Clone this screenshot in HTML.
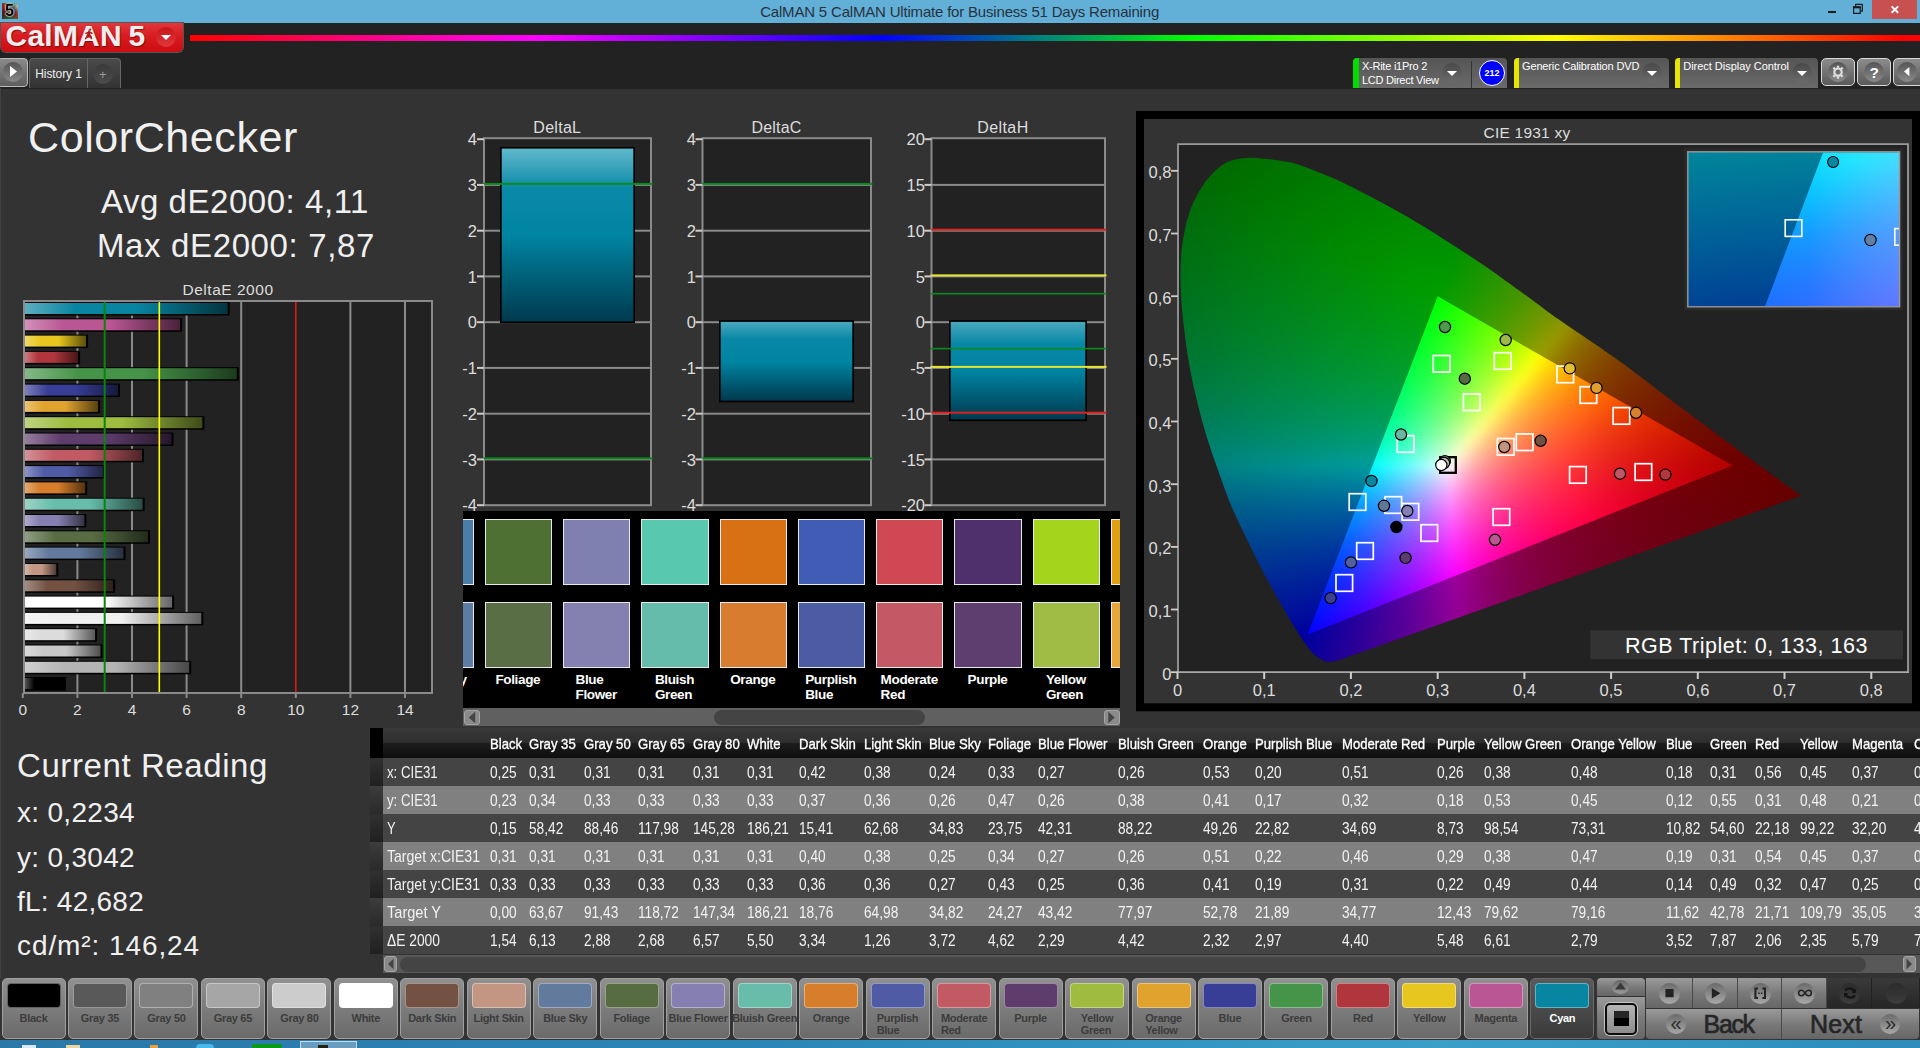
<!DOCTYPE html><html><head><meta charset="utf-8"><title>CalMAN 5</title><style>
html,body{margin:0;padding:0;background:#333;}
body{width:1920px;height:1048px;overflow:hidden;position:relative;font-family:"Liberation Sans",sans-serif;color:#e6e6e6;}
.a{position:absolute;}
.t{position:absolute;white-space:nowrap;line-height:1;}
svg{position:absolute;left:0;top:0;overflow:visible;}
svg text{font-family:"Liberation Sans",sans-serif;}
</style></head><body><div class="a" style="left:0;top:0;width:1920px;height:23px;background:#62afd8"></div><div class="a" style="left:2px;top:3px;width:16px;height:16px;background:radial-gradient(circle,rgba(10,10,10,.85) 25%,rgba(10,10,10,.2) 75%),conic-gradient(from -60deg,#c22,#2a4,#ddd,#c33,#293,#622,#c22);"></div><div class="t" style="left:5px;top:3px;font-size:16px;font-weight:bold;color:#000;text-shadow:0 0 2px #fff,0 0 2px #fff,0 0 1px #fff;">5</div><div class="t" style="left:760.2px;top:4.4px;font-size:15px;color:#28323c;letter-spacing:-0.19px;">CalMAN 5 CalMAN Ultimate for Business 51 Days Remaining</div><div class="a" style="left:1827.8px;top:10.8px;width:8.2px;height:2.3px;background:#1a1a1a"></div><svg width="1920" height="23"><path d="M1853.6 7.6h6.6v5.7h-6.6z" fill="none" stroke="#1a1a1a" stroke-width="1.2"/><path d="M1853 6.1h7.8v2h-7.8z" fill="#1a1a1a"/><path d="M1855.6 6v-1.600h6.700v6.700h-1.600" fill="none" stroke="#1a1a1a" stroke-width="1.2"/></svg><div class="a" style="left:1872px;top:0;width:45px;height:18.8px;background:#c75050"></div><svg width="1920" height="23"><path d="M1891.600 6.400l6.600 6.400M1898.200 6.400l-6.600 6.400" stroke="#fff" stroke-width="2"/></svg>
<div class="a" style="left:0;top:23px;width:1920px;height:65.8px;background:#222"></div><div class="a" style="left:1px;top:23px;width:182px;height:29px;border-radius:0 0 5px 5px;background:linear-gradient(#e0383c,#d81c20 45%,#cc0c10);box-shadow:0 0 0 1px #555;"></div><div class="t" style="left:5.6px;top:20.9px;font-size:30px;font-weight:bold;color:#eee;letter-spacing:0.2px;text-shadow:1px 1px 1px rgba(0,0,0,.4);">CalMAN</div><div class="t" style="left:128.5px;top:20.9px;font-size:30px;font-weight:bold;color:#eee;text-shadow:1px 1px 1px rgba(0,0,0,.4);">5</div><svg width="2" height="60"><g stroke="#b01818" stroke-width="1.5" fill="none" stroke-linecap="round"><circle cx="90.2" cy="29.6" r="1.1" fill="#b01818" stroke="none"/><path d="M89.500 31.4L88.200 35.2M86 33.4l3-1.400 3 1.2M88.200 35.2l-2.600 3.4M88.200 35.2l2.800 1.400.4 2"/></g></svg><div class="a" style="left:156px;top:27px;width:20px;height:20px;border-radius:50%;background:linear-gradient(#c8141c,#e0383c)"></div><svg width="200" height="60"><path d="M161 35h10l-5 5z" fill="#fff"/></svg><div class="a" style="left:190px;top:35px;width:1730px;height:5.5px;background:linear-gradient(90deg,#f00 0%,#f0f 20%,#00f 40%,#0f0 58%,#ff0 79%,#f00 99%)"></div>
<div class="a" style="left:-3px;top:58px;width:29px;height:27px;border-radius:4px;border:1px solid #bbb;background:linear-gradient(#8a8a8a,#5e5e5e)"></div><div class="a" style="left:3px;top:62px;width:20px;height:20px;border-radius:50%;background:linear-gradient(#555,#888)"></div><svg width="40" height="90"><path d="M10 66v11l7-5.5z" fill="#fff"/></svg><div class="a" style="left:29px;top:58px;width:92px;height:30px;border-radius:4px 4px 0 0;border:1px solid #666;border-bottom:none;background:linear-gradient(#4a4a4a,#333);box-sizing:border-box"></div><div class="a" style="left:87px;top:59px;width:1px;height:29px;background:#666"></div><div class="t" style="left:35.3px;top:67.8px;font-size:12px;color:#eee;letter-spacing:-0.1px">History 1</div><div class="a" style="left:93px;top:64px;width:20px;height:20px;border-radius:50%;background:linear-gradient(#3a3a3a,#4c4c4c)"></div><div class="t" style="left:99px;top:68px;font-size:13px;color:#999">+</div><div class="a" style="left:1353px;top:58px;width:154px;height:30px;border-radius:4px 4px 0 0;background:linear-gradient(#555,#6a6a6a);overflow:hidden"><div class="a" style="left:0;top:0;width:6px;height:30px;background:#0d0"></div></div><div class="t" style="left:1361.9px;top:61.0px;font-size:11px;color:#fff;letter-spacing:-0.23px;">X-Rite i1Pro 2</div><div class="t" style="left:1361.9px;top:75.3px;font-size:11px;color:#fff;letter-spacing:-0.24px;">LCD Direct View</div><div class="a" style="left:1442px;top:63px;width:20px;height:20px;border-radius:50%;background:linear-gradient(#484848,#6c6c6c)"></div><svg width="1920" height="90"><path d="M1447 71h10l-5 5z" fill="#fff"/></svg><div class="a" style="left:1471px;top:61px;width:1px;height:27px;background:#333"></div><div class="a" style="left:1479px;top:60px;width:24px;height:24px;border-radius:50%;background:#00f;border:1px solid #fff"></div><div class="t" style="left:1480px;width:24px;text-align:center;top:69px;font-size:9px;font-weight:bold;color:#fff">212</div><div class="a" style="left:1514px;top:58px;width:155px;height:30px;border-radius:4px 4px 0 0;background:linear-gradient(#555,#6a6a6a);overflow:hidden"><div class="a" style="left:0;top:0;width:5px;height:30px;background:#e6e600"></div></div><div class="t" style="left:1522.0px;top:61.0px;font-size:11px;color:#fff;letter-spacing:-0.14px;">Generic Calibration DVD</div><div class="a" style="left:1642px;top:63px;width:20px;height:20px;border-radius:50%;background:linear-gradient(#484848,#6c6c6c)"></div><svg width="1920" height="90"><path d="M1647 71h10l-5 5z" fill="#fff"/></svg><div class="a" style="left:1675px;top:58px;width:143px;height:30px;border-radius:4px 4px 0 0;background:linear-gradient(#555,#6a6a6a);overflow:hidden"><div class="a" style="left:0;top:0;width:5px;height:30px;background:#e6e600"></div></div><div class="t" style="left:1683.3px;top:61.0px;font-size:11px;color:#fff;letter-spacing:-0.03px;">Direct Display Control</div><div class="a" style="left:1792px;top:63px;width:20px;height:20px;border-radius:50%;background:linear-gradient(#484848,#6c6c6c)"></div><svg width="1920" height="90"><path d="M1797 71h10l-5 5z" fill="#fff"/></svg><div class="a" style="left:1821px;top:58px;width:34px;height:28px;border-radius:5px;border:1.3px solid #d8d8d8;box-sizing:border-box;background:linear-gradient(#8c8c8c,#5a5a5a)"></div><div class="a" style="left:1828.0px;top:62px;width:20px;height:20px;border-radius:50%;background:linear-gradient(#555,#8a8a8a)"></div><div class="a" style="left:1857px;top:58px;width:34px;height:28px;border-radius:5px;border:1.3px solid #d8d8d8;box-sizing:border-box;background:linear-gradient(#8c8c8c,#5a5a5a)"></div><div class="a" style="left:1864.2px;top:62px;width:20px;height:20px;border-radius:50%;background:linear-gradient(#555,#8a8a8a)"></div><div class="a" style="left:1893px;top:58px;width:34px;height:28px;border-radius:5px;border:1.3px solid #d8d8d8;box-sizing:border-box;background:linear-gradient(#8c8c8c,#5a5a5a)"></div><div class="a" style="left:1897.0px;top:62px;width:20px;height:20px;border-radius:50%;background:linear-gradient(#555,#8a8a8a)"></div><svg width="1920" height="90"><g transform="translate(1838,72.200)" fill="none" stroke="#e2e2e2"><circle r="3.7" stroke-width="2.1"/><path d="M4.50 0.00L6.50 0." stroke-width="2.3"/><path d="M3.18 3.18L4.60 4.60" stroke-width="2.3"/><path d="M0.00 4.50L0.00 6.50" stroke-width="2.3"/><path d="M-3.18 3.18L-4.60 4.60" stroke-width="2.3"/><path d="M-4.50 0.00L-6.50 0." stroke-width="2.3"/><path d="M-3.18 -3.18L-4.60 -4.60" stroke-width="2.3"/><path d="M-0.00 -4.50L-0.00 -6.50" stroke-width="2.3"/><path d="M3.18 -3.18L4.60 -4.60" stroke-width="2.3"/></g><path d="M1909.400 66.900v9.400l-5.400-4.700z" fill="#fff"/></svg><div class="t" style="left:1869.5px;top:64.6px;font-size:15.5px;color:#fff;font-weight:bold;">?</div>
<div class="a" style="left:0;top:88px;width:1px;height:890px;background:#404040"></div><div class="t" style="left:28.0px;top:116.1px;font-size:43px;color:#f0f0f0;letter-spacing:0.59px;">ColorChecker</div><div class="t" style="left:101.0px;top:184.9px;font-size:33px;color:#f0f0f0;letter-spacing:0.54px;">Avg dE2000: 4,11</div><div class="t" style="left:97.0px;top:229.4px;font-size:33px;color:#f0f0f0;letter-spacing:0.63px;">Max dE2000: 7,87</div><div class="t" style="left:182.5px;top:282.4px;font-size:15.5px;color:#ddd;letter-spacing:0.52px;">DeltaE 2000</div><svg width="1920" height="1048"><rect x="24" y="301" width="408" height="392" fill="#222"/><rect x="76.4" y="301" width="2" height="392" fill="#8a8a8a"/><rect x="131.0" y="301" width="2" height="392" fill="#8a8a8a"/><rect x="185.6" y="301" width="2" height="392" fill="#8a8a8a"/><rect x="240.2" y="301" width="2" height="392" fill="#8a8a8a"/><rect x="349.4" y="301" width="2" height="392" fill="#8a8a8a"/><rect x="404.0" y="301" width="2" height="392" fill="#8a8a8a"/><defs><linearGradient id="b0"><stop offset="0" stop-color="#5eafc1"/><stop offset=".25" stop-color="#0885a1"/><stop offset=".55" stop-color="#0885a1"/><stop offset="1" stop-color="#033540"/></linearGradient><linearGradient id="b1"><stop offset="0" stop-color="#d291ba"/><stop offset=".25" stop-color="#bb5695"/><stop offset=".55" stop-color="#bb5695"/><stop offset="1" stop-color="#4a223b"/></linearGradient><linearGradient id="b2"><stop offset="0" stop-color="#efda6d"/><stop offset=".25" stop-color="#e7c71f"/><stop offset=".55" stop-color="#e7c71f"/><stop offset="1" stop-color="#5c4f0c"/></linearGradient><linearGradient id="b3"><stop offset="0" stop-color="#cb7c80"/><stop offset=".25" stop-color="#af363c"/><stop offset=".55" stop-color="#af363c"/><stop offset="1" stop-color="#461518"/></linearGradient><linearGradient id="b4"><stop offset="0" stop-color="#86b988"/><stop offset=".25" stop-color="#469449"/><stop offset=".55" stop-color="#469449"/><stop offset="1" stop-color="#1c3b1d"/></linearGradient><linearGradient id="b5"><stop offset="0" stop-color="#7d80ba"/><stop offset=".25" stop-color="#383d96"/><stop offset=".55" stop-color="#383d96"/><stop offset="1" stop-color="#16183c"/></linearGradient><linearGradient id="b6"><stop offset="0" stop-color="#eac377"/><stop offset=".25" stop-color="#e0a32e"/><stop offset=".55" stop-color="#e0a32e"/><stop offset="1" stop-color="#594112"/></linearGradient><linearGradient id="b7"><stop offset="0" stop-color="#bfd382"/><stop offset=".25" stop-color="#9dbc40"/><stop offset=".55" stop-color="#9dbc40"/><stop offset="1" stop-color="#3e4b19"/></linearGradient><linearGradient id="b8"><stop offset="0" stop-color="#96809f"/><stop offset=".25" stop-color="#5e3c6c"/><stop offset=".55" stop-color="#5e3c6c"/><stop offset="1" stop-color="#25182b"/></linearGradient><linearGradient id="b9"><stop offset="0" stop-color="#d69399"/><stop offset=".25" stop-color="#c15a63"/><stop offset=".55" stop-color="#c15a63"/><stop offset="1" stop-color="#4d2427"/></linearGradient><linearGradient id="b10"><stop offset="0" stop-color="#8d94c5"/><stop offset=".25" stop-color="#505ba6"/><stop offset=".55" stop-color="#505ba6"/><stop offset="1" stop-color="#202442"/></linearGradient><linearGradient id="b11"><stop offset="0" stop-color="#e4ab75"/><stop offset=".25" stop-color="#d67e2c"/><stop offset=".55" stop-color="#d67e2c"/><stop offset="1" stop-color="#553211"/></linearGradient><linearGradient id="b12"><stop offset="0" stop-color="#9cd4c7"/><stop offset=".25" stop-color="#67bdaa"/><stop offset=".55" stop-color="#67bdaa"/><stop offset="1" stop-color="#294b44"/></linearGradient><linearGradient id="b13"><stop offset="0" stop-color="#afaccc"/><stop offset=".25" stop-color="#8580b1"/><stop offset=".55" stop-color="#8580b1"/><stop offset="1" stop-color="#353346"/></linearGradient><linearGradient id="b14"><stop offset="0" stop-color="#919f84"/><stop offset=".25" stop-color="#576c43"/><stop offset=".55" stop-color="#576c43"/><stop offset="1" stop-color="#222b1a"/></linearGradient><linearGradient id="b15"><stop offset="0" stop-color="#98a8bf"/><stop offset=".25" stop-color="#627a9d"/><stop offset=".55" stop-color="#627a9d"/><stop offset="1" stop-color="#27303e"/></linearGradient><linearGradient id="b16"><stop offset="0" stop-color="#d7baad"/><stop offset=".25" stop-color="#c29682"/><stop offset=".55" stop-color="#c29682"/><stop offset="1" stop-color="#4d3c34"/></linearGradient><linearGradient id="b17"><stop offset="0" stop-color="#a48e85"/><stop offset=".25" stop-color="#735244"/><stop offset=".55" stop-color="#735244"/><stop offset="1" stop-color="#2e201b"/></linearGradient><linearGradient id="b18"><stop offset="0" stop-color="#ffffff"/><stop offset=".25" stop-color="#ffffff"/><stop offset=".55" stop-color="#ffffff"/><stop offset="1" stop-color="#666666"/></linearGradient><linearGradient id="b19"><stop offset="0" stop-color="#f5f5f5"/><stop offset=".25" stop-color="#f0f0f0"/><stop offset=".55" stop-color="#f0f0f0"/><stop offset="1" stop-color="#606060"/></linearGradient><linearGradient id="b20"><stop offset="0" stop-color="#e8e8e8"/><stop offset=".25" stop-color="#dcdcdc"/><stop offset=".55" stop-color="#dcdcdc"/><stop offset="1" stop-color="#585858"/></linearGradient><linearGradient id="b21"><stop offset="0" stop-color="#dbdbdb"/><stop offset=".25" stop-color="#c8c8c8"/><stop offset=".55" stop-color="#c8c8c8"/><stop offset="1" stop-color="#505050"/></linearGradient><linearGradient id="b22"><stop offset="0" stop-color="#cecece"/><stop offset=".25" stop-color="#b4b4b4"/><stop offset=".55" stop-color="#b4b4b4"/><stop offset="1" stop-color="#484848"/></linearGradient><linearGradient id="b23"><stop offset="0" stop-color="#595959"/><stop offset=".25" stop-color="#000000"/><stop offset=".55" stop-color="#000000"/><stop offset="1" stop-color="#000000"/></linearGradient></defs><rect x="24" y="302.0" width="205.7" height="13.5" fill="#000"/><rect x="24.5" y="303.0" width="203.2" height="11" fill="url(#b0)"/><rect x="24" y="318.3" width="158.0" height="13.5" fill="#000"/><rect x="24.5" y="319.3" width="155.5" height="11" fill="url(#b1)"/><rect x="24" y="334.6" width="64.1" height="13.5" fill="#000"/><rect x="24.5" y="335.6" width="61.6" height="11" fill="url(#b2)"/><rect x="24" y="350.9" width="56.1" height="13.5" fill="#000"/><rect x="24.5" y="351.9" width="53.6" height="11" fill="url(#b3)"/><rect x="24" y="367.2" width="214.8" height="13.5" fill="#000"/><rect x="24.5" y="368.2" width="212.3" height="11" fill="url(#b4)"/><rect x="24" y="383.6" width="96.0" height="13.5" fill="#000"/><rect x="24.5" y="384.6" width="93.5" height="11" fill="url(#b5)"/><rect x="24" y="399.9" width="76.1" height="13.5" fill="#000"/><rect x="24.5" y="400.9" width="73.6" height="11" fill="url(#b6)"/><rect x="24" y="416.2" width="180.4" height="13.5" fill="#000"/><rect x="24.5" y="417.2" width="177.9" height="11" fill="url(#b7)"/><rect x="24" y="432.5" width="149.5" height="13.5" fill="#000"/><rect x="24.5" y="433.5" width="147.0" height="11" fill="url(#b8)"/><rect x="24" y="448.8" width="120.0" height="13.5" fill="#000"/><rect x="24.5" y="449.8" width="117.5" height="11" fill="url(#b9)"/><rect x="24" y="465.1" width="81.0" height="13.5" fill="#000"/><rect x="24.5" y="466.1" width="78.5" height="11" fill="url(#b10)"/><rect x="24" y="481.4" width="63.2" height="13.5" fill="#000"/><rect x="24.5" y="482.4" width="60.7" height="11" fill="url(#b11)"/><rect x="24" y="497.7" width="120.6" height="13.5" fill="#000"/><rect x="24.5" y="498.7" width="118.1" height="11" fill="url(#b12)"/><rect x="24" y="514.0" width="62.4" height="13.5" fill="#000"/><rect x="24.5" y="515.0" width="59.9" height="11" fill="url(#b13)"/><rect x="24" y="530.3" width="126.0" height="13.5" fill="#000"/><rect x="24.5" y="531.3" width="123.5" height="11" fill="url(#b14)"/><rect x="24" y="546.6" width="101.5" height="13.5" fill="#000"/><rect x="24.5" y="547.6" width="99.0" height="11" fill="url(#b15)"/><rect x="24" y="563.0" width="34.3" height="13.5" fill="#000"/><rect x="24.5" y="564.0" width="31.8" height="11" fill="url(#b16)"/><rect x="24" y="579.3" width="91.1" height="13.5" fill="#000"/><rect x="24.5" y="580.3" width="88.6" height="11" fill="url(#b17)"/><rect x="24" y="595.6" width="150.1" height="13.5" fill="#000"/><rect x="24.5" y="596.6" width="147.6" height="11" fill="url(#b18)"/><rect x="24" y="611.9" width="179.3" height="13.5" fill="#000"/><rect x="24.5" y="612.9" width="176.8" height="11" fill="url(#b19)"/><rect x="24" y="628.2" width="73.1" height="13.5" fill="#000"/><rect x="24.5" y="629.2" width="70.6" height="11" fill="url(#b20)"/><rect x="24" y="644.5" width="78.5" height="13.5" fill="#000"/><rect x="24.5" y="645.5" width="76.0" height="11" fill="url(#b21)"/><rect x="24" y="660.8" width="167.2" height="13.5" fill="#000"/><rect x="24.5" y="661.8" width="164.7" height="11" fill="url(#b22)"/><rect x="24" y="677.1" width="41.9" height="13.5" fill="#000"/><rect x="24.5" y="678.1" width="39.4" height="11" fill="url(#b23)"/><rect x="103.7" y="301" width="2" height="392" fill="#0a840a"/><rect x="158.5" y="301" width="1.6" height="392" fill="#ff0"/><rect x="295.0" y="301" width="1.6" height="392" fill="#e01818"/><path d="M24 693V301H432V693" fill="none" stroke="#8a8a8a" stroke-width="2"/><path d="M23 693H433" stroke="#8a8a8a" stroke-width="2"/><rect x="21.8" y="693" width="2" height="5" fill="#8a8a8a"/><rect x="76.4" y="693" width="2" height="5" fill="#8a8a8a"/><rect x="131.0" y="693" width="2" height="5" fill="#8a8a8a"/><rect x="185.6" y="693" width="2" height="5" fill="#8a8a8a"/><rect x="240.2" y="693" width="2" height="5" fill="#8a8a8a"/><rect x="294.8" y="693" width="2" height="5" fill="#8a8a8a"/><rect x="349.4" y="693" width="2" height="5" fill="#8a8a8a"/><rect x="404.0" y="693" width="2" height="5" fill="#8a8a8a"/></svg><div class="t" style="left:18.5px;top:702.2px;font-size:15.5px;color:#ddd;">0</div><div class="t" style="left:73.1px;top:702.2px;font-size:15.5px;color:#ddd;">2</div><div class="t" style="left:127.7px;top:702.2px;font-size:15.5px;color:#ddd;">4</div><div class="t" style="left:182.3px;top:702.2px;font-size:15.5px;color:#ddd;">6</div><div class="t" style="left:236.9px;top:702.2px;font-size:15.5px;color:#ddd;">8</div><div class="t" style="left:287.2px;top:702.2px;font-size:15.5px;color:#ddd;">10</div><div class="t" style="left:341.8px;top:702.2px;font-size:15.5px;color:#ddd;">12</div><div class="t" style="left:396.4px;top:702.2px;font-size:15.5px;color:#ddd;">14</div><div class="t" style="left:17.0px;top:748.6px;font-size:33px;color:#f0f0f0;letter-spacing:0.59px;">Current Reading</div><div class="t" style="left:17.0px;top:799.3px;font-size:28px;color:#f0f0f0;letter-spacing:0.31px;">x: 0,2234</div><div class="t" style="left:17.0px;top:843.6px;font-size:28px;color:#f0f0f0;letter-spacing:0.31px;">y: 0,3042</div><div class="t" style="left:17.0px;top:888.3px;font-size:28px;color:#f0f0f0;letter-spacing:0.24px;">fL: 42,682</div><div class="t" style="left:17.0px;top:932.3px;font-size:28px;color:#f0f0f0;letter-spacing:0.91px;">cd/m²: 146,24</div>
<svg width="1920" height="1048"><defs><linearGradient id="cy" x1="0" y1="0" x2="0" y2="1"><stop offset="0" stop-color="#5eb8cc"/><stop offset=".1" stop-color="#3ea4bc"/><stop offset=".23" stop-color="#0a89a7"/><stop offset=".5" stop-color="#0085a3"/><stop offset="1" stop-color="#003a4e"/></linearGradient><linearGradient id="cy2" x1="0" y1="0" x2="0" y2="1"><stop offset="0" stop-color="#4aa8be"/><stop offset=".22" stop-color="#0888a6"/><stop offset=".5" stop-color="#0085a3"/><stop offset="1" stop-color="#003a4e"/></linearGradient></defs><rect x="484.0" y="138.7" width="167.0" height="366" fill="#222"/><rect x="484.0" y="458.4" width="167.0" height="2" fill="#8a8a8a"/><rect x="484.0" y="412.7" width="167.0" height="2" fill="#8a8a8a"/><rect x="484.0" y="366.9" width="167.0" height="2" fill="#8a8a8a"/><rect x="484.0" y="321.2" width="167.0" height="2" fill="#8a8a8a"/><rect x="484.0" y="275.4" width="167.0" height="2" fill="#8a8a8a"/><rect x="484.0" y="229.7" width="167.0" height="2" fill="#8a8a8a"/><rect x="484.0" y="183.9" width="167.0" height="2" fill="#8a8a8a"/><rect x="500.0" y="146.9" width="135.0" height="176.3" fill="#000"/><rect x="501.7" y="148.6" width="131.6" height="172.9" fill="url(#cy)"/><rect x="484.0" y="138.2" width="167.0" height="367" fill="none" stroke="#8a8a8a" stroke-width="2"/><rect x="483.0" y="182.9" width="169.5" height="2.0" fill="#0a8a1a"/><rect x="483.0" y="457.4" width="169.5" height="2.0" fill="#0a8a1a"/><rect x="477.0" y="504.2" width="7" height="2" fill="#ccc"/><rect x="477.0" y="458.4" width="7" height="2" fill="#ccc"/><rect x="477.0" y="412.7" width="7" height="2" fill="#ccc"/><rect x="477.0" y="366.9" width="7" height="2" fill="#ccc"/><rect x="477.0" y="321.2" width="7" height="2" fill="#ccc"/><rect x="477.0" y="275.4" width="7" height="2" fill="#ccc"/><rect x="477.0" y="229.7" width="7" height="2" fill="#ccc"/><rect x="477.0" y="183.9" width="7" height="2" fill="#ccc"/><rect x="477.0" y="138.2" width="7" height="2" fill="#ccc"/><rect x="702.5" y="138.7" width="168.5" height="366" fill="#222"/><rect x="702.5" y="458.4" width="168.5" height="2" fill="#8a8a8a"/><rect x="702.5" y="412.7" width="168.5" height="2" fill="#8a8a8a"/><rect x="702.5" y="366.9" width="168.5" height="2" fill="#8a8a8a"/><rect x="702.5" y="321.2" width="168.5" height="2" fill="#8a8a8a"/><rect x="702.5" y="275.4" width="168.5" height="2" fill="#8a8a8a"/><rect x="702.5" y="229.7" width="168.5" height="2" fill="#8a8a8a"/><rect x="702.5" y="183.9" width="168.5" height="2" fill="#8a8a8a"/><rect x="719.0" y="320.2" width="135.0" height="82.1" fill="#000"/><rect x="720.7" y="321.9" width="131.6" height="78.7" fill="url(#cy2)"/><rect x="702.5" y="138.2" width="168.5" height="367" fill="none" stroke="#8a8a8a" stroke-width="2"/><rect x="701.5" y="182.9" width="171.0" height="2.0" fill="#0a8a1a"/><rect x="701.5" y="457.4" width="171.0" height="2.0" fill="#0a8a1a"/><rect x="695.5" y="504.2" width="7" height="2" fill="#ccc"/><rect x="695.5" y="458.4" width="7" height="2" fill="#ccc"/><rect x="695.5" y="412.7" width="7" height="2" fill="#ccc"/><rect x="695.5" y="366.9" width="7" height="2" fill="#ccc"/><rect x="695.5" y="321.2" width="7" height="2" fill="#ccc"/><rect x="695.5" y="275.4" width="7" height="2" fill="#ccc"/><rect x="695.5" y="229.7" width="7" height="2" fill="#ccc"/><rect x="695.5" y="183.9" width="7" height="2" fill="#ccc"/><rect x="695.5" y="138.2" width="7" height="2" fill="#ccc"/><rect x="931.5" y="138.7" width="173.5" height="366" fill="#222"/><rect x="931.5" y="458.4" width="173.5" height="2" fill="#8a8a8a"/><rect x="931.5" y="412.7" width="173.5" height="2" fill="#8a8a8a"/><rect x="931.5" y="366.9" width="173.5" height="2" fill="#8a8a8a"/><rect x="931.5" y="321.2" width="173.5" height="2" fill="#8a8a8a"/><rect x="931.5" y="275.4" width="173.5" height="2" fill="#8a8a8a"/><rect x="931.5" y="229.7" width="173.5" height="2" fill="#8a8a8a"/><rect x="931.5" y="183.9" width="173.5" height="2" fill="#8a8a8a"/><rect x="949.0" y="320.2" width="138.0" height="100.9" fill="#000"/><rect x="950.7" y="321.9" width="134.6" height="97.5" fill="url(#cy2)"/><rect x="931.5" y="138.2" width="173.5" height="367" fill="none" stroke="#8a8a8a" stroke-width="2"/><rect x="930.5" y="228.7" width="176.0" height="2.0" fill="#e02020"/><rect x="930.5" y="411.7" width="176.0" height="2.0" fill="#e02020"/><rect x="930.5" y="274.4" width="176.0" height="2.0" fill="#e6e632"/><rect x="930.5" y="365.9" width="176.0" height="2.0" fill="#e6e632"/><rect x="930.5" y="292.9" width="176.0" height="1.6" fill="#0a8a1a"/><rect x="930.5" y="347.8" width="176.0" height="1.6" fill="#0a8a1a"/><rect x="924.5" y="504.2" width="7" height="2" fill="#ccc"/><rect x="924.5" y="458.4" width="7" height="2" fill="#ccc"/><rect x="924.5" y="412.7" width="7" height="2" fill="#ccc"/><rect x="924.5" y="366.9" width="7" height="2" fill="#ccc"/><rect x="924.5" y="321.2" width="7" height="2" fill="#ccc"/><rect x="924.5" y="275.4" width="7" height="2" fill="#ccc"/><rect x="924.5" y="229.7" width="7" height="2" fill="#ccc"/><rect x="924.5" y="183.9" width="7" height="2" fill="#ccc"/><rect x="924.5" y="138.2" width="7" height="2" fill="#ccc"/></svg><div class="t" style="left:533.3px;top:119.5px;font-size:16px;color:#ddd;letter-spacing:0.29px;">DeltaL</div><div class="t" style="left:751.6px;top:119.5px;font-size:16px;color:#ddd;letter-spacing:0.15px;">DeltaC</div><div class="t" style="left:977.2px;top:119.5px;font-size:16px;color:#ddd;letter-spacing:0.43px;">DeltaH</div><div class="t" style="left:462.3px;top:497.4px;font-size:16.5px;color:#ddd;">-4</div><div class="t" style="left:462.3px;top:451.7px;font-size:16.5px;color:#ddd;">-3</div><div class="t" style="left:462.3px;top:405.9px;font-size:16.5px;color:#ddd;">-2</div><div class="t" style="left:462.3px;top:360.2px;font-size:16.5px;color:#ddd;">-1</div><div class="t" style="left:467.8px;top:314.4px;font-size:16.5px;color:#ddd;">0</div><div class="t" style="left:467.8px;top:268.7px;font-size:16.5px;color:#ddd;">1</div><div class="t" style="left:467.8px;top:222.9px;font-size:16.5px;color:#ddd;">2</div><div class="t" style="left:467.8px;top:177.2px;font-size:16.5px;color:#ddd;">3</div><div class="t" style="left:467.8px;top:131.4px;font-size:16.5px;color:#ddd;">4</div><div class="t" style="left:681.3px;top:497.4px;font-size:16.5px;color:#ddd;">-4</div><div class="t" style="left:681.3px;top:451.7px;font-size:16.5px;color:#ddd;">-3</div><div class="t" style="left:681.3px;top:405.9px;font-size:16.5px;color:#ddd;">-2</div><div class="t" style="left:681.3px;top:360.2px;font-size:16.5px;color:#ddd;">-1</div><div class="t" style="left:686.8px;top:314.4px;font-size:16.5px;color:#ddd;">0</div><div class="t" style="left:686.8px;top:268.7px;font-size:16.5px;color:#ddd;">1</div><div class="t" style="left:686.8px;top:222.9px;font-size:16.5px;color:#ddd;">2</div><div class="t" style="left:686.8px;top:177.2px;font-size:16.5px;color:#ddd;">3</div><div class="t" style="left:686.8px;top:131.4px;font-size:16.5px;color:#ddd;">4</div><div class="t" style="left:901.2px;top:497.4px;font-size:16.5px;color:#ddd;">-20</div><div class="t" style="left:901.2px;top:451.7px;font-size:16.5px;color:#ddd;">-15</div><div class="t" style="left:901.2px;top:405.9px;font-size:16.5px;color:#ddd;">-10</div><div class="t" style="left:910.3px;top:360.2px;font-size:16.5px;color:#ddd;">-5</div><div class="t" style="left:915.8px;top:314.4px;font-size:16.5px;color:#ddd;">0</div><div class="t" style="left:915.8px;top:268.7px;font-size:16.5px;color:#ddd;">5</div><div class="t" style="left:906.6px;top:222.9px;font-size:16.5px;color:#ddd;">10</div><div class="t" style="left:906.6px;top:177.2px;font-size:16.5px;color:#ddd;">15</div><div class="t" style="left:906.6px;top:131.4px;font-size:16.5px;color:#ddd;">20</div>
<div class="a" style="left:463px;top:511px;width:657px;height:198px;background:#000;overflow:hidden"><div class="a" style="left:-56.6px;top:8.0px;width:67.3px;height:65.5px;box-sizing:border-box;border:1px solid #e8e8e8;background:#4a7ea8"></div><div class="a" style="left:-56.6px;top:91.2px;width:67.3px;height:65.5px;box-sizing:border-box;border:1px solid #e8e8e8;background:#5c7ca4"></div><div class="t" style="left:-50.6px;top:161.6px;font-size:13.5px;font-weight:bold;color:#fff;letter-spacing:-0.35px">Blue Sky</div><div class="a" style="left:21.7px;top:8.0px;width:67.3px;height:65.5px;box-sizing:border-box;border:1px solid #e8e8e8;background:#4f7033"></div><div class="a" style="left:21.7px;top:91.2px;width:67.3px;height:65.5px;box-sizing:border-box;border:1px solid #e8e8e8;background:#5a6e46"></div><div class="t" style="left:32.4px;top:161.6px;font-size:13.5px;font-weight:bold;color:#fff;letter-spacing:-0.35px">Foliage</div><div class="a" style="left:100.0px;top:8.0px;width:67.3px;height:65.5px;box-sizing:border-box;border:1px solid #e8e8e8;background:#8080b0"></div><div class="a" style="left:100.0px;top:91.2px;width:67.3px;height:65.5px;box-sizing:border-box;border:1px solid #e8e8e8;background:#8480b0"></div><div class="t" style="left:112.5px;top:161.6px;font-size:13.5px;font-weight:bold;color:#fff;letter-spacing:-0.35px">Blue</div><div class="t" style="left:112.5px;top:176.6px;font-size:13.5px;font-weight:bold;color:#fff;letter-spacing:-0.35px">Flower</div><div class="a" style="left:178.3px;top:8.0px;width:67.3px;height:65.5px;box-sizing:border-box;border:1px solid #e8e8e8;background:#58c8ae"></div><div class="a" style="left:178.3px;top:91.2px;width:67.3px;height:65.5px;box-sizing:border-box;border:1px solid #e8e8e8;background:#66bcaa"></div><div class="t" style="left:191.9px;top:161.6px;font-size:13.5px;font-weight:bold;color:#fff;letter-spacing:-0.35px">Bluish</div><div class="t" style="left:191.9px;top:176.6px;font-size:13.5px;font-weight:bold;color:#fff;letter-spacing:-0.35px">Green</div><div class="a" style="left:256.5px;top:8.0px;width:67.3px;height:65.5px;box-sizing:border-box;border:1px solid #e8e8e8;background:#d87014"></div><div class="a" style="left:256.5px;top:91.2px;width:67.3px;height:65.5px;box-sizing:border-box;border:1px solid #e8e8e8;background:#d87c30"></div><div class="t" style="left:267.2px;top:161.6px;font-size:13.5px;font-weight:bold;color:#fff;letter-spacing:-0.35px">Orange</div><div class="a" style="left:334.8px;top:8.0px;width:67.3px;height:65.5px;box-sizing:border-box;border:1px solid #e8e8e8;background:#405cb4"></div><div class="a" style="left:334.8px;top:91.2px;width:67.3px;height:65.5px;box-sizing:border-box;border:1px solid #e8e8e8;background:#4c5ca4"></div><div class="t" style="left:342.2px;top:161.6px;font-size:13.5px;font-weight:bold;color:#fff;letter-spacing:-0.35px">Purplish</div><div class="t" style="left:342.2px;top:176.6px;font-size:13.5px;font-weight:bold;color:#fff;letter-spacing:-0.35px">Blue</div><div class="a" style="left:413.1px;top:8.0px;width:67.3px;height:65.5px;box-sizing:border-box;border:1px solid #e8e8e8;background:#d04854"></div><div class="a" style="left:413.1px;top:91.2px;width:67.3px;height:65.5px;box-sizing:border-box;border:1px solid #e8e8e8;background:#c45864"></div><div class="t" style="left:417.6px;top:161.6px;font-size:13.5px;font-weight:bold;color:#fff;letter-spacing:-0.35px">Moderate</div><div class="t" style="left:417.6px;top:176.6px;font-size:13.5px;font-weight:bold;color:#fff;letter-spacing:-0.35px">Red</div><div class="a" style="left:491.4px;top:8.0px;width:67.3px;height:65.5px;box-sizing:border-box;border:1px solid #e8e8e8;background:#50306c"></div><div class="a" style="left:491.4px;top:91.2px;width:67.3px;height:65.5px;box-sizing:border-box;border:1px solid #e8e8e8;background:#5e3e6e"></div><div class="t" style="left:504.6px;top:161.6px;font-size:13.5px;font-weight:bold;color:#fff;letter-spacing:-0.35px">Purple</div><div class="a" style="left:569.7px;top:8.0px;width:67.3px;height:65.5px;box-sizing:border-box;border:1px solid #e8e8e8;background:#a4d41c"></div><div class="a" style="left:569.7px;top:91.2px;width:67.3px;height:65.5px;box-sizing:border-box;border:1px solid #e8e8e8;background:#a0bc44"></div><div class="t" style="left:582.9px;top:161.6px;font-size:13.5px;font-weight:bold;color:#fff;letter-spacing:-0.35px">Yellow</div><div class="t" style="left:582.9px;top:176.6px;font-size:13.5px;font-weight:bold;color:#fff;letter-spacing:-0.35px">Green</div><div class="a" style="left:647.9px;top:8.0px;width:67.3px;height:65.5px;box-sizing:border-box;border:1px solid #e8e8e8;background:#e0a010"></div><div class="a" style="left:647.9px;top:91.2px;width:67.3px;height:65.5px;box-sizing:border-box;border:1px solid #e8e8e8;background:#e8a838"></div><div class="t" style="left:658.6px;top:161.6px;font-size:13.5px;font-weight:bold;color:#fff;letter-spacing:-0.35px">Orange</div><div class="t" style="left:658.6px;top:176.6px;font-size:13.5px;font-weight:bold;color:#fff;letter-spacing:-0.35px">Yellow</div></div><div class="a" style="left:463px;top:708.2px;width:657px;height:17.8px;background:#606060"></div><div class="a" style="left:714px;top:710px;width:211px;height:15px;border-radius:7.5px;background:#444"></div><div class="a" style="left:464.0px;top:709.7px;width:16px;height:15.6px;background:#8a8a8a;border:1px solid #a4a4a4;box-sizing:border-box;border-radius:3px"></div><div class="a" style="left:1103.5px;top:709.7px;width:16px;height:15.6px;background:#8a8a8a;border:1px solid #a4a4a4;box-sizing:border-box;border-radius:3px"></div><svg width="1920" height="1048"><path d="M475.2 711.8v11.4l-6.400-5.7z" fill="#444"/><path d="M1108.3 711.8v11.4l6.400-5.7z" fill="#444"/></svg>
<svg width="1920" height="1048"><rect x="1140" y="115" width="776" height="592.3" fill="none" stroke="#000" stroke-width="8"/><rect x="1178" y="144" width="730" height="528" fill="#222"/><defs><clipPath id="hs"><path d="M1801.0 495.8C1790.4 488.1 1759.3 465.6 1737.5 449.5C1715.7 433.4 1689.6 414.0 1670.0 399.3C1650.4 384.6 1638.3 374.7 1620.0 361.5C1601.7 348.3 1574.6 330.6 1560.0 320.3C1545.4 310.1 1545.5 309.6 1532.2 300.0C1518.9 290.4 1498.7 275.3 1480.0 262.7C1461.3 250.1 1434.7 233.4 1420.0 224.3C1405.3 215.2 1401.6 213.5 1391.6 208.0C1381.6 202.5 1370.2 196.3 1360.0 191.2C1349.8 186.0 1340.5 181.4 1330.5 177.1C1320.5 172.8 1307.3 167.8 1300.0 165.2C1292.7 162.6 1291.6 162.8 1286.9 161.8C1282.2 160.9 1276.7 160.1 1271.6 159.5C1266.5 158.9 1260.6 158.3 1256.3 158.0C1252.0 157.7 1249.1 157.7 1245.6 157.9C1242.0 158.2 1238.5 158.5 1235.0 159.5C1231.5 160.5 1227.7 161.7 1224.3 163.7C1220.9 165.7 1217.6 168.3 1214.4 171.4C1211.2 174.5 1208.1 178.0 1205.2 182.1C1202.3 186.2 1199.3 191.0 1196.8 195.8C1194.2 200.6 1191.9 205.4 1189.9 211.1C1187.9 216.8 1186.2 223.5 1184.8 230.0C1183.4 236.5 1182.3 243.3 1181.6 250.0C1180.9 256.7 1180.6 263.3 1180.5 270.0C1180.4 276.7 1180.5 283.3 1180.8 290.0C1181.1 296.7 1181.4 302.2 1182.1 310.0C1182.8 317.8 1183.8 326.8 1185.1 336.8C1186.4 346.8 1188.1 358.9 1190.2 370.0C1192.3 381.1 1194.8 392.3 1197.6 403.4C1200.3 414.5 1203.3 425.7 1206.7 436.8C1210.1 447.9 1214.1 459.1 1218.0 470.1C1221.9 481.1 1225.6 492.3 1230.0 503.0C1234.4 513.7 1239.2 523.3 1244.4 534.3C1249.7 545.2 1255.5 557.2 1261.5 568.7C1267.5 580.2 1274.7 593.0 1280.4 603.0C1286.1 613.0 1291.1 621.6 1295.5 628.8C1299.9 636.0 1303.5 641.4 1307.0 646.0C1310.5 650.6 1313.1 653.7 1316.5 656.3C1319.9 658.9 1323.5 661.1 1327.2 661.7C1331.0 662.3 1334.4 661.2 1339.0 660.0C1343.6 658.8 1352.0 655.5 1354.6 654.6Z"/></clipPath>
<clipPath id="tri"><polygon points="1732.5,465.4 1437.7,296.2 1307.6,634.6"/></clipPath>
<filter id="bl" color-interpolation-filters="sRGB" x="-5%" y="-5%" width="110%" height="110%"><feGaussianBlur stdDeviation="3.024"/><feGaussianBlur stdDeviation="3.024"/></filter></defs>
<g clip-path="url(#hs)"><g filter="url(#bl)"><path d="M1225 138h9v9h-9z" fill="#006800"/><path d="M1233 138h9v9h-9z" fill="#006900"/><path d="M1241 138h9v9h-9z" fill="#006a00"/><path d="M1249 138h9v9h-9z" fill="#006b00"/><path d="M1257 138h9v9h-9z" fill="#006c00"/><path d="M1265 138h9v9h-9z" fill="#006d00"/><path d="M1273 138h9v9h-9z" fill="#006d00"/><path d="M1209 146h9v9h-9z" fill="#006700"/><path d="M1217 146h9v9h-9z" fill="#006800"/><path d="M1225 146h9v9h-9z" fill="#006900"/><path d="M1233 146h9v9h-9z" fill="#006a00"/><path d="M1241 146h9v9h-9z" fill="#006b00"/><path d="M1249 146h9v9h-9z" fill="#006c00"/><path d="M1257 146h9v9h-9z" fill="#006d00"/><path d="M1265 146h9v9h-9z" fill="#006e00"/><path d="M1273 146h9v9h-9z" fill="#006f00"/><path d="M1281 146h9v9h-9z" fill="#007000"/><path d="M1289 146h9v9h-9z" fill="#007100"/><path d="M1297 146h9v9h-9z" fill="#007200"/><path d="M1305 146h9v9h-9z" fill="#007200"/><path d="M1201 154h9v9h-9z" fill="#006700"/><path d="M1209 154h9v9h-9z" fill="#006800"/><path d="M1217 154h9v9h-9z" fill="#006900"/><path d="M1225 154h9v9h-9z" fill="#006b00"/><path d="M1233 154h9v9h-9z" fill="#006c00"/><path d="M1241 154h9v9h-9z" fill="#006d00"/><path d="M1249 154h9v9h-9z" fill="#006e00"/><path d="M1257 154h9v9h-9z" fill="#006f00"/><path d="M1265 154h9v9h-9z" fill="#007000"/><path d="M1273 154h9v9h-9z" fill="#007100"/><path d="M1281 154h9v9h-9z" fill="#007200"/><path d="M1289 154h9v9h-9z" fill="#007200"/><path d="M1297 154h9v9h-9z" fill="#007300"/><path d="M1305 154h9v9h-9z" fill="#007400"/><path d="M1313 154h9v9h-9z" fill="#007500"/><path d="M1321 154h9v9h-9z" fill="#007600"/><path d="M1329 154h9v9h-9z" fill="#007600"/><path d="M1193 162h9v9h-9z" fill="#006701"/><path d="M1201 162h9v9h-9z" fill="#006800"/><path d="M1209 162h9v9h-9z" fill="#006a00"/><path d="M1217 162h9v9h-9z" fill="#006b00"/><path d="M1225 162h9v9h-9z" fill="#006c00"/><path d="M1233 162h9v9h-9z" fill="#006d00"/><path d="M1241 162h9v9h-9z" fill="#006e00"/><path d="M1249 162h9v9h-9z" fill="#006f00"/><path d="M1257 162h9v9h-9z" fill="#007000"/><path d="M1265 162h9v9h-9z" fill="#007100"/><path d="M1273 162h9v9h-9z" fill="#007200"/><path d="M1281 162h9v9h-9z" fill="#007300"/><path d="M1289 162h9v9h-9z" fill="#007400"/><path d="M1297 162h9v9h-9z" fill="#007500"/><path d="M1305 162h9v9h-9z" fill="#007600"/><path d="M1313 162h9v9h-9z" fill="#070"/><path d="M1321 162h9v9h-9z" fill="#070"/><path d="M1329 162h9v9h-9z" fill="#007800"/><path d="M1337 162h9v9h-9z" fill="#007900"/><path d="M1345 162h9v9h-9z" fill="#007a00"/><path d="M1185 170h9v9h-9z" fill="#006703"/><path d="M1193 170h9v9h-9z" fill="#006802"/><path d="M1201 170h9v9h-9z" fill="#006a02"/><path d="M1209 170h9v9h-9z" fill="#006b01"/><path d="M1217 170h9v9h-9z" fill="#006c00"/><path d="M1225 170h9v9h-9z" fill="#006d00"/><path d="M1233 170h9v9h-9z" fill="#006e00"/><path d="M1241 170h9v9h-9z" fill="#006f00"/><path d="M1249 170h9v9h-9z" fill="#007000"/><path d="M1257 170h9v9h-9z" fill="#007200"/><path d="M1265 170h9v9h-9z" fill="#007300"/><path d="M1273 170h9v9h-9z" fill="#007400"/><path d="M1281 170h9v9h-9z" fill="#007500"/><path d="M1289 170h9v9h-9z" fill="#007600"/><path d="M1297 170h9v9h-9z" fill="#007600"/><path d="M1305 170h9v9h-9z" fill="#070"/><path d="M1313 170h9v9h-9z" fill="#007800"/><path d="M1321 170h9v9h-9z" fill="#007900"/><path d="M1329 170h9v9h-9z" fill="#007a00"/><path d="M1337 170h9v9h-9z" fill="#007b00"/><path d="M1345 170h9v9h-9z" fill="#007b00"/><path d="M1353 170h9v9h-9z" fill="#007c00"/><path d="M1361 170h9v9h-9z" fill="#007d00"/><path d="M1185 178h9v9h-9z" fill="#006804"/><path d="M1193 178h9v9h-9z" fill="#006a04"/><path d="M1201 178h9v9h-9z" fill="#006b03"/><path d="M1209 178h9v9h-9z" fill="#006c02"/><path d="M1217 178h9v9h-9z" fill="#006d02"/><path d="M1225 178h9v9h-9z" fill="#006e01"/><path d="M1233 178h9v9h-9z" fill="#007000"/><path d="M1241 178h9v9h-9z" fill="#007100"/><path d="M1249 178h9v9h-9z" fill="#007200"/><path d="M1257 178h9v9h-9z" fill="#007300"/><path d="M1265 178h9v9h-9z" fill="#007400"/><path d="M1273 178h9v9h-9z" fill="#007500"/><path d="M1281 178h9v9h-9z" fill="#007600"/><path d="M1289 178h9v9h-9z" fill="#070"/><path d="M1297 178h9v9h-9z" fill="#007800"/><path d="M1305 178h9v9h-9z" fill="#007900"/><path d="M1313 178h9v9h-9z" fill="#007a00"/><path d="M1321 178h9v9h-9z" fill="#007b00"/><path d="M1329 178h9v9h-9z" fill="#007c00"/><path d="M1337 178h9v9h-9z" fill="#007c00"/><path d="M1345 178h9v9h-9z" fill="#007d00"/><path d="M1353 178h9v9h-9z" fill="#007e00"/><path d="M1361 178h9v9h-9z" fill="#007e00"/><path d="M1369 178h9v9h-9z" fill="#007f00"/><path d="M1377 178h9v9h-9z" fill="#008000"/><path d="M1177 186h9v9h-9z" fill="#006806"/><path d="M1185 186h9v9h-9z" fill="#006905"/><path d="M1193 186h9v9h-9z" fill="#006b05"/><path d="M1201 186h9v9h-9z" fill="#006c04"/><path d="M1209 186h9v9h-9z" fill="#006d04"/><path d="M1217 186h9v9h-9z" fill="#006e03"/><path d="M1225 186h9v9h-9z" fill="#007002"/><path d="M1233 186h9v9h-9z" fill="#007101"/><path d="M1241 186h9v9h-9z" fill="#007201"/><path d="M1249 186h9v9h-9z" fill="#007300"/><path d="M1257 186h9v9h-9z" fill="#007400"/><path d="M1265 186h9v9h-9z" fill="#007500"/><path d="M1273 186h9v9h-9z" fill="#007600"/><path d="M1281 186h9v9h-9z" fill="#070"/><path d="M1289 186h9v9h-9z" fill="#007900"/><path d="M1297 186h9v9h-9z" fill="#007a00"/><path d="M1305 186h9v9h-9z" fill="#007b00"/><path d="M1313 186h9v9h-9z" fill="#007b00"/><path d="M1321 186h9v9h-9z" fill="#007c00"/><path d="M1329 186h9v9h-9z" fill="#007d00"/><path d="M1337 186h9v9h-9z" fill="#007e00"/><path d="M1345 186h9v9h-9z" fill="#007f00"/><path d="M1353 186h9v9h-9z" fill="#008000"/><path d="M1361 186h9v9h-9z" fill="#008000"/><path d="M1369 186h9v9h-9z" fill="#008100"/><path d="M1377 186h9v9h-9z" fill="#008100"/><path d="M1385 186h9v9h-9z" fill="#008200"/><path d="M1393 186h9v9h-9z" fill="#008200"/><path d="M1177 194h9v9h-9z" fill="#006907"/><path d="M1185 194h9v9h-9z" fill="#006a07"/><path d="M1193 194h9v9h-9z" fill="#006c06"/><path d="M1201 194h9v9h-9z" fill="#006d06"/><path d="M1209 194h9v9h-9z" fill="#006e05"/><path d="M1217 194h9v9h-9z" fill="#006f04"/><path d="M1225 194h9v9h-9z" fill="#007104"/><path d="M1233 194h9v9h-9z" fill="#007203"/><path d="M1241 194h9v9h-9z" fill="#007302"/><path d="M1249 194h9v9h-9z" fill="#007401"/><path d="M1257 194h9v9h-9z" fill="#007501"/><path d="M1265 194h9v9h-9z" fill="#070"/><path d="M1273 194h9v9h-9z" fill="#007800"/><path d="M1281 194h9v9h-9z" fill="#007900"/><path d="M1289 194h9v9h-9z" fill="#007a00"/><path d="M1297 194h9v9h-9z" fill="#007b00"/><path d="M1305 194h9v9h-9z" fill="#007c00"/><path d="M1313 194h9v9h-9z" fill="#007d00"/><path d="M1321 194h9v9h-9z" fill="#007e00"/><path d="M1329 194h9v9h-9z" fill="#007f00"/><path d="M1337 194h9v9h-9z" fill="#008000"/><path d="M1345 194h9v9h-9z" fill="#008100"/><path d="M1353 194h9v9h-9z" fill="#008100"/><path d="M1361 194h9v9h-9z" fill="#008200"/><path d="M1369 194h9v9h-9z" fill="#008300"/><path d="M1377 194h9v9h-9z" fill="#008300"/><path d="M1385 194h9v9h-9z" fill="#008400"/><path d="M1393 194h9v9h-9z" fill="#008400"/><path d="M1401 194h9v9h-9z" fill="#008500"/><path d="M1169 202h9v9h-9z" fill="#006909"/><path d="M1177 202h9v9h-9z" fill="#006a09"/><path d="M1185 202h9v9h-9z" fill="#006b08"/><path d="M1193 202h9v9h-9z" fill="#006d08"/><path d="M1201 202h9v9h-9z" fill="#006e07"/><path d="M1209 202h9v9h-9z" fill="#006f06"/><path d="M1217 202h9v9h-9z" fill="#007106"/><path d="M1225 202h9v9h-9z" fill="#007205"/><path d="M1233 202h9v9h-9z" fill="#007304"/><path d="M1241 202h9v9h-9z" fill="#007404"/><path d="M1249 202h9v9h-9z" fill="#007503"/><path d="M1257 202h9v9h-9z" fill="#007702"/><path d="M1265 202h9v9h-9z" fill="#007801"/><path d="M1273 202h9v9h-9z" fill="#007900"/><path d="M1281 202h9v9h-9z" fill="#007a00"/><path d="M1289 202h9v9h-9z" fill="#007b00"/><path d="M1297 202h9v9h-9z" fill="#007c00"/><path d="M1305 202h9v9h-9z" fill="#007d00"/><path d="M1313 202h9v9h-9z" fill="#007e00"/><path d="M1321 202h9v9h-9z" fill="#007f00"/><path d="M1329 202h9v9h-9z" fill="#008000"/><path d="M1337 202h9v9h-9z" fill="#008100"/><path d="M1345 202h9v9h-9z" fill="#008200"/><path d="M1353 202h9v9h-9z" fill="#008300"/><path d="M1361 202h9v9h-9z" fill="#008400"/><path d="M1369 202h9v9h-9z" fill="#008400"/><path d="M1377 202h9v9h-9z" fill="#008500"/><path d="M1385 202h9v9h-9z" fill="#008600"/><path d="M1393 202h9v9h-9z" fill="#008600"/><path d="M1401 202h9v9h-9z" fill="#008700"/><path d="M1409 202h9v9h-9z" fill="#008700"/><path d="M1417 202h9v9h-9z" fill="#008700"/><path d="M1169 210h9v9h-9z" fill="#006a0b"/><path d="M1177 210h9v9h-9z" fill="#006b0a"/><path d="M1185 210h9v9h-9z" fill="#006c0a"/><path d="M1193 210h9v9h-9z" fill="#006e09"/><path d="M1201 210h9v9h-9z" fill="#006f08"/><path d="M1209 210h9v9h-9z" fill="#007008"/><path d="M1217 210h9v9h-9z" fill="#007107"/><path d="M1225 210h9v9h-9z" fill="#007307"/><path d="M1233 210h9v9h-9z" fill="#007406"/><path d="M1241 210h9v9h-9z" fill="#007505"/><path d="M1249 210h9v9h-9z" fill="#007704"/><path d="M1257 210h9v9h-9z" fill="#007804"/><path d="M1265 210h9v9h-9z" fill="#007903"/><path d="M1273 210h9v9h-9z" fill="#007a02"/><path d="M1281 210h9v9h-9z" fill="#007b01"/><path d="M1289 210h9v9h-9z" fill="#007d00"/><path d="M1297 210h9v9h-9z" fill="#007e00"/><path d="M1305 210h9v9h-9z" fill="#007f00"/><path d="M1313 210h9v9h-9z" fill="#008000"/><path d="M1321 210h9v9h-9z" fill="#008100"/><path d="M1329 210h9v9h-9z" fill="#008200"/><path d="M1337 210h9v9h-9z" fill="#008300"/><path d="M1345 210h9v9h-9z" fill="#008400"/><path d="M1353 210h9v9h-9z" fill="#008500"/><path d="M1361 210h9v9h-9z" fill="#008600"/><path d="M1369 210h9v9h-9z" fill="#008600"/><path d="M1377 210h9v9h-9z" fill="#008700"/><path d="M1385 210h9v9h-9z" fill="#080"/><path d="M1393 210h9v9h-9z" fill="#080"/><path d="M1401 210h9v9h-9z" fill="#008900"/><path d="M1409 210h9v9h-9z" fill="#008900"/><path d="M1417 210h9v9h-9z" fill="#008900"/><path d="M1425 210h9v9h-9z" fill="#008900"/><path d="M1433 210h9v9h-9z" fill="#008900"/><path d="M1169 218h9v9h-9z" fill="#006a0c"/><path d="M1177 218h9v9h-9z" fill="#006c0c"/><path d="M1185 218h9v9h-9z" fill="#006d0b"/><path d="M1193 218h9v9h-9z" fill="#006e0b"/><path d="M1201 218h9v9h-9z" fill="#00700a"/><path d="M1209 218h9v9h-9z" fill="#007109"/><path d="M1217 218h9v9h-9z" fill="#007209"/><path d="M1225 218h9v9h-9z" fill="#007408"/><path d="M1233 218h9v9h-9z" fill="#007507"/><path d="M1241 218h9v9h-9z" fill="#007607"/><path d="M1249 218h9v9h-9z" fill="#007806"/><path d="M1257 218h9v9h-9z" fill="#007905"/><path d="M1265 218h9v9h-9z" fill="#007a04"/><path d="M1273 218h9v9h-9z" fill="#007b04"/><path d="M1281 218h9v9h-9z" fill="#007d03"/><path d="M1289 218h9v9h-9z" fill="#007e02"/><path d="M1297 218h9v9h-9z" fill="#007f01"/><path d="M1305 218h9v9h-9z" fill="#008000"/><path d="M1313 218h9v9h-9z" fill="#008100"/><path d="M1321 218h9v9h-9z" fill="#008200"/><path d="M1329 218h9v9h-9z" fill="#008300"/><path d="M1337 218h9v9h-9z" fill="#008400"/><path d="M1345 218h9v9h-9z" fill="#008500"/><path d="M1353 218h9v9h-9z" fill="#008600"/><path d="M1361 218h9v9h-9z" fill="#008700"/><path d="M1369 218h9v9h-9z" fill="#080"/><path d="M1377 218h9v9h-9z" fill="#008900"/><path d="M1385 218h9v9h-9z" fill="#008900"/><path d="M1393 218h9v9h-9z" fill="#008a00"/><path d="M1401 218h9v9h-9z" fill="#008a00"/><path d="M1409 218h9v9h-9z" fill="#008b00"/><path d="M1417 218h9v9h-9z" fill="#008b00"/><path d="M1425 218h9v9h-9z" fill="#008b00"/><path d="M1433 218h9v9h-9z" fill="#008b00"/><path d="M1441 218h9v9h-9z" fill="#008b00"/><path d="M1169 226h9v9h-9z" fill="#006b0e"/><path d="M1177 226h9v9h-9z" fill="#006c0d"/><path d="M1185 226h9v9h-9z" fill="#006e0d"/><path d="M1193 226h9v9h-9z" fill="#006f0c"/><path d="M1201 226h9v9h-9z" fill="#00710c"/><path d="M1209 226h9v9h-9z" fill="#00720b"/><path d="M1217 226h9v9h-9z" fill="#00730b"/><path d="M1225 226h9v9h-9z" fill="#00750a"/><path d="M1233 226h9v9h-9z" fill="#007609"/><path d="M1241 226h9v9h-9z" fill="#007708"/><path d="M1249 226h9v9h-9z" fill="#007908"/><path d="M1257 226h9v9h-9z" fill="#007a07"/><path d="M1265 226h9v9h-9z" fill="#007b06"/><path d="M1273 226h9v9h-9z" fill="#007c05"/><path d="M1281 226h9v9h-9z" fill="#007e04"/><path d="M1289 226h9v9h-9z" fill="#007f04"/><path d="M1297 226h9v9h-9z" fill="#008003"/><path d="M1305 226h9v9h-9z" fill="#008102"/><path d="M1313 226h9v9h-9z" fill="#008201"/><path d="M1321 226h9v9h-9z" fill="#008400"/><path d="M1329 226h9v9h-9z" fill="#008500"/><path d="M1337 226h9v9h-9z" fill="#008600"/><path d="M1345 226h9v9h-9z" fill="#008700"/><path d="M1353 226h9v9h-9z" fill="#080"/><path d="M1361 226h9v9h-9z" fill="#008900"/><path d="M1369 226h9v9h-9z" fill="#008a00"/><path d="M1377 226h9v9h-9z" fill="#008a00"/><path d="M1385 226h9v9h-9z" fill="#008b00"/><path d="M1393 226h9v9h-9z" fill="#008c00"/><path d="M1401 226h9v9h-9z" fill="#008c00"/><path d="M1409 226h9v9h-9z" fill="#008d00"/><path d="M1417 226h9v9h-9z" fill="#008d00"/><path d="M1425 226h9v9h-9z" fill="#008d00"/><path d="M1433 226h9v9h-9z" fill="#008d00"/><path d="M1441 226h9v9h-9z" fill="#008d00"/><path d="M1449 226h9v9h-9z" fill="#008d00"/><path d="M1457 226h9v9h-9z" fill="#008d00"/><path d="M1161 234h9v9h-9z" fill="#006a10"/><path d="M1169 234h9v9h-9z" fill="#006c0f"/><path d="M1177 234h9v9h-9z" fill="#006d0f"/><path d="M1185 234h9v9h-9z" fill="#006e0e"/><path d="M1193 234h9v9h-9z" fill="#00700e"/><path d="M1201 234h9v9h-9z" fill="#00710d"/><path d="M1209 234h9v9h-9z" fill="#00730d"/><path d="M1217 234h9v9h-9z" fill="#00740c"/><path d="M1225 234h9v9h-9z" fill="#00750c"/><path d="M1233 234h9v9h-9z" fill="#00770b"/><path d="M1241 234h9v9h-9z" fill="#00780a"/><path d="M1249 234h9v9h-9z" fill="#00790a"/><path d="M1257 234h9v9h-9z" fill="#007b09"/><path d="M1265 234h9v9h-9z" fill="#007c08"/><path d="M1273 234h9v9h-9z" fill="#007d07"/><path d="M1281 234h9v9h-9z" fill="#007f06"/><path d="M1289 234h9v9h-9z" fill="#008005"/><path d="M1297 234h9v9h-9z" fill="#008105"/><path d="M1305 234h9v9h-9z" fill="#008204"/><path d="M1313 234h9v9h-9z" fill="#008403"/><path d="M1321 234h9v9h-9z" fill="#008502"/><path d="M1329 234h9v9h-9z" fill="#008600"/><path d="M1337 234h9v9h-9z" fill="#008700"/><path d="M1345 234h9v9h-9z" fill="#080"/><path d="M1353 234h9v9h-9z" fill="#008900"/><path d="M1361 234h9v9h-9z" fill="#008a00"/><path d="M1369 234h9v9h-9z" fill="#008b00"/><path d="M1377 234h9v9h-9z" fill="#008c00"/><path d="M1385 234h9v9h-9z" fill="#008d00"/><path d="M1393 234h9v9h-9z" fill="#008e00"/><path d="M1401 234h9v9h-9z" fill="#008e00"/><path d="M1409 234h9v9h-9z" fill="#008f00"/><path d="M1417 234h9v9h-9z" fill="#008f00"/><path d="M1425 234h9v9h-9z" fill="#008f00"/><path d="M1433 234h9v9h-9z" fill="#008f00"/><path d="M1441 234h9v9h-9z" fill="#008f00"/><path d="M1449 234h9v9h-9z" fill="#008f00"/><path d="M1457 234h9v9h-9z" fill="#018f00"/><path d="M1465 234h9v9h-9z" fill="#068e00"/><path d="M1161 242h9v9h-9z" fill="#006b12"/><path d="M1169 242h9v9h-9z" fill="#006c11"/><path d="M1177 242h9v9h-9z" fill="#006e11"/><path d="M1185 242h9v9h-9z" fill="#006f10"/><path d="M1193 242h9v9h-9z" fill="#007010"/><path d="M1201 242h9v9h-9z" fill="#00720f"/><path d="M1209 242h9v9h-9z" fill="#00730f"/><path d="M1217 242h9v9h-9z" fill="#00750e"/><path d="M1225 242h9v9h-9z" fill="#00760d"/><path d="M1233 242h9v9h-9z" fill="#00770d"/><path d="M1241 242h9v9h-9z" fill="#00790c"/><path d="M1249 242h9v9h-9z" fill="#007a0b"/><path d="M1257 242h9v9h-9z" fill="#007b0b"/><path d="M1265 242h9v9h-9z" fill="#007d0a"/><path d="M1273 242h9v9h-9z" fill="#007e09"/><path d="M1281 242h9v9h-9z" fill="#008008"/><path d="M1289 242h9v9h-9z" fill="#008107"/><path d="M1297 242h9v9h-9z" fill="#008206"/><path d="M1305 242h9v9h-9z" fill="#008306"/><path d="M1313 242h9v9h-9z" fill="#008505"/><path d="M1321 242h9v9h-9z" fill="#008604"/><path d="M1329 242h9v9h-9z" fill="#008702"/><path d="M1337 242h9v9h-9z" fill="#008801"/><path d="M1345 242h9v9h-9z" fill="#008a00"/><path d="M1353 242h9v9h-9z" fill="#008b00"/><path d="M1361 242h9v9h-9z" fill="#008c00"/><path d="M1369 242h9v9h-9z" fill="#008d00"/><path d="M1377 242h9v9h-9z" fill="#008e00"/><path d="M1385 242h9v9h-9z" fill="#008f00"/><path d="M1393 242h9v9h-9z" fill="#008f00"/><path d="M1401 242h9v9h-9z" fill="#009000"/><path d="M1409 242h9v9h-9z" fill="#009100"/><path d="M1417 242h9v9h-9z" fill="#009100"/><path d="M1425 242h9v9h-9z" fill="#009100"/><path d="M1433 242h9v9h-9z" fill="#009100"/><path d="M1441 242h9v9h-9z" fill="#009100"/><path d="M1449 242h9v9h-9z" fill="#009100"/><path d="M1457 242h9v9h-9z" fill="#039100"/><path d="M1465 242h9v9h-9z" fill="#089000"/><path d="M1473 242h9v9h-9z" fill="#0d9000"/><path d="M1481 242h9v9h-9z" fill="#138f00"/><path d="M1161 250h9v9h-9z" fill="#006b13"/><path d="M1169 250h9v9h-9z" fill="#006d13"/><path d="M1177 250h9v9h-9z" fill="#006e12"/><path d="M1185 250h9v9h-9z" fill="#007012"/><path d="M1193 250h9v9h-9z" fill="#007112"/><path d="M1201 250h9v9h-9z" fill="#007211"/><path d="M1209 250h9v9h-9z" fill="#007411"/><path d="M1217 250h9v9h-9z" fill="#007510"/><path d="M1225 250h9v9h-9z" fill="#00770f"/><path d="M1233 250h9v9h-9z" fill="#00780f"/><path d="M1241 250h9v9h-9z" fill="#00790e"/><path d="M1249 250h9v9h-9z" fill="#007b0d"/><path d="M1257 250h9v9h-9z" fill="#007c0d"/><path d="M1265 250h9v9h-9z" fill="#007e0c"/><path d="M1273 250h9v9h-9z" fill="#007f0b"/><path d="M1281 250h9v9h-9z" fill="#00800a"/><path d="M1289 250h9v9h-9z" fill="#008209"/><path d="M1297 250h9v9h-9z" fill="#008309"/><path d="M1305 250h9v9h-9z" fill="#008408"/><path d="M1313 250h9v9h-9z" fill="#008607"/><path d="M1321 250h9v9h-9z" fill="#008706"/><path d="M1329 250h9v9h-9z" fill="#008805"/><path d="M1337 250h9v9h-9z" fill="#008a03"/><path d="M1345 250h9v9h-9z" fill="#008b02"/><path d="M1353 250h9v9h-9z" fill="#008c01"/><path d="M1361 250h9v9h-9z" fill="#008d00"/><path d="M1369 250h9v9h-9z" fill="#008e00"/><path d="M1377 250h9v9h-9z" fill="#008f00"/><path d="M1385 250h9v9h-9z" fill="#009000"/><path d="M1393 250h9v9h-9z" fill="#009100"/><path d="M1401 250h9v9h-9z" fill="#009200"/><path d="M1409 250h9v9h-9z" fill="#009300"/><path d="M1417 250h9v9h-9z" fill="#009300"/><path d="M1425 250h9v9h-9z" fill="#009300"/><path d="M1433 250h9v9h-9z" fill="#009300"/><path d="M1441 250h9v9h-9z" fill="#009300"/><path d="M1449 250h9v9h-9z" fill="#009300"/><path d="M1457 250h9v9h-9z" fill="#059300"/><path d="M1465 250h9v9h-9z" fill="#0a9200"/><path d="M1473 250h9v9h-9z" fill="#109100"/><path d="M1481 250h9v9h-9z" fill="#159000"/><path d="M1489 250h9v9h-9z" fill="#1b8f00"/><path d="M1161 258h9v9h-9z" fill="#006c15"/><path d="M1169 258h9v9h-9z" fill="#006d15"/><path d="M1177 258h9v9h-9z" fill="#006f14"/><path d="M1185 258h9v9h-9z" fill="#007014"/><path d="M1193 258h9v9h-9z" fill="#007213"/><path d="M1201 258h9v9h-9z" fill="#007313"/><path d="M1209 258h9v9h-9z" fill="#007412"/><path d="M1217 258h9v9h-9z" fill="#007612"/><path d="M1225 258h9v9h-9z" fill="#071"/><path d="M1233 258h9v9h-9z" fill="#007911"/><path d="M1241 258h9v9h-9z" fill="#007a10"/><path d="M1249 258h9v9h-9z" fill="#007b0f"/><path d="M1257 258h9v9h-9z" fill="#007d0f"/><path d="M1265 258h9v9h-9z" fill="#007e0e"/><path d="M1273 258h9v9h-9z" fill="#00800d"/><path d="M1281 258h9v9h-9z" fill="#00810c"/><path d="M1289 258h9v9h-9z" fill="#00820c"/><path d="M1297 258h9v9h-9z" fill="#00840b"/><path d="M1305 258h9v9h-9z" fill="#00850a"/><path d="M1313 258h9v9h-9z" fill="#008609"/><path d="M1321 258h9v9h-9z" fill="#008808"/><path d="M1329 258h9v9h-9z" fill="#008907"/><path d="M1337 258h9v9h-9z" fill="#008a06"/><path d="M1345 258h9v9h-9z" fill="#008c05"/><path d="M1353 258h9v9h-9z" fill="#008d03"/><path d="M1361 258h9v9h-9z" fill="#008e02"/><path d="M1369 258h9v9h-9z" fill="#008f01"/><path d="M1377 258h9v9h-9z" fill="#009100"/><path d="M1385 258h9v9h-9z" fill="#009200"/><path d="M1393 258h9v9h-9z" fill="#009300"/><path d="M1401 258h9v9h-9z" fill="#009400"/><path d="M1409 258h9v9h-9z" fill="#009400"/><path d="M1417 258h9v9h-9z" fill="#009500"/><path d="M1425 258h9v9h-9z" fill="#009500"/><path d="M1433 258h9v9h-9z" fill="#009500"/><path d="M1441 258h9v9h-9z" fill="#009500"/><path d="M1449 258h9v9h-9z" fill="#029500"/><path d="M1457 258h9v9h-9z" fill="#079400"/><path d="M1465 258h9v9h-9z" fill="#0d9400"/><path d="M1473 258h9v9h-9z" fill="#139300"/><path d="M1481 258h9v9h-9z" fill="#189200"/><path d="M1489 258h9v9h-9z" fill="#1e9100"/><path d="M1497 258h9v9h-9z" fill="#249000"/><path d="M1505 258h9v9h-9z" fill="#2a8f00"/><path d="M1161 266h9v9h-9z" fill="#006c17"/><path d="M1169 266h9v9h-9z" fill="#006e17"/><path d="M1177 266h9v9h-9z" fill="#006f16"/><path d="M1185 266h9v9h-9z" fill="#007116"/><path d="M1193 266h9v9h-9z" fill="#007215"/><path d="M1201 266h9v9h-9z" fill="#007315"/><path d="M1209 266h9v9h-9z" fill="#007515"/><path d="M1217 266h9v9h-9z" fill="#007614"/><path d="M1225 266h9v9h-9z" fill="#007813"/><path d="M1233 266h9v9h-9z" fill="#007913"/><path d="M1241 266h9v9h-9z" fill="#007a12"/><path d="M1249 266h9v9h-9z" fill="#007c12"/><path d="M1257 266h9v9h-9z" fill="#007d11"/><path d="M1265 266h9v9h-9z" fill="#007f10"/><path d="M1273 266h9v9h-9z" fill="#00800f"/><path d="M1281 266h9v9h-9z" fill="#00820f"/><path d="M1289 266h9v9h-9z" fill="#00830e"/><path d="M1297 266h9v9h-9z" fill="#00840d"/><path d="M1305 266h9v9h-9z" fill="#00860c"/><path d="M1313 266h9v9h-9z" fill="#00870b"/><path d="M1321 266h9v9h-9z" fill="#00890a"/><path d="M1329 266h9v9h-9z" fill="#008a09"/><path d="M1337 266h9v9h-9z" fill="#008b08"/><path d="M1345 266h9v9h-9z" fill="#008d07"/><path d="M1353 266h9v9h-9z" fill="#008e06"/><path d="M1361 266h9v9h-9z" fill="#008f04"/><path d="M1369 266h9v9h-9z" fill="#009103"/><path d="M1377 266h9v9h-9z" fill="#009202"/><path d="M1385 266h9v9h-9z" fill="#009301"/><path d="M1393 266h9v9h-9z" fill="#009400"/><path d="M1401 266h9v9h-9z" fill="#009500"/><path d="M1409 266h9v9h-9z" fill="#009600"/><path d="M1417 266h9v9h-9z" fill="#009700"/><path d="M1425 266h9v9h-9z" fill="#009700"/><path d="M1433 266h9v9h-9z" fill="#009800"/><path d="M1441 266h9v9h-9z" fill="#009700"/><path d="M1449 266h9v9h-9z" fill="#049700"/><path d="M1457 266h9v9h-9z" fill="#0a9600"/><path d="M1465 266h9v9h-9z" fill="#109500"/><path d="M1473 266h9v9h-9z" fill="#169400"/><path d="M1481 266h9v9h-9z" fill="#1c9400"/><path d="M1489 266h9v9h-9z" fill="#229300"/><path d="M1497 266h9v9h-9z" fill="#289200"/><path d="M1505 266h9v9h-9z" fill="#2e9100"/><path d="M1513 266h9v9h-9z" fill="#349000"/><path d="M1161 274h9v9h-9z" fill="#006d19"/><path d="M1169 274h9v9h-9z" fill="#006e19"/><path d="M1177 274h9v9h-9z" fill="#007018"/><path d="M1185 274h9v9h-9z" fill="#007118"/><path d="M1193 274h9v9h-9z" fill="#007318"/><path d="M1201 274h9v9h-9z" fill="#007417"/><path d="M1209 274h9v9h-9z" fill="#007517"/><path d="M1217 274h9v9h-9z" fill="#007716"/><path d="M1225 274h9v9h-9z" fill="#007816"/><path d="M1233 274h9v9h-9z" fill="#007a15"/><path d="M1241 274h9v9h-9z" fill="#007b14"/><path d="M1249 274h9v9h-9z" fill="#007c14"/><path d="M1257 274h9v9h-9z" fill="#007e13"/><path d="M1265 274h9v9h-9z" fill="#007f12"/><path d="M1273 274h9v9h-9z" fill="#008112"/><path d="M1281 274h9v9h-9z" fill="#008211"/><path d="M1289 274h9v9h-9z" fill="#008310"/><path d="M1297 274h9v9h-9z" fill="#00850f"/><path d="M1305 274h9v9h-9z" fill="#00860e"/><path d="M1313 274h9v9h-9z" fill="#00880e"/><path d="M1321 274h9v9h-9z" fill="#00890d"/><path d="M1329 274h9v9h-9z" fill="#008a0c"/><path d="M1337 274h9v9h-9z" fill="#008c0a"/><path d="M1345 274h9v9h-9z" fill="#008d09"/><path d="M1353 274h9v9h-9z" fill="#008f08"/><path d="M1361 274h9v9h-9z" fill="#009007"/><path d="M1369 274h9v9h-9z" fill="#009106"/><path d="M1377 274h9v9h-9z" fill="#009304"/><path d="M1385 274h9v9h-9z" fill="#009403"/><path d="M1393 274h9v9h-9z" fill="#009502"/><path d="M1401 274h9v9h-9z" fill="#009700"/><path d="M1409 274h9v9h-9z" fill="#009800"/><path d="M1417 274h9v9h-9z" fill="#090"/><path d="M1425 274h9v9h-9z" fill="#090"/><path d="M1433 274h9v9h-9z" fill="#009a00"/><path d="M1441 274h9v9h-9z" fill="#090"/><path d="M1449 274h9v9h-9z" fill="#069900"/><path d="M1457 274h9v9h-9z" fill="#0c9800"/><path d="M1465 274h9v9h-9z" fill="#139700"/><path d="M1473 274h9v9h-9z" fill="#199600"/><path d="M1481 274h9v9h-9z" fill="#1f9500"/><path d="M1489 274h9v9h-9z" fill="#259400"/><path d="M1497 274h9v9h-9z" fill="#2c9300"/><path d="M1505 274h9v9h-9z" fill="#329200"/><path d="M1513 274h9v9h-9z" fill="#399200"/><path d="M1521 274h9v9h-9z" fill="#3f9100"/><path d="M1529 274h9v9h-9z" fill="#469000"/><path d="M1161 282h9v9h-9z" fill="#006e1b"/><path d="M1169 282h9v9h-9z" fill="#006f1b"/><path d="M1177 282h9v9h-9z" fill="#00701b"/><path d="M1185 282h9v9h-9z" fill="#00721a"/><path d="M1193 282h9v9h-9z" fill="#00731a"/><path d="M1201 282h9v9h-9z" fill="#007519"/><path d="M1209 282h9v9h-9z" fill="#007619"/><path d="M1217 282h9v9h-9z" fill="#007718"/><path d="M1225 282h9v9h-9z" fill="#007918"/><path d="M1233 282h9v9h-9z" fill="#007a17"/><path d="M1241 282h9v9h-9z" fill="#007c17"/><path d="M1249 282h9v9h-9z" fill="#007d16"/><path d="M1257 282h9v9h-9z" fill="#007e16"/><path d="M1265 282h9v9h-9z" fill="#008015"/><path d="M1273 282h9v9h-9z" fill="#008114"/><path d="M1281 282h9v9h-9z" fill="#008313"/><path d="M1289 282h9v9h-9z" fill="#008413"/><path d="M1297 282h9v9h-9z" fill="#008512"/><path d="M1305 282h9v9h-9z" fill="#008711"/><path d="M1313 282h9v9h-9z" fill="#008810"/><path d="M1321 282h9v9h-9z" fill="#008a0f"/><path d="M1329 282h9v9h-9z" fill="#008b0e"/><path d="M1337 282h9v9h-9z" fill="#008c0d"/><path d="M1345 282h9v9h-9z" fill="#008e0c"/><path d="M1353 282h9v9h-9z" fill="#008f0b"/><path d="M1361 282h9v9h-9z" fill="#00910a"/><path d="M1369 282h9v9h-9z" fill="#009208"/><path d="M1377 282h9v9h-9z" fill="#009307"/><path d="M1385 282h9v9h-9z" fill="#009506"/><path d="M1393 282h9v9h-9z" fill="#009604"/><path d="M1401 282h9v9h-9z" fill="#009803"/><path d="M1409 282h9v9h-9z" fill="#009901"/><path d="M1417 282h9v9h-9z" fill="#009a00"/><path d="M1425 282h9v9h-9z" fill="#009b00"/><path d="M1433 282h9v9h-9z" fill="#009c00"/><path d="M1441 282h9v9h-9z" fill="#039b00"/><path d="M1449 282h9v9h-9z" fill="#099a00"/><path d="M1457 282h9v9h-9z" fill="#0f9900"/><path d="M1465 282h9v9h-9z" fill="#169900"/><path d="M1473 282h9v9h-9z" fill="#1c9800"/><path d="M1481 282h9v9h-9z" fill="#239700"/><path d="M1489 282h9v9h-9z" fill="#299600"/><path d="M1497 282h9v9h-9z" fill="#309500"/><path d="M1505 282h9v9h-9z" fill="#379400"/><path d="M1513 282h9v9h-9z" fill="#3e9300"/><path d="M1521 282h9v9h-9z" fill="#459200"/><path d="M1529 282h9v9h-9z" fill="#4c9100"/><path d="M1537 282h9v9h-9z" fill="#539000"/><path d="M1161 290h9v9h-9z" fill="#006e1d"/><path d="M1169 290h9v9h-9z" fill="#006f1d"/><path d="M1177 290h9v9h-9z" fill="#00711d"/><path d="M1185 290h9v9h-9z" fill="#00721c"/><path d="M1193 290h9v9h-9z" fill="#00741c"/><path d="M1201 290h9v9h-9z" fill="#00751c"/><path d="M1209 290h9v9h-9z" fill="#00761b"/><path d="M1217 290h9v9h-9z" fill="#00781b"/><path d="M1225 290h9v9h-9z" fill="#00791a"/><path d="M1233 290h9v9h-9z" fill="#007b1a"/><path d="M1241 290h9v9h-9z" fill="#007c19"/><path d="M1249 290h9v9h-9z" fill="#007e19"/><path d="M1257 290h9v9h-9z" fill="#007f18"/><path d="M1265 290h9v9h-9z" fill="#008017"/><path d="M1273 290h9v9h-9z" fill="#008217"/><path d="M1281 290h9v9h-9z" fill="#008316"/><path d="M1289 290h9v9h-9z" fill="#008515"/><path d="M1297 290h9v9h-9z" fill="#008614"/><path d="M1305 290h9v9h-9z" fill="#008714"/><path d="M1313 290h9v9h-9z" fill="#008913"/><path d="M1321 290h9v9h-9z" fill="#008a12"/><path d="M1329 290h9v9h-9z" fill="#008c11"/><path d="M1337 290h9v9h-9z" fill="#008d10"/><path d="M1345 290h9v9h-9z" fill="#008e0f"/><path d="M1353 290h9v9h-9z" fill="#00900e"/><path d="M1361 290h9v9h-9z" fill="#00910c"/><path d="M1369 290h9v9h-9z" fill="#00930b"/><path d="M1377 290h9v9h-9z" fill="#00940a"/><path d="M1385 290h9v9h-9z" fill="#009509"/><path d="M1393 290h9v9h-9z" fill="#009707"/><path d="M1401 290h9v9h-9z" fill="#009806"/><path d="M1409 290h9v9h-9z" fill="#009a04"/><path d="M1417 290h9v9h-9z" fill="#009b03"/><path d="M1425 290h9v9h-9z" fill="#009c01"/><path d="M1433 290h9v9h-9z" fill="#009e00"/><path d="M1441 290h9v9h-9z" fill="#059d00"/><path d="M1449 290h9v9h-9z" fill="#0c9c00"/><path d="M1457 290h9v9h-9z" fill="#129b00"/><path d="M1465 290h9v9h-9z" fill="#199a00"/><path d="M1473 290h9v9h-9z" fill="#209900"/><path d="M1481 290h9v9h-9z" fill="#279800"/><path d="M1489 290h9v9h-9z" fill="#2e9700"/><path d="M1497 290h9v9h-9z" fill="#359600"/><path d="M1505 290h9v9h-9z" fill="#3c9600"/><path d="M1513 290h9v9h-9z" fill="#439500"/><path d="M1521 290h9v9h-9z" fill="#4a9400"/><path d="M1529 290h9v9h-9z" fill="#529300"/><path d="M1537 290h9v9h-9z" fill="#599200"/><path d="M1545 290h9v9h-9z" fill="#619100"/><path d="M1161 298h9v9h-9z" fill="#006f20"/><path d="M1169 298h9v9h-9z" fill="#00701f"/><path d="M1177 298h9v9h-9z" fill="#00711f"/><path d="M1185 298h9v9h-9z" fill="#00731f"/><path d="M1193 298h9v9h-9z" fill="#00741f"/><path d="M1201 298h9v9h-9z" fill="#00761e"/><path d="M1209 298h9v9h-9z" fill="#00771e"/><path d="M1217 298h9v9h-9z" fill="#00781d"/><path d="M1225 298h9v9h-9z" fill="#007a1d"/><path d="M1233 298h9v9h-9z" fill="#007b1c"/><path d="M1241 298h9v9h-9z" fill="#007d1c"/><path d="M1249 298h9v9h-9z" fill="#007e1b"/><path d="M1257 298h9v9h-9z" fill="#007f1b"/><path d="M1265 298h9v9h-9z" fill="#00811a"/><path d="M1273 298h9v9h-9z" fill="#008219"/><path d="M1281 298h9v9h-9z" fill="#008419"/><path d="M1289 298h9v9h-9z" fill="#008518"/><path d="M1297 298h9v9h-9z" fill="#008617"/><path d="M1305 298h9v9h-9z" fill="#008816"/><path d="M1313 298h9v9h-9z" fill="#008916"/><path d="M1321 298h9v9h-9z" fill="#008b15"/><path d="M1329 298h9v9h-9z" fill="#008c14"/><path d="M1337 298h9v9h-9z" fill="#008e13"/><path d="M1345 298h9v9h-9z" fill="#008f12"/><path d="M1353 298h9v9h-9z" fill="#009011"/><path d="M1361 298h9v9h-9z" fill="#00920f"/><path d="M1369 298h9v9h-9z" fill="#00930e"/><path d="M1377 298h9v9h-9z" fill="#00950d"/><path d="M1385 298h9v9h-9z" fill="#00960c"/><path d="M1393 298h9v9h-9z" fill="#00970a"/><path d="M1401 298h9v9h-9z" fill="#009909"/><path d="M1409 298h9v9h-9z" fill="#009a07"/><path d="M1417 298h9v9h-9z" fill="#009c06"/><path d="M1425 298h9v9h-9z" fill="#009d04"/><path d="M1433 298h9v9h-9z" fill="#019e02"/><path d="M1441 298h9v9h-9z" fill="#089e01"/><path d="M1449 298h9v9h-9z" fill="#0f9e00"/><path d="M1457 298h9v9h-9z" fill="#169d00"/><path d="M1465 298h9v9h-9z" fill="#1d9c00"/><path d="M1473 298h9v9h-9z" fill="#249b00"/><path d="M1481 298h9v9h-9z" fill="#2b9a00"/><path d="M1489 298h9v9h-9z" fill="#329900"/><path d="M1497 298h9v9h-9z" fill="#399800"/><path d="M1505 298h9v9h-9z" fill="#419700"/><path d="M1513 298h9v9h-9z" fill="#489600"/><path d="M1521 298h9v9h-9z" fill="#509500"/><path d="M1529 298h9v9h-9z" fill="#589400"/><path d="M1537 298h9v9h-9z" fill="#609400"/><path d="M1545 298h9v9h-9z" fill="#689300"/><path d="M1553 298h9v9h-9z" fill="#709200"/><path d="M1561 298h9v9h-9z" fill="#789100"/><path d="M1161 306h9v9h-9z" fill="#006f22"/><path d="M1169 306h9v9h-9z" fill="#007122"/><path d="M1177 306h9v9h-9z" fill="#007222"/><path d="M1185 306h9v9h-9z" fill="#007321"/><path d="M1193 306h9v9h-9z" fill="#007521"/><path d="M1201 306h9v9h-9z" fill="#007621"/><path d="M1209 306h9v9h-9z" fill="#007820"/><path d="M1217 306h9v9h-9z" fill="#007920"/><path d="M1225 306h9v9h-9z" fill="#007a20"/><path d="M1233 306h9v9h-9z" fill="#007c1f"/><path d="M1241 306h9v9h-9z" fill="#007d1f"/><path d="M1249 306h9v9h-9z" fill="#007f1e"/><path d="M1257 306h9v9h-9z" fill="#00801e"/><path d="M1265 306h9v9h-9z" fill="#00811d"/><path d="M1273 306h9v9h-9z" fill="#00831c"/><path d="M1281 306h9v9h-9z" fill="#00841c"/><path d="M1289 306h9v9h-9z" fill="#00861b"/><path d="M1297 306h9v9h-9z" fill="#00871a"/><path d="M1305 306h9v9h-9z" fill="#008819"/><path d="M1313 306h9v9h-9z" fill="#008a19"/><path d="M1321 306h9v9h-9z" fill="#008b18"/><path d="M1329 306h9v9h-9z" fill="#008d17"/><path d="M1337 306h9v9h-9z" fill="#008e16"/><path d="M1345 306h9v9h-9z" fill="#008f15"/><path d="M1353 306h9v9h-9z" fill="#009114"/><path d="M1361 306h9v9h-9z" fill="#009213"/><path d="M1369 306h9v9h-9z" fill="#009411"/><path d="M1377 306h9v9h-9z" fill="#009510"/><path d="M1385 306h9v9h-9z" fill="#00960f"/><path d="M1393 306h9v9h-9z" fill="#00980d"/><path d="M1401 306h9v9h-9z" fill="#00990c"/><path d="M1409 306h9v9h-9z" fill="#009b0b"/><path d="M1417 306h9v9h-9z" fill="#009c09"/><path d="M1425 306h9v9h-9z" fill="#009e07"/><path d="M1433 306h9v9h-9z" fill="#049d06"/><path d="M1441 306h9v9h-9z" fill="#0b9c04"/><path d="M1449 306h9v9h-9z" fill="#129d02"/><path d="M1457 306h9v9h-9z" fill="#199e00"/><path d="M1465 306h9v9h-9z" fill="#219d00"/><path d="M1473 306h9v9h-9z" fill="#289c00"/><path d="M1481 306h9v9h-9z" fill="#2f9b00"/><path d="M1489 306h9v9h-9z" fill="#379b00"/><path d="M1497 306h9v9h-9z" fill="#3f9a00"/><path d="M1505 306h9v9h-9z" fill="#479900"/><path d="M1513 306h9v9h-9z" fill="#4f9800"/><path d="M1521 306h9v9h-9z" fill="#579700"/><path d="M1529 306h9v9h-9z" fill="#5f9600"/><path d="M1537 306h9v9h-9z" fill="#679500"/><path d="M1545 306h9v9h-9z" fill="#6f9400"/><path d="M1553 306h9v9h-9z" fill="#789300"/><path d="M1561 306h9v9h-9z" fill="#819200"/><path d="M1569 306h9v9h-9z" fill="#8a9100"/><path d="M1161 314h9v9h-9z" fill="#007025"/><path d="M1169 314h9v9h-9z" fill="#007124"/><path d="M1177 314h9v9h-9z" fill="#007224"/><path d="M1185 314h9v9h-9z" fill="#007424"/><path d="M1193 314h9v9h-9z" fill="#007524"/><path d="M1201 314h9v9h-9z" fill="#007723"/><path d="M1209 314h9v9h-9z" fill="#007823"/><path d="M1217 314h9v9h-9z" fill="#007a23"/><path d="M1225 314h9v9h-9z" fill="#007b22"/><path d="M1233 314h9v9h-9z" fill="#007c22"/><path d="M1241 314h9v9h-9z" fill="#007e22"/><path d="M1249 314h9v9h-9z" fill="#007f21"/><path d="M1257 314h9v9h-9z" fill="#008120"/><path d="M1265 314h9v9h-9z" fill="#008220"/><path d="M1273 314h9v9h-9z" fill="#00831f"/><path d="M1281 314h9v9h-9z" fill="#00851f"/><path d="M1289 314h9v9h-9z" fill="#00861e"/><path d="M1297 314h9v9h-9z" fill="#00881d"/><path d="M1305 314h9v9h-9z" fill="#00891d"/><path d="M1313 314h9v9h-9z" fill="#008a1c"/><path d="M1321 314h9v9h-9z" fill="#008c1b"/><path d="M1329 314h9v9h-9z" fill="#008d1a"/><path d="M1337 314h9v9h-9z" fill="#008f19"/><path d="M1345 314h9v9h-9z" fill="#009018"/><path d="M1353 314h9v9h-9z" fill="#009117"/><path d="M1361 314h9v9h-9z" fill="#009316"/><path d="M1369 314h9v9h-9z" fill="#009415"/><path d="M1377 314h9v9h-9z" fill="#009613"/><path d="M1385 314h9v9h-9z" fill="#009712"/><path d="M1393 314h9v9h-9z" fill="#009811"/><path d="M1401 314h9v9h-9z" fill="#009a0f"/><path d="M1409 314h9v9h-9z" fill="#009b0e"/><path d="M1417 314h9v9h-9z" fill="#009d0c"/><path d="M1425 314h9v9h-9z" fill="#009e0b"/><path d="M1433 314h9v9h-9z" fill="#079d09"/><path d="M1441 314h9v9h-9z" fill="#0e9b07"/><path d="M1449 314h9v9h-9z" fill="#159c05"/><path d="M1457 314h9v9h-9z" fill="#1d9c04"/><path d="M1465 314h9v9h-9z" fill="#259d02"/><path d="M1473 314h9v9h-9z" fill="#2d9e00"/><path d="M1481 314h9v9h-9z" fill="#349d00"/><path d="M1489 314h9v9h-9z" fill="#3c9c00"/><path d="M1497 314h9v9h-9z" fill="#449b00"/><path d="M1505 314h9v9h-9z" fill="#4d9a00"/><path d="M1513 314h9v9h-9z" fill="#590"/><path d="M1521 314h9v9h-9z" fill="#5e9900"/><path d="M1529 314h9v9h-9z" fill="#669800"/><path d="M1537 314h9v9h-9z" fill="#6f9700"/><path d="M1545 314h9v9h-9z" fill="#789600"/><path d="M1553 314h9v9h-9z" fill="#819500"/><path d="M1561 314h9v9h-9z" fill="#8a9400"/><path d="M1569 314h9v9h-9z" fill="#939200"/><path d="M1577 314h9v9h-9z" fill="#8f8500"/><path d="M1585 314h9v9h-9z" fill="#8c7900"/><path d="M1161 322h9v9h-9z" fill="#007027"/><path d="M1169 322h9v9h-9z" fill="#007227"/><path d="M1177 322h9v9h-9z" fill="#007327"/><path d="M1185 322h9v9h-9z" fill="#007427"/><path d="M1193 322h9v9h-9z" fill="#007627"/><path d="M1201 322h9v9h-9z" fill="#007726"/><path d="M1209 322h9v9h-9z" fill="#007926"/><path d="M1217 322h9v9h-9z" fill="#007a26"/><path d="M1225 322h9v9h-9z" fill="#007b25"/><path d="M1233 322h9v9h-9z" fill="#007d25"/><path d="M1241 322h9v9h-9z" fill="#007e25"/><path d="M1249 322h9v9h-9z" fill="#008024"/><path d="M1257 322h9v9h-9z" fill="#008124"/><path d="M1265 322h9v9h-9z" fill="#008223"/><path d="M1273 322h9v9h-9z" fill="#008423"/><path d="M1281 322h9v9h-9z" fill="#008522"/><path d="M1289 322h9v9h-9z" fill="#008721"/><path d="M1297 322h9v9h-9z" fill="#008821"/><path d="M1305 322h9v9h-9z" fill="#008a20"/><path d="M1313 322h9v9h-9z" fill="#008b1f"/><path d="M1321 322h9v9h-9z" fill="#008c1e"/><path d="M1329 322h9v9h-9z" fill="#008e1d"/><path d="M1337 322h9v9h-9z" fill="#008f1c"/><path d="M1345 322h9v9h-9z" fill="#00911b"/><path d="M1353 322h9v9h-9z" fill="#00921a"/><path d="M1361 322h9v9h-9z" fill="#009319"/><path d="M1369 322h9v9h-9z" fill="#009518"/><path d="M1377 322h9v9h-9z" fill="#009617"/><path d="M1385 322h9v9h-9z" fill="#009816"/><path d="M1393 322h9v9h-9z" fill="#009914"/><path d="M1401 322h9v9h-9z" fill="#009a13"/><path d="M1409 322h9v9h-9z" fill="#009c12"/><path d="M1417 322h9v9h-9z" fill="#009d10"/><path d="M1425 322h9v9h-9z" fill="#039e0e"/><path d="M1433 322h9v9h-9z" fill="#0a9c0d"/><path d="M1441 322h9v9h-9z" fill="#119b0b"/><path d="M1449 322h9v9h-9z" fill="#189a09"/><path d="M1457 322h9v9h-9z" fill="#209b07"/><path d="M1465 322h9v9h-9z" fill="#289c05"/><path d="M1473 322h9v9h-9z" fill="#319d03"/><path d="M1481 322h9v9h-9z" fill="#399e01"/><path d="M1489 322h9v9h-9z" fill="#429e00"/><path d="M1497 322h9v9h-9z" fill="#4b9d00"/><path d="M1505 322h9v9h-9z" fill="#539c00"/><path d="M1513 322h9v9h-9z" fill="#5c9b00"/><path d="M1521 322h9v9h-9z" fill="#659a00"/><path d="M1529 322h9v9h-9z" fill="#6e9900"/><path d="M1537 322h9v9h-9z" fill="#779800"/><path d="M1545 322h9v9h-9z" fill="#819700"/><path d="M1553 322h9v9h-9z" fill="#8b9600"/><path d="M1561 322h9v9h-9z" fill="#949600"/><path d="M1569 322h9v9h-9z" fill="#928900"/><path d="M1577 322h9v9h-9z" fill="#8e7d00"/><path d="M1585 322h9v9h-9z" fill="#8b7200"/><path d="M1593 322h9v9h-9z" fill="#886800"/><path d="M1169 330h9v9h-9z" fill="#00722a"/><path d="M1177 330h9v9h-9z" fill="#00742a"/><path d="M1185 330h9v9h-9z" fill="#00752a"/><path d="M1193 330h9v9h-9z" fill="#00762a"/><path d="M1201 330h9v9h-9z" fill="#007829"/><path d="M1209 330h9v9h-9z" fill="#007929"/><path d="M1217 330h9v9h-9z" fill="#007b29"/><path d="M1225 330h9v9h-9z" fill="#007c28"/><path d="M1233 330h9v9h-9z" fill="#007d28"/><path d="M1241 330h9v9h-9z" fill="#007f28"/><path d="M1249 330h9v9h-9z" fill="#008027"/><path d="M1257 330h9v9h-9z" fill="#008227"/><path d="M1265 330h9v9h-9z" fill="#008326"/><path d="M1273 330h9v9h-9z" fill="#008426"/><path d="M1281 330h9v9h-9z" fill="#008625"/><path d="M1289 330h9v9h-9z" fill="#008725"/><path d="M1297 330h9v9h-9z" fill="#008924"/><path d="M1305 330h9v9h-9z" fill="#008a23"/><path d="M1313 330h9v9h-9z" fill="#008b23"/><path d="M1321 330h9v9h-9z" fill="#008d22"/><path d="M1329 330h9v9h-9z" fill="#008e21"/><path d="M1337 330h9v9h-9z" fill="#009020"/><path d="M1345 330h9v9h-9z" fill="#00911f"/><path d="M1353 330h9v9h-9z" fill="#00921e"/><path d="M1361 330h9v9h-9z" fill="#00941d"/><path d="M1369 330h9v9h-9z" fill="#00951c"/><path d="M1377 330h9v9h-9z" fill="#00971b"/><path d="M1385 330h9v9h-9z" fill="#00981a"/><path d="M1393 330h9v9h-9z" fill="#009a18"/><path d="M1401 330h9v9h-9z" fill="#009b17"/><path d="M1409 330h9v9h-9z" fill="#009c16"/><path d="M1417 330h9v9h-9z" fill="#009e14"/><path d="M1425 330h9v9h-9z" fill="#059d12"/><path d="M1433 330h9v9h-9z" fill="#0d9c10"/><path d="M1441 330h9v9h-9z" fill="#149a0f"/><path d="M1449 330h9v9h-9z" fill="#1c990d"/><path d="M1457 330h9v9h-9z" fill="#24990b"/><path d="M1465 330h9v9h-9z" fill="#2c9a09"/><path d="M1473 330h9v9h-9z" fill="#359b07"/><path d="M1481 330h9v9h-9z" fill="#3e9c05"/><path d="M1489 330h9v9h-9z" fill="#479d03"/><path d="M1497 330h9v9h-9z" fill="#519e01"/><path d="M1505 330h9v9h-9z" fill="#5a9d00"/><path d="M1513 330h9v9h-9z" fill="#649d00"/><path d="M1521 330h9v9h-9z" fill="#6d9c00"/><path d="M1529 330h9v9h-9z" fill="#779b00"/><path d="M1537 330h9v9h-9z" fill="#819a00"/><path d="M1545 330h9v9h-9z" fill="#8b9900"/><path d="M1553 330h9v9h-9z" fill="#959800"/><path d="M1561 330h9v9h-9z" fill="#958d00"/><path d="M1569 330h9v9h-9z" fill="#918000"/><path d="M1577 330h9v9h-9z" fill="#8d7500"/><path d="M1585 330h9v9h-9z" fill="#8a6b00"/><path d="M1593 330h9v9h-9z" fill="#876200"/><path d="M1601 330h9v9h-9z" fill="#855a00"/><path d="M1609 330h9v9h-9z" fill="#825300"/><path d="M1169 338h9v9h-9z" fill="#00732d"/><path d="M1177 338h9v9h-9z" fill="#00742d"/><path d="M1185 338h9v9h-9z" fill="#00762d"/><path d="M1193 338h9v9h-9z" fill="#00772d"/><path d="M1201 338h9v9h-9z" fill="#00782d"/><path d="M1209 338h9v9h-9z" fill="#007a2c"/><path d="M1217 338h9v9h-9z" fill="#007b2c"/><path d="M1225 338h9v9h-9z" fill="#007d2c"/><path d="M1233 338h9v9h-9z" fill="#007e2b"/><path d="M1241 338h9v9h-9z" fill="#007f2b"/><path d="M1249 338h9v9h-9z" fill="#00812b"/><path d="M1257 338h9v9h-9z" fill="#00822a"/><path d="M1265 338h9v9h-9z" fill="#00842a"/><path d="M1273 338h9v9h-9z" fill="#008529"/><path d="M1281 338h9v9h-9z" fill="#008629"/><path d="M1289 338h9v9h-9z" fill="#008828"/><path d="M1297 338h9v9h-9z" fill="#008928"/><path d="M1305 338h9v9h-9z" fill="#008b27"/><path d="M1313 338h9v9h-9z" fill="#008c26"/><path d="M1321 338h9v9h-9z" fill="#008d26"/><path d="M1329 338h9v9h-9z" fill="#008f25"/><path d="M1337 338h9v9h-9z" fill="#009024"/><path d="M1345 338h9v9h-9z" fill="#009223"/><path d="M1353 338h9v9h-9z" fill="#009322"/><path d="M1361 338h9v9h-9z" fill="#009421"/><path d="M1369 338h9v9h-9z" fill="#009620"/><path d="M1377 338h9v9h-9z" fill="#00971f"/><path d="M1385 338h9v9h-9z" fill="#00991e"/><path d="M1393 338h9v9h-9z" fill="#009a1d"/><path d="M1401 338h9v9h-9z" fill="#009b1b"/><path d="M1409 338h9v9h-9z" fill="#009d1a"/><path d="M1417 338h9v9h-9z" fill="#019e18"/><path d="M1425 338h9v9h-9z" fill="#089d16"/><path d="M1433 338h9v9h-9z" fill="#109b14"/><path d="M1441 338h9v9h-9z" fill="#189a12"/><path d="M1449 338h9v9h-9z" fill="#209811"/><path d="M1457 338h9v9h-9z" fill="#28980f"/><path d="M1465 338h9v9h-9z" fill="#30990d"/><path d="M1473 338h9v9h-9z" fill="#399a0b"/><path d="M1481 338h9v9h-9z" fill="#439a09"/><path d="M1489 338h9v9h-9z" fill="#4c9b07"/><path d="M1497 338h9v9h-9z" fill="#569c05"/><path d="M1505 338h9v9h-9z" fill="#619d02"/><path d="M1513 338h9v9h-9z" fill="#6c9e00"/><path d="M1521 338h9v9h-9z" fill="#769d00"/><path d="M1529 338h9v9h-9z" fill="#809c00"/><path d="M1537 338h9v9h-9z" fill="#8b9b00"/><path d="M1545 338h9v9h-9z" fill="#959b00"/><path d="M1553 338h9v9h-9z" fill="#989100"/><path d="M1561 338h9v9h-9z" fill="#948300"/><path d="M1569 338h9v9h-9z" fill="#907700"/><path d="M1577 338h9v9h-9z" fill="#8d6d00"/><path d="M1585 338h9v9h-9z" fill="#8a6400"/><path d="M1593 338h9v9h-9z" fill="#875c00"/><path d="M1601 338h9v9h-9z" fill="#845400"/><path d="M1609 338h9v9h-9z" fill="#824e00"/><path d="M1617 338h9v9h-9z" fill="#7f4800"/><path d="M1169 346h9v9h-9z" fill="#007330"/><path d="M1177 346h9v9h-9z" fill="#007530"/><path d="M1185 346h9v9h-9z" fill="#007630"/><path d="M1193 346h9v9h-9z" fill="#007730"/><path d="M1201 346h9v9h-9z" fill="#007930"/><path d="M1209 346h9v9h-9z" fill="#007a30"/><path d="M1217 346h9v9h-9z" fill="#007c2f"/><path d="M1225 346h9v9h-9z" fill="#007d2f"/><path d="M1233 346h9v9h-9z" fill="#007e2f"/><path d="M1241 346h9v9h-9z" fill="#00802f"/><path d="M1249 346h9v9h-9z" fill="#00812e"/><path d="M1257 346h9v9h-9z" fill="#00832e"/><path d="M1265 346h9v9h-9z" fill="#00842e"/><path d="M1273 346h9v9h-9z" fill="#00862d"/><path d="M1281 346h9v9h-9z" fill="#00872d"/><path d="M1289 346h9v9h-9z" fill="#00882c"/><path d="M1297 346h9v9h-9z" fill="#008a2c"/><path d="M1305 346h9v9h-9z" fill="#008b2b"/><path d="M1313 346h9v9h-9z" fill="#008d2a"/><path d="M1321 346h9v9h-9z" fill="#008e2a"/><path d="M1329 346h9v9h-9z" fill="#008f29"/><path d="M1337 346h9v9h-9z" fill="#009128"/><path d="M1345 346h9v9h-9z" fill="#009227"/><path d="M1353 346h9v9h-9z" fill="#009426"/><path d="M1361 346h9v9h-9z" fill="#009525"/><path d="M1369 346h9v9h-9z" fill="#009624"/><path d="M1377 346h9v9h-9z" fill="#009823"/><path d="M1385 346h9v9h-9z" fill="#092"/><path d="M1393 346h9v9h-9z" fill="#009b21"/><path d="M1401 346h9v9h-9z" fill="#009c20"/><path d="M1409 346h9v9h-9z" fill="#009d1e"/><path d="M1417 346h9v9h-9z" fill="#049d1d"/><path d="M1425 346h9v9h-9z" fill="#0c9c1b"/><path d="M1433 346h9v9h-9z" fill="#149b19"/><path d="M1441 346h9v9h-9z" fill="#1c9917"/><path d="M1449 346h9v9h-9z" fill="#249815"/><path d="M1457 346h9v9h-9z" fill="#2c9613"/><path d="M1465 346h9v9h-9z" fill="#359711"/><path d="M1473 346h9v9h-9z" fill="#3e980f"/><path d="M1481 346h9v9h-9z" fill="#48990d"/><path d="M1489 346h9v9h-9z" fill="#529a0b"/><path d="M1497 346h9v9h-9z" fill="#5c9b09"/><path d="M1505 346h9v9h-9z" fill="#679c07"/><path d="M1513 346h9v9h-9z" fill="#739c04"/><path d="M1521 346h9v9h-9z" fill="#7e9d02"/><path d="M1529 346h9v9h-9z" fill="#8b9e00"/><path d="M1537 346h9v9h-9z" fill="#969d00"/><path d="M1545 346h9v9h-9z" fill="#9b9600"/><path d="M1553 346h9v9h-9z" fill="#968700"/><path d="M1561 346h9v9h-9z" fill="#937a00"/><path d="M1569 346h9v9h-9z" fill="#8f6f00"/><path d="M1577 346h9v9h-9z" fill="#8c6600"/><path d="M1585 346h9v9h-9z" fill="#895d00"/><path d="M1593 346h9v9h-9z" fill="#865600"/><path d="M1601 346h9v9h-9z" fill="#844f00"/><path d="M1609 346h9v9h-9z" fill="#814900"/><path d="M1617 346h9v9h-9z" fill="#7f4400"/><path d="M1625 346h9v9h-9z" fill="#7d3f00"/><path d="M1169 354h9v9h-9z" fill="#007434"/><path d="M1177 354h9v9h-9z" fill="#007534"/><path d="M1185 354h9v9h-9z" fill="#007734"/><path d="M1193 354h9v9h-9z" fill="#007833"/><path d="M1201 354h9v9h-9z" fill="#007933"/><path d="M1209 354h9v9h-9z" fill="#007b33"/><path d="M1217 354h9v9h-9z" fill="#007c33"/><path d="M1225 354h9v9h-9z" fill="#007e33"/><path d="M1233 354h9v9h-9z" fill="#007f33"/><path d="M1241 354h9v9h-9z" fill="#008032"/><path d="M1249 354h9v9h-9z" fill="#008232"/><path d="M1257 354h9v9h-9z" fill="#008332"/><path d="M1265 354h9v9h-9z" fill="#008532"/><path d="M1273 354h9v9h-9z" fill="#008631"/><path d="M1281 354h9v9h-9z" fill="#008731"/><path d="M1289 354h9v9h-9z" fill="#008930"/><path d="M1297 354h9v9h-9z" fill="#008a30"/><path d="M1305 354h9v9h-9z" fill="#008c2f"/><path d="M1313 354h9v9h-9z" fill="#008d2f"/><path d="M1321 354h9v9h-9z" fill="#008e2e"/><path d="M1329 354h9v9h-9z" fill="#00902d"/><path d="M1337 354h9v9h-9z" fill="#00912d"/><path d="M1345 354h9v9h-9z" fill="#00932c"/><path d="M1353 354h9v9h-9z" fill="#00942b"/><path d="M1361 354h9v9h-9z" fill="#00962a"/><path d="M1369 354h9v9h-9z" fill="#009729"/><path d="M1377 354h9v9h-9z" fill="#009828"/><path d="M1385 354h9v9h-9z" fill="#009a27"/><path d="M1393 354h9v9h-9z" fill="#009b26"/><path d="M1401 354h9v9h-9z" fill="#009d24"/><path d="M1409 354h9v9h-9z" fill="#009e23"/><path d="M1417 354h9v9h-9z" fill="#079d21"/><path d="M1425 354h9v9h-9z" fill="#0f9b1f"/><path d="M1433 354h9v9h-9z" fill="#179a1d"/><path d="M1441 354h9v9h-9z" fill="#20991b"/><path d="M1449 354h9v9h-9z" fill="#289719"/><path d="M1457 354h9v9h-9z" fill="#309617"/><path d="M1465 354h9v9h-9z" fill="#399515"/><path d="M1473 354h9v9h-9z" fill="#439613"/><path d="M1481 354h9v9h-9z" fill="#4d9712"/><path d="M1489 354h9v9h-9z" fill="#579810"/><path d="M1497 354h9v9h-9z" fill="#62990d"/><path d="M1505 354h9v9h-9z" fill="#6e9a0b"/><path d="M1513 354h9v9h-9z" fill="#7a9b09"/><path d="M1521 354h9v9h-9z" fill="#869c07"/><path d="M1529 354h9v9h-9z" fill="#939d04"/><path d="M1537 354h9v9h-9z" fill="#9d9a01"/><path d="M1545 354h9v9h-9z" fill="#998b00"/><path d="M1553 354h9v9h-9z" fill="#957e00"/><path d="M1561 354h9v9h-9z" fill="#927200"/><path d="M1569 354h9v9h-9z" fill="#8e6800"/><path d="M1577 354h9v9h-9z" fill="#8b5f00"/><path d="M1585 354h9v9h-9z" fill="#895700"/><path d="M1593 354h9v9h-9z" fill="#865000"/><path d="M1601 354h9v9h-9z" fill="#834a00"/><path d="M1609 354h9v9h-9z" fill="#814400"/><path d="M1617 354h9v9h-9z" fill="#7f3f00"/><path d="M1625 354h9v9h-9z" fill="#7d3b00"/><path d="M1633 354h9v9h-9z" fill="#7b3600"/><path d="M1641 354h9v9h-9z" fill="#793300"/><path d="M1169 362h9v9h-9z" fill="#007437"/><path d="M1177 362h9v9h-9z" fill="#007637"/><path d="M1185 362h9v9h-9z" fill="#007737"/><path d="M1193 362h9v9h-9z" fill="#007937"/><path d="M1201 362h9v9h-9z" fill="#007a37"/><path d="M1209 362h9v9h-9z" fill="#007b37"/><path d="M1217 362h9v9h-9z" fill="#007d37"/><path d="M1225 362h9v9h-9z" fill="#007e37"/><path d="M1233 362h9v9h-9z" fill="#008037"/><path d="M1241 362h9v9h-9z" fill="#008137"/><path d="M1249 362h9v9h-9z" fill="#008236"/><path d="M1257 362h9v9h-9z" fill="#008436"/><path d="M1265 362h9v9h-9z" fill="#008536"/><path d="M1273 362h9v9h-9z" fill="#008735"/><path d="M1281 362h9v9h-9z" fill="#008835"/><path d="M1289 362h9v9h-9z" fill="#008935"/><path d="M1297 362h9v9h-9z" fill="#008b34"/><path d="M1305 362h9v9h-9z" fill="#008c34"/><path d="M1313 362h9v9h-9z" fill="#008e33"/><path d="M1321 362h9v9h-9z" fill="#008f33"/><path d="M1329 362h9v9h-9z" fill="#009032"/><path d="M1337 362h9v9h-9z" fill="#009231"/><path d="M1345 362h9v9h-9z" fill="#009330"/><path d="M1353 362h9v9h-9z" fill="#009530"/><path d="M1361 362h9v9h-9z" fill="#00962f"/><path d="M1369 362h9v9h-9z" fill="#00972e"/><path d="M1377 362h9v9h-9z" fill="#00992d"/><path d="M1385 362h9v9h-9z" fill="#009a2c"/><path d="M1393 362h9v9h-9z" fill="#009c2b"/><path d="M1401 362h9v9h-9z" fill="#009d2a"/><path d="M1409 362h9v9h-9z" fill="#029e28"/><path d="M1417 362h9v9h-9z" fill="#0a9c26"/><path d="M1425 362h9v9h-9z" fill="#139b24"/><path d="M1433 362h9v9h-9z" fill="#1b9a22"/><path d="M1441 362h9v9h-9z" fill="#249820"/><path d="M1449 362h9v9h-9z" fill="#2c971e"/><path d="M1457 362h9v9h-9z" fill="#35951c"/><path d="M1465 362h9v9h-9z" fill="#3e941a"/><path d="M1473 362h9v9h-9z" fill="#489518"/><path d="M1481 362h9v9h-9z" fill="#539616"/><path d="M1489 362h9v9h-9z" fill="#5e9714"/><path d="M1497 362h9v9h-9z" fill="#699712"/><path d="M1505 362h9v9h-9z" fill="#759810"/><path d="M1513 362h9v9h-9z" fill="#81990e"/><path d="M1521 362h9v9h-9z" fill="#8f9a0b"/><path d="M1529 362h9v9h-9z" fill="#9b9a09"/><path d="M1537 362h9v9h-9z" fill="#988b06"/><path d="M1545 362h9v9h-9z" fill="#967f03"/><path d="M1553 362h9v9h-9z" fill="#947401"/><path d="M1561 362h9v9h-9z" fill="#916a00"/><path d="M1569 362h9v9h-9z" fill="#8e6100"/><path d="M1577 362h9v9h-9z" fill="#8b5800"/><path d="M1585 362h9v9h-9z" fill="#885100"/><path d="M1593 362h9v9h-9z" fill="#854b00"/><path d="M1601 362h9v9h-9z" fill="#834500"/><path d="M1609 362h9v9h-9z" fill="#814000"/><path d="M1617 362h9v9h-9z" fill="#7f3b00"/><path d="M1625 362h9v9h-9z" fill="#7d3700"/><path d="M1633 362h9v9h-9z" fill="#7b3300"/><path d="M1641 362h9v9h-9z" fill="#792f00"/><path d="M1649 362h9v9h-9z" fill="#772c00"/><path d="M1169 370h9v9h-9z" fill="#00753b"/><path d="M1177 370h9v9h-9z" fill="#00763b"/><path d="M1185 370h9v9h-9z" fill="#00783b"/><path d="M1193 370h9v9h-9z" fill="#00793b"/><path d="M1201 370h9v9h-9z" fill="#007a3b"/><path d="M1209 370h9v9h-9z" fill="#007c3b"/><path d="M1217 370h9v9h-9z" fill="#007d3b"/><path d="M1225 370h9v9h-9z" fill="#007f3b"/><path d="M1233 370h9v9h-9z" fill="#00803b"/><path d="M1241 370h9v9h-9z" fill="#00823b"/><path d="M1249 370h9v9h-9z" fill="#00833b"/><path d="M1257 370h9v9h-9z" fill="#00843a"/><path d="M1265 370h9v9h-9z" fill="#00863a"/><path d="M1273 370h9v9h-9z" fill="#00873a"/><path d="M1281 370h9v9h-9z" fill="#00893a"/><path d="M1289 370h9v9h-9z" fill="#008a39"/><path d="M1297 370h9v9h-9z" fill="#008b39"/><path d="M1305 370h9v9h-9z" fill="#008d38"/><path d="M1313 370h9v9h-9z" fill="#008e38"/><path d="M1321 370h9v9h-9z" fill="#009037"/><path d="M1329 370h9v9h-9z" fill="#009137"/><path d="M1337 370h9v9h-9z" fill="#009236"/><path d="M1345 370h9v9h-9z" fill="#009436"/><path d="M1353 370h9v9h-9z" fill="#009535"/><path d="M1361 370h9v9h-9z" fill="#009734"/><path d="M1369 370h9v9h-9z" fill="#009833"/><path d="M1377 370h9v9h-9z" fill="#009932"/><path d="M1385 370h9v9h-9z" fill="#009b31"/><path d="M1393 370h9v9h-9z" fill="#009c30"/><path d="M1401 370h9v9h-9z" fill="#009e2f"/><path d="M1409 370h9v9h-9z" fill="#069d2d"/><path d="M1417 370h9v9h-9z" fill="#0e9c2b"/><path d="M1425 370h9v9h-9z" fill="#179a29"/><path d="M1433 370h9v9h-9z" fill="#209927"/><path d="M1441 370h9v9h-9z" fill="#289825"/><path d="M1449 370h9v9h-9z" fill="#319623"/><path d="M1457 370h9v9h-9z" fill="#3a9521"/><path d="M1465 370h9v9h-9z" fill="#44931f"/><path d="M1473 370h9v9h-9z" fill="#4e931d"/><path d="M1481 370h9v9h-9z" fill="#59941b"/><path d="M1489 370h9v9h-9z" fill="#649519"/><path d="M1497 370h9v9h-9z" fill="#709617"/><path d="M1505 370h9v9h-9z" fill="#7d9715"/><path d="M1513 370h9v9h-9z" fill="#8a9813"/><path d="M1521 370h9v9h-9z" fill="#989911"/><path d="M1529 370h9v9h-9z" fill="#968b0d"/><path d="M1537 370h9v9h-9z" fill="#947e0a"/><path d="M1545 370h9v9h-9z" fill="#927307"/><path d="M1553 370h9v9h-9z" fill="#906904"/><path d="M1561 370h9v9h-9z" fill="#8e6102"/><path d="M1569 370h9v9h-9z" fill="#8d5a00"/><path d="M1577 370h9v9h-9z" fill="#8a5200"/><path d="M1585 370h9v9h-9z" fill="#884b00"/><path d="M1593 370h9v9h-9z" fill="#854500"/><path d="M1601 370h9v9h-9z" fill="#834000"/><path d="M1609 370h9v9h-9z" fill="#813b00"/><path d="M1617 370h9v9h-9z" fill="#7f3700"/><path d="M1625 370h9v9h-9z" fill="#7d3300"/><path d="M1633 370h9v9h-9z" fill="#7b2f00"/><path d="M1641 370h9v9h-9z" fill="#792c00"/><path d="M1649 370h9v9h-9z" fill="#782900"/><path d="M1657 370h9v9h-9z" fill="#762600"/><path d="M1177 378h9v9h-9z" fill="#00773f"/><path d="M1185 378h9v9h-9z" fill="#00783f"/><path d="M1193 378h9v9h-9z" fill="#007a3f"/><path d="M1201 378h9v9h-9z" fill="#007b3f"/><path d="M1209 378h9v9h-9z" fill="#007c3f"/><path d="M1217 378h9v9h-9z" fill="#007e3f"/><path d="M1225 378h9v9h-9z" fill="#007f3f"/><path d="M1233 378h9v9h-9z" fill="#00813f"/><path d="M1241 378h9v9h-9z" fill="#00823f"/><path d="M1249 378h9v9h-9z" fill="#00833f"/><path d="M1257 378h9v9h-9z" fill="#00853f"/><path d="M1265 378h9v9h-9z" fill="#00863f"/><path d="M1273 378h9v9h-9z" fill="#00883f"/><path d="M1281 378h9v9h-9z" fill="#00893e"/><path d="M1289 378h9v9h-9z" fill="#008a3e"/><path d="M1297 378h9v9h-9z" fill="#008c3e"/><path d="M1305 378h9v9h-9z" fill="#008d3e"/><path d="M1313 378h9v9h-9z" fill="#008f3d"/><path d="M1321 378h9v9h-9z" fill="#00903d"/><path d="M1329 378h9v9h-9z" fill="#00923c"/><path d="M1337 378h9v9h-9z" fill="#00933c"/><path d="M1345 378h9v9h-9z" fill="#00943b"/><path d="M1353 378h9v9h-9z" fill="#00963a"/><path d="M1361 378h9v9h-9z" fill="#00973a"/><path d="M1369 378h9v9h-9z" fill="#009939"/><path d="M1377 378h9v9h-9z" fill="#009a38"/><path d="M1385 378h9v9h-9z" fill="#009b37"/><path d="M1393 378h9v9h-9z" fill="#009d36"/><path d="M1401 378h9v9h-9z" fill="#009e35"/><path d="M1409 378h9v9h-9z" fill="#099d33"/><path d="M1417 378h9v9h-9z" fill="#129b31"/><path d="M1425 378h9v9h-9z" fill="#1b9a2f"/><path d="M1433 378h9v9h-9z" fill="#24982d"/><path d="M1441 378h9v9h-9z" fill="#2d972b"/><path d="M1449 378h9v9h-9z" fill="#379629"/><path d="M1457 378h9v9h-9z" fill="#409427"/><path d="M1465 378h9v9h-9z" fill="#4a9324"/><path d="M1473 378h9v9h-9z" fill="#549222"/><path d="M1481 378h9v9h-9z" fill="#5f9320"/><path d="M1489 378h9v9h-9z" fill="#6b931f"/><path d="M1497 378h9v9h-9z" fill="#78941d"/><path d="M1505 378h9v9h-9z" fill="#85951b"/><path d="M1513 378h9v9h-9z" fill="#939619"/><path d="M1521 378h9v9h-9z" fill="#948b15"/><path d="M1529 378h9v9h-9z" fill="#927d10"/><path d="M1537 378h9v9h-9z" fill="#8f720d"/><path d="M1545 378h9v9h-9z" fill="#8e680a"/><path d="M1553 378h9v9h-9z" fill="#8c6007"/><path d="M1561 378h9v9h-9z" fill="#8b5805"/><path d="M1569 378h9v9h-9z" fill="#895103"/><path d="M1577 378h9v9h-9z" fill="#884b01"/><path d="M1585 378h9v9h-9z" fill="#874600"/><path d="M1593 378h9v9h-9z" fill="#854000"/><path d="M1601 378h9v9h-9z" fill="#833b00"/><path d="M1609 378h9v9h-9z" fill="#803700"/><path d="M1617 378h9v9h-9z" fill="#7f3300"/><path d="M1625 378h9v9h-9z" fill="#7d2f00"/><path d="M1633 378h9v9h-9z" fill="#7b2c00"/><path d="M1641 378h9v9h-9z" fill="#792800"/><path d="M1649 378h9v9h-9z" fill="#782600"/><path d="M1657 378h9v9h-9z" fill="#762300"/><path d="M1665 378h9v9h-9z" fill="#752100"/><path d="M1673 378h9v9h-9z" fill="#731e00"/><path d="M1177 386h9v9h-9z" fill="#007743"/><path d="M1185 386h9v9h-9z" fill="#007943"/><path d="M1193 386h9v9h-9z" fill="#007a44"/><path d="M1201 386h9v9h-9z" fill="#007c44"/><path d="M1209 386h9v9h-9z" fill="#007d44"/><path d="M1217 386h9v9h-9z" fill="#007e44"/><path d="M1225 386h9v9h-9z" fill="#008044"/><path d="M1233 386h9v9h-9z" fill="#008144"/><path d="M1241 386h9v9h-9z" fill="#008344"/><path d="M1249 386h9v9h-9z" fill="#008444"/><path d="M1257 386h9v9h-9z" fill="#008544"/><path d="M1265 386h9v9h-9z" fill="#008744"/><path d="M1273 386h9v9h-9z" fill="#084"/><path d="M1281 386h9v9h-9z" fill="#008a44"/><path d="M1289 386h9v9h-9z" fill="#008b44"/><path d="M1297 386h9v9h-9z" fill="#008c43"/><path d="M1305 386h9v9h-9z" fill="#008e43"/><path d="M1313 386h9v9h-9z" fill="#008f43"/><path d="M1321 386h9v9h-9z" fill="#009142"/><path d="M1329 386h9v9h-9z" fill="#009242"/><path d="M1337 386h9v9h-9z" fill="#009341"/><path d="M1345 386h9v9h-9z" fill="#009541"/><path d="M1353 386h9v9h-9z" fill="#009640"/><path d="M1361 386h9v9h-9z" fill="#009840"/><path d="M1369 386h9v9h-9z" fill="#00993f"/><path d="M1377 386h9v9h-9z" fill="#009a3e"/><path d="M1385 386h9v9h-9z" fill="#009c3e"/><path d="M1393 386h9v9h-9z" fill="#009d3d"/><path d="M1401 386h9v9h-9z" fill="#049e3b"/><path d="M1409 386h9v9h-9z" fill="#0d9c39"/><path d="M1417 386h9v9h-9z" fill="#169b37"/><path d="M1425 386h9v9h-9z" fill="#209935"/><path d="M1433 386h9v9h-9z" fill="#299833"/><path d="M1441 386h9v9h-9z" fill="#339631"/><path d="M1449 386h9v9h-9z" fill="#3c952f"/><path d="M1457 386h9v9h-9z" fill="#46942d"/><path d="M1465 386h9v9h-9z" fill="#51922a"/><path d="M1473 386h9v9h-9z" fill="#5b9128"/><path d="M1481 386h9v9h-9z" fill="#669126"/><path d="M1489 386h9v9h-9z" fill="#739224"/><path d="M1497 386h9v9h-9z" fill="#809323"/><path d="M1505 386h9v9h-9z" fill="#8e9421"/><path d="M1513 386h9v9h-9z" fill="#928b1d"/><path d="M1521 386h9v9h-9z" fill="#907d18"/><path d="M1529 386h9v9h-9z" fill="#8d7114"/><path d="M1537 386h9v9h-9z" fill="#8b6710"/><path d="M1545 386h9v9h-9z" fill="#8a5e0d"/><path d="M1553 386h9v9h-9z" fill="#88560a"/><path d="M1561 386h9v9h-9z" fill="#875008"/><path d="M1569 386h9v9h-9z" fill="#864a06"/><path d="M1577 386h9v9h-9z" fill="#854404"/><path d="M1585 386h9v9h-9z" fill="#843f02"/><path d="M1593 386h9v9h-9z" fill="#843b01"/><path d="M1601 386h9v9h-9z" fill="#823700"/><path d="M1609 386h9v9h-9z" fill="#803300"/><path d="M1617 386h9v9h-9z" fill="#7e2f00"/><path d="M1625 386h9v9h-9z" fill="#7d2b00"/><path d="M1633 386h9v9h-9z" fill="#7b2800"/><path d="M1641 386h9v9h-9z" fill="#792500"/><path d="M1649 386h9v9h-9z" fill="#782300"/><path d="M1657 386h9v9h-9z" fill="#762000"/><path d="M1665 386h9v9h-9z" fill="#751e00"/><path d="M1673 386h9v9h-9z" fill="#731c00"/><path d="M1681 386h9v9h-9z" fill="#721a00"/><path d="M1177 394h9v9h-9z" fill="#007848"/><path d="M1185 394h9v9h-9z" fill="#007948"/><path d="M1193 394h9v9h-9z" fill="#007b48"/><path d="M1201 394h9v9h-9z" fill="#007c48"/><path d="M1209 394h9v9h-9z" fill="#007e49"/><path d="M1217 394h9v9h-9z" fill="#007f49"/><path d="M1225 394h9v9h-9z" fill="#008049"/><path d="M1233 394h9v9h-9z" fill="#008249"/><path d="M1241 394h9v9h-9z" fill="#008349"/><path d="M1249 394h9v9h-9z" fill="#008549"/><path d="M1257 394h9v9h-9z" fill="#008649"/><path d="M1265 394h9v9h-9z" fill="#008749"/><path d="M1273 394h9v9h-9z" fill="#008949"/><path d="M1281 394h9v9h-9z" fill="#008a49"/><path d="M1289 394h9v9h-9z" fill="#008c49"/><path d="M1297 394h9v9h-9z" fill="#008d49"/><path d="M1305 394h9v9h-9z" fill="#008e49"/><path d="M1313 394h9v9h-9z" fill="#009049"/><path d="M1321 394h9v9h-9z" fill="#009148"/><path d="M1329 394h9v9h-9z" fill="#009348"/><path d="M1337 394h9v9h-9z" fill="#009448"/><path d="M1345 394h9v9h-9z" fill="#009547"/><path d="M1353 394h9v9h-9z" fill="#009747"/><path d="M1361 394h9v9h-9z" fill="#009846"/><path d="M1369 394h9v9h-9z" fill="#009a46"/><path d="M1377 394h9v9h-9z" fill="#009b45"/><path d="M1385 394h9v9h-9z" fill="#009c44"/><path d="M1393 394h9v9h-9z" fill="#009e44"/><path d="M1401 394h9v9h-9z" fill="#089d42"/><path d="M1409 394h9v9h-9z" fill="#119c40"/><path d="M1417 394h9v9h-9z" fill="#1b9a3e"/><path d="M1425 394h9v9h-9z" fill="#24993c"/><path d="M1433 394h9v9h-9z" fill="#2e9739"/><path d="M1441 394h9v9h-9z" fill="#389637"/><path d="M1449 394h9v9h-9z" fill="#439535"/><path d="M1457 394h9v9h-9z" fill="#4d9333"/><path d="M1465 394h9v9h-9z" fill="#589231"/><path d="M1473 394h9v9h-9z" fill="#63902f"/><path d="M1481 394h9v9h-9z" fill="#6e8f2c"/><path d="M1489 394h9v9h-9z" fill="#7b902b"/><path d="M1497 394h9v9h-9z" fill="#899129"/><path d="M1505 394h9v9h-9z" fill="#908b25"/><path d="M1513 394h9v9h-9z" fill="#8e7c1f"/><path d="M1521 394h9v9h-9z" fill="#8b701b"/><path d="M1529 394h9v9h-9z" fill="#896616"/><path d="M1537 394h9v9h-9z" fill="#885d13"/><path d="M1545 394h9v9h-9z" fill="#865510"/><path d="M1553 394h9v9h-9z" fill="#854e0d"/><path d="M1561 394h9v9h-9z" fill="#84480b"/><path d="M1569 394h9v9h-9z" fill="#834308"/><path d="M1577 394h9v9h-9z" fill="#823e07"/><path d="M1585 394h9v9h-9z" fill="#813905"/><path d="M1593 394h9v9h-9z" fill="#813503"/><path d="M1601 394h9v9h-9z" fill="#803202"/><path d="M1609 394h9v9h-9z" fill="#802e00"/><path d="M1617 394h9v9h-9z" fill="#7e2b00"/><path d="M1625 394h9v9h-9z" fill="#7d2800"/><path d="M1633 394h9v9h-9z" fill="#7b2500"/><path d="M1641 394h9v9h-9z" fill="#792200"/><path d="M1649 394h9v9h-9z" fill="#782000"/><path d="M1657 394h9v9h-9z" fill="#761d00"/><path d="M1665 394h9v9h-9z" fill="#751b00"/><path d="M1673 394h9v9h-9z" fill="#741900"/><path d="M1681 394h9v9h-9z" fill="#721700"/><path d="M1689 394h9v9h-9z" fill="#711600"/><path d="M1177 402h9v9h-9z" fill="#00784c"/><path d="M1185 402h9v9h-9z" fill="#007a4d"/><path d="M1193 402h9v9h-9z" fill="#007b4d"/><path d="M1201 402h9v9h-9z" fill="#007d4d"/><path d="M1209 402h9v9h-9z" fill="#007e4e"/><path d="M1217 402h9v9h-9z" fill="#007f4e"/><path d="M1225 402h9v9h-9z" fill="#00814e"/><path d="M1233 402h9v9h-9z" fill="#00824f"/><path d="M1241 402h9v9h-9z" fill="#00844f"/><path d="M1249 402h9v9h-9z" fill="#00854f"/><path d="M1257 402h9v9h-9z" fill="#00864f"/><path d="M1265 402h9v9h-9z" fill="#00884f"/><path d="M1273 402h9v9h-9z" fill="#00894f"/><path d="M1281 402h9v9h-9z" fill="#008b4f"/><path d="M1289 402h9v9h-9z" fill="#008c4f"/><path d="M1297 402h9v9h-9z" fill="#008e4f"/><path d="M1305 402h9v9h-9z" fill="#008f4f"/><path d="M1313 402h9v9h-9z" fill="#00904f"/><path d="M1321 402h9v9h-9z" fill="#00924f"/><path d="M1329 402h9v9h-9z" fill="#00934f"/><path d="M1337 402h9v9h-9z" fill="#00954e"/><path d="M1345 402h9v9h-9z" fill="#00964e"/><path d="M1353 402h9v9h-9z" fill="#00974e"/><path d="M1361 402h9v9h-9z" fill="#00994d"/><path d="M1369 402h9v9h-9z" fill="#009a4d"/><path d="M1377 402h9v9h-9z" fill="#009c4c"/><path d="M1385 402h9v9h-9z" fill="#009d4c"/><path d="M1393 402h9v9h-9z" fill="#029e4b"/><path d="M1401 402h9v9h-9z" fill="#0c9c49"/><path d="M1409 402h9v9h-9z" fill="#159b47"/><path d="M1417 402h9v9h-9z" fill="#209a45"/><path d="M1425 402h9v9h-9z" fill="#2a9843"/><path d="M1433 402h9v9h-9z" fill="#349741"/><path d="M1441 402h9v9h-9z" fill="#3f953e"/><path d="M1449 402h9v9h-9z" fill="#4a943c"/><path d="M1457 402h9v9h-9z" fill="#55933a"/><path d="M1465 402h9v9h-9z" fill="#609138"/><path d="M1473 402h9v9h-9z" fill="#6b9036"/><path d="M1481 402h9v9h-9z" fill="#778e33"/><path d="M1489 402h9v9h-9z" fill="#848f31"/><path d="M1497 402h9v9h-9z" fill="#8e8b2e"/><path d="M1505 402h9v9h-9z" fill="#8c7c28"/><path d="M1513 402h9v9h-9z" fill="#896f22"/><path d="M1521 402h9v9h-9z" fill="#87651d"/><path d="M1529 402h9v9h-9z" fill="#855b19"/><path d="M1537 402h9v9h-9z" fill="#845315"/><path d="M1545 402h9v9h-9z" fill="#824c12"/><path d="M1553 402h9v9h-9z" fill="#81460f"/><path d="M1561 402h9v9h-9z" fill="#80410d"/><path d="M1569 402h9v9h-9z" fill="#803c0b"/><path d="M1577 402h9v9h-9z" fill="#7f3809"/><path d="M1585 402h9v9h-9z" fill="#7e3407"/><path d="M1593 402h9v9h-9z" fill="#7e3005"/><path d="M1601 402h9v9h-9z" fill="#7d2d04"/><path d="M1609 402h9v9h-9z" fill="#7d2a02"/><path d="M1617 402h9v9h-9z" fill="#7d2701"/><path d="M1625 402h9v9h-9z" fill="#7d2400"/><path d="M1633 402h9v9h-9z" fill="#7b2200"/><path d="M1641 402h9v9h-9z" fill="#791f00"/><path d="M1649 402h9v9h-9z" fill="#781d00"/><path d="M1657 402h9v9h-9z" fill="#771b00"/><path d="M1665 402h9v9h-9z" fill="#751900"/><path d="M1673 402h9v9h-9z" fill="#741700"/><path d="M1681 402h9v9h-9z" fill="#731500"/><path d="M1689 402h9v9h-9z" fill="#711300"/><path d="M1697 402h9v9h-9z" fill="#701200"/><path d="M1705 402h9v9h-9z" fill="#6f1100"/><path d="M1177 410h9v9h-9z" fill="#007951"/><path d="M1185 410h9v9h-9z" fill="#007a52"/><path d="M1193 410h9v9h-9z" fill="#007c52"/><path d="M1201 410h9v9h-9z" fill="#007d53"/><path d="M1209 410h9v9h-9z" fill="#007f53"/><path d="M1217 410h9v9h-9z" fill="#008054"/><path d="M1225 410h9v9h-9z" fill="#008154"/><path d="M1233 410h9v9h-9z" fill="#008354"/><path d="M1241 410h9v9h-9z" fill="#008455"/><path d="M1249 410h9v9h-9z" fill="#008655"/><path d="M1257 410h9v9h-9z" fill="#008755"/><path d="M1265 410h9v9h-9z" fill="#085"/><path d="M1273 410h9v9h-9z" fill="#008a56"/><path d="M1281 410h9v9h-9z" fill="#008b56"/><path d="M1289 410h9v9h-9z" fill="#008d56"/><path d="M1297 410h9v9h-9z" fill="#008e56"/><path d="M1305 410h9v9h-9z" fill="#008f56"/><path d="M1313 410h9v9h-9z" fill="#009156"/><path d="M1321 410h9v9h-9z" fill="#009256"/><path d="M1329 410h9v9h-9z" fill="#009456"/><path d="M1337 410h9v9h-9z" fill="#009556"/><path d="M1345 410h9v9h-9z" fill="#009656"/><path d="M1353 410h9v9h-9z" fill="#009855"/><path d="M1361 410h9v9h-9z" fill="#095"/><path d="M1369 410h9v9h-9z" fill="#009b55"/><path d="M1377 410h9v9h-9z" fill="#009c54"/><path d="M1385 410h9v9h-9z" fill="#009e54"/><path d="M1393 410h9v9h-9z" fill="#069d53"/><path d="M1401 410h9v9h-9z" fill="#109c51"/><path d="M1409 410h9v9h-9z" fill="#1a9a4e"/><path d="M1417 410h9v9h-9z" fill="#25994c"/><path d="M1425 410h9v9h-9z" fill="#30984a"/><path d="M1433 410h9v9h-9z" fill="#3a9648"/><path d="M1441 410h9v9h-9z" fill="#469546"/><path d="M1449 410h9v9h-9z" fill="#519344"/><path d="M1457 410h9v9h-9z" fill="#5d9242"/><path d="M1465 410h9v9h-9z" fill="#689140"/><path d="M1473 410h9v9h-9z" fill="#758f3d"/><path d="M1481 410h9v9h-9z" fill="#818e3b"/><path d="M1489 410h9v9h-9z" fill="#8d8b38"/><path d="M1497 410h9v9h-9z" fill="#8a7b30"/><path d="M1505 410h9v9h-9z" fill="#876e2a"/><path d="M1513 410h9v9h-9z" fill="#856324"/><path d="M1521 410h9v9h-9z" fill="#835a1f"/><path d="M1529 410h9v9h-9z" fill="#82521b"/><path d="M1537 410h9v9h-9z" fill="#804b18"/><path d="M1545 410h9v9h-9z" fill="#7f4514"/><path d="M1553 410h9v9h-9z" fill="#7e3f12"/><path d="M1561 410h9v9h-9z" fill="#7d3a0f"/><path d="M1569 410h9v9h-9z" fill="#7d360d"/><path d="M1577 410h9v9h-9z" fill="#7c320b"/><path d="M1585 410h9v9h-9z" fill="#7b2e09"/><path d="M1593 410h9v9h-9z" fill="#7b2b07"/><path d="M1601 410h9v9h-9z" fill="#7b2806"/><path d="M1609 410h9v9h-9z" fill="#7a2504"/><path d="M1617 410h9v9h-9z" fill="#7a2303"/><path d="M1625 410h9v9h-9z" fill="#7a2002"/><path d="M1633 410h9v9h-9z" fill="#7a1e01"/><path d="M1641 410h9v9h-9z" fill="#791c00"/><path d="M1649 410h9v9h-9z" fill="#781a00"/><path d="M1657 410h9v9h-9z" fill="#771800"/><path d="M1665 410h9v9h-9z" fill="#751600"/><path d="M1673 410h9v9h-9z" fill="#741400"/><path d="M1681 410h9v9h-9z" fill="#731300"/><path d="M1689 410h9v9h-9z" fill="#721100"/><path d="M1697 410h9v9h-9z" fill="#701000"/><path d="M1705 410h9v9h-9z" fill="#6f0e00"/><path d="M1713 410h9v9h-9z" fill="#6e0d00"/><path d="M1185 418h9v9h-9z" fill="#007b57"/><path d="M1193 418h9v9h-9z" fill="#007c58"/><path d="M1201 418h9v9h-9z" fill="#007e58"/><path d="M1209 418h9v9h-9z" fill="#007f59"/><path d="M1217 418h9v9h-9z" fill="#008159"/><path d="M1225 418h9v9h-9z" fill="#00825a"/><path d="M1233 418h9v9h-9z" fill="#00835a"/><path d="M1241 418h9v9h-9z" fill="#00855b"/><path d="M1249 418h9v9h-9z" fill="#00865b"/><path d="M1257 418h9v9h-9z" fill="#00885c"/><path d="M1265 418h9v9h-9z" fill="#00895c"/><path d="M1273 418h9v9h-9z" fill="#008a5c"/><path d="M1281 418h9v9h-9z" fill="#008c5d"/><path d="M1289 418h9v9h-9z" fill="#008d5d"/><path d="M1297 418h9v9h-9z" fill="#008f5d"/><path d="M1305 418h9v9h-9z" fill="#00905d"/><path d="M1313 418h9v9h-9z" fill="#00915d"/><path d="M1321 418h9v9h-9z" fill="#00935d"/><path d="M1329 418h9v9h-9z" fill="#00945e"/><path d="M1337 418h9v9h-9z" fill="#00965e"/><path d="M1345 418h9v9h-9z" fill="#00975e"/><path d="M1353 418h9v9h-9z" fill="#00985e"/><path d="M1361 418h9v9h-9z" fill="#009a5d"/><path d="M1369 418h9v9h-9z" fill="#009b5d"/><path d="M1377 418h9v9h-9z" fill="#009d5d"/><path d="M1385 418h9v9h-9z" fill="#009e5d"/><path d="M1393 418h9v9h-9z" fill="#0a9d5b"/><path d="M1401 418h9v9h-9z" fill="#159b59"/><path d="M1409 418h9v9h-9z" fill="#209a57"/><path d="M1417 418h9v9h-9z" fill="#2b9955"/><path d="M1425 418h9v9h-9z" fill="#369753"/><path d="M1433 418h9v9h-9z" fill="#419651"/><path d="M1441 418h9v9h-9z" fill="#4d944f"/><path d="M1449 418h9v9h-9z" fill="#59934c"/><path d="M1457 418h9v9h-9z" fill="#65924a"/><path d="M1465 418h9v9h-9z" fill="#729048"/><path d="M1473 418h9v9h-9z" fill="#7f8f46"/><path d="M1481 418h9v9h-9z" fill="#8c8d44"/><path d="M1489 418h9v9h-9z" fill="#887c3a"/><path d="M1497 418h9v9h-9z" fill="#856e32"/><path d="M1505 418h9v9h-9z" fill="#83622b"/><path d="M1513 418h9v9h-9z" fill="#815926"/><path d="M1521 418h9v9h-9z" fill="#7f5021"/><path d="M1529 418h9v9h-9z" fill="#7e491d"/><path d="M1537 418h9v9h-9z" fill="#7d431a"/><path d="M1545 418h9v9h-9z" fill="#7c3d16"/><path d="M1553 418h9v9h-9z" fill="#7b3814"/><path d="M1561 418h9v9h-9z" fill="#7a3411"/><path d="M1569 418h9v9h-9z" fill="#7a300f"/><path d="M1577 418h9v9h-9z" fill="#792c0d"/><path d="M1585 418h9v9h-9z" fill="#79290b"/><path d="M1593 418h9v9h-9z" fill="#782609"/><path d="M1601 418h9v9h-9z" fill="#782408"/><path d="M1609 418h9v9h-9z" fill="#782106"/><path d="M1617 418h9v9h-9z" fill="#781f05"/><path d="M1625 418h9v9h-9z" fill="#781d04"/><path d="M1633 418h9v9h-9z" fill="#781b03"/><path d="M1641 418h9v9h-9z" fill="#771901"/><path d="M1649 418h9v9h-9z" fill="#771700"/><path d="M1657 418h9v9h-9z" fill="#771500"/><path d="M1665 418h9v9h-9z" fill="#761400"/><path d="M1673 418h9v9h-9z" fill="#741200"/><path d="M1681 418h9v9h-9z" fill="#731000"/><path d="M1689 418h9v9h-9z" fill="#720f00"/><path d="M1697 418h9v9h-9z" fill="#710e00"/><path d="M1705 418h9v9h-9z" fill="#700d00"/><path d="M1713 418h9v9h-9z" fill="#6f0b00"/><path d="M1721 418h9v9h-9z" fill="#6d0a00"/><path d="M1185 426h9v9h-9z" fill="#007b5d"/><path d="M1193 426h9v9h-9z" fill="#007d5e"/><path d="M1201 426h9v9h-9z" fill="#007e5f"/><path d="M1209 426h9v9h-9z" fill="#00805f"/><path d="M1217 426h9v9h-9z" fill="#008160"/><path d="M1225 426h9v9h-9z" fill="#008260"/><path d="M1233 426h9v9h-9z" fill="#008461"/><path d="M1241 426h9v9h-9z" fill="#008562"/><path d="M1249 426h9v9h-9z" fill="#008762"/><path d="M1257 426h9v9h-9z" fill="#008863"/><path d="M1265 426h9v9h-9z" fill="#008a63"/><path d="M1273 426h9v9h-9z" fill="#008b64"/><path d="M1281 426h9v9h-9z" fill="#008c64"/><path d="M1289 426h9v9h-9z" fill="#008e64"/><path d="M1297 426h9v9h-9z" fill="#008f65"/><path d="M1305 426h9v9h-9z" fill="#009165"/><path d="M1313 426h9v9h-9z" fill="#009265"/><path d="M1321 426h9v9h-9z" fill="#009366"/><path d="M1329 426h9v9h-9z" fill="#009566"/><path d="M1337 426h9v9h-9z" fill="#009666"/><path d="M1345 426h9v9h-9z" fill="#009866"/><path d="M1353 426h9v9h-9z" fill="#096"/><path d="M1361 426h9v9h-9z" fill="#009a67"/><path d="M1369 426h9v9h-9z" fill="#009c67"/><path d="M1377 426h9v9h-9z" fill="#009d67"/><path d="M1385 426h9v9h-9z" fill="#049e66"/><path d="M1393 426h9v9h-9z" fill="#0f9c64"/><path d="M1401 426h9v9h-9z" fill="#1a9b62"/><path d="M1409 426h9v9h-9z" fill="#259960"/><path d="M1417 426h9v9h-9z" fill="#31985e"/><path d="M1425 426h9v9h-9z" fill="#3d975c"/><path d="M1433 426h9v9h-9z" fill="#49955a"/><path d="M1441 426h9v9h-9z" fill="#559458"/><path d="M1449 426h9v9h-9z" fill="#629256"/><path d="M1457 426h9v9h-9z" fill="#6f9154"/><path d="M1465 426h9v9h-9z" fill="#7d9052"/><path d="M1473 426h9v9h-9z" fill="#8b8e4f"/><path d="M1481 426h9v9h-9z" fill="#897e45"/><path d="M1489 426h9v9h-9z" fill="#846e3b"/><path d="M1497 426h9v9h-9z" fill="#816133"/><path d="M1505 426h9v9h-9z" fill="#7f572d"/><path d="M1513 426h9v9h-9z" fill="#7d4f27"/><path d="M1521 426h9v9h-9z" fill="#7c4723"/><path d="M1529 426h9v9h-9z" fill="#7a411f"/><path d="M1537 426h9v9h-9z" fill="#793b1b"/><path d="M1545 426h9v9h-9z" fill="#793718"/><path d="M1553 426h9v9h-9z" fill="#783215"/><path d="M1561 426h9v9h-9z" fill="#772e13"/><path d="M1569 426h9v9h-9z" fill="#772b11"/><path d="M1577 426h9v9h-9z" fill="#76270f"/><path d="M1585 426h9v9h-9z" fill="#76250d"/><path d="M1593 426h9v9h-9z" fill="#76220b"/><path d="M1601 426h9v9h-9z" fill="#761f09"/><path d="M1609 426h9v9h-9z" fill="#751d08"/><path d="M1617 426h9v9h-9z" fill="#751b07"/><path d="M1625 426h9v9h-9z" fill="#751905"/><path d="M1633 426h9v9h-9z" fill="#751704"/><path d="M1641 426h9v9h-9z" fill="#751603"/><path d="M1649 426h9v9h-9z" fill="#751402"/><path d="M1657 426h9v9h-9z" fill="#751301"/><path d="M1665 426h9v9h-9z" fill="#751100"/><path d="M1673 426h9v9h-9z" fill="#751000"/><path d="M1681 426h9v9h-9z" fill="#730e00"/><path d="M1689 426h9v9h-9z" fill="#720d00"/><path d="M1697 426h9v9h-9z" fill="#710c00"/><path d="M1705 426h9v9h-9z" fill="#700b00"/><path d="M1713 426h9v9h-9z" fill="#6f0900"/><path d="M1721 426h9v9h-9z" fill="#6e0800"/><path d="M1729 426h9v9h-9z" fill="#6d0700"/><path d="M1737 426h9v9h-9z" fill="#6c0700"/><path d="M1185 434h9v9h-9z" fill="#007c63"/><path d="M1193 434h9v9h-9z" fill="#007d64"/><path d="M1201 434h9v9h-9z" fill="#007f65"/><path d="M1209 434h9v9h-9z" fill="#008066"/><path d="M1217 434h9v9h-9z" fill="#008267"/><path d="M1225 434h9v9h-9z" fill="#008367"/><path d="M1233 434h9v9h-9z" fill="#008468"/><path d="M1241 434h9v9h-9z" fill="#008669"/><path d="M1249 434h9v9h-9z" fill="#00876a"/><path d="M1257 434h9v9h-9z" fill="#00896a"/><path d="M1265 434h9v9h-9z" fill="#008a6b"/><path d="M1273 434h9v9h-9z" fill="#008b6b"/><path d="M1281 434h9v9h-9z" fill="#008d6c"/><path d="M1289 434h9v9h-9z" fill="#008e6d"/><path d="M1297 434h9v9h-9z" fill="#00906d"/><path d="M1305 434h9v9h-9z" fill="#00916e"/><path d="M1313 434h9v9h-9z" fill="#00926e"/><path d="M1321 434h9v9h-9z" fill="#00946f"/><path d="M1329 434h9v9h-9z" fill="#00956f"/><path d="M1337 434h9v9h-9z" fill="#009770"/><path d="M1345 434h9v9h-9z" fill="#009870"/><path d="M1353 434h9v9h-9z" fill="#009a70"/><path d="M1361 434h9v9h-9z" fill="#009b71"/><path d="M1369 434h9v9h-9z" fill="#009c71"/><path d="M1377 434h9v9h-9z" fill="#009e71"/><path d="M1385 434h9v9h-9z" fill="#089d70"/><path d="M1393 434h9v9h-9z" fill="#149c6e"/><path d="M1401 434h9v9h-9z" fill="#1f9a6c"/><path d="M1409 434h9v9h-9z" fill="#2b996a"/><path d="M1417 434h9v9h-9z" fill="#389768"/><path d="M1425 434h9v9h-9z" fill="#449666"/><path d="M1433 434h9v9h-9z" fill="#519564"/><path d="M1441 434h9v9h-9z" fill="#5f9362"/><path d="M1449 434h9v9h-9z" fill="#6c9260"/><path d="M1457 434h9v9h-9z" fill="#7a905e"/><path d="M1465 434h9v9h-9z" fill="#898f5c"/><path d="M1473 434h9v9h-9z" fill="#8b8252"/><path d="M1481 434h9v9h-9z" fill="#857046"/><path d="M1489 434h9v9h-9z" fill="#81623c"/><path d="M1497 434h9v9h-9z" fill="#7d5634"/><path d="M1505 434h9v9h-9z" fill="#7b4d2e"/><path d="M1513 434h9v9h-9z" fill="#794629"/><path d="M1521 434h9v9h-9z" fill="#783f24"/><path d="M1529 434h9v9h-9z" fill="#773a20"/><path d="M1537 434h9v9h-9z" fill="#76351d"/><path d="M1545 434h9v9h-9z" fill="#75301a"/><path d="M1553 434h9v9h-9z" fill="#752c17"/><path d="M1561 434h9v9h-9z" fill="#742915"/><path d="M1569 434h9v9h-9z" fill="#742612"/><path d="M1577 434h9v9h-9z" fill="#742310"/><path d="M1585 434h9v9h-9z" fill="#73200e"/><path d="M1593 434h9v9h-9z" fill="#731e0d"/><path d="M1601 434h9v9h-9z" fill="#731c0b"/><path d="M1609 434h9v9h-9z" fill="#73190a"/><path d="M1617 434h9v9h-9z" fill="#731808"/><path d="M1625 434h9v9h-9z" fill="#731607"/><path d="M1633 434h9v9h-9z" fill="#731406"/><path d="M1641 434h9v9h-9z" fill="#731305"/><path d="M1649 434h9v9h-9z" fill="#731104"/><path d="M1657 434h9v9h-9z" fill="#731003"/><path d="M1665 434h9v9h-9z" fill="#730e02"/><path d="M1673 434h9v9h-9z" fill="#730d01"/><path d="M1681 434h9v9h-9z" fill="#740c00"/><path d="M1689 434h9v9h-9z" fill="#720b00"/><path d="M1697 434h9v9h-9z" fill="#710a00"/><path d="M1705 434h9v9h-9z" fill="#700900"/><path d="M1713 434h9v9h-9z" fill="#6f0800"/><path d="M1721 434h9v9h-9z" fill="#6e0700"/><path d="M1729 434h9v9h-9z" fill="#6d0600"/><path d="M1737 434h9v9h-9z" fill="#6c0500"/><path d="M1745 434h9v9h-9z" fill="#6b0400"/><path d="M1193 442h9v9h-9z" fill="#007e6b"/><path d="M1201 442h9v9h-9z" fill="#007f6c"/><path d="M1209 442h9v9h-9z" fill="#00816d"/><path d="M1217 442h9v9h-9z" fill="#00826e"/><path d="M1225 442h9v9h-9z" fill="#00846f"/><path d="M1233 442h9v9h-9z" fill="#008570"/><path d="M1241 442h9v9h-9z" fill="#008671"/><path d="M1249 442h9v9h-9z" fill="#008872"/><path d="M1257 442h9v9h-9z" fill="#008972"/><path d="M1265 442h9v9h-9z" fill="#008b73"/><path d="M1273 442h9v9h-9z" fill="#008c74"/><path d="M1281 442h9v9h-9z" fill="#008d75"/><path d="M1289 442h9v9h-9z" fill="#008f76"/><path d="M1297 442h9v9h-9z" fill="#009076"/><path d="M1305 442h9v9h-9z" fill="#009277"/><path d="M1313 442h9v9h-9z" fill="#009378"/><path d="M1321 442h9v9h-9z" fill="#009479"/><path d="M1329 442h9v9h-9z" fill="#009679"/><path d="M1337 442h9v9h-9z" fill="#00977a"/><path d="M1345 442h9v9h-9z" fill="#00997a"/><path d="M1353 442h9v9h-9z" fill="#009a7b"/><path d="M1361 442h9v9h-9z" fill="#009b7c"/><path d="M1369 442h9v9h-9z" fill="#009d7c"/><path d="M1377 442h9v9h-9z" fill="#019e7c"/><path d="M1385 442h9v9h-9z" fill="#0d9d7b"/><path d="M1393 442h9v9h-9z" fill="#199b79"/><path d="M1401 442h9v9h-9z" fill="#269a77"/><path d="M1409 442h9v9h-9z" fill="#329875"/><path d="M1417 442h9v9h-9z" fill="#3f9773"/><path d="M1425 442h9v9h-9z" fill="#4d9671"/><path d="M1433 442h9v9h-9z" fill="#5b9470"/><path d="M1441 442h9v9h-9z" fill="#69936e"/><path d="M1449 442h9v9h-9z" fill="#77916c"/><path d="M1457 442h9v9h-9z" fill="#87906a"/><path d="M1465 442h9v9h-9z" fill="#8c8561"/><path d="M1473 442h9v9h-9z" fill="#877253"/><path d="M1481 442h9v9h-9z" fill="#826347"/><path d="M1489 442h9v9h-9z" fill="#7d563d"/><path d="M1497 442h9v9h-9z" fill="#7a4c35"/><path d="M1505 442h9v9h-9z" fill="#77442f"/><path d="M1513 442h9v9h-9z" fill="#763d2a"/><path d="M1521 442h9v9h-9z" fill="#753825"/><path d="M1529 442h9v9h-9z" fill="#743322"/><path d="M1537 442h9v9h-9z" fill="#732e1e"/><path d="M1545 442h9v9h-9z" fill="#732b1b"/><path d="M1553 442h9v9h-9z" fill="#722718"/><path d="M1561 442h9v9h-9z" fill="#722416"/><path d="M1569 442h9v9h-9z" fill="#712114"/><path d="M1577 442h9v9h-9z" fill="#711e12"/><path d="M1585 442h9v9h-9z" fill="#711c10"/><path d="M1593 442h9v9h-9z" fill="#711a0e"/><path d="M1601 442h9v9h-9z" fill="#71180d"/><path d="M1609 442h9v9h-9z" fill="#71160b"/><path d="M1617 442h9v9h-9z" fill="#71140a"/><path d="M1625 442h9v9h-9z" fill="#711308"/><path d="M1633 442h9v9h-9z" fill="#711107"/><path d="M1641 442h9v9h-9z" fill="#711006"/><path d="M1649 442h9v9h-9z" fill="#710e05"/><path d="M1657 442h9v9h-9z" fill="#710d04"/><path d="M1665 442h9v9h-9z" fill="#710c03"/><path d="M1673 442h9v9h-9z" fill="#710b02"/><path d="M1681 442h9v9h-9z" fill="#720a01"/><path d="M1689 442h9v9h-9z" fill="#720901"/><path d="M1697 442h9v9h-9z" fill="#720800"/><path d="M1705 442h9v9h-9z" fill="#710700"/><path d="M1713 442h9v9h-9z" fill="#700600"/><path d="M1721 442h9v9h-9z" fill="#6f0500"/><path d="M1729 442h9v9h-9z" fill="#6e0400"/><path d="M1737 442h9v9h-9z" fill="#6d0300"/><path d="M1745 442h9v9h-9z" fill="#6c0300"/><path d="M1753 442h9v9h-9z" fill="#6b0200"/><path d="M1761 442h9v9h-9z" fill="#6a0100"/><path d="M1193 450h9v9h-9z" fill="#007e73"/><path d="M1201 450h9v9h-9z" fill="#008074"/><path d="M1209 450h9v9h-9z" fill="#008175"/><path d="M1217 450h9v9h-9z" fill="#008376"/><path d="M1225 450h9v9h-9z" fill="#008477"/><path d="M1233 450h9v9h-9z" fill="#008678"/><path d="M1241 450h9v9h-9z" fill="#008779"/><path d="M1249 450h9v9h-9z" fill="#00887a"/><path d="M1257 450h9v9h-9z" fill="#008a7b"/><path d="M1265 450h9v9h-9z" fill="#008b7c"/><path d="M1273 450h9v9h-9z" fill="#008d7d"/><path d="M1281 450h9v9h-9z" fill="#008e7e"/><path d="M1289 450h9v9h-9z" fill="#008f7f"/><path d="M1297 450h9v9h-9z" fill="#009180"/><path d="M1305 450h9v9h-9z" fill="#009281"/><path d="M1313 450h9v9h-9z" fill="#009482"/><path d="M1321 450h9v9h-9z" fill="#009583"/><path d="M1329 450h9v9h-9z" fill="#009684"/><path d="M1337 450h9v9h-9z" fill="#009885"/><path d="M1345 450h9v9h-9z" fill="#009986"/><path d="M1353 450h9v9h-9z" fill="#009b87"/><path d="M1361 450h9v9h-9z" fill="#009c88"/><path d="M1369 450h9v9h-9z" fill="#009d89"/><path d="M1377 450h9v9h-9z" fill="#069d88"/><path d="M1385 450h9v9h-9z" fill="#139c86"/><path d="M1393 450h9v9h-9z" fill="#1f9b85"/><path d="M1401 450h9v9h-9z" fill="#2d9983"/><path d="M1409 450h9v9h-9z" fill="#3a9881"/><path d="M1417 450h9v9h-9z" fill="#489680"/><path d="M1425 450h9v9h-9z" fill="#56957e"/><path d="M1433 450h9v9h-9z" fill="#65947c"/><path d="M1441 450h9v9h-9z" fill="#74927b"/><path d="M1449 450h9v9h-9z" fill="#849179"/><path d="M1457 450h9v9h-9z" fill="#8e8972"/><path d="M1465 450h9v9h-9z" fill="#887560"/><path d="M1473 450h9v9h-9z" fill="#836453"/><path d="M1481 450h9v9h-9z" fill="#7e5747"/><path d="M1489 450h9v9h-9z" fill="#7a4c3e"/><path d="M1497 450h9v9h-9z" fill="#774336"/><path d="M1505 450h9v9h-9z" fill="#743c30"/><path d="M1513 450h9v9h-9z" fill="#73362b"/><path d="M1521 450h9v9h-9z" fill="#723127"/><path d="M1529 450h9v9h-9z" fill="#712d23"/><path d="M1537 450h9v9h-9z" fill="#70291f"/><path d="M1545 450h9v9h-9z" fill="#70251c"/><path d="M1553 450h9v9h-9z" fill="#6f221a"/><path d="M1561 450h9v9h-9z" fill="#6f1f17"/><path d="M1569 450h9v9h-9z" fill="#6f1d15"/><path d="M1577 450h9v9h-9z" fill="#6e1a13"/><path d="M1585 450h9v9h-9z" fill="#6e1811"/><path d="M1593 450h9v9h-9z" fill="#6e1610"/><path d="M1601 450h9v9h-9z" fill="#6e140e"/><path d="M1609 450h9v9h-9z" fill="#6e130c"/><path d="M1617 450h9v9h-9z" fill="#6e110b"/><path d="M1625 450h9v9h-9z" fill="#6e100a"/><path d="M1633 450h9v9h-9z" fill="#6e0e09"/><path d="M1641 450h9v9h-9z" fill="#6f0d07"/><path d="M1649 450h9v9h-9z" fill="#6f0c06"/><path d="M1657 450h9v9h-9z" fill="#6f0b05"/><path d="M1665 450h9v9h-9z" fill="#6f0904"/><path d="M1673 450h9v9h-9z" fill="#6f0804"/><path d="M1681 450h9v9h-9z" fill="#700703"/><path d="M1689 450h9v9h-9z" fill="#700702"/><path d="M1697 450h9v9h-9z" fill="#700601"/><path d="M1705 450h9v9h-9z" fill="#700500"/><path d="M1713 450h9v9h-9z" fill="#700400"/><path d="M1721 450h9v9h-9z" fill="#6f0300"/><path d="M1729 450h9v9h-9z" fill="#6e0200"/><path d="M1737 450h9v9h-9z" fill="#6d0200"/><path d="M1745 450h9v9h-9z" fill="#6c0100"/><path d="M1753 450h9v9h-9z" fill="#6b0000"/><path d="M1761 450h9v9h-9z" fill="#6a0000"/><path d="M1769 450h9v9h-9z" fill="#690000"/><path d="M1193 458h9v9h-9z" fill="#007f7b"/><path d="M1201 458h9v9h-9z" fill="#00807c"/><path d="M1209 458h9v9h-9z" fill="#00827d"/><path d="M1217 458h9v9h-9z" fill="#00837e"/><path d="M1225 458h9v9h-9z" fill="#008580"/><path d="M1233 458h9v9h-9z" fill="#008681"/><path d="M1241 458h9v9h-9z" fill="#008782"/><path d="M1249 458h9v9h-9z" fill="#008984"/><path d="M1257 458h9v9h-9z" fill="#008a85"/><path d="M1265 458h9v9h-9z" fill="#008c86"/><path d="M1273 458h9v9h-9z" fill="#008d87"/><path d="M1281 458h9v9h-9z" fill="#008e89"/><path d="M1289 458h9v9h-9z" fill="#00908a"/><path d="M1297 458h9v9h-9z" fill="#00918b"/><path d="M1305 458h9v9h-9z" fill="#00938d"/><path d="M1313 458h9v9h-9z" fill="#00948e"/><path d="M1321 458h9v9h-9z" fill="#00968f"/><path d="M1329 458h9v9h-9z" fill="#009790"/><path d="M1337 458h9v9h-9z" fill="#009892"/><path d="M1345 458h9v9h-9z" fill="#009a93"/><path d="M1353 458h9v9h-9z" fill="#009b94"/><path d="M1361 458h9v9h-9z" fill="#009d95"/><path d="M1369 458h9v9h-9z" fill="#009e96"/><path d="M1377 458h9v9h-9z" fill="#0b9d95"/><path d="M1385 458h9v9h-9z" fill="#199b94"/><path d="M1393 458h9v9h-9z" fill="#269a92"/><path d="M1401 458h9v9h-9z" fill="#349991"/><path d="M1409 458h9v9h-9z" fill="#43978f"/><path d="M1417 458h9v9h-9z" fill="#52968e"/><path d="M1425 458h9v9h-9z" fill="#61948c"/><path d="M1433 458h9v9h-9z" fill="#71938b"/><path d="M1441 458h9v9h-9z" fill="#819289"/><path d="M1449 458h9v9h-9z" fill="#908d85"/><path d="M1457 458h9v9h-9z" fill="#897770"/><path d="M1465 458h9v9h-9z" fill="#846660"/><path d="M1473 458h9v9h-9z" fill="#7f5852"/><path d="M1481 458h9v9h-9z" fill="#7b4d48"/><path d="M1489 458h9v9h-9z" fill="#77433f"/><path d="M1497 458h9v9h-9z" fill="#753c38"/><path d="M1505 458h9v9h-9z" fill="#743632"/><path d="M1513 458h9v9h-9z" fill="#72302d"/><path d="M1521 458h9v9h-9z" fill="#712c29"/><path d="M1529 458h9v9h-9z" fill="#712825"/><path d="M1537 458h9v9h-9z" fill="#702421"/><path d="M1545 458h9v9h-9z" fill="#6f211e"/><path d="M1553 458h9v9h-9z" fill="#6f1e1c"/><path d="M1561 458h9v9h-9z" fill="#6e1c19"/><path d="M1569 458h9v9h-9z" fill="#6e1917"/><path d="M1577 458h9v9h-9z" fill="#6e1715"/><path d="M1585 458h9v9h-9z" fill="#6e1513"/><path d="M1593 458h9v9h-9z" fill="#6d1311"/><path d="M1601 458h9v9h-9z" fill="#6d110f"/><path d="M1609 458h9v9h-9z" fill="#6d100e"/><path d="M1617 458h9v9h-9z" fill="#6d0e0c"/><path d="M1625 458h9v9h-9z" fill="#6d0d0b"/><path d="M1633 458h9v9h-9z" fill="#6d0c0a"/><path d="M1641 458h9v9h-9z" fill="#6d0a09"/><path d="M1649 458h9v9h-9z" fill="#6d0908"/><path d="M1657 458h9v9h-9z" fill="#6d0807"/><path d="M1665 458h9v9h-9z" fill="#6d0706"/><path d="M1673 458h9v9h-9z" fill="#6d0605"/><path d="M1681 458h9v9h-9z" fill="#6e0504"/><path d="M1689 458h9v9h-9z" fill="#6e0403"/><path d="M1697 458h9v9h-9z" fill="#6e0402"/><path d="M1705 458h9v9h-9z" fill="#6e0302"/><path d="M1713 458h9v9h-9z" fill="#6f0201"/><path d="M1721 458h9v9h-9z" fill="#6f0100"/><path d="M1729 458h9v9h-9z" fill="#6e0100"/><path d="M1737 458h9v9h-9z" fill="#6d0000"/><path d="M1745 458h9v9h-9z" fill="#6c0000"/><path d="M1753 458h9v9h-9z" fill="#6b0000"/><path d="M1761 458h9v9h-9z" fill="#6a0000"/><path d="M1769 458h9v9h-9z" fill="#690000"/><path d="M1777 458h9v9h-9z" fill="#680000"/><path d="M1201 466h9v9h-9z" fill="#007d81"/><path d="M1209 466h9v9h-9z" fill="#007f82"/><path d="M1217 466h9v9h-9z" fill="#008084"/><path d="M1225 466h9v9h-9z" fill="#008185"/><path d="M1233 466h9v9h-9z" fill="#008387"/><path d="M1241 466h9v9h-9z" fill="#008488"/><path d="M1249 466h9v9h-9z" fill="#008589"/><path d="M1257 466h9v9h-9z" fill="#00868b"/><path d="M1265 466h9v9h-9z" fill="#00888c"/><path d="M1273 466h9v9h-9z" fill="#00898e"/><path d="M1281 466h9v9h-9z" fill="#008a8f"/><path d="M1289 466h9v9h-9z" fill="#008b90"/><path d="M1297 466h9v9h-9z" fill="#008d92"/><path d="M1305 466h9v9h-9z" fill="#008e93"/><path d="M1313 466h9v9h-9z" fill="#008f95"/><path d="M1321 466h9v9h-9z" fill="#009096"/><path d="M1329 466h9v9h-9z" fill="#009197"/><path d="M1337 466h9v9h-9z" fill="#009399"/><path d="M1345 466h9v9h-9z" fill="#00949a"/><path d="M1353 466h9v9h-9z" fill="#00959c"/><path d="M1361 466h9v9h-9z" fill="#00969d"/><path d="M1369 466h9v9h-9z" fill="#03979e"/><path d="M1377 466h9v9h-9z" fill="#10959c"/><path d="M1385 466h9v9h-9z" fill="#1e949b"/><path d="M1393 466h9v9h-9z" fill="#2c929a"/><path d="M1401 466h9v9h-9z" fill="#3a9098"/><path d="M1409 466h9v9h-9z" fill="#488f97"/><path d="M1417 466h9v9h-9z" fill="#578d95"/><path d="M1425 466h9v9h-9z" fill="#678c94"/><path d="M1433 466h9v9h-9z" fill="#778a92"/><path d="M1441 466h9v9h-9z" fill="#888991"/><path d="M1449 466h9v9h-9z" fill="#8d7c84"/><path d="M1457 466h9v9h-9z" fill="#876970"/><path d="M1465 466h9v9h-9z" fill="#825a60"/><path d="M1473 466h9v9h-9z" fill="#7d4e53"/><path d="M1481 466h9v9h-9z" fill="#794449"/><path d="M1489 466h9v9h-9z" fill="#773c41"/><path d="M1497 466h9v9h-9z" fill="#76363a"/><path d="M1505 466h9v9h-9z" fill="#743034"/><path d="M1513 466h9v9h-9z" fill="#732b2f"/><path d="M1521 466h9v9h-9z" fill="#72272b"/><path d="M1529 466h9v9h-9z" fill="#722427"/><path d="M1537 466h9v9h-9z" fill="#712024"/><path d="M1545 466h9v9h-9z" fill="#701d20"/><path d="M1553 466h9v9h-9z" fill="#701b1e"/><path d="M1561 466h9v9h-9z" fill="#70181b"/><path d="M1569 466h9v9h-9z" fill="#6f1619"/><path d="M1577 466h9v9h-9z" fill="#6f1417"/><path d="M1585 466h9v9h-9z" fill="#6f1215"/><path d="M1593 466h9v9h-9z" fill="#6f1013"/><path d="M1601 466h9v9h-9z" fill="#6e0f11"/><path d="M1609 466h9v9h-9z" fill="#6e0d10"/><path d="M1617 466h9v9h-9z" fill="#6e0c0e"/><path d="M1625 466h9v9h-9z" fill="#6e0b0d"/><path d="M1633 466h9v9h-9z" fill="#6e090b"/><path d="M1641 466h9v9h-9z" fill="#6e080a"/><path d="M1649 466h9v9h-9z" fill="#6e0709"/><path d="M1657 466h9v9h-9z" fill="#6e0608"/><path d="M1665 466h9v9h-9z" fill="#6e0507"/><path d="M1673 466h9v9h-9z" fill="#6f0406"/><path d="M1681 466h9v9h-9z" fill="#6f0305"/><path d="M1689 466h9v9h-9z" fill="#6f0304"/><path d="M1697 466h9v9h-9z" fill="#6f0204"/><path d="M1705 466h9v9h-9z" fill="#6f0103"/><path d="M1713 466h9v9h-9z" fill="#6f0002"/><path d="M1721 466h9v9h-9z" fill="#6f0001"/><path d="M1729 466h9v9h-9z" fill="#6e0001"/><path d="M1737 466h9v9h-9z" fill="#6d0000"/><path d="M1745 466h9v9h-9z" fill="#6c0000"/><path d="M1753 466h9v9h-9z" fill="#6b0000"/><path d="M1761 466h9v9h-9z" fill="#6a0000"/><path d="M1769 466h9v9h-9z" fill="#690000"/><path d="M1777 466h9v9h-9z" fill="#680000"/><path d="M1785 466h9v9h-9z" fill="#670000"/><path d="M1793 466h9v9h-9z" fill="#600"/><path d="M1201 474h9v9h-9z" fill="#007682"/><path d="M1209 474h9v9h-9z" fill="#007783"/><path d="M1217 474h9v9h-9z" fill="#007884"/><path d="M1225 474h9v9h-9z" fill="#007986"/><path d="M1233 474h9v9h-9z" fill="#007a87"/><path d="M1241 474h9v9h-9z" fill="#007b89"/><path d="M1249 474h9v9h-9z" fill="#007c8a"/><path d="M1257 474h9v9h-9z" fill="#007d8b"/><path d="M1265 474h9v9h-9z" fill="#007e8d"/><path d="M1273 474h9v9h-9z" fill="#007f8e"/><path d="M1281 474h9v9h-9z" fill="#008090"/><path d="M1289 474h9v9h-9z" fill="#008191"/><path d="M1297 474h9v9h-9z" fill="#008292"/><path d="M1305 474h9v9h-9z" fill="#008394"/><path d="M1313 474h9v9h-9z" fill="#008495"/><path d="M1321 474h9v9h-9z" fill="#008597"/><path d="M1329 474h9v9h-9z" fill="#008698"/><path d="M1337 474h9v9h-9z" fill="#008799"/><path d="M1345 474h9v9h-9z" fill="#00889b"/><path d="M1353 474h9v9h-9z" fill="#00889c"/><path d="M1361 474h9v9h-9z" fill="#00899e"/><path d="M1369 474h9v9h-9z" fill="#08889d"/><path d="M1377 474h9v9h-9z" fill="#15879c"/><path d="M1385 474h9v9h-9z" fill="#21859a"/><path d="M1393 474h9v9h-9z" fill="#2f8399"/><path d="M1401 474h9v9h-9z" fill="#3c8198"/><path d="M1409 474h9v9h-9z" fill="#4a8096"/><path d="M1417 474h9v9h-9z" fill="#597e95"/><path d="M1425 474h9v9h-9z" fill="#677c93"/><path d="M1433 474h9v9h-9z" fill="#777a92"/><path d="M1441 474h9v9h-9z" fill="#877991"/><path d="M1449 474h9v9h-9z" fill="#8d6f85"/><path d="M1457 474h9v9h-9z" fill="#875e72"/><path d="M1465 474h9v9h-9z" fill="#825062"/><path d="M1473 474h9v9h-9z" fill="#7e4655"/><path d="M1481 474h9v9h-9z" fill="#7b3d4c"/><path d="M1489 474h9v9h-9z" fill="#793644"/><path d="M1497 474h9v9h-9z" fill="#78313d"/><path d="M1505 474h9v9h-9z" fill="#772c37"/><path d="M1513 474h9v9h-9z" fill="#762732"/><path d="M1521 474h9v9h-9z" fill="#75232e"/><path d="M1529 474h9v9h-9z" fill="#74202a"/><path d="M1537 474h9v9h-9z" fill="#731d26"/><path d="M1545 474h9v9h-9z" fill="#731a23"/><path d="M1553 474h9v9h-9z" fill="#721720"/><path d="M1561 474h9v9h-9z" fill="#72151d"/><path d="M1569 474h9v9h-9z" fill="#71131b"/><path d="M1577 474h9v9h-9z" fill="#711119"/><path d="M1585 474h9v9h-9z" fill="#710f17"/><path d="M1593 474h9v9h-9z" fill="#710e15"/><path d="M1601 474h9v9h-9z" fill="#700c13"/><path d="M1609 474h9v9h-9z" fill="#700b11"/><path d="M1617 474h9v9h-9z" fill="#700a10"/><path d="M1625 474h9v9h-9z" fill="#70080e"/><path d="M1633 474h9v9h-9z" fill="#70070d"/><path d="M1641 474h9v9h-9z" fill="#70060c"/><path d="M1649 474h9v9h-9z" fill="#70050b"/><path d="M1657 474h9v9h-9z" fill="#70040a"/><path d="M1665 474h9v9h-9z" fill="#700309"/><path d="M1673 474h9v9h-9z" fill="#700208"/><path d="M1681 474h9v9h-9z" fill="#700207"/><path d="M1689 474h9v9h-9z" fill="#710106"/><path d="M1697 474h9v9h-9z" fill="#710005"/><path d="M1705 474h9v9h-9z" fill="#700004"/><path d="M1713 474h9v9h-9z" fill="#6f0003"/><path d="M1721 474h9v9h-9z" fill="#6e0002"/><path d="M1729 474h9v9h-9z" fill="#6d0002"/><path d="M1737 474h9v9h-9z" fill="#6d0001"/><path d="M1745 474h9v9h-9z" fill="#6c0000"/><path d="M1753 474h9v9h-9z" fill="#6b0000"/><path d="M1761 474h9v9h-9z" fill="#6a0000"/><path d="M1769 474h9v9h-9z" fill="#690000"/><path d="M1777 474h9v9h-9z" fill="#680000"/><path d="M1785 474h9v9h-9z" fill="#670000"/><path d="M1793 474h9v9h-9z" fill="#600"/><path d="M1801 474h9v9h-9z" fill="#650000"/><path d="M1201 482h9v9h-9z" fill="#006f82"/><path d="M1209 482h9v9h-9z" fill="#007083"/><path d="M1217 482h9v9h-9z" fill="#007185"/><path d="M1225 482h9v9h-9z" fill="#007186"/><path d="M1233 482h9v9h-9z" fill="#007288"/><path d="M1241 482h9v9h-9z" fill="#007389"/><path d="M1249 482h9v9h-9z" fill="#00748a"/><path d="M1257 482h9v9h-9z" fill="#00758c"/><path d="M1265 482h9v9h-9z" fill="#00768d"/><path d="M1273 482h9v9h-9z" fill="#00768f"/><path d="M1281 482h9v9h-9z" fill="#007790"/><path d="M1289 482h9v9h-9z" fill="#007892"/><path d="M1297 482h9v9h-9z" fill="#007893"/><path d="M1305 482h9v9h-9z" fill="#007994"/><path d="M1313 482h9v9h-9z" fill="#007a96"/><path d="M1321 482h9v9h-9z" fill="#007a97"/><path d="M1329 482h9v9h-9z" fill="#007b99"/><path d="M1337 482h9v9h-9z" fill="#007b9a"/><path d="M1345 482h9v9h-9z" fill="#007c9b"/><path d="M1353 482h9v9h-9z" fill="#007c9d"/><path d="M1361 482h9v9h-9z" fill="#007d9e"/><path d="M1369 482h9v9h-9z" fill="#0c7b9d"/><path d="M1377 482h9v9h-9z" fill="#18799b"/><path d="M1385 482h9v9h-9z" fill="#25779a"/><path d="M1393 482h9v9h-9z" fill="#317598"/><path d="M1401 482h9v9h-9z" fill="#3f7497"/><path d="M1409 482h9v9h-9z" fill="#4c7296"/><path d="M1417 482h9v9h-9z" fill="#5a7094"/><path d="M1425 482h9v9h-9z" fill="#686e93"/><path d="M1433 482h9v9h-9z" fill="#766c91"/><path d="M1441 482h9v9h-9z" fill="#856a90"/><path d="M1449 482h9v9h-9z" fill="#8d6287"/><path d="M1457 482h9v9h-9z" fill="#875373"/><path d="M1465 482h9v9h-9z" fill="#824764"/><path d="M1473 482h9v9h-9z" fill="#7f3e59"/><path d="M1481 482h9v9h-9z" fill="#7d374f"/><path d="M1489 482h9v9h-9z" fill="#7c3147"/><path d="M1497 482h9v9h-9z" fill="#7a2b40"/><path d="M1505 482h9v9h-9z" fill="#79273a"/><path d="M1513 482h9v9h-9z" fill="#782335"/><path d="M1521 482h9v9h-9z" fill="#771f30"/><path d="M1529 482h9v9h-9z" fill="#761c2c"/><path d="M1537 482h9v9h-9z" fill="#751928"/><path d="M1545 482h9v9h-9z" fill="#751725"/><path d="M1553 482h9v9h-9z" fill="#741422"/><path d="M1561 482h9v9h-9z" fill="#74121f"/><path d="M1569 482h9v9h-9z" fill="#73101d"/><path d="M1577 482h9v9h-9z" fill="#730e1b"/><path d="M1585 482h9v9h-9z" fill="#730d19"/><path d="M1593 482h9v9h-9z" fill="#720b17"/><path d="M1601 482h9v9h-9z" fill="#720a15"/><path d="M1609 482h9v9h-9z" fill="#720813"/><path d="M1617 482h9v9h-9z" fill="#720712"/><path d="M1625 482h9v9h-9z" fill="#720610"/><path d="M1633 482h9v9h-9z" fill="#72050f"/><path d="M1641 482h9v9h-9z" fill="#72040d"/><path d="M1649 482h9v9h-9z" fill="#72030c"/><path d="M1657 482h9v9h-9z" fill="#72020b"/><path d="M1665 482h9v9h-9z" fill="#72010a"/><path d="M1673 482h9v9h-9z" fill="#720009"/><path d="M1681 482h9v9h-9z" fill="#720008"/><path d="M1689 482h9v9h-9z" fill="#710007"/><path d="M1697 482h9v9h-9z" fill="#700006"/><path d="M1705 482h9v9h-9z" fill="#6f0005"/><path d="M1713 482h9v9h-9z" fill="#6e0004"/><path d="M1721 482h9v9h-9z" fill="#6d0004"/><path d="M1729 482h9v9h-9z" fill="#6d0003"/><path d="M1737 482h9v9h-9z" fill="#6c0002"/><path d="M1745 482h9v9h-9z" fill="#6b0001"/><path d="M1753 482h9v9h-9z" fill="#6a0001"/><path d="M1761 482h9v9h-9z" fill="#690000"/><path d="M1769 482h9v9h-9z" fill="#680000"/><path d="M1777 482h9v9h-9z" fill="#670000"/><path d="M1785 482h9v9h-9z" fill="#670000"/><path d="M1793 482h9v9h-9z" fill="#600"/><path d="M1801 482h9v9h-9z" fill="#650000"/><path d="M1809 482h9v9h-9z" fill="#640000"/><path d="M1209 490h9v9h-9z" fill="#006984"/><path d="M1217 490h9v9h-9z" fill="#006985"/><path d="M1225 490h9v9h-9z" fill="#006a87"/><path d="M1233 490h9v9h-9z" fill="#006b88"/><path d="M1241 490h9v9h-9z" fill="#006b8a"/><path d="M1249 490h9v9h-9z" fill="#006c8b"/><path d="M1257 490h9v9h-9z" fill="#006d8c"/><path d="M1265 490h9v9h-9z" fill="#006d8e"/><path d="M1273 490h9v9h-9z" fill="#006e8f"/><path d="M1281 490h9v9h-9z" fill="#006e91"/><path d="M1289 490h9v9h-9z" fill="#006f92"/><path d="M1297 490h9v9h-9z" fill="#006f93"/><path d="M1305 490h9v9h-9z" fill="#007095"/><path d="M1313 490h9v9h-9z" fill="#007096"/><path d="M1321 490h9v9h-9z" fill="#007098"/><path d="M1329 490h9v9h-9z" fill="#007199"/><path d="M1337 490h9v9h-9z" fill="#00719a"/><path d="M1345 490h9v9h-9z" fill="#00719c"/><path d="M1353 490h9v9h-9z" fill="#00719d"/><path d="M1361 490h9v9h-9z" fill="#05719e"/><path d="M1369 490h9v9h-9z" fill="#106f9c"/><path d="M1377 490h9v9h-9z" fill="#1c6d9b"/><path d="M1385 490h9v9h-9z" fill="#286b99"/><path d="M1393 490h9v9h-9z" fill="#346998"/><path d="M1401 490h9v9h-9z" fill="#416796"/><path d="M1409 490h9v9h-9z" fill="#4d6595"/><path d="M1417 490h9v9h-9z" fill="#5b6394"/><path d="M1425 490h9v9h-9z" fill="#686192"/><path d="M1433 490h9v9h-9z" fill="#765f91"/><path d="M1441 490h9v9h-9z" fill="#845d8f"/><path d="M1449 490h9v9h-9z" fill="#8d5688"/><path d="M1457 490h9v9h-9z" fill="#874975"/><path d="M1465 490h9v9h-9z" fill="#844067"/><path d="M1473 490h9v9h-9z" fill="#82385c"/><path d="M1481 490h9v9h-9z" fill="#7f3152"/><path d="M1489 490h9v9h-9z" fill="#7e2b4a"/><path d="M1497 490h9v9h-9z" fill="#7c2643"/><path d="M1505 490h9v9h-9z" fill="#7b223d"/><path d="M1513 490h9v9h-9z" fill="#7a1e38"/><path d="M1521 490h9v9h-9z" fill="#791b33"/><path d="M1529 490h9v9h-9z" fill="#78182f"/><path d="M1537 490h9v9h-9z" fill="#77162b"/><path d="M1545 490h9v9h-9z" fill="#771328"/><path d="M1553 490h9v9h-9z" fill="#761124"/><path d="M1561 490h9v9h-9z" fill="#760f22"/><path d="M1569 490h9v9h-9z" fill="#750d1f"/><path d="M1577 490h9v9h-9z" fill="#750b1d"/><path d="M1585 490h9v9h-9z" fill="#750a1b"/><path d="M1593 490h9v9h-9z" fill="#740919"/><path d="M1601 490h9v9h-9z" fill="#740717"/><path d="M1609 490h9v9h-9z" fill="#740615"/><path d="M1617 490h9v9h-9z" fill="#740513"/><path d="M1625 490h9v9h-9z" fill="#740412"/><path d="M1633 490h9v9h-9z" fill="#740310"/><path d="M1641 490h9v9h-9z" fill="#74020f"/><path d="M1649 490h9v9h-9z" fill="#74010e"/><path d="M1657 490h9v9h-9z" fill="#74000d"/><path d="M1665 490h9v9h-9z" fill="#73000b"/><path d="M1673 490h9v9h-9z" fill="#72000a"/><path d="M1681 490h9v9h-9z" fill="#710009"/><path d="M1689 490h9v9h-9z" fill="#700008"/><path d="M1697 490h9v9h-9z" fill="#6f0007"/><path d="M1705 490h9v9h-9z" fill="#6e0006"/><path d="M1713 490h9v9h-9z" fill="#6d0005"/><path d="M1721 490h9v9h-9z" fill="#6d0005"/><path d="M1729 490h9v9h-9z" fill="#6c0004"/><path d="M1737 490h9v9h-9z" fill="#6b0003"/><path d="M1745 490h9v9h-9z" fill="#6a0002"/><path d="M1753 490h9v9h-9z" fill="#690002"/><path d="M1761 490h9v9h-9z" fill="#690001"/><path d="M1769 490h9v9h-9z" fill="#680001"/><path d="M1777 490h9v9h-9z" fill="#670000"/><path d="M1785 490h9v9h-9z" fill="#600"/><path d="M1793 490h9v9h-9z" fill="#650000"/><path d="M1801 490h9v9h-9z" fill="#640000"/><path d="M1809 490h9v9h-9z" fill="#630000"/><path d="M1209 498h9v9h-9z" fill="#006285"/><path d="M1217 498h9v9h-9z" fill="#006386"/><path d="M1225 498h9v9h-9z" fill="#006387"/><path d="M1233 498h9v9h-9z" fill="#006489"/><path d="M1241 498h9v9h-9z" fill="#00648a"/><path d="M1249 498h9v9h-9z" fill="#00648c"/><path d="M1257 498h9v9h-9z" fill="#00658d"/><path d="M1265 498h9v9h-9z" fill="#00658e"/><path d="M1273 498h9v9h-9z" fill="#006690"/><path d="M1281 498h9v9h-9z" fill="#006691"/><path d="M1289 498h9v9h-9z" fill="#006693"/><path d="M1297 498h9v9h-9z" fill="#006694"/><path d="M1305 498h9v9h-9z" fill="#006795"/><path d="M1313 498h9v9h-9z" fill="#006797"/><path d="M1321 498h9v9h-9z" fill="#006798"/><path d="M1329 498h9v9h-9z" fill="#00679a"/><path d="M1337 498h9v9h-9z" fill="#00679b"/><path d="M1345 498h9v9h-9z" fill="#00679c"/><path d="M1353 498h9v9h-9z" fill="#00679e"/><path d="M1361 498h9v9h-9z" fill="#09659d"/><path d="M1369 498h9v9h-9z" fill="#14639c"/><path d="M1377 498h9v9h-9z" fill="#1f619a"/><path d="M1385 498h9v9h-9z" fill="#2b5f99"/><path d="M1393 498h9v9h-9z" fill="#365d97"/><path d="M1401 498h9v9h-9z" fill="#425b96"/><path d="M1409 498h9v9h-9z" fill="#4f5995"/><path d="M1417 498h9v9h-9z" fill="#5b5793"/><path d="M1425 498h9v9h-9z" fill="#685592"/><path d="M1433 498h9v9h-9z" fill="#765390"/><path d="M1441 498h9v9h-9z" fill="#83508f"/><path d="M1449 498h9v9h-9z" fill="#8c4b89"/><path d="M1457 498h9v9h-9z" fill="#894178"/><path d="M1465 498h9v9h-9z" fill="#86386a"/><path d="M1473 498h9v9h-9z" fill="#84315f"/><path d="M1481 498h9v9h-9z" fill="#822b56"/><path d="M1489 498h9v9h-9z" fill="#80264d"/><path d="M1497 498h9v9h-9z" fill="#7e2146"/><path d="M1505 498h9v9h-9z" fill="#7d1e40"/><path d="M1513 498h9v9h-9z" fill="#7c1a3b"/><path d="M1521 498h9v9h-9z" fill="#7b1736"/><path d="M1529 498h9v9h-9z" fill="#7a1431"/><path d="M1537 498h9v9h-9z" fill="#79122d"/><path d="M1545 498h9v9h-9z" fill="#79102a"/><path d="M1553 498h9v9h-9z" fill="#780e27"/><path d="M1561 498h9v9h-9z" fill="#780c24"/><path d="M1569 498h9v9h-9z" fill="#770a21"/><path d="M1577 498h9v9h-9z" fill="#77091f"/><path d="M1585 498h9v9h-9z" fill="#77071d"/><path d="M1593 498h9v9h-9z" fill="#76061b"/><path d="M1601 498h9v9h-9z" fill="#760519"/><path d="M1609 498h9v9h-9z" fill="#760317"/><path d="M1617 498h9v9h-9z" fill="#760215"/><path d="M1625 498h9v9h-9z" fill="#760114"/><path d="M1633 498h9v9h-9z" fill="#760012"/><path d="M1641 498h9v9h-9z" fill="#750011"/><path d="M1649 498h9v9h-9z" fill="#74000f"/><path d="M1657 498h9v9h-9z" fill="#73000e"/><path d="M1665 498h9v9h-9z" fill="#72000d"/><path d="M1673 498h9v9h-9z" fill="#71000b"/><path d="M1681 498h9v9h-9z" fill="#70000a"/><path d="M1689 498h9v9h-9z" fill="#6f0009"/><path d="M1697 498h9v9h-9z" fill="#6e0008"/><path d="M1705 498h9v9h-9z" fill="#6d0007"/><path d="M1713 498h9v9h-9z" fill="#6d0006"/><path d="M1721 498h9v9h-9z" fill="#6c0006"/><path d="M1729 498h9v9h-9z" fill="#6b0005"/><path d="M1737 498h9v9h-9z" fill="#6a0004"/><path d="M1745 498h9v9h-9z" fill="#690003"/><path d="M1753 498h9v9h-9z" fill="#690003"/><path d="M1761 498h9v9h-9z" fill="#680002"/><path d="M1769 498h9v9h-9z" fill="#670002"/><path d="M1777 498h9v9h-9z" fill="#660001"/><path d="M1785 498h9v9h-9z" fill="#650000"/><path d="M1793 498h9v9h-9z" fill="#640000"/><path d="M1801 498h9v9h-9z" fill="#630000"/><path d="M1809 498h9v9h-9z" fill="#630000"/><path d="M1209 506h9v9h-9z" fill="#005c85"/><path d="M1217 506h9v9h-9z" fill="#005c86"/><path d="M1225 506h9v9h-9z" fill="#005c88"/><path d="M1233 506h9v9h-9z" fill="#005d89"/><path d="M1241 506h9v9h-9z" fill="#005d8b"/><path d="M1249 506h9v9h-9z" fill="#005d8c"/><path d="M1257 506h9v9h-9z" fill="#005d8e"/><path d="M1265 506h9v9h-9z" fill="#005e8f"/><path d="M1273 506h9v9h-9z" fill="#005e90"/><path d="M1281 506h9v9h-9z" fill="#005e92"/><path d="M1289 506h9v9h-9z" fill="#005e93"/><path d="M1297 506h9v9h-9z" fill="#005e95"/><path d="M1305 506h9v9h-9z" fill="#005e96"/><path d="M1313 506h9v9h-9z" fill="#005e97"/><path d="M1321 506h9v9h-9z" fill="#005e99"/><path d="M1329 506h9v9h-9z" fill="#005e9a"/><path d="M1337 506h9v9h-9z" fill="#005d9c"/><path d="M1345 506h9v9h-9z" fill="#005d9d"/><path d="M1353 506h9v9h-9z" fill="#025d9e"/><path d="M1361 506h9v9h-9z" fill="#0d5b9c"/><path d="M1369 506h9v9h-9z" fill="#17599b"/><path d="M1377 506h9v9h-9z" fill="#22569a"/><path d="M1385 506h9v9h-9z" fill="#2d5498"/><path d="M1393 506h9v9h-9z" fill="#395297"/><path d="M1401 506h9v9h-9z" fill="#445095"/><path d="M1409 506h9v9h-9z" fill="#504e94"/><path d="M1417 506h9v9h-9z" fill="#5c4c93"/><path d="M1425 506h9v9h-9z" fill="#694a91"/><path d="M1433 506h9v9h-9z" fill="#754790"/><path d="M1441 506h9v9h-9z" fill="#83458f"/><path d="M1449 506h9v9h-9z" fill="#8f428c"/><path d="M1457 506h9v9h-9z" fill="#8b397b"/><path d="M1465 506h9v9h-9z" fill="#88316e"/><path d="M1473 506h9v9h-9z" fill="#862b62"/><path d="M1481 506h9v9h-9z" fill="#842559"/><path d="M1489 506h9v9h-9z" fill="#822150"/><path d="M1497 506h9v9h-9z" fill="#811d49"/><path d="M1505 506h9v9h-9z" fill="#7f1943"/><path d="M1513 506h9v9h-9z" fill="#7e163d"/><path d="M1521 506h9v9h-9z" fill="#7d1338"/><path d="M1529 506h9v9h-9z" fill="#7c1134"/><path d="M1537 506h9v9h-9z" fill="#7b0e30"/><path d="M1545 506h9v9h-9z" fill="#7b0c2c"/><path d="M1553 506h9v9h-9z" fill="#7a0a29"/><path d="M1561 506h9v9h-9z" fill="#7a0926"/><path d="M1569 506h9v9h-9z" fill="#790723"/><path d="M1577 506h9v9h-9z" fill="#790621"/><path d="M1585 506h9v9h-9z" fill="#79041f"/><path d="M1593 506h9v9h-9z" fill="#78031c"/><path d="M1601 506h9v9h-9z" fill="#78021a"/><path d="M1609 506h9v9h-9z" fill="#780119"/><path d="M1617 506h9v9h-9z" fill="#780017"/><path d="M1625 506h9v9h-9z" fill="#770015"/><path d="M1633 506h9v9h-9z" fill="#750013"/><path d="M1641 506h9v9h-9z" fill="#740012"/><path d="M1649 506h9v9h-9z" fill="#730010"/><path d="M1657 506h9v9h-9z" fill="#72000f"/><path d="M1665 506h9v9h-9z" fill="#71000e"/><path d="M1673 506h9v9h-9z" fill="#70000c"/><path d="M1681 506h9v9h-9z" fill="#6f000b"/><path d="M1689 506h9v9h-9z" fill="#6e000a"/><path d="M1697 506h9v9h-9z" fill="#6e0009"/><path d="M1705 506h9v9h-9z" fill="#6d0008"/><path d="M1713 506h9v9h-9z" fill="#6c0007"/><path d="M1721 506h9v9h-9z" fill="#6b0007"/><path d="M1729 506h9v9h-9z" fill="#6a0006"/><path d="M1737 506h9v9h-9z" fill="#690005"/><path d="M1745 506h9v9h-9z" fill="#690004"/><path d="M1753 506h9v9h-9z" fill="#680004"/><path d="M1761 506h9v9h-9z" fill="#670003"/><path d="M1769 506h9v9h-9z" fill="#660002"/><path d="M1777 506h9v9h-9z" fill="#650002"/><path d="M1785 506h9v9h-9z" fill="#650001"/><path d="M1793 506h9v9h-9z" fill="#640001"/><path d="M1801 506h9v9h-9z" fill="#630000"/><path d="M1809 506h9v9h-9z" fill="#620000"/><path d="M1217 514h9v9h-9z" fill="#005687"/><path d="M1225 514h9v9h-9z" fill="#005688"/><path d="M1233 514h9v9h-9z" fill="#00568a"/><path d="M1241 514h9v9h-9z" fill="#00568b"/><path d="M1249 514h9v9h-9z" fill="#00568d"/><path d="M1257 514h9v9h-9z" fill="#00568e"/><path d="M1265 514h9v9h-9z" fill="#00568f"/><path d="M1273 514h9v9h-9z" fill="#005691"/><path d="M1281 514h9v9h-9z" fill="#005692"/><path d="M1289 514h9v9h-9z" fill="#005694"/><path d="M1297 514h9v9h-9z" fill="#005695"/><path d="M1305 514h9v9h-9z" fill="#005696"/><path d="M1313 514h9v9h-9z" fill="#005698"/><path d="M1321 514h9v9h-9z" fill="#059"/><path d="M1329 514h9v9h-9z" fill="#00559b"/><path d="M1337 514h9v9h-9z" fill="#00559c"/><path d="M1345 514h9v9h-9z" fill="#00549e"/><path d="M1353 514h9v9h-9z" fill="#06539d"/><path d="M1361 514h9v9h-9z" fill="#10519c"/><path d="M1369 514h9v9h-9z" fill="#1a4f9a"/><path d="M1377 514h9v9h-9z" fill="#254c99"/><path d="M1385 514h9v9h-9z" fill="#304a98"/><path d="M1393 514h9v9h-9z" fill="#3b4896"/><path d="M1401 514h9v9h-9z" fill="#464695"/><path d="M1409 514h9v9h-9z" fill="#514493"/><path d="M1417 514h9v9h-9z" fill="#5d4292"/><path d="M1425 514h9v9h-9z" fill="#693f91"/><path d="M1433 514h9v9h-9z" fill="#753d90"/><path d="M1441 514h9v9h-9z" fill="#843c90"/><path d="M1449 514h9v9h-9z" fill="#91398f"/><path d="M1457 514h9v9h-9z" fill="#8d317f"/><path d="M1465 514h9v9h-9z" fill="#8a2a71"/><path d="M1473 514h9v9h-9z" fill="#882466"/><path d="M1481 514h9v9h-9z" fill="#86205c"/><path d="M1489 514h9v9h-9z" fill="#841b53"/><path d="M1497 514h9v9h-9z" fill="#83184c"/><path d="M1505 514h9v9h-9z" fill="#811446"/><path d="M1513 514h9v9h-9z" fill="#801240"/><path d="M1521 514h9v9h-9z" fill="#7f0f3b"/><path d="M1529 514h9v9h-9z" fill="#7e0d37"/><path d="M1537 514h9v9h-9z" fill="#7d0b32"/><path d="M1545 514h9v9h-9z" fill="#7d092f"/><path d="M1553 514h9v9h-9z" fill="#7c072b"/><path d="M1561 514h9v9h-9z" fill="#7c0628"/><path d="M1569 514h9v9h-9z" fill="#7b0426"/><path d="M1577 514h9v9h-9z" fill="#7b0323"/><path d="M1585 514h9v9h-9z" fill="#7b0221"/><path d="M1593 514h9v9h-9z" fill="#7a001e"/><path d="M1601 514h9v9h-9z" fill="#79001c"/><path d="M1609 514h9v9h-9z" fill="#78001a"/><path d="M1617 514h9v9h-9z" fill="#770018"/><path d="M1625 514h9v9h-9z" fill="#760016"/><path d="M1633 514h9v9h-9z" fill="#750015"/><path d="M1641 514h9v9h-9z" fill="#740013"/><path d="M1649 514h9v9h-9z" fill="#720011"/><path d="M1657 514h9v9h-9z" fill="#710010"/><path d="M1665 514h9v9h-9z" fill="#70000f"/><path d="M1673 514h9v9h-9z" fill="#6f000e"/><path d="M1681 514h9v9h-9z" fill="#6f000c"/><path d="M1689 514h9v9h-9z" fill="#6e000b"/><path d="M1697 514h9v9h-9z" fill="#6d000a"/><path d="M1705 514h9v9h-9z" fill="#6c0009"/><path d="M1713 514h9v9h-9z" fill="#6b0008"/><path d="M1721 514h9v9h-9z" fill="#6a0008"/><path d="M1729 514h9v9h-9z" fill="#690007"/><path d="M1737 514h9v9h-9z" fill="#690006"/><path d="M1745 514h9v9h-9z" fill="#680005"/><path d="M1753 514h9v9h-9z" fill="#670005"/><path d="M1761 514h9v9h-9z" fill="#660004"/><path d="M1769 514h9v9h-9z" fill="#650003"/><path d="M1777 514h9v9h-9z" fill="#650003"/><path d="M1785 514h9v9h-9z" fill="#640002"/><path d="M1217 522h9v9h-9z" fill="#005088"/><path d="M1225 522h9v9h-9z" fill="#005089"/><path d="M1233 522h9v9h-9z" fill="#00508a"/><path d="M1241 522h9v9h-9z" fill="#00508c"/><path d="M1249 522h9v9h-9z" fill="#00508d"/><path d="M1257 522h9v9h-9z" fill="#00508f"/><path d="M1265 522h9v9h-9z" fill="#004f90"/><path d="M1273 522h9v9h-9z" fill="#004f91"/><path d="M1281 522h9v9h-9z" fill="#004f93"/><path d="M1289 522h9v9h-9z" fill="#004f94"/><path d="M1297 522h9v9h-9z" fill="#004f96"/><path d="M1305 522h9v9h-9z" fill="#004e97"/><path d="M1313 522h9v9h-9z" fill="#004e98"/><path d="M1321 522h9v9h-9z" fill="#004d9a"/><path d="M1329 522h9v9h-9z" fill="#004d9b"/><path d="M1337 522h9v9h-9z" fill="#004c9d"/><path d="M1345 522h9v9h-9z" fill="#004b9e"/><path d="M1353 522h9v9h-9z" fill="#09499d"/><path d="M1361 522h9v9h-9z" fill="#13479b"/><path d="M1369 522h9v9h-9z" fill="#1d459a"/><path d="M1377 522h9v9h-9z" fill="#274399"/><path d="M1385 522h9v9h-9z" fill="#324197"/><path d="M1393 522h9v9h-9z" fill="#3c3f96"/><path d="M1401 522h9v9h-9z" fill="#473d94"/><path d="M1409 522h9v9h-9z" fill="#523a93"/><path d="M1417 522h9v9h-9z" fill="#5d3892"/><path d="M1425 522h9v9h-9z" fill="#693691"/><path d="M1433 522h9v9h-9z" fill="#773491"/><path d="M1441 522h9v9h-9z" fill="#853392"/><path d="M1449 522h9v9h-9z" fill="#933192"/><path d="M1457 522h9v9h-9z" fill="#8f2982"/><path d="M1465 522h9v9h-9z" fill="#8d2374"/><path d="M1473 522h9v9h-9z" fill="#8a1e69"/><path d="M1481 522h9v9h-9z" fill="#881a5f"/><path d="M1489 522h9v9h-9z" fill="#861656"/><path d="M1497 522h9v9h-9z" fill="#85134f"/><path d="M1505 522h9v9h-9z" fill="#831049"/><path d="M1513 522h9v9h-9z" fill="#820d43"/><path d="M1521 522h9v9h-9z" fill="#810b3e"/><path d="M1529 522h9v9h-9z" fill="#800939"/><path d="M1537 522h9v9h-9z" fill="#800735"/><path d="M1545 522h9v9h-9z" fill="#7f0531"/><path d="M1553 522h9v9h-9z" fill="#7e042e"/><path d="M1561 522h9v9h-9z" fill="#7e022b"/><path d="M1569 522h9v9h-9z" fill="#7d0128"/><path d="M1577 522h9v9h-9z" fill="#7d0025"/><path d="M1585 522h9v9h-9z" fill="#7b0022"/><path d="M1593 522h9v9h-9z" fill="#7a0020"/><path d="M1601 522h9v9h-9z" fill="#79001d"/><path d="M1609 522h9v9h-9z" fill="#77001b"/><path d="M1617 522h9v9h-9z" fill="#760019"/><path d="M1625 522h9v9h-9z" fill="#750017"/><path d="M1633 522h9v9h-9z" fill="#740016"/><path d="M1641 522h9v9h-9z" fill="#730014"/><path d="M1649 522h9v9h-9z" fill="#720013"/><path d="M1657 522h9v9h-9z" fill="#710011"/><path d="M1665 522h9v9h-9z" fill="#700010"/><path d="M1673 522h9v9h-9z" fill="#6f000f"/><path d="M1681 522h9v9h-9z" fill="#6e000d"/><path d="M1689 522h9v9h-9z" fill="#6d000c"/><path d="M1697 522h9v9h-9z" fill="#6c000b"/><path d="M1705 522h9v9h-9z" fill="#6b000a"/><path d="M1713 522h9v9h-9z" fill="#6a0009"/><path d="M1721 522h9v9h-9z" fill="#690008"/><path d="M1729 522h9v9h-9z" fill="#680008"/><path d="M1737 522h9v9h-9z" fill="#680007"/><path d="M1745 522h9v9h-9z" fill="#670006"/><path d="M1753 522h9v9h-9z" fill="#660005"/><path d="M1761 522h9v9h-9z" fill="#650005"/><path d="M1769 522h9v9h-9z" fill="#650004"/><path d="M1225 530h9v9h-9z" fill="#004a8a"/><path d="M1233 530h9v9h-9z" fill="#004a8b"/><path d="M1241 530h9v9h-9z" fill="#004a8c"/><path d="M1249 530h9v9h-9z" fill="#00498e"/><path d="M1257 530h9v9h-9z" fill="#00498f"/><path d="M1265 530h9v9h-9z" fill="#004991"/><path d="M1273 530h9v9h-9z" fill="#004992"/><path d="M1281 530h9v9h-9z" fill="#004893"/><path d="M1289 530h9v9h-9z" fill="#004895"/><path d="M1297 530h9v9h-9z" fill="#004796"/><path d="M1305 530h9v9h-9z" fill="#004798"/><path d="M1313 530h9v9h-9z" fill="#004699"/><path d="M1321 530h9v9h-9z" fill="#00469a"/><path d="M1329 530h9v9h-9z" fill="#00459c"/><path d="M1337 530h9v9h-9z" fill="#00449d"/><path d="M1345 530h9v9h-9z" fill="#03439e"/><path d="M1353 530h9v9h-9z" fill="#0d419c"/><path d="M1361 530h9v9h-9z" fill="#163f9b"/><path d="M1369 530h9v9h-9z" fill="#203c99"/><path d="M1377 530h9v9h-9z" fill="#2a3a98"/><path d="M1385 530h9v9h-9z" fill="#343897"/><path d="M1393 530h9v9h-9z" fill="#3e3695"/><path d="M1401 530h9v9h-9z" fill="#493494"/><path d="M1409 530h9v9h-9z" fill="#533292"/><path d="M1417 530h9v9h-9z" fill="#5e3092"/><path d="M1425 530h9v9h-9z" fill="#6b2e93"/><path d="M1433 530h9v9h-9z" fill="#782c93"/><path d="M1441 530h9v9h-9z" fill="#862a94"/><path d="M1449 530h9v9h-9z" fill="#942895"/><path d="M1457 530h9v9h-9z" fill="#912285"/><path d="M1465 530h9v9h-9z" fill="#8f1d77"/><path d="M1473 530h9v9h-9z" fill="#8c186c"/><path d="M1481 530h9v9h-9z" fill="#8a1462"/><path d="M1489 530h9v9h-9z" fill="#881159"/><path d="M1497 530h9v9h-9z" fill="#870e52"/><path d="M1505 530h9v9h-9z" fill="#860b4b"/><path d="M1513 530h9v9h-9z" fill="#840946"/><path d="M1521 530h9v9h-9z" fill="#830740"/><path d="M1529 530h9v9h-9z" fill="#82053c"/><path d="M1537 530h9v9h-9z" fill="#820337"/><path d="M1545 530h9v9h-9z" fill="#810234"/><path d="M1553 530h9v9h-9z" fill="#800130"/><path d="M1561 530h9v9h-9z" fill="#7f002d"/><path d="M1569 530h9v9h-9z" fill="#7d0029"/><path d="M1577 530h9v9h-9z" fill="#7c0026"/><path d="M1585 530h9v9h-9z" fill="#7a0024"/><path d="M1593 530h9v9h-9z" fill="#790021"/><path d="M1601 530h9v9h-9z" fill="#78001f"/><path d="M1609 530h9v9h-9z" fill="#76001c"/><path d="M1617 530h9v9h-9z" fill="#75001a"/><path d="M1625 530h9v9h-9z" fill="#740019"/><path d="M1633 530h9v9h-9z" fill="#730017"/><path d="M1641 530h9v9h-9z" fill="#720015"/><path d="M1649 530h9v9h-9z" fill="#710014"/><path d="M1657 530h9v9h-9z" fill="#700012"/><path d="M1665 530h9v9h-9z" fill="#6f0011"/><path d="M1673 530h9v9h-9z" fill="#6e0010"/><path d="M1681 530h9v9h-9z" fill="#6d000e"/><path d="M1689 530h9v9h-9z" fill="#6c000d"/><path d="M1697 530h9v9h-9z" fill="#6b000c"/><path d="M1705 530h9v9h-9z" fill="#6a000b"/><path d="M1713 530h9v9h-9z" fill="#69000a"/><path d="M1721 530h9v9h-9z" fill="#680009"/><path d="M1729 530h9v9h-9z" fill="#680009"/><path d="M1737 530h9v9h-9z" fill="#670008"/><path d="M1745 530h9v9h-9z" fill="#660007"/><path d="M1225 538h9v9h-9z" fill="#00448a"/><path d="M1233 538h9v9h-9z" fill="#00448b"/><path d="M1241 538h9v9h-9z" fill="#00448d"/><path d="M1249 538h9v9h-9z" fill="#00438e"/><path d="M1257 538h9v9h-9z" fill="#004390"/><path d="M1265 538h9v9h-9z" fill="#004291"/><path d="M1273 538h9v9h-9z" fill="#004292"/><path d="M1281 538h9v9h-9z" fill="#004294"/><path d="M1289 538h9v9h-9z" fill="#004195"/><path d="M1297 538h9v9h-9z" fill="#004097"/><path d="M1305 538h9v9h-9z" fill="#004098"/><path d="M1313 538h9v9h-9z" fill="#003f9a"/><path d="M1321 538h9v9h-9z" fill="#003e9b"/><path d="M1329 538h9v9h-9z" fill="#003d9c"/><path d="M1337 538h9v9h-9z" fill="#003c9e"/><path d="M1345 538h9v9h-9z" fill="#073b9d"/><path d="M1353 538h9v9h-9z" fill="#10399c"/><path d="M1361 538h9v9h-9z" fill="#19369a"/><path d="M1369 538h9v9h-9z" fill="#233499"/><path d="M1377 538h9v9h-9z" fill="#2c3297"/><path d="M1385 538h9v9h-9z" fill="#363096"/><path d="M1393 538h9v9h-9z" fill="#402e95"/><path d="M1401 538h9v9h-9z" fill="#4a2c93"/><path d="M1409 538h9v9h-9z" fill="#552a93"/><path d="M1417 538h9v9h-9z" fill="#602894"/><path d="M1425 538h9v9h-9z" fill="#6d2694"/><path d="M1433 538h9v9h-9z" fill="#7a2495"/><path d="M1441 538h9v9h-9z" fill="#872296"/><path d="M1449 538h9v9h-9z" fill="#952096"/><path d="M1457 538h9v9h-9z" fill="#941b88"/><path d="M1465 538h9v9h-9z" fill="#91167a"/><path d="M1473 538h9v9h-9z" fill="#8e126f"/><path d="M1481 538h9v9h-9z" fill="#8c0f65"/><path d="M1489 538h9v9h-9z" fill="#8b0c5c"/><path d="M1497 538h9v9h-9z" fill="#890955"/><path d="M1505 538h9v9h-9z" fill="#88074e"/><path d="M1513 538h9v9h-9z" fill="#860548"/><path d="M1521 538h9v9h-9z" fill="#850343"/><path d="M1529 538h9v9h-9z" fill="#84013e"/><path d="M1537 538h9v9h-9z" fill="#83003a"/><path d="M1545 538h9v9h-9z" fill="#820035"/><path d="M1553 538h9v9h-9z" fill="#800031"/><path d="M1561 538h9v9h-9z" fill="#7e002e"/><path d="M1569 538h9v9h-9z" fill="#7d002b"/><path d="M1577 538h9v9h-9z" fill="#7b0027"/><path d="M1585 538h9v9h-9z" fill="#7a0025"/><path d="M1593 538h9v9h-9z" fill="#780022"/><path d="M1601 538h9v9h-9z" fill="#770020"/><path d="M1609 538h9v9h-9z" fill="#76001e"/><path d="M1617 538h9v9h-9z" fill="#74001b"/><path d="M1625 538h9v9h-9z" fill="#73001a"/><path d="M1633 538h9v9h-9z" fill="#720018"/><path d="M1641 538h9v9h-9z" fill="#710016"/><path d="M1649 538h9v9h-9z" fill="#700015"/><path d="M1657 538h9v9h-9z" fill="#6f0013"/><path d="M1665 538h9v9h-9z" fill="#6e0012"/><path d="M1673 538h9v9h-9z" fill="#6d0011"/><path d="M1681 538h9v9h-9z" fill="#6c000f"/><path d="M1689 538h9v9h-9z" fill="#6b000e"/><path d="M1697 538h9v9h-9z" fill="#6a000d"/><path d="M1705 538h9v9h-9z" fill="#69000c"/><path d="M1713 538h9v9h-9z" fill="#68000b"/><path d="M1721 538h9v9h-9z" fill="#67000a"/><path d="M1233 546h9v9h-9z" fill="#003e8c"/><path d="M1241 546h9v9h-9z" fill="#003e8d"/><path d="M1249 546h9v9h-9z" fill="#003d8f"/><path d="M1257 546h9v9h-9z" fill="#003d90"/><path d="M1265 546h9v9h-9z" fill="#003c92"/><path d="M1273 546h9v9h-9z" fill="#003c93"/><path d="M1281 546h9v9h-9z" fill="#003b94"/><path d="M1289 546h9v9h-9z" fill="#003a96"/><path d="M1297 546h9v9h-9z" fill="#003a97"/><path d="M1305 546h9v9h-9z" fill="#003999"/><path d="M1313 546h9v9h-9z" fill="#00389a"/><path d="M1321 546h9v9h-9z" fill="#00379b"/><path d="M1329 546h9v9h-9z" fill="#00369d"/><path d="M1337 546h9v9h-9z" fill="#01359e"/><path d="M1345 546h9v9h-9z" fill="#0a339d"/><path d="M1353 546h9v9h-9z" fill="#13319b"/><path d="M1361 546h9v9h-9z" fill="#1c2f9a"/><path d="M1369 546h9v9h-9z" fill="#252d98"/><path d="M1377 546h9v9h-9z" fill="#2e2a97"/><path d="M1385 546h9v9h-9z" fill="#382896"/><path d="M1393 546h9v9h-9z" fill="#412694"/><path d="M1401 546h9v9h-9z" fill="#4b2494"/><path d="M1409 546h9v9h-9z" fill="#572295"/><path d="M1417 546h9v9h-9z" fill="#622195"/><path d="M1425 546h9v9h-9z" fill="#6e1f96"/><path d="M1433 546h9v9h-9z" fill="#7b1d97"/><path d="M1441 546h9v9h-9z" fill="#881a98"/><path d="M1449 546h9v9h-9z" fill="#961898"/><path d="M1457 546h9v9h-9z" fill="#96148b"/><path d="M1465 546h9v9h-9z" fill="#93107d"/><path d="M1473 546h9v9h-9z" fill="#910c72"/><path d="M1481 546h9v9h-9z" fill="#8e0968"/><path d="M1489 546h9v9h-9z" fill="#8d075f"/><path d="M1497 546h9v9h-9z" fill="#8b0458"/><path d="M1505 546h9v9h-9z" fill="#8a0251"/><path d="M1513 546h9v9h-9z" fill="#89014b"/><path d="M1521 546h9v9h-9z" fill="#870045"/><path d="M1529 546h9v9h-9z" fill="#850040"/><path d="M1537 546h9v9h-9z" fill="#83003b"/><path d="M1545 546h9v9h-9z" fill="#810037"/><path d="M1553 546h9v9h-9z" fill="#7f0033"/><path d="M1561 546h9v9h-9z" fill="#7d002f"/><path d="M1569 546h9v9h-9z" fill="#7c002c"/><path d="M1577 546h9v9h-9z" fill="#7a0029"/><path d="M1585 546h9v9h-9z" fill="#790026"/><path d="M1593 546h9v9h-9z" fill="#770023"/><path d="M1601 546h9v9h-9z" fill="#760021"/><path d="M1609 546h9v9h-9z" fill="#75001f"/><path d="M1617 546h9v9h-9z" fill="#74001d"/><path d="M1625 546h9v9h-9z" fill="#72001b"/><path d="M1633 546h9v9h-9z" fill="#710019"/><path d="M1641 546h9v9h-9z" fill="#700017"/><path d="M1649 546h9v9h-9z" fill="#6f0016"/><path d="M1657 546h9v9h-9z" fill="#6e0014"/><path d="M1665 546h9v9h-9z" fill="#6d0013"/><path d="M1673 546h9v9h-9z" fill="#6c0011"/><path d="M1681 546h9v9h-9z" fill="#6b0010"/><path d="M1689 546h9v9h-9z" fill="#6a000f"/><path d="M1697 546h9v9h-9z" fill="#69000e"/><path d="M1233 554h9v9h-9z" fill="#00398d"/><path d="M1241 554h9v9h-9z" fill="#00388e"/><path d="M1249 554h9v9h-9z" fill="#00388f"/><path d="M1257 554h9v9h-9z" fill="#003791"/><path d="M1265 554h9v9h-9z" fill="#003792"/><path d="M1273 554h9v9h-9z" fill="#003694"/><path d="M1281 554h9v9h-9z" fill="#003595"/><path d="M1289 554h9v9h-9z" fill="#003496"/><path d="M1297 554h9v9h-9z" fill="#003398"/><path d="M1305 554h9v9h-9z" fill="#003299"/><path d="M1313 554h9v9h-9z" fill="#00319b"/><path d="M1321 554h9v9h-9z" fill="#00309c"/><path d="M1329 554h9v9h-9z" fill="#002f9d"/><path d="M1337 554h9v9h-9z" fill="#042e9d"/><path d="M1345 554h9v9h-9z" fill="#0d2c9c"/><path d="M1353 554h9v9h-9z" fill="#152a9b"/><path d="M1361 554h9v9h-9z" fill="#1e2799"/><path d="M1369 554h9v9h-9z" fill="#272598"/><path d="M1377 554h9v9h-9z" fill="#302396"/><path d="M1385 554h9v9h-9z" fill="#392195"/><path d="M1393 554h9v9h-9z" fill="#431f95"/><path d="M1401 554h9v9h-9z" fill="#4e1d96"/><path d="M1409 554h9v9h-9z" fill="#591b96"/><path d="M1417 554h9v9h-9z" fill="#641997"/><path d="M1425 554h9v9h-9z" fill="#701798"/><path d="M1433 554h9v9h-9z" fill="#7d1599"/><path d="M1441 554h9v9h-9z" fill="#8a1399"/><path d="M1449 554h9v9h-9z" fill="#97119a"/><path d="M1457 554h9v9h-9z" fill="#980d8e"/><path d="M1465 554h9v9h-9z" fill="#950980"/><path d="M1473 554h9v9h-9z" fill="#930675"/><path d="M1481 554h9v9h-9z" fill="#91046b"/><path d="M1489 554h9v9h-9z" fill="#8f0262"/><path d="M1497 554h9v9h-9z" fill="#8d005b"/><path d="M1505 554h9v9h-9z" fill="#8a0053"/><path d="M1513 554h9v9h-9z" fill="#88004c"/><path d="M1521 554h9v9h-9z" fill="#860046"/><path d="M1529 554h9v9h-9z" fill="#840041"/><path d="M1537 554h9v9h-9z" fill="#82003c"/><path d="M1545 554h9v9h-9z" fill="#800038"/><path d="M1553 554h9v9h-9z" fill="#7e0034"/><path d="M1561 554h9v9h-9z" fill="#7c0030"/><path d="M1569 554h9v9h-9z" fill="#7b002d"/><path d="M1577 554h9v9h-9z" fill="#79002a"/><path d="M1585 554h9v9h-9z" fill="#780027"/><path d="M1593 554h9v9h-9z" fill="#760024"/><path d="M1601 554h9v9h-9z" fill="#750022"/><path d="M1609 554h9v9h-9z" fill="#740020"/><path d="M1617 554h9v9h-9z" fill="#73001e"/><path d="M1625 554h9v9h-9z" fill="#71001c"/><path d="M1633 554h9v9h-9z" fill="#70001a"/><path d="M1641 554h9v9h-9z" fill="#6f0018"/><path d="M1649 554h9v9h-9z" fill="#6e0016"/><path d="M1657 554h9v9h-9z" fill="#6d0015"/><path d="M1665 554h9v9h-9z" fill="#6c0014"/><path d="M1673 554h9v9h-9z" fill="#6b0012"/><path d="M1241 562h9v9h-9z" fill="#00338e"/><path d="M1249 562h9v9h-9z" fill="#003290"/><path d="M1257 562h9v9h-9z" fill="#003291"/><path d="M1265 562h9v9h-9z" fill="#003193"/><path d="M1273 562h9v9h-9z" fill="#003094"/><path d="M1281 562h9v9h-9z" fill="#002f96"/><path d="M1289 562h9v9h-9z" fill="#002e97"/><path d="M1297 562h9v9h-9z" fill="#002d98"/><path d="M1305 562h9v9h-9z" fill="#002c9a"/><path d="M1313 562h9v9h-9z" fill="#002b9b"/><path d="M1321 562h9v9h-9z" fill="#002a9d"/><path d="M1329 562h9v9h-9z" fill="#00299e"/><path d="M1337 562h9v9h-9z" fill="#07279d"/><path d="M1345 562h9v9h-9z" fill="#10259b"/><path d="M1353 562h9v9h-9z" fill="#18239a"/><path d="M1361 562h9v9h-9z" fill="#212199"/><path d="M1369 562h9v9h-9z" fill="#291e97"/><path d="M1377 562h9v9h-9z" fill="#321c96"/><path d="M1385 562h9v9h-9z" fill="#3b1b96"/><path d="M1393 562h9v9h-9z" fill="#451997"/><path d="M1401 562h9v9h-9z" fill="#501798"/><path d="M1409 562h9v9h-9z" fill="#5b1598"/><path d="M1417 562h9v9h-9z" fill="#661399"/><path d="M1425 562h9v9h-9z" fill="#72109a"/><path d="M1433 562h9v9h-9z" fill="#7e0e9a"/><path d="M1441 562h9v9h-9z" fill="#8b0c9b"/><path d="M1449 562h9v9h-9z" fill="#98099c"/><path d="M1457 562h9v9h-9z" fill="#9a0691"/><path d="M1465 562h9v9h-9z" fill="#970383"/><path d="M1473 562h9v9h-9z" fill="#950178"/><path d="M1481 562h9v9h-9z" fill="#92006d"/><path d="M1489 562h9v9h-9z" fill="#8f0064"/><path d="M1497 562h9v9h-9z" fill="#8c005b"/><path d="M1505 562h9v9h-9z" fill="#890054"/><path d="M1513 562h9v9h-9z" fill="#87004d"/><path d="M1521 562h9v9h-9z" fill="#850047"/><path d="M1529 562h9v9h-9z" fill="#830042"/><path d="M1537 562h9v9h-9z" fill="#81003d"/><path d="M1545 562h9v9h-9z" fill="#7f0039"/><path d="M1553 562h9v9h-9z" fill="#7d0035"/><path d="M1561 562h9v9h-9z" fill="#7b0031"/><path d="M1569 562h9v9h-9z" fill="#7a002e"/><path d="M1577 562h9v9h-9z" fill="#78002b"/><path d="M1585 562h9v9h-9z" fill="#770028"/><path d="M1593 562h9v9h-9z" fill="#750025"/><path d="M1601 562h9v9h-9z" fill="#740023"/><path d="M1609 562h9v9h-9z" fill="#730021"/><path d="M1617 562h9v9h-9z" fill="#72001e"/><path d="M1625 562h9v9h-9z" fill="#70001c"/><path d="M1633 562h9v9h-9z" fill="#6f001b"/><path d="M1641 562h9v9h-9z" fill="#6e0019"/><path d="M1649 562h9v9h-9z" fill="#6d0017"/><path d="M1241 570h9v9h-9z" fill="#002e8f"/><path d="M1249 570h9v9h-9z" fill="#002d90"/><path d="M1257 570h9v9h-9z" fill="#002c92"/><path d="M1265 570h9v9h-9z" fill="#002b93"/><path d="M1273 570h9v9h-9z" fill="#002b95"/><path d="M1281 570h9v9h-9z" fill="#002a96"/><path d="M1289 570h9v9h-9z" fill="#002997"/><path d="M1297 570h9v9h-9z" fill="#002799"/><path d="M1305 570h9v9h-9z" fill="#00269a"/><path d="M1313 570h9v9h-9z" fill="#00259c"/><path d="M1321 570h9v9h-9z" fill="#00249d"/><path d="M1329 570h9v9h-9z" fill="#02229e"/><path d="M1337 570h9v9h-9z" fill="#0a209c"/><path d="M1345 570h9v9h-9z" fill="#121e9b"/><path d="M1353 570h9v9h-9z" fill="#1b1c9a"/><path d="M1361 570h9v9h-9z" fill="#231a98"/><path d="M1369 570h9v9h-9z" fill="#2b1897"/><path d="M1377 570h9v9h-9z" fill="#341697"/><path d="M1385 570h9v9h-9z" fill="#3e1498"/><path d="M1393 570h9v9h-9z" fill="#481299"/><path d="M1401 570h9v9h-9z" fill="#521099"/><path d="M1409 570h9v9h-9z" fill="#5d0e9a"/><path d="M1417 570h9v9h-9z" fill="#680c9b"/><path d="M1425 570h9v9h-9z" fill="#740a9b"/><path d="M1433 570h9v9h-9z" fill="#80079c"/><path d="M1441 570h9v9h-9z" fill="#8c059d"/><path d="M1449 570h9v9h-9z" fill="#99029e"/><path d="M1457 570h9v9h-9z" fill="#9c0094"/><path d="M1465 570h9v9h-9z" fill="#980085"/><path d="M1473 570h9v9h-9z" fill="#940079"/><path d="M1481 570h9v9h-9z" fill="#91006e"/><path d="M1489 570h9v9h-9z" fill="#8e0064"/><path d="M1497 570h9v9h-9z" fill="#8b005c"/><path d="M1505 570h9v9h-9z" fill="#805"/><path d="M1513 570h9v9h-9z" fill="#86004e"/><path d="M1521 570h9v9h-9z" fill="#840048"/><path d="M1529 570h9v9h-9z" fill="#820043"/><path d="M1537 570h9v9h-9z" fill="#80003e"/><path d="M1545 570h9v9h-9z" fill="#7e003a"/><path d="M1553 570h9v9h-9z" fill="#7c0036"/><path d="M1561 570h9v9h-9z" fill="#7a0032"/><path d="M1569 570h9v9h-9z" fill="#79002f"/><path d="M1577 570h9v9h-9z" fill="#77002c"/><path d="M1585 570h9v9h-9z" fill="#760029"/><path d="M1593 570h9v9h-9z" fill="#750026"/><path d="M1601 570h9v9h-9z" fill="#730024"/><path d="M1609 570h9v9h-9z" fill="#720021"/><path d="M1617 570h9v9h-9z" fill="#71001f"/><path d="M1625 570h9v9h-9z" fill="#70001d"/><path d="M1633 570h9v9h-9z" fill="#6e001c"/><path d="M1249 578h9v9h-9z" fill="#002891"/><path d="M1257 578h9v9h-9z" fill="#002792"/><path d="M1265 578h9v9h-9z" fill="#002694"/><path d="M1273 578h9v9h-9z" fill="#002595"/><path d="M1281 578h9v9h-9z" fill="#002497"/><path d="M1289 578h9v9h-9z" fill="#002398"/><path d="M1297 578h9v9h-9z" fill="#029"/><path d="M1305 578h9v9h-9z" fill="#00219b"/><path d="M1313 578h9v9h-9z" fill="#001f9c"/><path d="M1321 578h9v9h-9z" fill="#001e9e"/><path d="M1329 578h9v9h-9z" fill="#051c9d"/><path d="M1337 578h9v9h-9z" fill="#0d1a9c"/><path d="M1345 578h9v9h-9z" fill="#15189a"/><path d="M1353 578h9v9h-9z" fill="#1d1699"/><path d="M1361 578h9v9h-9z" fill="#251498"/><path d="M1369 578h9v9h-9z" fill="#2e1298"/><path d="M1377 578h9v9h-9z" fill="#371099"/><path d="M1385 578h9v9h-9z" fill="#400e9a"/><path d="M1393 578h9v9h-9z" fill="#4a0c9a"/><path d="M1401 578h9v9h-9z" fill="#540a9b"/><path d="M1409 578h9v9h-9z" fill="#5f089c"/><path d="M1417 578h9v9h-9z" fill="#6a069c"/><path d="M1425 578h9v9h-9z" fill="#75039d"/><path d="M1433 578h9v9h-9z" fill="#81019e"/><path d="M1441 578h9v9h-9z" fill="#8d009e"/><path d="M1449 578h9v9h-9z" fill="#98009d"/><path d="M1457 578h9v9h-9z" fill="#9a0093"/><path d="M1465 578h9v9h-9z" fill="#960085"/><path d="M1473 578h9v9h-9z" fill="#930079"/><path d="M1481 578h9v9h-9z" fill="#8f006e"/><path d="M1489 578h9v9h-9z" fill="#8c0065"/><path d="M1497 578h9v9h-9z" fill="#8a005d"/><path d="M1505 578h9v9h-9z" fill="#870055"/><path d="M1513 578h9v9h-9z" fill="#85004f"/><path d="M1521 578h9v9h-9z" fill="#830049"/><path d="M1529 578h9v9h-9z" fill="#810044"/><path d="M1537 578h9v9h-9z" fill="#7f003f"/><path d="M1545 578h9v9h-9z" fill="#7d003a"/><path d="M1553 578h9v9h-9z" fill="#7b0036"/><path d="M1561 578h9v9h-9z" fill="#790033"/><path d="M1569 578h9v9h-9z" fill="#78002f"/><path d="M1577 578h9v9h-9z" fill="#76002c"/><path d="M1585 578h9v9h-9z" fill="#75002a"/><path d="M1593 578h9v9h-9z" fill="#740027"/><path d="M1601 578h9v9h-9z" fill="#720025"/><path d="M1609 578h9v9h-9z" fill="#710022"/><path d="M1249 586h9v9h-9z" fill="#002392"/><path d="M1257 586h9v9h-9z" fill="#002293"/><path d="M1265 586h9v9h-9z" fill="#002194"/><path d="M1273 586h9v9h-9z" fill="#002096"/><path d="M1281 586h9v9h-9z" fill="#001f97"/><path d="M1289 586h9v9h-9z" fill="#001e99"/><path d="M1297 586h9v9h-9z" fill="#001c9a"/><path d="M1305 586h9v9h-9z" fill="#001b9b"/><path d="M1313 586h9v9h-9z" fill="#001a9d"/><path d="M1321 586h9v9h-9z" fill="#00189e"/><path d="M1329 586h9v9h-9z" fill="#08169d"/><path d="M1337 586h9v9h-9z" fill="#10149b"/><path d="M1345 586h9v9h-9z" fill="#17129a"/><path d="M1353 586h9v9h-9z" fill="#1f1099"/><path d="M1361 586h9v9h-9z" fill="#270e99"/><path d="M1369 586h9v9h-9z" fill="#300d9a"/><path d="M1377 586h9v9h-9z" fill="#390b9b"/><path d="M1385 586h9v9h-9z" fill="#43099b"/><path d="M1393 586h9v9h-9z" fill="#4c069c"/><path d="M1401 586h9v9h-9z" fill="#56049d"/><path d="M1409 586h9v9h-9z" fill="#61029e"/><path d="M1417 586h9v9h-9z" fill="#6b009e"/><path d="M1425 586h9v9h-9z" fill="#76009d"/><path d="M1433 586h9v9h-9z" fill="#80009d"/><path d="M1441 586h9v9h-9z" fill="#8b009c"/><path d="M1449 586h9v9h-9z" fill="#96009b"/><path d="M1457 586h9v9h-9z" fill="#990093"/><path d="M1465 586h9v9h-9z" fill="#950085"/><path d="M1473 586h9v9h-9z" fill="#910079"/><path d="M1481 586h9v9h-9z" fill="#8e006e"/><path d="M1489 586h9v9h-9z" fill="#8b0065"/><path d="M1497 586h9v9h-9z" fill="#89005d"/><path d="M1505 586h9v9h-9z" fill="#860056"/><path d="M1513 586h9v9h-9z" fill="#84004f"/><path d="M1521 586h9v9h-9z" fill="#82004a"/><path d="M1529 586h9v9h-9z" fill="#7f0044"/><path d="M1537 586h9v9h-9z" fill="#7e0040"/><path d="M1545 586h9v9h-9z" fill="#7c003b"/><path d="M1553 586h9v9h-9z" fill="#7a0037"/><path d="M1561 586h9v9h-9z" fill="#780034"/><path d="M1569 586h9v9h-9z" fill="#770030"/><path d="M1577 586h9v9h-9z" fill="#75002d"/><path d="M1585 586h9v9h-9z" fill="#74002a"/><path d="M1257 594h9v9h-9z" fill="#001d93"/><path d="M1265 594h9v9h-9z" fill="#001c95"/><path d="M1273 594h9v9h-9z" fill="#001b96"/><path d="M1281 594h9v9h-9z" fill="#001a98"/><path d="M1289 594h9v9h-9z" fill="#001999"/><path d="M1297 594h9v9h-9z" fill="#00179a"/><path d="M1305 594h9v9h-9z" fill="#00169c"/><path d="M1313 594h9v9h-9z" fill="#00149d"/><path d="M1321 594h9v9h-9z" fill="#03139e"/><path d="M1329 594h9v9h-9z" fill="#0a119c"/><path d="M1337 594h9v9h-9z" fill="#120f9b"/><path d="M1345 594h9v9h-9z" fill="#1a0d9a"/><path d="M1353 594h9v9h-9z" fill="#220b9a"/><path d="M1361 594h9v9h-9z" fill="#2a099b"/><path d="M1369 594h9v9h-9z" fill="#33079c"/><path d="M1377 594h9v9h-9z" fill="#3c059c"/><path d="M1385 594h9v9h-9z" fill="#45039d"/><path d="M1393 594h9v9h-9z" fill="#4e019e"/><path d="M1401 594h9v9h-9z" fill="#58009e"/><path d="M1409 594h9v9h-9z" fill="#61009d"/><path d="M1417 594h9v9h-9z" fill="#6b009c"/><path d="M1425 594h9v9h-9z" fill="#75009c"/><path d="M1433 594h9v9h-9z" fill="#7f009b"/><path d="M1441 594h9v9h-9z" fill="#89009a"/><path d="M1449 594h9v9h-9z" fill="#930099"/><path d="M1457 594h9v9h-9z" fill="#970092"/><path d="M1465 594h9v9h-9z" fill="#930085"/><path d="M1473 594h9v9h-9z" fill="#900079"/><path d="M1481 594h9v9h-9z" fill="#8d006f"/><path d="M1489 594h9v9h-9z" fill="#8a0066"/><path d="M1497 594h9v9h-9z" fill="#87005e"/><path d="M1505 594h9v9h-9z" fill="#850056"/><path d="M1513 594h9v9h-9z" fill="#830050"/><path d="M1521 594h9v9h-9z" fill="#80004a"/><path d="M1529 594h9v9h-9z" fill="#7e0045"/><path d="M1537 594h9v9h-9z" fill="#7d0040"/><path d="M1545 594h9v9h-9z" fill="#7b003c"/><path d="M1553 594h9v9h-9z" fill="#790038"/><path d="M1561 594h9v9h-9z" fill="#770034"/><path d="M1257 602h9v9h-9z" fill="#001994"/><path d="M1265 602h9v9h-9z" fill="#001795"/><path d="M1273 602h9v9h-9z" fill="#001697"/><path d="M1281 602h9v9h-9z" fill="#001598"/><path d="M1289 602h9v9h-9z" fill="#00149a"/><path d="M1297 602h9v9h-9z" fill="#00129b"/><path d="M1305 602h9v9h-9z" fill="#00119c"/><path d="M1313 602h9v9h-9z" fill="#000f9e"/><path d="M1321 602h9v9h-9z" fill="#060d9d"/><path d="M1329 602h9v9h-9z" fill="#0d0b9c"/><path d="M1337 602h9v9h-9z" fill="#14099b"/><path d="M1345 602h9v9h-9z" fill="#1c089b"/><path d="M1353 602h9v9h-9z" fill="#24069c"/><path d="M1361 602h9v9h-9z" fill="#2c049d"/><path d="M1369 602h9v9h-9z" fill="#35029e"/><path d="M1377 602h9v9h-9z" fill="#3e009e"/><path d="M1385 602h9v9h-9z" fill="#46009d"/><path d="M1393 602h9v9h-9z" fill="#4f009d"/><path d="M1401 602h9v9h-9z" fill="#58009c"/><path d="M1409 602h9v9h-9z" fill="#61009b"/><path d="M1417 602h9v9h-9z" fill="#6a009a"/><path d="M1425 602h9v9h-9z" fill="#74009a"/><path d="M1433 602h9v9h-9z" fill="#7d0099"/><path d="M1441 602h9v9h-9z" fill="#870098"/><path d="M1449 602h9v9h-9z" fill="#910098"/><path d="M1457 602h9v9h-9z" fill="#960091"/><path d="M1465 602h9v9h-9z" fill="#920084"/><path d="M1473 602h9v9h-9z" fill="#8f0079"/><path d="M1481 602h9v9h-9z" fill="#8c006f"/><path d="M1489 602h9v9h-9z" fill="#890066"/><path d="M1497 602h9v9h-9z" fill="#86005e"/><path d="M1505 602h9v9h-9z" fill="#840057"/><path d="M1513 602h9v9h-9z" fill="#810050"/><path d="M1521 602h9v9h-9z" fill="#7f004b"/><path d="M1529 602h9v9h-9z" fill="#7d0046"/><path d="M1537 602h9v9h-9z" fill="#7b0041"/><path d="M1265 610h9v9h-9z" fill="#001396"/><path d="M1273 610h9v9h-9z" fill="#001297"/><path d="M1281 610h9v9h-9z" fill="#001099"/><path d="M1289 610h9v9h-9z" fill="#000f9a"/><path d="M1297 610h9v9h-9z" fill="#000d9c"/><path d="M1305 610h9v9h-9z" fill="#000c9d"/><path d="M1313 610h9v9h-9z" fill="#010a9e"/><path d="M1321 610h9v9h-9z" fill="#08089c"/><path d="M1329 610h9v9h-9z" fill="#0f069c"/><path d="M1337 610h9v9h-9z" fill="#17049c"/><path d="M1345 610h9v9h-9z" fill="#1f039d"/><path d="M1353 610h9v9h-9z" fill="#27019e"/><path d="M1361 610h9v9h-9z" fill="#2e009e"/><path d="M1369 610h9v9h-9z" fill="#36009d"/><path d="M1377 610h9v9h-9z" fill="#3f009c"/><path d="M1385 610h9v9h-9z" fill="#47009b"/><path d="M1393 610h9v9h-9z" fill="#4f009b"/><path d="M1401 610h9v9h-9z" fill="#58009a"/><path d="M1409 610h9v9h-9z" fill="#610099"/><path d="M1417 610h9v9h-9z" fill="#690099"/><path d="M1425 610h9v9h-9z" fill="#720098"/><path d="M1433 610h9v9h-9z" fill="#7c0097"/><path d="M1441 610h9v9h-9z" fill="#850097"/><path d="M1449 610h9v9h-9z" fill="#8f0096"/><path d="M1457 610h9v9h-9z" fill="#940091"/><path d="M1465 610h9v9h-9z" fill="#910084"/><path d="M1473 610h9v9h-9z" fill="#8d0079"/><path d="M1481 610h9v9h-9z" fill="#8a006f"/><path d="M1489 610h9v9h-9z" fill="#870066"/><path d="M1497 610h9v9h-9z" fill="#85005e"/><path d="M1505 610h9v9h-9z" fill="#820057"/><path d="M1513 610h9v9h-9z" fill="#800051"/><path d="M1521 610h9v9h-9z" fill="#7e004b"/><path d="M1273 618h9v9h-9z" fill="#000d98"/><path d="M1281 618h9v9h-9z" fill="#000c99"/><path d="M1289 618h9v9h-9z" fill="#000a9b"/><path d="M1297 618h9v9h-9z" fill="#00099c"/><path d="M1305 618h9v9h-9z" fill="#00079d"/><path d="M1313 618h9v9h-9z" fill="#04059d"/><path d="M1321 618h9v9h-9z" fill="#0b039d"/><path d="M1329 618h9v9h-9z" fill="#12019e"/><path d="M1337 618h9v9h-9z" fill="#19009e"/><path d="M1345 618h9v9h-9z" fill="#21009d"/><path d="M1353 618h9v9h-9z" fill="#28009d"/><path d="M1361 618h9v9h-9z" fill="#30009c"/><path d="M1369 618h9v9h-9z" fill="#37009b"/><path d="M1377 618h9v9h-9z" fill="#3f009a"/><path d="M1385 618h9v9h-9z" fill="#47009a"/><path d="M1393 618h9v9h-9z" fill="#4f0099"/><path d="M1401 618h9v9h-9z" fill="#580098"/><path d="M1409 618h9v9h-9z" fill="#600098"/><path d="M1417 618h9v9h-9z" fill="#690097"/><path d="M1425 618h9v9h-9z" fill="#710096"/><path d="M1433 618h9v9h-9z" fill="#7a0095"/><path d="M1441 618h9v9h-9z" fill="#830095"/><path d="M1449 618h9v9h-9z" fill="#8d0094"/><path d="M1457 618h9v9h-9z" fill="#930090"/><path d="M1465 618h9v9h-9z" fill="#8f0083"/><path d="M1473 618h9v9h-9z" fill="#8c0078"/><path d="M1481 618h9v9h-9z" fill="#89006f"/><path d="M1489 618h9v9h-9z" fill="#860066"/><path d="M1497 618h9v9h-9z" fill="#84005e"/><path d="M1273 626h9v9h-9z" fill="#000998"/><path d="M1281 626h9v9h-9z" fill="#00079a"/><path d="M1289 626h9v9h-9z" fill="#00069b"/><path d="M1297 626h9v9h-9z" fill="#00049d"/><path d="M1305 626h9v9h-9z" fill="#00029e"/><path d="M1313 626h9v9h-9z" fill="#06009e"/><path d="M1321 626h9v9h-9z" fill="#0d009e"/><path d="M1329 626h9v9h-9z" fill="#14009d"/><path d="M1337 626h9v9h-9z" fill="#1b009c"/><path d="M1345 626h9v9h-9z" fill="#22009b"/><path d="M1353 626h9v9h-9z" fill="#2a009b"/><path d="M1361 626h9v9h-9z" fill="#31009a"/><path d="M1369 626h9v9h-9z" fill="#380099"/><path d="M1377 626h9v9h-9z" fill="#400099"/><path d="M1385 626h9v9h-9z" fill="#480098"/><path d="M1393 626h9v9h-9z" fill="#500097"/><path d="M1401 626h9v9h-9z" fill="#580097"/><path d="M1409 626h9v9h-9z" fill="#600096"/><path d="M1417 626h9v9h-9z" fill="#680095"/><path d="M1425 626h9v9h-9z" fill="#700094"/><path d="M1433 626h9v9h-9z" fill="#790094"/><path d="M1441 626h9v9h-9z" fill="#820093"/><path d="M1449 626h9v9h-9z" fill="#8b0092"/><path d="M1457 626h9v9h-9z" fill="#91008f"/><path d="M1465 626h9v9h-9z" fill="#8e0083"/><path d="M1473 626h9v9h-9z" fill="#8a0078"/><path d="M1281 634h9v9h-9z" fill="#00039a"/><path d="M1289 634h9v9h-9z" fill="#00019b"/><path d="M1297 634h9v9h-9z" fill="#00009d"/><path d="M1305 634h9v9h-9z" fill="#02009d"/><path d="M1313 634h9v9h-9z" fill="#09009d"/><path d="M1321 634h9v9h-9z" fill="#0f009c"/><path d="M1329 634h9v9h-9z" fill="#16009b"/><path d="M1337 634h9v9h-9z" fill="#1d009a"/><path d="M1345 634h9v9h-9z" fill="#24009a"/><path d="M1353 634h9v9h-9z" fill="#2b0099"/><path d="M1361 634h9v9h-9z" fill="#320098"/><path d="M1369 634h9v9h-9z" fill="#390098"/><path d="M1377 634h9v9h-9z" fill="#410097"/><path d="M1385 634h9v9h-9z" fill="#480096"/><path d="M1393 634h9v9h-9z" fill="#500095"/><path d="M1401 634h9v9h-9z" fill="#570095"/><path d="M1409 634h9v9h-9z" fill="#5f0094"/><path d="M1417 634h9v9h-9z" fill="#670093"/><path d="M1425 634h9v9h-9z" fill="#6f0093"/><path d="M1433 634h9v9h-9z" fill="#770092"/><path d="M1441 634h9v9h-9z" fill="#800091"/><path d="M1449 634h9v9h-9z" fill="#880091"/><path d="M1281 642h9v9h-9z" fill="#009"/><path d="M1289 642h9v9h-9z" fill="#00009a"/><path d="M1297 642h9v9h-9z" fill="#00009b"/><path d="M1305 642h9v9h-9z" fill="#05009b"/><path d="M1313 642h9v9h-9z" fill="#0b009b"/><path d="M1321 642h9v9h-9z" fill="#11009a"/><path d="M1329 642h9v9h-9z" fill="#180099"/><path d="M1337 642h9v9h-9z" fill="#1f0099"/><path d="M1345 642h9v9h-9z" fill="#250098"/><path d="M1353 642h9v9h-9z" fill="#2c0097"/><path d="M1361 642h9v9h-9z" fill="#330097"/><path d="M1369 642h9v9h-9z" fill="#3a0096"/><path d="M1377 642h9v9h-9z" fill="#410095"/><path d="M1385 642h9v9h-9z" fill="#480094"/><path d="M1393 642h9v9h-9z" fill="#500094"/><path d="M1401 642h9v9h-9z" fill="#570093"/><path d="M1409 642h9v9h-9z" fill="#5f0092"/><path d="M1417 642h9v9h-9z" fill="#660092"/><path d="M1425 642h9v9h-9z" fill="#6e0091"/><path d="M1289 650h9v9h-9z" fill="#009"/><path d="M1297 650h9v9h-9z" fill="#010099"/><path d="M1305 650h9v9h-9z" fill="#070099"/><path d="M1313 650h9v9h-9z" fill="#0d0099"/><path d="M1321 650h9v9h-9z" fill="#130098"/><path d="M1329 650h9v9h-9z" fill="#1a0098"/><path d="M1337 650h9v9h-9z" fill="#200097"/><path d="M1345 650h9v9h-9z" fill="#260096"/><path d="M1353 650h9v9h-9z" fill="#2d0095"/><path d="M1361 650h9v9h-9z" fill="#340095"/><path d="M1369 650h9v9h-9z" fill="#3b0094"/><path d="M1377 650h9v9h-9z" fill="#410093"/><path d="M1385 650h9v9h-9z" fill="#480093"/><path d="M1393 650h9v9h-9z" fill="#4f0092"/><path d="M1401 650h9v9h-9z" fill="#570091"/><path d="M1409 650h9v9h-9z" fill="#5e0091"/><path d="M1297 658h9v9h-9z" fill="#030097"/><path d="M1305 658h9v9h-9z" fill="#090097"/><path d="M1313 658h9v9h-9z" fill="#0f0097"/><path d="M1321 658h9v9h-9z" fill="#150096"/><path d="M1329 658h9v9h-9z" fill="#1b0096"/><path d="M1337 658h9v9h-9z" fill="#210095"/><path d="M1345 658h9v9h-9z" fill="#280094"/><path d="M1353 658h9v9h-9z" fill="#2e0094"/><path d="M1361 658h9v9h-9z" fill="#350093"/><path d="M1369 658h9v9h-9z" fill="#3b0092"/><path d="M1377 658h9v9h-9z" fill="#420092"/><path d="M1385 658h9v9h-9z" fill="#480091"/><path d="M1305 666h9v9h-9z" fill="#0b0095"/><path d="M1313 666h9v9h-9z" fill="#110095"/><path d="M1321 666h9v9h-9z" fill="#170095"/><path d="M1329 666h9v9h-9z" fill="#1d0094"/><path d="M1337 666h9v9h-9z" fill="#230093"/><path d="M1345 666h9v9h-9z" fill="#290093"/><path d="M1353 666h9v9h-9z" fill="#2f0092"/><path d="M1361 666h9v9h-9z" fill="#350091"/><path d="M1321 674h9v9h-9z" fill="#170093"/><path d="M1329 674h9v9h-9z" fill="#1d0092"/><path d="M1337 674h9v9h-9z" fill="#230092"/></g></g>
<g clip-path="url(#tri)"><g filter="url(#bl)"><path d="M1424 277h9v9h-9z" fill="#0f0"/><path d="M1432 277h9v9h-9z" fill="#0f0"/><path d="M1440 277h9v9h-9z" fill="#01ff00"/><path d="M1416 285h9v9h-9z" fill="#00ff02"/><path d="M1424 285h9v9h-9z" fill="#0f0"/><path d="M1432 285h9v9h-9z" fill="#0f0"/><path d="M1440 285h9v9h-9z" fill="#05ff00"/><path d="M1448 285h9v9h-9z" fill="#0fff00"/><path d="M1456 285h9v9h-9z" fill="#1aff00"/><path d="M1416 293h9v9h-9z" fill="#00ff07"/><path d="M1424 293h9v9h-9z" fill="#00ff04"/><path d="M1432 293h9v9h-9z" fill="#00ff01"/><path d="M1440 293h9v9h-9z" fill="#09ff00"/><path d="M1448 293h9v9h-9z" fill="#14ff00"/><path d="M1456 293h9v9h-9z" fill="#1fff00"/><path d="M1464 293h9v9h-9z" fill="#2aff00"/><path d="M1472 293h9v9h-9z" fill="#36ff00"/><path d="M1416 301h9v9h-9z" fill="#00ff0c"/><path d="M1424 301h9v9h-9z" fill="#00ff09"/><path d="M1432 301h9v9h-9z" fill="#02ff06"/><path d="M1440 301h9v9h-9z" fill="#0dff03"/><path d="M1448 301h9v9h-9z" fill="#18ff00"/><path d="M1456 301h9v9h-9z" fill="#24ff00"/><path d="M1464 301h9v9h-9z" fill="#30ff00"/><path d="M1472 301h9v9h-9z" fill="#3cff00"/><path d="M1480 301h9v9h-9z" fill="#48ff00"/><path d="M1408 309h9v9h-9z" fill="#00ff14"/><path d="M1416 309h9v9h-9z" fill="#0f1"/><path d="M1424 309h9v9h-9z" fill="#00ff0e"/><path d="M1432 309h9v9h-9z" fill="#07ff0c"/><path d="M1440 309h9v9h-9z" fill="#12ff09"/><path d="M1448 309h9v9h-9z" fill="#1eff06"/><path d="M1456 309h9v9h-9z" fill="#29ff03"/><path d="M1464 309h9v9h-9z" fill="#36ff00"/><path d="M1472 309h9v9h-9z" fill="#42ff00"/><path d="M1480 309h9v9h-9z" fill="#4fff00"/><path d="M1488 309h9v9h-9z" fill="#5cff00"/><path d="M1496 309h9v9h-9z" fill="#6aff00"/><path d="M1408 317h9v9h-9z" fill="#00ff1a"/><path d="M1416 317h9v9h-9z" fill="#00ff17"/><path d="M1424 317h9v9h-9z" fill="#00ff14"/><path d="M1432 317h9v9h-9z" fill="#0bff11"/><path d="M1440 317h9v9h-9z" fill="#17ff0e"/><path d="M1448 317h9v9h-9z" fill="#23ff0b"/><path d="M1456 317h9v9h-9z" fill="#2fff08"/><path d="M1464 317h9v9h-9z" fill="#3cff05"/><path d="M1472 317h9v9h-9z" fill="#49ff02"/><path d="M1480 317h9v9h-9z" fill="#56ff00"/><path d="M1488 317h9v9h-9z" fill="#64ff00"/><path d="M1496 317h9v9h-9z" fill="#72ff00"/><path d="M1504 317h9v9h-9z" fill="#80ff00"/><path d="M1512 317h9v9h-9z" fill="#8fff00"/><path d="M1408 325h9v9h-9z" fill="#00ff20"/><path d="M1416 325h9v9h-9z" fill="#00ff1d"/><path d="M1424 325h9v9h-9z" fill="#04ff1a"/><path d="M1432 325h9v9h-9z" fill="#10ff17"/><path d="M1440 325h9v9h-9z" fill="#1cff14"/><path d="M1448 325h9v9h-9z" fill="#29ff11"/><path d="M1456 325h9v9h-9z" fill="#36ff0e"/><path d="M1464 325h9v9h-9z" fill="#43ff0b"/><path d="M1472 325h9v9h-9z" fill="#50ff08"/><path d="M1480 325h9v9h-9z" fill="#5eff05"/><path d="M1488 325h9v9h-9z" fill="#6cff01"/><path d="M1496 325h9v9h-9z" fill="#7bff00"/><path d="M1504 325h9v9h-9z" fill="#8aff00"/><path d="M1512 325h9v9h-9z" fill="#9aff00"/><path d="M1520 325h9v9h-9z" fill="#a9ff00"/><path d="M1528 325h9v9h-9z" fill="#baff00"/><path d="M1400 333h9v9h-9z" fill="#00ff29"/><path d="M1408 333h9v9h-9z" fill="#00ff26"/><path d="M1416 333h9v9h-9z" fill="#00ff23"/><path d="M1424 333h9v9h-9z" fill="#09ff21"/><path d="M1432 333h9v9h-9z" fill="#15ff1e"/><path d="M1440 333h9v9h-9z" fill="#22ff1b"/><path d="M1448 333h9v9h-9z" fill="#2fff18"/><path d="M1456 333h9v9h-9z" fill="#3cff15"/><path d="M1464 333h9v9h-9z" fill="#4aff12"/><path d="M1472 333h9v9h-9z" fill="#58ff0e"/><path d="M1480 333h9v9h-9z" fill="#67ff0b"/><path d="M1488 333h9v9h-9z" fill="#75ff08"/><path d="M1496 333h9v9h-9z" fill="#85ff04"/><path d="M1504 333h9v9h-9z" fill="#94ff00"/><path d="M1512 333h9v9h-9z" fill="#a5ff00"/><path d="M1520 333h9v9h-9z" fill="#b5ff00"/><path d="M1528 333h9v9h-9z" fill="#c7ff00"/><path d="M1536 333h9v9h-9z" fill="#d8ff00"/><path d="M1400 341h9v9h-9z" fill="#00ff30"/><path d="M1408 341h9v9h-9z" fill="#00ff2d"/><path d="M1416 341h9v9h-9z" fill="#02ff2a"/><path d="M1424 341h9v9h-9z" fill="#0eff27"/><path d="M1432 341h9v9h-9z" fill="#1bff25"/><path d="M1440 341h9v9h-9z" fill="#28ff22"/><path d="M1448 341h9v9h-9z" fill="#36ff1f"/><path d="M1456 341h9v9h-9z" fill="#43ff1c"/><path d="M1464 341h9v9h-9z" fill="#52ff18"/><path d="M1472 341h9v9h-9z" fill="#60ff15"/><path d="M1480 341h9v9h-9z" fill="#70ff12"/><path d="M1488 341h9v9h-9z" fill="#7fff0e"/><path d="M1496 341h9v9h-9z" fill="#8fff0b"/><path d="M1504 341h9v9h-9z" fill="#a0ff07"/><path d="M1512 341h9v9h-9z" fill="#b1ff03"/><path d="M1520 341h9v9h-9z" fill="#c2ff00"/><path d="M1528 341h9v9h-9z" fill="#d4ff00"/><path d="M1536 341h9v9h-9z" fill="#e7ff00"/><path d="M1544 341h9v9h-9z" fill="#faff00"/><path d="M1552 341h9v9h-9z" fill="#fff100"/><path d="M1392 349h9v9h-9z" fill="#00ff39"/><path d="M1400 349h9v9h-9z" fill="#00ff37"/><path d="M1408 349h9v9h-9z" fill="#00ff34"/><path d="M1416 349h9v9h-9z" fill="#07ff32"/><path d="M1424 349h9v9h-9z" fill="#14ff2f"/><path d="M1432 349h9v9h-9z" fill="#21ff2c"/><path d="M1440 349h9v9h-9z" fill="#2fff29"/><path d="M1448 349h9v9h-9z" fill="#3dff26"/><path d="M1456 349h9v9h-9z" fill="#4bff23"/><path d="M1464 349h9v9h-9z" fill="#5aff20"/><path d="M1472 349h9v9h-9z" fill="#69ff1c"/><path d="M1480 349h9v9h-9z" fill="#79ff19"/><path d="M1488 349h9v9h-9z" fill="#89ff16"/><path d="M1496 349h9v9h-9z" fill="#9aff12"/><path d="M1504 349h9v9h-9z" fill="#acff0e"/><path d="M1512 349h9v9h-9z" fill="#beff0a"/><path d="M1520 349h9v9h-9z" fill="#d0ff07"/><path d="M1528 349h9v9h-9z" fill="#e3ff02"/><path d="M1536 349h9v9h-9z" fill="#f7ff00"/><path d="M1544 349h9v9h-9z" fill="#fff300"/><path d="M1552 349h9v9h-9z" fill="#ffe200"/><path d="M1560 349h9v9h-9z" fill="#ffd200"/><path d="M1568 349h9v9h-9z" fill="#ffc300"/><path d="M1392 357h9v9h-9z" fill="#00ff41"/><path d="M1400 357h9v9h-9z" fill="#00ff3f"/><path d="M1408 357h9v9h-9z" fill="#00ff3c"/><path d="M1416 357h9v9h-9z" fill="#0cff39"/><path d="M1424 357h9v9h-9z" fill="#19ff37"/><path d="M1432 357h9v9h-9z" fill="#27ff34"/><path d="M1440 357h9v9h-9z" fill="#36ff31"/><path d="M1448 357h9v9h-9z" fill="#44ff2e"/><path d="M1456 357h9v9h-9z" fill="#53ff2b"/><path d="M1464 357h9v9h-9z" fill="#63ff28"/><path d="M1472 357h9v9h-9z" fill="#73ff24"/><path d="M1480 357h9v9h-9z" fill="#84ff21"/><path d="M1488 357h9v9h-9z" fill="#95ff1d"/><path d="M1496 357h9v9h-9z" fill="#a6ff1a"/><path d="M1504 357h9v9h-9z" fill="#b9ff16"/><path d="M1512 357h9v9h-9z" fill="#ccff12"/><path d="M1520 357h9v9h-9z" fill="#dfff0e"/><path d="M1528 357h9v9h-9z" fill="#f3ff0a"/><path d="M1536 357h9v9h-9z" fill="#fff606"/><path d="M1544 357h9v9h-9z" fill="#ffe401"/><path d="M1552 357h9v9h-9z" fill="#ffd300"/><path d="M1560 357h9v9h-9z" fill="#ffc400"/><path d="M1568 357h9v9h-9z" fill="#ffb700"/><path d="M1576 357h9v9h-9z" fill="#ffab00"/><path d="M1584 357h9v9h-9z" fill="#ffa000"/><path d="M1392 365h9v9h-9z" fill="#00ff4a"/><path d="M1400 365h9v9h-9z" fill="#00ff47"/><path d="M1408 365h9v9h-9z" fill="#04ff45"/><path d="M1416 365h9v9h-9z" fill="#12ff42"/><path d="M1424 365h9v9h-9z" fill="#20ff3f"/><path d="M1432 365h9v9h-9z" fill="#2eff3c"/><path d="M1440 365h9v9h-9z" fill="#3dff39"/><path d="M1448 365h9v9h-9z" fill="#4cff36"/><path d="M1456 365h9v9h-9z" fill="#5cff33"/><path d="M1464 365h9v9h-9z" fill="#6dff30"/><path d="M1472 365h9v9h-9z" fill="#7eff2d"/><path d="M1480 365h9v9h-9z" fill="#8fff2a"/><path d="M1488 365h9v9h-9z" fill="#a1ff26"/><path d="M1496 365h9v9h-9z" fill="#b4ff22"/><path d="M1504 365h9v9h-9z" fill="#c7ff1f"/><path d="M1512 365h9v9h-9z" fill="#dbff1b"/><path d="M1520 365h9v9h-9z" fill="#efff17"/><path d="M1528 365h9v9h-9z" fill="#fff912"/><path d="M1536 365h9v9h-9z" fill="#ffe60d"/><path d="M1544 365h9v9h-9z" fill="#ffd508"/><path d="M1552 365h9v9h-9z" fill="#ffc504"/><path d="M1560 365h9v9h-9z" fill="#ffb700"/><path d="M1568 365h9v9h-9z" fill="#ffab00"/><path d="M1576 365h9v9h-9z" fill="#ffa000"/><path d="M1584 365h9v9h-9z" fill="#ff9500"/><path d="M1592 365h9v9h-9z" fill="#ff8c00"/><path d="M1384 373h9v9h-9z" fill="#0f5"/><path d="M1392 373h9v9h-9z" fill="#00ff53"/><path d="M1400 373h9v9h-9z" fill="#00ff50"/><path d="M1408 373h9v9h-9z" fill="#09ff4e"/><path d="M1416 373h9v9h-9z" fill="#18ff4b"/><path d="M1424 373h9v9h-9z" fill="#26ff48"/><path d="M1432 373h9v9h-9z" fill="#36ff45"/><path d="M1440 373h9v9h-9z" fill="#45ff43"/><path d="M1448 373h9v9h-9z" fill="#55ff40"/><path d="M1456 373h9v9h-9z" fill="#66ff3d"/><path d="M1464 373h9v9h-9z" fill="#77ff39"/><path d="M1472 373h9v9h-9z" fill="#89ff36"/><path d="M1480 373h9v9h-9z" fill="#9bff33"/><path d="M1488 373h9v9h-9z" fill="#aeff2f"/><path d="M1496 373h9v9h-9z" fill="#c2ff2c"/><path d="M1504 373h9v9h-9z" fill="#d6ff28"/><path d="M1512 373h9v9h-9z" fill="#ebff24"/><path d="M1520 373h9v9h-9z" fill="#fffd20"/><path d="M1528 373h9v9h-9z" fill="#ffe819"/><path d="M1536 373h9v9h-9z" fill="#ffd614"/><path d="M1544 373h9v9h-9z" fill="#ffc60f"/><path d="M1552 373h9v9h-9z" fill="#ffb80a"/><path d="M1560 373h9v9h-9z" fill="#ffab06"/><path d="M1568 373h9v9h-9z" fill="#ff9f03"/><path d="M1576 373h9v9h-9z" fill="#ff9500"/><path d="M1584 373h9v9h-9z" fill="#ff8b00"/><path d="M1592 373h9v9h-9z" fill="#ff8200"/><path d="M1600 373h9v9h-9z" fill="#ff7a00"/><path d="M1608 373h9v9h-9z" fill="#ff7300"/><path d="M1384 381h9v9h-9z" fill="#00ff5f"/><path d="M1392 381h9v9h-9z" fill="#00ff5c"/><path d="M1400 381h9v9h-9z" fill="#01ff5a"/><path d="M1408 381h9v9h-9z" fill="#0fff57"/><path d="M1416 381h9v9h-9z" fill="#1eff55"/><path d="M1424 381h9v9h-9z" fill="#2eff52"/><path d="M1432 381h9v9h-9z" fill="#3dff4f"/><path d="M1440 381h9v9h-9z" fill="#4eff4d"/><path d="M1448 381h9v9h-9z" fill="#5fff4a"/><path d="M1456 381h9v9h-9z" fill="#70ff47"/><path d="M1464 381h9v9h-9z" fill="#82ff43"/><path d="M1472 381h9v9h-9z" fill="#95ff40"/><path d="M1480 381h9v9h-9z" fill="#a9ff3d"/><path d="M1488 381h9v9h-9z" fill="#bdff39"/><path d="M1496 381h9v9h-9z" fill="#d2ff36"/><path d="M1504 381h9v9h-9z" fill="#e7ff32"/><path d="M1512 381h9v9h-9z" fill="#feff2e"/><path d="M1520 381h9v9h-9z" fill="#ffeb27"/><path d="M1528 381h9v9h-9z" fill="#ffd820"/><path d="M1536 381h9v9h-9z" fill="#ffc71a"/><path d="M1544 381h9v9h-9z" fill="#ffb815"/><path d="M1552 381h9v9h-9z" fill="#ffab10"/><path d="M1560 381h9v9h-9z" fill="#ff9f0c"/><path d="M1568 381h9v9h-9z" fill="#ff9408"/><path d="M1576 381h9v9h-9z" fill="#ff8a05"/><path d="M1584 381h9v9h-9z" fill="#ff8102"/><path d="M1592 381h9v9h-9z" fill="#ff7900"/><path d="M1600 381h9v9h-9z" fill="#ff7200"/><path d="M1608 381h9v9h-9z" fill="#ff6a00"/><path d="M1616 381h9v9h-9z" fill="#fc6300"/><path d="M1624 381h9v9h-9z" fill="#f95c00"/><path d="M1376 389h9v9h-9z" fill="#00ff6b"/><path d="M1384 389h9v9h-9z" fill="#00ff69"/><path d="M1392 389h9v9h-9z" fill="#00ff67"/><path d="M1400 389h9v9h-9z" fill="#07ff64"/><path d="M1408 389h9v9h-9z" fill="#16ff62"/><path d="M1416 389h9v9h-9z" fill="#25ff5f"/><path d="M1424 389h9v9h-9z" fill="#35ff5d"/><path d="M1432 389h9v9h-9z" fill="#46ff5a"/><path d="M1440 389h9v9h-9z" fill="#57ff57"/><path d="M1448 389h9v9h-9z" fill="#69ff54"/><path d="M1456 389h9v9h-9z" fill="#7cff51"/><path d="M1464 389h9v9h-9z" fill="#8fff4e"/><path d="M1472 389h9v9h-9z" fill="#a3ff4b"/><path d="M1480 389h9v9h-9z" fill="#b7ff48"/><path d="M1488 389h9v9h-9z" fill="#cdff44"/><path d="M1496 389h9v9h-9z" fill="#e3ff41"/><path d="M1504 389h9v9h-9z" fill="#faff3d"/><path d="M1512 389h9v9h-9z" fill="#ffee35"/><path d="M1520 389h9v9h-9z" fill="#ffda2e"/><path d="M1528 389h9v9h-9z" fill="#ffc827"/><path d="M1536 389h9v9h-9z" fill="#ffb921"/><path d="M1544 389h9v9h-9z" fill="#ffab1b"/><path d="M1552 389h9v9h-9z" fill="#ff9f16"/><path d="M1560 389h9v9h-9z" fill="#ff9412"/><path d="M1568 389h9v9h-9z" fill="#ff8a0e"/><path d="M1576 389h9v9h-9z" fill="#ff800a"/><path d="M1584 389h9v9h-9z" fill="#ff7807"/><path d="M1592 389h9v9h-9z" fill="#ff7004"/><path d="M1600 389h9v9h-9z" fill="#fe6901"/><path d="M1608 389h9v9h-9z" fill="#fb6100"/><path d="M1616 389h9v9h-9z" fill="#f85a00"/><path d="M1624 389h9v9h-9z" fill="#f55300"/><path d="M1632 389h9v9h-9z" fill="#f34d00"/><path d="M1640 389h9v9h-9z" fill="#f04800"/><path d="M1376 397h9v9h-9z" fill="#00ff76"/><path d="M1384 397h9v9h-9z" fill="#00ff74"/><path d="M1392 397h9v9h-9z" fill="#00ff72"/><path d="M1400 397h9v9h-9z" fill="#0dff70"/><path d="M1408 397h9v9h-9z" fill="#1dff6d"/><path d="M1416 397h9v9h-9z" fill="#2dff6b"/><path d="M1424 397h9v9h-9z" fill="#3eff68"/><path d="M1432 397h9v9h-9z" fill="#50ff66"/><path d="M1440 397h9v9h-9z" fill="#62ff63"/><path d="M1448 397h9v9h-9z" fill="#75ff60"/><path d="M1456 397h9v9h-9z" fill="#88ff5d"/><path d="M1464 397h9v9h-9z" fill="#9cff5a"/><path d="M1472 397h9v9h-9z" fill="#b1ff57"/><path d="M1480 397h9v9h-9z" fill="#c7ff54"/><path d="M1488 397h9v9h-9z" fill="#deff51"/><path d="M1496 397h9v9h-9z" fill="#f6ff4d"/><path d="M1504 397h9v9h-9z" fill="#fff145"/><path d="M1512 397h9v9h-9z" fill="#ffdc3c"/><path d="M1520 397h9v9h-9z" fill="#ffc934"/><path d="M1528 397h9v9h-9z" fill="#ffb92d"/><path d="M1536 397h9v9h-9z" fill="#ffab26"/><path d="M1544 397h9v9h-9z" fill="#ff9e21"/><path d="M1552 397h9v9h-9z" fill="#ff931c"/><path d="M1560 397h9v9h-9z" fill="#ff8917"/><path d="M1568 397h9v9h-9z" fill="#ff7f13"/><path d="M1576 397h9v9h-9z" fill="#ff770f"/><path d="M1584 397h9v9h-9z" fill="#ff6f0c"/><path d="M1592 397h9v9h-9z" fill="#fe6708"/><path d="M1600 397h9v9h-9z" fill="#fb5f05"/><path d="M1608 397h9v9h-9z" fill="#f85803"/><path d="M1616 397h9v9h-9z" fill="#f55100"/><path d="M1624 397h9v9h-9z" fill="#f24b00"/><path d="M1632 397h9v9h-9z" fill="#ef4600"/><path d="M1640 397h9v9h-9z" fill="#ec4100"/><path d="M1648 397h9v9h-9z" fill="#ea3c00"/><path d="M1376 405h9v9h-9z" fill="#00ff82"/><path d="M1384 405h9v9h-9z" fill="#00ff80"/><path d="M1392 405h9v9h-9z" fill="#03ff7e"/><path d="M1400 405h9v9h-9z" fill="#13ff7c"/><path d="M1408 405h9v9h-9z" fill="#24ff7a"/><path d="M1416 405h9v9h-9z" fill="#35ff77"/><path d="M1424 405h9v9h-9z" fill="#47ff75"/><path d="M1432 405h9v9h-9z" fill="#5aff72"/><path d="M1440 405h9v9h-9z" fill="#6dff70"/><path d="M1448 405h9v9h-9z" fill="#81ff6d"/><path d="M1456 405h9v9h-9z" fill="#96ff6a"/><path d="M1464 405h9v9h-9z" fill="#abff67"/><path d="M1472 405h9v9h-9z" fill="#c2ff64"/><path d="M1480 405h9v9h-9z" fill="#d9ff61"/><path d="M1488 405h9v9h-9z" fill="#f1ff5e"/><path d="M1496 405h9v9h-9z" fill="#fff457"/><path d="M1504 405h9v9h-9z" fill="#ffde4c"/><path d="M1512 405h9v9h-9z" fill="#ffcb42"/><path d="M1520 405h9v9h-9z" fill="#ffba3a"/><path d="M1528 405h9v9h-9z" fill="#ffab33"/><path d="M1536 405h9v9h-9z" fill="#ff9e2c"/><path d="M1544 405h9v9h-9z" fill="#ff9226"/><path d="M1552 405h9v9h-9z" fill="#ff8821"/><path d="M1560 405h9v9h-9z" fill="#ff7e1c"/><path d="M1568 405h9v9h-9z" fill="#ff7518"/><path d="M1576 405h9v9h-9z" fill="#ff6d14"/><path d="M1584 405h9v9h-9z" fill="#ff6610"/><path d="M1592 405h9v9h-9z" fill="#fb5e0d"/><path d="M1600 405h9v9h-9z" fill="#f8560a"/><path d="M1608 405h9v9h-9z" fill="#f55007"/><path d="M1616 405h9v9h-9z" fill="#f24a04"/><path d="M1624 405h9v9h-9z" fill="#ef4402"/><path d="M1632 405h9v9h-9z" fill="#eb3f00"/><path d="M1640 405h9v9h-9z" fill="#e93a00"/><path d="M1648 405h9v9h-9z" fill="#e63600"/><path d="M1656 405h9v9h-9z" fill="#e33100"/><path d="M1664 405h9v9h-9z" fill="#e12e00"/><path d="M1368 413h9v9h-9z" fill="#00ff91"/><path d="M1376 413h9v9h-9z" fill="#00ff8f"/><path d="M1384 413h9v9h-9z" fill="#00ff8d"/><path d="M1392 413h9v9h-9z" fill="#0aff8b"/><path d="M1400 413h9v9h-9z" fill="#1bff89"/><path d="M1408 413h9v9h-9z" fill="#2cff87"/><path d="M1416 413h9v9h-9z" fill="#3fff85"/><path d="M1424 413h9v9h-9z" fill="#51ff83"/><path d="M1432 413h9v9h-9z" fill="#65ff80"/><path d="M1440 413h9v9h-9z" fill="#79ff7e"/><path d="M1448 413h9v9h-9z" fill="#8fff7b"/><path d="M1456 413h9v9h-9z" fill="#a5ff79"/><path d="M1464 413h9v9h-9z" fill="#bcff76"/><path d="M1472 413h9v9h-9z" fill="#d4ff73"/><path d="M1480 413h9v9h-9z" fill="#edff70"/><path d="M1488 413h9v9h-9z" fill="#fff86a"/><path d="M1496 413h9v9h-9z" fill="#ffe05d"/><path d="M1504 413h9v9h-9z" fill="#ffcc52"/><path d="M1512 413h9v9h-9z" fill="#ffbb48"/><path d="M1520 413h9v9h-9z" fill="#ffab40"/><path d="M1528 413h9v9h-9z" fill="#ff9e38"/><path d="M1536 413h9v9h-9z" fill="#ff9132"/><path d="M1544 413h9v9h-9z" fill="#ff872c"/><path d="M1552 413h9v9h-9z" fill="#ff7d26"/><path d="M1560 413h9v9h-9z" fill="#ff7421"/><path d="M1568 413h9v9h-9z" fill="#ff6c1d"/><path d="M1576 413h9v9h-9z" fill="#ff6419"/><path d="M1584 413h9v9h-9z" fill="#fc5c15"/><path d="M1592 413h9v9h-9z" fill="#f95511"/><path d="M1600 413h9v9h-9z" fill="#f54e0e"/><path d="M1608 413h9v9h-9z" fill="#f2480b"/><path d="M1616 413h9v9h-9z" fill="#ef4208"/><path d="M1624 413h9v9h-9z" fill="#eb3d05"/><path d="M1632 413h9v9h-9z" fill="#e83803"/><path d="M1640 413h9v9h-9z" fill="#e53301"/><path d="M1648 413h9v9h-9z" fill="#e22f00"/><path d="M1656 413h9v9h-9z" fill="#df2c00"/><path d="M1664 413h9v9h-9z" fill="#dd2800"/><path d="M1672 413h9v9h-9z" fill="#da2500"/><path d="M1680 413h9v9h-9z" fill="#d82200"/><path d="M1368 421h9v9h-9z" fill="#00ff9f"/><path d="M1376 421h9v9h-9z" fill="#00ff9d"/><path d="M1384 421h9v9h-9z" fill="#00ff9b"/><path d="M1392 421h9v9h-9z" fill="#11ff9a"/><path d="M1400 421h9v9h-9z" fill="#23ff98"/><path d="M1408 421h9v9h-9z" fill="#35ff96"/><path d="M1416 421h9v9h-9z" fill="#49ff94"/><path d="M1424 421h9v9h-9z" fill="#5dff92"/><path d="M1432 421h9v9h-9z" fill="#71ff90"/><path d="M1440 421h9v9h-9z" fill="#87ff8d"/><path d="M1448 421h9v9h-9z" fill="#9eff8b"/><path d="M1456 421h9v9h-9z" fill="#b5ff89"/><path d="M1464 421h9v9h-9z" fill="#ceff86"/><path d="M1472 421h9v9h-9z" fill="#e8ff83"/><path d="M1480 421h9v9h-9z" fill="#fffc7f"/><path d="M1488 421h9v9h-9z" fill="#ffe370"/><path d="M1496 421h9v9h-9z" fill="#ffce63"/><path d="M1504 421h9v9h-9z" fill="#ffbb58"/><path d="M1512 421h9v9h-9z" fill="#ffab4e"/><path d="M1520 421h9v9h-9z" fill="#ff9d45"/><path d="M1528 421h9v9h-9z" fill="#ff913e"/><path d="M1536 421h9v9h-9z" fill="#ff8537"/><path d="M1544 421h9v9h-9z" fill="#ff7b31"/><path d="M1552 421h9v9h-9z" fill="#ff722b"/><path d="M1560 421h9v9h-9z" fill="#ff6a26"/><path d="M1568 421h9v9h-9z" fill="#ff6221"/><path d="M1576 421h9v9h-9z" fill="#fe5b1d"/><path d="M1584 421h9v9h-9z" fill="#fa5319"/><path d="M1592 421h9v9h-9z" fill="#f74c15"/><path d="M1600 421h9v9h-9z" fill="#f34612"/><path d="M1608 421h9v9h-9z" fill="#f0400e"/><path d="M1616 421h9v9h-9z" fill="#ec3b0c"/><path d="M1624 421h9v9h-9z" fill="#e93609"/><path d="M1632 421h9v9h-9z" fill="#e53206"/><path d="M1640 421h9v9h-9z" fill="#e22d04"/><path d="M1648 421h9v9h-9z" fill="#df2a02"/><path d="M1656 421h9v9h-9z" fill="#dc2600"/><path d="M1664 421h9v9h-9z" fill="#d92300"/><path d="M1672 421h9v9h-9z" fill="#d62000"/><path d="M1680 421h9v9h-9z" fill="#d31d00"/><path d="M1688 421h9v9h-9z" fill="#d11a00"/><path d="M1696 421h9v9h-9z" fill="#cf1800"/><path d="M1368 429h9v9h-9z" fill="#00ffae"/><path d="M1376 429h9v9h-9z" fill="#00ffac"/><path d="M1384 429h9v9h-9z" fill="#07ffab"/><path d="M1392 429h9v9h-9z" fill="#19ffa9"/><path d="M1400 429h9v9h-9z" fill="#2cffa8"/><path d="M1408 429h9v9h-9z" fill="#3fffa6"/><path d="M1416 429h9v9h-9z" fill="#54ffa4"/><path d="M1424 429h9v9h-9z" fill="#69ffa2"/><path d="M1432 429h9v9h-9z" fill="#7fffa1"/><path d="M1440 429h9v9h-9z" fill="#96ff9f"/><path d="M1448 429h9v9h-9z" fill="#afff9d"/><path d="M1456 429h9v9h-9z" fill="#c8ff9a"/><path d="M1464 429h9v9h-9z" fill="#e2ff98"/><path d="M1472 429h9v9h-9z" fill="#feff96"/><path d="M1480 429h9v9h-9z" fill="#ffe685"/><path d="M1488 429h9v9h-9z" fill="#ffcf76"/><path d="M1496 429h9v9h-9z" fill="#ffbc69"/><path d="M1504 429h9v9h-9z" fill="#ffab5d"/><path d="M1512 429h9v9h-9z" fill="#ff9d54"/><path d="M1520 429h9v9h-9z" fill="#ff904b"/><path d="M1528 429h9v9h-9z" fill="#ff8443"/><path d="M1536 429h9v9h-9z" fill="#ff7a3c"/><path d="M1544 429h9v9h-9z" fill="#ff7036"/><path d="M1552 429h9v9h-9z" fill="#ff6830"/><path d="M1560 429h9v9h-9z" fill="#ff602b"/><path d="M1568 429h9v9h-9z" fill="#ff5926"/><path d="M1576 429h9v9h-9z" fill="#fc5221"/><path d="M1584 429h9v9h-9z" fill="#f94b1d"/><path d="M1592 429h9v9h-9z" fill="#f54419"/><path d="M1600 429h9v9h-9z" fill="#f13e15"/><path d="M1608 429h9v9h-9z" fill="#ee3912"/><path d="M1616 429h9v9h-9z" fill="#ea340f"/><path d="M1624 429h9v9h-9z" fill="#e7300c"/><path d="M1632 429h9v9h-9z" fill="#e32b0a"/><path d="M1640 429h9v9h-9z" fill="#e02807"/><path d="M1648 429h9v9h-9z" fill="#dc2405"/><path d="M1656 429h9v9h-9z" fill="#d92103"/><path d="M1664 429h9v9h-9z" fill="#d61e02"/><path d="M1672 429h9v9h-9z" fill="#d31b00"/><path d="M1680 429h9v9h-9z" fill="#d01800"/><path d="M1688 429h9v9h-9z" fill="#cd1600"/><path d="M1696 429h9v9h-9z" fill="#cb1400"/><path d="M1704 429h9v9h-9z" fill="#c81200"/><path d="M1360 437h9v9h-9z" fill="#00ffc0"/><path d="M1368 437h9v9h-9z" fill="#00ffbf"/><path d="M1376 437h9v9h-9z" fill="#00ffbd"/><path d="M1384 437h9v9h-9z" fill="#0effbc"/><path d="M1392 437h9v9h-9z" fill="#21ffbb"/><path d="M1400 437h9v9h-9z" fill="#35ffb9"/><path d="M1408 437h9v9h-9z" fill="#4affb8"/><path d="M1416 437h9v9h-9z" fill="#60ffb7"/><path d="M1424 437h9v9h-9z" fill="#77ffb5"/><path d="M1432 437h9v9h-9z" fill="#8effb3"/><path d="M1440 437h9v9h-9z" fill="#a7ffb2"/><path d="M1448 437h9v9h-9z" fill="#c1ffb0"/><path d="M1456 437h9v9h-9z" fill="#ddffae"/><path d="M1464 437h9v9h-9z" fill="#f9ffac"/><path d="M1472 437h9v9h-9z" fill="#ffe99c"/><path d="M1480 437h9v9h-9z" fill="#ffd18a"/><path d="M1488 437h9v9h-9z" fill="#ffbd7b"/><path d="M1496 437h9v9h-9z" fill="#ffac6e"/><path d="M1504 437h9v9h-9z" fill="#ff9c63"/><path d="M1512 437h9v9h-9z" fill="#ff8f59"/><path d="M1520 437h9v9h-9z" fill="#ff8350"/><path d="M1528 437h9v9h-9z" fill="#ff7848"/><path d="M1536 437h9v9h-9z" fill="#ff6f41"/><path d="M1544 437h9v9h-9z" fill="#ff663a"/><path d="M1552 437h9v9h-9z" fill="#ff5e35"/><path d="M1560 437h9v9h-9z" fill="#ff572f"/><path d="M1568 437h9v9h-9z" fill="#ff502a"/><path d="M1576 437h9v9h-9z" fill="#fb4925"/><path d="M1584 437h9v9h-9z" fill="#f74321"/><path d="M1592 437h9v9h-9z" fill="#f33d1d"/><path d="M1600 437h9v9h-9z" fill="#f03719"/><path d="M1608 437h9v9h-9z" fill="#ec3215"/><path d="M1616 437h9v9h-9z" fill="#e82e12"/><path d="M1624 437h9v9h-9z" fill="#e52a0f"/><path d="M1632 437h9v9h-9z" fill="#e1260d"/><path d="M1640 437h9v9h-9z" fill="#dd220a"/><path d="M1648 437h9v9h-9z" fill="#da1f08"/><path d="M1656 437h9v9h-9z" fill="#d61c06"/><path d="M1664 437h9v9h-9z" fill="#d31904"/><path d="M1672 437h9v9h-9z" fill="#d01603"/><path d="M1680 437h9v9h-9z" fill="#cc1401"/><path d="M1688 437h9v9h-9z" fill="#c91200"/><path d="M1696 437h9v9h-9z" fill="#c61000"/><path d="M1704 437h9v9h-9z" fill="#c40e00"/><path d="M1712 437h9v9h-9z" fill="#c20c00"/><path d="M1720 437h9v9h-9z" fill="#c10b00"/><path d="M1360 445h9v9h-9z" fill="#00ffd2"/><path d="M1368 445h9v9h-9z" fill="#00ffd1"/><path d="M1376 445h9v9h-9z" fill="#03ffd0"/><path d="M1384 445h9v9h-9z" fill="#16ffcf"/><path d="M1392 445h9v9h-9z" fill="#2bffce"/><path d="M1400 445h9v9h-9z" fill="#40ffcd"/><path d="M1408 445h9v9h-9z" fill="#56ffcc"/><path d="M1416 445h9v9h-9z" fill="#6effcb"/><path d="M1424 445h9v9h-9z" fill="#86ffca"/><path d="M1432 445h9v9h-9z" fill="#9fffc9"/><path d="M1440 445h9v9h-9z" fill="#baffc7"/><path d="M1448 445h9v9h-9z" fill="#d6ffc6"/><path d="M1456 445h9v9h-9z" fill="#f4ffc5"/><path d="M1464 445h9v9h-9z" fill="#ffecb5"/><path d="M1472 445h9v9h-9z" fill="#ffd3a0"/><path d="M1480 445h9v9h-9z" fill="#ffbe8f"/><path d="M1488 445h9v9h-9z" fill="#ffac80"/><path d="M1496 445h9v9h-9z" fill="#ff9c73"/><path d="M1504 445h9v9h-9z" fill="#ff8e68"/><path d="M1512 445h9v9h-9z" fill="#ff825e"/><path d="M1520 445h9v9h-9z" fill="#f75"/><path d="M1528 445h9v9h-9z" fill="#ff6d4d"/><path d="M1536 445h9v9h-9z" fill="#ff6446"/><path d="M1544 445h9v9h-9z" fill="#ff5c3f"/><path d="M1552 445h9v9h-9z" fill="#ff5539"/><path d="M1560 445h9v9h-9z" fill="#ff4e34"/><path d="M1568 445h9v9h-9z" fill="#fe482e"/><path d="M1576 445h9v9h-9z" fill="#fa4129"/><path d="M1584 445h9v9h-9z" fill="#f63b25"/><path d="M1592 445h9v9h-9z" fill="#f23620"/><path d="M1600 445h9v9h-9z" fill="#ef311c"/><path d="M1608 445h9v9h-9z" fill="#eb2c19"/><path d="M1616 445h9v9h-9z" fill="#e72816"/><path d="M1624 445h9v9h-9z" fill="#e32413"/><path d="M1632 445h9v9h-9z" fill="#e02010"/><path d="M1640 445h9v9h-9z" fill="#dc1d0d"/><path d="M1648 445h9v9h-9z" fill="#d81a0b"/><path d="M1656 445h9v9h-9z" fill="#d41709"/><path d="M1664 445h9v9h-9z" fill="#d11507"/><path d="M1672 445h9v9h-9z" fill="#cd1205"/><path d="M1680 445h9v9h-9z" fill="#ca1004"/><path d="M1688 445h9v9h-9z" fill="#c60e02"/><path d="M1696 445h9v9h-9z" fill="#c30c01"/><path d="M1704 445h9v9h-9z" fill="#c00a00"/><path d="M1712 445h9v9h-9z" fill="#bd0900"/><path d="M1720 445h9v9h-9z" fill="#bc0700"/><path d="M1728 445h9v9h-9z" fill="#bb0600"/><path d="M1736 445h9v9h-9z" fill="#bb0500"/><path d="M1352 453h9v9h-9z" fill="#00ffe6"/><path d="M1360 453h9v9h-9z" fill="#00ffe6"/><path d="M1368 453h9v9h-9z" fill="#00ffe5"/><path d="M1376 453h9v9h-9z" fill="#0bffe5"/><path d="M1384 453h9v9h-9z" fill="#1fffe4"/><path d="M1392 453h9v9h-9z" fill="#35ffe4"/><path d="M1400 453h9v9h-9z" fill="#4cffe3"/><path d="M1408 453h9v9h-9z" fill="#64ffe2"/><path d="M1416 453h9v9h-9z" fill="#7dffe2"/><path d="M1424 453h9v9h-9z" fill="#97ffe1"/><path d="M1432 453h9v9h-9z" fill="#b3ffe0"/><path d="M1440 453h9v9h-9z" fill="#d0ffe0"/><path d="M1448 453h9v9h-9z" fill="#eeffdf"/><path d="M1456 453h9v9h-9z" fill="#fff0d1"/><path d="M1464 453h9v9h-9z" fill="#ffd6b9"/><path d="M1472 453h9v9h-9z" fill="#ffbfa5"/><path d="M1480 453h9v9h-9z" fill="#ffac94"/><path d="M1488 453h9v9h-9z" fill="#ff9b85"/><path d="M1496 453h9v9h-9z" fill="#ff8d78"/><path d="M1504 453h9v9h-9z" fill="#ff806c"/><path d="M1512 453h9v9h-9z" fill="#ff7562"/><path d="M1520 453h9v9h-9z" fill="#ff6b59"/><path d="M1528 453h9v9h-9z" fill="#ff6251"/><path d="M1536 453h9v9h-9z" fill="#ff5a4a"/><path d="M1544 453h9v9h-9z" fill="#ff5243"/><path d="M1552 453h9v9h-9z" fill="#ff4c3d"/><path d="M1560 453h9v9h-9z" fill="#ff4538"/><path d="M1568 453h9v9h-9z" fill="#fd3f32"/><path d="M1576 453h9v9h-9z" fill="#f9392d"/><path d="M1584 453h9v9h-9z" fill="#f63428"/><path d="M1592 453h9v9h-9z" fill="#f22f24"/><path d="M1600 453h9v9h-9z" fill="#ee2a20"/><path d="M1608 453h9v9h-9z" fill="#ea261c"/><path d="M1616 453h9v9h-9z" fill="#e62219"/><path d="M1624 453h9v9h-9z" fill="#e21e16"/><path d="M1632 453h9v9h-9z" fill="#df1b13"/><path d="M1640 453h9v9h-9z" fill="#db1810"/><path d="M1648 453h9v9h-9z" fill="#d7150e"/><path d="M1656 453h9v9h-9z" fill="#d3130c"/><path d="M1664 453h9v9h-9z" fill="#cf1009"/><path d="M1672 453h9v9h-9z" fill="#cc0e08"/><path d="M1680 453h9v9h-9z" fill="#c80c06"/><path d="M1688 453h9v9h-9z" fill="#c40a04"/><path d="M1696 453h9v9h-9z" fill="#c10903"/><path d="M1704 453h9v9h-9z" fill="#bd0702"/><path d="M1712 453h9v9h-9z" fill="#ba0600"/><path d="M1720 453h9v9h-9z" fill="#b70400"/><path d="M1728 453h9v9h-9z" fill="#b60300"/><path d="M1736 453h9v9h-9z" fill="#b70200"/><path d="M1744 453h9v9h-9z" fill="#b90100"/><path d="M1352 461h9v9h-9z" fill="#00fffc"/><path d="M1360 461h9v9h-9z" fill="#00fffc"/><path d="M1368 461h9v9h-9z" fill="#00fffc"/><path d="M1376 461h9v9h-9z" fill="#13fffc"/><path d="M1384 461h9v9h-9z" fill="#2afffc"/><path d="M1392 461h9v9h-9z" fill="#41fffb"/><path d="M1400 461h9v9h-9z" fill="#59fffb"/><path d="M1408 461h9v9h-9z" fill="#73fffb"/><path d="M1416 461h9v9h-9z" fill="#8efffb"/><path d="M1424 461h9v9h-9z" fill="#abfffb"/><path d="M1432 461h9v9h-9z" fill="#c9fffb"/><path d="M1440 461h9v9h-9z" fill="#e8fffb"/><path d="M1448 461h9v9h-9z" fill="#fff5f1"/><path d="M1456 461h9v9h-9z" fill="#ffd8d5"/><path d="M1464 461h9v9h-9z" fill="#ffc0bd"/><path d="M1472 461h9v9h-9z" fill="#ffaca9"/><path d="M1480 461h9v9h-9z" fill="#ff9b98"/><path d="M1488 461h9v9h-9z" fill="#ff8c89"/><path d="M1496 461h9v9h-9z" fill="#ff7e7c"/><path d="M1504 461h9v9h-9z" fill="#ff7371"/><path d="M1512 461h9v9h-9z" fill="#ff6967"/><path d="M1520 461h9v9h-9z" fill="#ff5f5e"/><path d="M1528 461h9v9h-9z" fill="#ff5756"/><path d="M1536 461h9v9h-9z" fill="#ff504e"/><path d="M1544 461h9v9h-9z" fill="#ff4948"/><path d="M1552 461h9v9h-9z" fill="#ff4342"/><path d="M1560 461h9v9h-9z" fill="#ff3d3c"/><path d="M1568 461h9v9h-9z" fill="#fd3736"/><path d="M1576 461h9v9h-9z" fill="#f93231"/><path d="M1584 461h9v9h-9z" fill="#f52d2c"/><path d="M1592 461h9v9h-9z" fill="#f12827"/><path d="M1600 461h9v9h-9z" fill="#ee2423"/><path d="M1608 461h9v9h-9z" fill="#ea201f"/><path d="M1616 461h9v9h-9z" fill="#e61d1c"/><path d="M1624 461h9v9h-9z" fill="#e21919"/><path d="M1632 461h9v9h-9z" fill="#de1616"/><path d="M1640 461h9v9h-9z" fill="#da1313"/><path d="M1648 461h9v9h-9z" fill="#d71110"/><path d="M1656 461h9v9h-9z" fill="#d30f0e"/><path d="M1664 461h9v9h-9z" fill="#cf0c0c"/><path d="M1672 461h9v9h-9z" fill="#cb0a0a"/><path d="M1680 461h9v9h-9z" fill="#c70908"/><path d="M1688 461h9v9h-9z" fill="#c30707"/><path d="M1696 461h9v9h-9z" fill="#c00505"/><path d="M1704 461h9v9h-9z" fill="#bc0404"/><path d="M1712 461h9v9h-9z" fill="#b80302"/><path d="M1720 461h9v9h-9z" fill="#b40101"/><path d="M1728 461h9v9h-9z" fill="#b00000"/><path d="M1736 461h9v9h-9z" fill="#b40000"/><path d="M1744 461h9v9h-9z" fill="#b70000"/><path d="M1352 469h9v9h-9z" fill="#00ecff"/><path d="M1360 469h9v9h-9z" fill="#00ebff"/><path d="M1368 469h9v9h-9z" fill="#06ebff"/><path d="M1376 469h9v9h-9z" fill="#1bebff"/><path d="M1384 469h9v9h-9z" fill="#31eaff"/><path d="M1392 469h9v9h-9z" fill="#48e9ff"/><path d="M1400 469h9v9h-9z" fill="#60e9ff"/><path d="M1408 469h9v9h-9z" fill="#79e8ff"/><path d="M1416 469h9v9h-9z" fill="#93e8ff"/><path d="M1424 469h9v9h-9z" fill="#afe7ff"/><path d="M1432 469h9v9h-9z" fill="#cce6ff"/><path d="M1440 469h9v9h-9z" fill="#eae6ff"/><path d="M1448 469h9v9h-9z" fill="#ffdbf4"/><path d="M1456 469h9v9h-9z" fill="#ffc1d8"/><path d="M1464 469h9v9h-9z" fill="#ffacc1"/><path d="M1472 469h9v9h-9z" fill="#ff9aad"/><path d="M1480 469h9v9h-9z" fill="#ff8a9c"/><path d="M1488 469h9v9h-9z" fill="#ff7d8e"/><path d="M1496 469h9v9h-9z" fill="#ff7181"/><path d="M1504 469h9v9h-9z" fill="#ff6675"/><path d="M1512 469h9v9h-9z" fill="#ff5d6b"/><path d="M1520 469h9v9h-9z" fill="#ff5562"/><path d="M1528 469h9v9h-9z" fill="#ff4d5a"/><path d="M1536 469h9v9h-9z" fill="#ff4653"/><path d="M1544 469h9v9h-9z" fill="#ff404c"/><path d="M1552 469h9v9h-9z" fill="#ff3a46"/><path d="M1560 469h9v9h-9z" fill="#ff3540"/><path d="M1568 469h9v9h-9z" fill="#fd303a"/><path d="M1576 469h9v9h-9z" fill="#f92b35"/><path d="M1584 469h9v9h-9z" fill="#f52630"/><path d="M1592 469h9v9h-9z" fill="#f2222b"/><path d="M1600 469h9v9h-9z" fill="#ee1e27"/><path d="M1608 469h9v9h-9z" fill="#ea1a23"/><path d="M1616 469h9v9h-9z" fill="#e6171f"/><path d="M1624 469h9v9h-9z" fill="#e2141c"/><path d="M1632 469h9v9h-9z" fill="#df1119"/><path d="M1640 469h9v9h-9z" fill="#db0f16"/><path d="M1648 469h9v9h-9z" fill="#d70d13"/><path d="M1656 469h9v9h-9z" fill="#d30a11"/><path d="M1664 469h9v9h-9z" fill="#cf090e"/><path d="M1672 469h9v9h-9z" fill="#cc070c"/><path d="M1680 469h9v9h-9z" fill="#c8050b"/><path d="M1688 469h9v9h-9z" fill="#c40409"/><path d="M1696 469h9v9h-9z" fill="#c00207"/><path d="M1704 469h9v9h-9z" fill="#bd0106"/><path d="M1712 469h9v9h-9z" fill="#b90004"/><path d="M1720 469h9v9h-9z" fill="#b60003"/><path d="M1728 469h9v9h-9z" fill="#b50002"/><path d="M1736 469h9v9h-9z" fill="#b60001"/><path d="M1744 469h9v9h-9z" fill="#b90000"/><path d="M1344 477h9v9h-9z" fill="#00d8ff"/><path d="M1352 477h9v9h-9z" fill="#00d7ff"/><path d="M1360 477h9v9h-9z" fill="#00d6ff"/><path d="M1368 477h9v9h-9z" fill="#0dd5ff"/><path d="M1376 477h9v9h-9z" fill="#22d4ff"/><path d="M1384 477h9v9h-9z" fill="#37d3ff"/><path d="M1392 477h9v9h-9z" fill="#4dd2ff"/><path d="M1400 477h9v9h-9z" fill="#64d1ff"/><path d="M1408 477h9v9h-9z" fill="#7cd0ff"/><path d="M1416 477h9v9h-9z" fill="#96cfff"/><path d="M1424 477h9v9h-9z" fill="#b0ceff"/><path d="M1432 477h9v9h-9z" fill="#cccdff"/><path d="M1440 477h9v9h-9z" fill="#e9cbff"/><path d="M1448 477h9v9h-9z" fill="#ffc3f6"/><path d="M1456 477h9v9h-9z" fill="#ffacdb"/><path d="M1464 477h9v9h-9z" fill="#ff99c5"/><path d="M1472 477h9v9h-9z" fill="#ff89b1"/><path d="M1480 477h9v9h-9z" fill="#ff7ba0"/><path d="M1488 477h9v9h-9z" fill="#ff6f92"/><path d="M1496 477h9v9h-9z" fill="#ff6485"/><path d="M1504 477h9v9h-9z" fill="#ff5a7a"/><path d="M1512 477h9v9h-9z" fill="#ff526f"/><path d="M1520 477h9v9h-9z" fill="#ff4a66"/><path d="M1528 477h9v9h-9z" fill="#ff435e"/><path d="M1536 477h9v9h-9z" fill="#ff3d57"/><path d="M1544 477h9v9h-9z" fill="#ff3750"/><path d="M1552 477h9v9h-9z" fill="#ff3249"/><path d="M1560 477h9v9h-9z" fill="#ff2d44"/><path d="M1568 477h9v9h-9z" fill="#fe283e"/><path d="M1576 477h9v9h-9z" fill="#fa2438"/><path d="M1584 477h9v9h-9z" fill="#f62033"/><path d="M1592 477h9v9h-9z" fill="#f21c2e"/><path d="M1600 477h9v9h-9z" fill="#ee182a"/><path d="M1608 477h9v9h-9z" fill="#eb1526"/><path d="M1616 477h9v9h-9z" fill="#e71222"/><path d="M1624 477h9v9h-9z" fill="#e30f1f"/><path d="M1632 477h9v9h-9z" fill="#df0d1b"/><path d="M1640 477h9v9h-9z" fill="#dc0b19"/><path d="M1648 477h9v9h-9z" fill="#d80816"/><path d="M1656 477h9v9h-9z" fill="#d40713"/><path d="M1664 477h9v9h-9z" fill="#d10511"/><path d="M1672 477h9v9h-9z" fill="#cd030f"/><path d="M1680 477h9v9h-9z" fill="#c9020d"/><path d="M1688 477h9v9h-9z" fill="#c6000b"/><path d="M1696 477h9v9h-9z" fill="#c30009"/><path d="M1704 477h9v9h-9z" fill="#c00008"/><path d="M1712 477h9v9h-9z" fill="#bd0006"/><path d="M1720 477h9v9h-9z" fill="#bb0005"/><path d="M1728 477h9v9h-9z" fill="#ba0004"/><path d="M1736 477h9v9h-9z" fill="#bb0003"/><path d="M1344 485h9v9h-9z" fill="#00c5ff"/><path d="M1352 485h9v9h-9z" fill="#00c3ff"/><path d="M1360 485h9v9h-9z" fill="#01c2ff"/><path d="M1368 485h9v9h-9z" fill="#14c1ff"/><path d="M1376 485h9v9h-9z" fill="#28c0ff"/><path d="M1384 485h9v9h-9z" fill="#3cbeff"/><path d="M1392 485h9v9h-9z" fill="#52bdff"/><path d="M1400 485h9v9h-9z" fill="#68bbff"/><path d="M1408 485h9v9h-9z" fill="#80baff"/><path d="M1416 485h9v9h-9z" fill="#98b8ff"/><path d="M1424 485h9v9h-9z" fill="#b2b7ff"/><path d="M1432 485h9v9h-9z" fill="#ccb5ff"/><path d="M1440 485h9v9h-9z" fill="#e8b3ff"/><path d="M1448 485h9v9h-9z" fill="#ffacf8"/><path d="M1456 485h9v9h-9z" fill="#ff98de"/><path d="M1464 485h9v9h-9z" fill="#ff87c8"/><path d="M1472 485h9v9h-9z" fill="#ff79b5"/><path d="M1480 485h9v9h-9z" fill="#ff6ca4"/><path d="M1488 485h9v9h-9z" fill="#ff6196"/><path d="M1496 485h9v9h-9z" fill="#ff5789"/><path d="M1504 485h9v9h-9z" fill="#ff4f7e"/><path d="M1512 485h9v9h-9z" fill="#ff4773"/><path d="M1520 485h9v9h-9z" fill="#ff406a"/><path d="M1528 485h9v9h-9z" fill="#ff3a62"/><path d="M1536 485h9v9h-9z" fill="#ff345a"/><path d="M1544 485h9v9h-9z" fill="#ff2f54"/><path d="M1552 485h9v9h-9z" fill="#ff2a4d"/><path d="M1560 485h9v9h-9z" fill="#ff2647"/><path d="M1568 485h9v9h-9z" fill="#ff2142"/><path d="M1576 485h9v9h-9z" fill="#fb1d3c"/><path d="M1584 485h9v9h-9z" fill="#f71937"/><path d="M1592 485h9v9h-9z" fill="#f31632"/><path d="M1600 485h9v9h-9z" fill="#f0132d"/><path d="M1608 485h9v9h-9z" fill="#ec1029"/><path d="M1616 485h9v9h-9z" fill="#e80d25"/><path d="M1624 485h9v9h-9z" fill="#e40b22"/><path d="M1632 485h9v9h-9z" fill="#e1081e"/><path d="M1640 485h9v9h-9z" fill="#dd061b"/><path d="M1648 485h9v9h-9z" fill="#da0419"/><path d="M1656 485h9v9h-9z" fill="#d60316"/><path d="M1664 485h9v9h-9z" fill="#d30114"/><path d="M1672 485h9v9h-9z" fill="#cf0011"/><path d="M1680 485h9v9h-9z" fill="#cc000f"/><path d="M1688 485h9v9h-9z" fill="#c9000d"/><path d="M1696 485h9v9h-9z" fill="#c6000c"/><path d="M1704 485h9v9h-9z" fill="#c4000a"/><path d="M1712 485h9v9h-9z" fill="#c20008"/><path d="M1720 485h9v9h-9z" fill="#c00007"/><path d="M1344 493h9v9h-9z" fill="#00b3ff"/><path d="M1352 493h9v9h-9z" fill="#00b1ff"/><path d="M1360 493h9v9h-9z" fill="#08b0ff"/><path d="M1368 493h9v9h-9z" fill="#1aaeff"/><path d="M1376 493h9v9h-9z" fill="#2eacff"/><path d="M1384 493h9v9h-9z" fill="#42abff"/><path d="M1392 493h9v9h-9z" fill="#56a9ff"/><path d="M1400 493h9v9h-9z" fill="#6ca7ff"/><path d="M1408 493h9v9h-9z" fill="#83a5ff"/><path d="M1416 493h9v9h-9z" fill="#9aa3ff"/><path d="M1424 493h9v9h-9z" fill="#b3a1ff"/><path d="M1432 493h9v9h-9z" fill="#cd9fff"/><path d="M1440 493h9v9h-9z" fill="#e79dff"/><path d="M1448 493h9v9h-9z" fill="#ff97fa"/><path d="M1456 493h9v9h-9z" fill="#ff86e1"/><path d="M1464 493h9v9h-9z" fill="#ff77cb"/><path d="M1472 493h9v9h-9z" fill="#ff6ab8"/><path d="M1480 493h9v9h-9z" fill="#ff5ea8"/><path d="M1488 493h9v9h-9z" fill="#ff549a"/><path d="M1496 493h9v9h-9z" fill="#ff4c8d"/><path d="M1504 493h9v9h-9z" fill="#ff4481"/><path d="M1512 493h9v9h-9z" fill="#ff3d77"/><path d="M1520 493h9v9h-9z" fill="#ff366e"/><path d="M1528 493h9v9h-9z" fill="#ff3166"/><path d="M1536 493h9v9h-9z" fill="#ff2b5e"/><path d="M1544 493h9v9h-9z" fill="#ff2757"/><path d="M1552 493h9v9h-9z" fill="#ff2251"/><path d="M1560 493h9v9h-9z" fill="#ff1e4b"/><path d="M1568 493h9v9h-9z" fill="#ff1a46"/><path d="M1576 493h9v9h-9z" fill="#fc1740"/><path d="M1584 493h9v9h-9z" fill="#f8133a"/><path d="M1592 493h9v9h-9z" fill="#f51035"/><path d="M1600 493h9v9h-9z" fill="#f10d31"/><path d="M1608 493h9v9h-9z" fill="#ed0a2c"/><path d="M1616 493h9v9h-9z" fill="#ea0828"/><path d="M1624 493h9v9h-9z" fill="#e60625"/><path d="M1632 493h9v9h-9z" fill="#e30421"/><path d="M1640 493h9v9h-9z" fill="#df021e"/><path d="M1648 493h9v9h-9z" fill="#dc001b"/><path d="M1656 493h9v9h-9z" fill="#d90019"/><path d="M1664 493h9v9h-9z" fill="#d50016"/><path d="M1672 493h9v9h-9z" fill="#d20014"/><path d="M1680 493h9v9h-9z" fill="#cf0012"/><path d="M1688 493h9v9h-9z" fill="#cd0010"/><path d="M1696 493h9v9h-9z" fill="#ca000e"/><path d="M1336 501h9v9h-9z" fill="#00a3ff"/><path d="M1344 501h9v9h-9z" fill="#00a2ff"/><path d="M1352 501h9v9h-9z" fill="#00a0ff"/><path d="M1360 501h9v9h-9z" fill="#0e9eff"/><path d="M1368 501h9v9h-9z" fill="#209cff"/><path d="M1376 501h9v9h-9z" fill="#339aff"/><path d="M1384 501h9v9h-9z" fill="#4698ff"/><path d="M1392 501h9v9h-9z" fill="#5b96ff"/><path d="M1400 501h9v9h-9z" fill="#7094ff"/><path d="M1408 501h9v9h-9z" fill="#8592ff"/><path d="M1416 501h9v9h-9z" fill="#9c90ff"/><path d="M1424 501h9v9h-9z" fill="#b48dff"/><path d="M1432 501h9v9h-9z" fill="#cd8bff"/><path d="M1440 501h9v9h-9z" fill="#e788ff"/><path d="M1448 501h9v9h-9z" fill="#ff84fc"/><path d="M1456 501h9v9h-9z" fill="#ff74e3"/><path d="M1464 501h9v9h-9z" fill="#ff67ce"/><path d="M1472 501h9v9h-9z" fill="#ff5bbb"/><path d="M1480 501h9v9h-9z" fill="#ff51ab"/><path d="M1488 501h9v9h-9z" fill="#ff489d"/><path d="M1496 501h9v9h-9z" fill="#ff4090"/><path d="M1504 501h9v9h-9z" fill="#ff3985"/><path d="M1512 501h9v9h-9z" fill="#ff337b"/><path d="M1520 501h9v9h-9z" fill="#ff2d72"/><path d="M1528 501h9v9h-9z" fill="#ff2869"/><path d="M1536 501h9v9h-9z" fill="#ff2362"/><path d="M1544 501h9v9h-9z" fill="#ff1f5b"/><path d="M1552 501h9v9h-9z" fill="#ff1b54"/><path d="M1560 501h9v9h-9z" fill="#ff174f"/><path d="M1568 501h9v9h-9z" fill="#ff1449"/><path d="M1576 501h9v9h-9z" fill="#fe1044"/><path d="M1584 501h9v9h-9z" fill="#fa0d3e"/><path d="M1592 501h9v9h-9z" fill="#f70a39"/><path d="M1600 501h9v9h-9z" fill="#f30834"/><path d="M1608 501h9v9h-9z" fill="#ef0530"/><path d="M1616 501h9v9h-9z" fill="#ec032c"/><path d="M1624 501h9v9h-9z" fill="#e90128"/><path d="M1632 501h9v9h-9z" fill="#e50024"/><path d="M1640 501h9v9h-9z" fill="#e20021"/><path d="M1648 501h9v9h-9z" fill="#df001e"/><path d="M1656 501h9v9h-9z" fill="#dc001c"/><path d="M1664 501h9v9h-9z" fill="#d90019"/><path d="M1672 501h9v9h-9z" fill="#d60017"/><path d="M1680 501h9v9h-9z" fill="#d30014"/><path d="M1336 509h9v9h-9z" fill="#0094ff"/><path d="M1344 509h9v9h-9z" fill="#0092ff"/><path d="M1352 509h9v9h-9z" fill="#0390ff"/><path d="M1360 509h9v9h-9z" fill="#148eff"/><path d="M1368 509h9v9h-9z" fill="#268cff"/><path d="M1376 509h9v9h-9z" fill="#388aff"/><path d="M1384 509h9v9h-9z" fill="#4b87ff"/><path d="M1392 509h9v9h-9z" fill="#5f85ff"/><path d="M1400 509h9v9h-9z" fill="#7383ff"/><path d="M1408 509h9v9h-9z" fill="#8880ff"/><path d="M1416 509h9v9h-9z" fill="#9e7eff"/><path d="M1424 509h9v9h-9z" fill="#b57bff"/><path d="M1432 509h9v9h-9z" fill="#cd78ff"/><path d="M1440 509h9v9h-9z" fill="#e675ff"/><path d="M1448 509h9v9h-9z" fill="#ff72fe"/><path d="M1456 509h9v9h-9z" fill="#ff64e6"/><path d="M1464 509h9v9h-9z" fill="#ff58d1"/><path d="M1472 509h9v9h-9z" fill="#ff4ebf"/><path d="M1480 509h9v9h-9z" fill="#ff45af"/><path d="M1488 509h9v9h-9z" fill="#ff3da0"/><path d="M1496 509h9v9h-9z" fill="#ff3594"/><path d="M1504 509h9v9h-9z" fill="#ff2f89"/><path d="M1512 509h9v9h-9z" fill="#ff297f"/><path d="M1520 509h9v9h-9z" fill="#ff2475"/><path d="M1528 509h9v9h-9z" fill="#ff1f6d"/><path d="M1536 509h9v9h-9z" fill="#ff1b65"/><path d="M1544 509h9v9h-9z" fill="#ff175e"/><path d="M1552 509h9v9h-9z" fill="#ff1358"/><path d="M1560 509h9v9h-9z" fill="#ff1052"/><path d="M1568 509h9v9h-9z" fill="#ff0d4c"/><path d="M1576 509h9v9h-9z" fill="#ff0a47"/><path d="M1584 509h9v9h-9z" fill="#fc0742"/><path d="M1592 509h9v9h-9z" fill="#f9053c"/><path d="M1600 509h9v9h-9z" fill="#f50238"/><path d="M1608 509h9v9h-9z" fill="#f20033"/><path d="M1616 509h9v9h-9z" fill="#ef002f"/><path d="M1624 509h9v9h-9z" fill="#eb002b"/><path d="M1632 509h9v9h-9z" fill="#e80028"/><path d="M1640 509h9v9h-9z" fill="#e50024"/><path d="M1648 509h9v9h-9z" fill="#e20021"/><path d="M1656 509h9v9h-9z" fill="#df001e"/><path d="M1328 517h9v9h-9z" fill="#0087ff"/><path d="M1336 517h9v9h-9z" fill="#0085ff"/><path d="M1344 517h9v9h-9z" fill="#0083ff"/><path d="M1352 517h9v9h-9z" fill="#0a81ff"/><path d="M1360 517h9v9h-9z" fill="#1a7fff"/><path d="M1368 517h9v9h-9z" fill="#2b7cff"/><path d="M1376 517h9v9h-9z" fill="#3d7aff"/><path d="M1384 517h9v9h-9z" fill="#4f77ff"/><path d="M1392 517h9v9h-9z" fill="#6275ff"/><path d="M1400 517h9v9h-9z" fill="#7672ff"/><path d="M1408 517h9v9h-9z" fill="#8b6fff"/><path d="M1416 517h9v9h-9z" fill="#a06dff"/><path d="M1424 517h9v9h-9z" fill="#b66aff"/><path d="M1432 517h9v9h-9z" fill="#cd67ff"/><path d="M1440 517h9v9h-9z" fill="#e563ff"/><path d="M1448 517h9v9h-9z" fill="#fe60ff"/><path d="M1456 517h9v9h-9z" fill="#ff54e8"/><path d="M1464 517h9v9h-9z" fill="#ff4ad3"/><path d="M1472 517h9v9h-9z" fill="#ff41c2"/><path d="M1480 517h9v9h-9z" fill="#ff39b2"/><path d="M1488 517h9v9h-9z" fill="#ff31a4"/><path d="M1496 517h9v9h-9z" fill="#ff2b97"/><path d="M1504 517h9v9h-9z" fill="#ff258c"/><path d="M1512 517h9v9h-9z" fill="#ff2082"/><path d="M1520 517h9v9h-9z" fill="#ff1b79"/><path d="M1528 517h9v9h-9z" fill="#ff1770"/><path d="M1536 517h9v9h-9z" fill="#ff1369"/><path d="M1544 517h9v9h-9z" fill="#ff1062"/><path d="M1552 517h9v9h-9z" fill="#ff0c5b"/><path d="M1560 517h9v9h-9z" fill="#ff0955"/><path d="M1568 517h9v9h-9z" fill="#ff0750"/><path d="M1576 517h9v9h-9z" fill="#ff044a"/><path d="M1584 517h9v9h-9z" fill="#ff0146"/><path d="M1592 517h9v9h-9z" fill="#fb0040"/><path d="M1600 517h9v9h-9z" fill="#f8003b"/><path d="M1608 517h9v9h-9z" fill="#f50037"/><path d="M1616 517h9v9h-9z" fill="#f10032"/><path d="M1624 517h9v9h-9z" fill="#ee002e"/><path d="M1632 517h9v9h-9z" fill="#eb002b"/><path d="M1640 517h9v9h-9z" fill="#e80027"/><path d="M1328 525h9v9h-9z" fill="#0079ff"/><path d="M1336 525h9v9h-9z" fill="#07f"/><path d="M1344 525h9v9h-9z" fill="#0075ff"/><path d="M1352 525h9v9h-9z" fill="#0f72ff"/><path d="M1360 525h9v9h-9z" fill="#1f70ff"/><path d="M1368 525h9v9h-9z" fill="#306eff"/><path d="M1376 525h9v9h-9z" fill="#416bff"/><path d="M1384 525h9v9h-9z" fill="#5368ff"/><path d="M1392 525h9v9h-9z" fill="#66f"/><path d="M1400 525h9v9h-9z" fill="#7963ff"/><path d="M1408 525h9v9h-9z" fill="#8d60ff"/><path d="M1416 525h9v9h-9z" fill="#a25dff"/><path d="M1424 525h9v9h-9z" fill="#b75aff"/><path d="M1432 525h9v9h-9z" fill="#cd56ff"/><path d="M1440 525h9v9h-9z" fill="#e453ff"/><path d="M1448 525h9v9h-9z" fill="#fd4fff"/><path d="M1456 525h9v9h-9z" fill="#ff45ea"/><path d="M1464 525h9v9h-9z" fill="#ff3cd6"/><path d="M1472 525h9v9h-9z" fill="#ff34c4"/><path d="M1480 525h9v9h-9z" fill="#ff2db5"/><path d="M1488 525h9v9h-9z" fill="#ff27a7"/><path d="M1496 525h9v9h-9z" fill="#ff219a"/><path d="M1504 525h9v9h-9z" fill="#ff1c8f"/><path d="M1512 525h9v9h-9z" fill="#ff1785"/><path d="M1520 525h9v9h-9z" fill="#ff137c"/><path d="M1528 525h9v9h-9z" fill="#ff0f74"/><path d="M1536 525h9v9h-9z" fill="#ff0c6c"/><path d="M1544 525h9v9h-9z" fill="#ff0965"/><path d="M1552 525h9v9h-9z" fill="#ff065e"/><path d="M1560 525h9v9h-9z" fill="#ff0358"/><path d="M1568 525h9v9h-9z" fill="#ff0053"/><path d="M1576 525h9v9h-9z" fill="#ff004e"/><path d="M1584 525h9v9h-9z" fill="#ff0049"/><path d="M1592 525h9v9h-9z" fill="#fe0044"/><path d="M1600 525h9v9h-9z" fill="#fb003f"/><path d="M1608 525h9v9h-9z" fill="#f8003a"/><path d="M1616 525h9v9h-9z" fill="#f40036"/><path d="M1328 533h9v9h-9z" fill="#006cff"/><path d="M1336 533h9v9h-9z" fill="#006aff"/><path d="M1344 533h9v9h-9z" fill="#0567ff"/><path d="M1352 533h9v9h-9z" fill="#1565ff"/><path d="M1360 533h9v9h-9z" fill="#2462ff"/><path d="M1368 533h9v9h-9z" fill="#3560ff"/><path d="M1376 533h9v9h-9z" fill="#465dff"/><path d="M1384 533h9v9h-9z" fill="#575aff"/><path d="M1392 533h9v9h-9z" fill="#6957ff"/><path d="M1400 533h9v9h-9z" fill="#7c54ff"/><path d="M1408 533h9v9h-9z" fill="#8f51ff"/><path d="M1416 533h9v9h-9z" fill="#a34eff"/><path d="M1424 533h9v9h-9z" fill="#b84bff"/><path d="M1432 533h9v9h-9z" fill="#cd47ff"/><path d="M1440 533h9v9h-9z" fill="#e444ff"/><path d="M1448 533h9v9h-9z" fill="#fb40ff"/><path d="M1456 533h9v9h-9z" fill="#ff38ec"/><path d="M1464 533h9v9h-9z" fill="#ff2fd8"/><path d="M1472 533h9v9h-9z" fill="#ff28c7"/><path d="M1480 533h9v9h-9z" fill="#ff22b8"/><path d="M1488 533h9v9h-9z" fill="#ff1caa"/><path d="M1496 533h9v9h-9z" fill="#ff179e"/><path d="M1504 533h9v9h-9z" fill="#ff1392"/><path d="M1512 533h9v9h-9z" fill="#ff0f88"/><path d="M1520 533h9v9h-9z" fill="#ff0b7f"/><path d="M1528 533h9v9h-9z" fill="#ff0877"/><path d="M1536 533h9v9h-9z" fill="#ff046f"/><path d="M1544 533h9v9h-9z" fill="#ff0268"/><path d="M1552 533h9v9h-9z" fill="#ff0062"/><path d="M1560 533h9v9h-9z" fill="#ff005c"/><path d="M1568 533h9v9h-9z" fill="#ff0056"/><path d="M1576 533h9v9h-9z" fill="#ff0051"/><path d="M1584 533h9v9h-9z" fill="#ff004c"/><path d="M1592 533h9v9h-9z" fill="#ff0047"/><path d="M1600 533h9v9h-9z" fill="#fe0043"/><path d="M1320 541h9v9h-9z" fill="#0062ff"/><path d="M1328 541h9v9h-9z" fill="#0060ff"/><path d="M1336 541h9v9h-9z" fill="#005dff"/><path d="M1344 541h9v9h-9z" fill="#0b5bff"/><path d="M1352 541h9v9h-9z" fill="#1a58ff"/><path d="M1360 541h9v9h-9z" fill="#2956ff"/><path d="M1368 541h9v9h-9z" fill="#3953ff"/><path d="M1376 541h9v9h-9z" fill="#4a50ff"/><path d="M1384 541h9v9h-9z" fill="#5b4dff"/><path d="M1392 541h9v9h-9z" fill="#6c4aff"/><path d="M1400 541h9v9h-9z" fill="#7e47ff"/><path d="M1408 541h9v9h-9z" fill="#9144ff"/><path d="M1416 541h9v9h-9z" fill="#a540ff"/><path d="M1424 541h9v9h-9z" fill="#b93dff"/><path d="M1432 541h9v9h-9z" fill="#ce39ff"/><path d="M1440 541h9v9h-9z" fill="#e335ff"/><path d="M1448 541h9v9h-9z" fill="#fa31ff"/><path d="M1456 541h9v9h-9z" fill="#ff2aee"/><path d="M1464 541h9v9h-9z" fill="#ff23db"/><path d="M1472 541h9v9h-9z" fill="#ff1dca"/><path d="M1480 541h9v9h-9z" fill="#ff18ba"/><path d="M1488 541h9v9h-9z" fill="#ff13ad"/><path d="M1496 541h9v9h-9z" fill="#ff0ea1"/><path d="M1504 541h9v9h-9z" fill="#ff0a95"/><path d="M1512 541h9v9h-9z" fill="#ff078b"/><path d="M1520 541h9v9h-9z" fill="#ff0382"/><path d="M1528 541h9v9h-9z" fill="#ff007a"/><path d="M1536 541h9v9h-9z" fill="#ff0072"/><path d="M1544 541h9v9h-9z" fill="#ff006b"/><path d="M1552 541h9v9h-9z" fill="#ff0065"/><path d="M1560 541h9v9h-9z" fill="#ff005f"/><path d="M1568 541h9v9h-9z" fill="#ff0059"/><path d="M1576 541h9v9h-9z" fill="#ff0054"/><path d="M1320 549h9v9h-9z" fill="#0056ff"/><path d="M1328 549h9v9h-9z" fill="#0054ff"/><path d="M1336 549h9v9h-9z" fill="#0251ff"/><path d="M1344 549h9v9h-9z" fill="#104fff"/><path d="M1352 549h9v9h-9z" fill="#1f4cff"/><path d="M1360 549h9v9h-9z" fill="#2e49ff"/><path d="M1368 549h9v9h-9z" fill="#3d46ff"/><path d="M1376 549h9v9h-9z" fill="#4d43ff"/><path d="M1384 549h9v9h-9z" fill="#5e40ff"/><path d="M1392 549h9v9h-9z" fill="#6f3dff"/><path d="M1400 549h9v9h-9z" fill="#813aff"/><path d="M1408 549h9v9h-9z" fill="#9337ff"/><path d="M1416 549h9v9h-9z" fill="#a633ff"/><path d="M1424 549h9v9h-9z" fill="#b930ff"/><path d="M1432 549h9v9h-9z" fill="#ce2cff"/><path d="M1440 549h9v9h-9z" fill="#e328ff"/><path d="M1448 549h9v9h-9z" fill="#f824ff"/><path d="M1456 549h9v9h-9z" fill="#ff1ef0"/><path d="M1464 549h9v9h-9z" fill="#ff18dd"/><path d="M1472 549h9v9h-9z" fill="#ff12cc"/><path d="M1480 549h9v9h-9z" fill="#ff0ebd"/><path d="M1488 549h9v9h-9z" fill="#ff09af"/><path d="M1496 549h9v9h-9z" fill="#ff05a3"/><path d="M1504 549h9v9h-9z" fill="#ff0298"/><path d="M1512 549h9v9h-9z" fill="#ff008e"/><path d="M1520 549h9v9h-9z" fill="#ff0085"/><path d="M1528 549h9v9h-9z" fill="#ff007d"/><path d="M1536 549h9v9h-9z" fill="#ff0075"/><path d="M1544 549h9v9h-9z" fill="#ff006e"/><path d="M1552 549h9v9h-9z" fill="#ff0068"/><path d="M1560 549h9v9h-9z" fill="#ff0061"/><path d="M1312 557h9v9h-9z" fill="#004eff"/><path d="M1320 557h9v9h-9z" fill="#004bff"/><path d="M1328 557h9v9h-9z" fill="#0049ff"/><path d="M1336 557h9v9h-9z" fill="#0746ff"/><path d="M1344 557h9v9h-9z" fill="#1543ff"/><path d="M1352 557h9v9h-9z" fill="#2341ff"/><path d="M1360 557h9v9h-9z" fill="#323eff"/><path d="M1368 557h9v9h-9z" fill="#413bff"/><path d="M1376 557h9v9h-9z" fill="#5138ff"/><path d="M1384 557h9v9h-9z" fill="#6135ff"/><path d="M1392 557h9v9h-9z" fill="#7231ff"/><path d="M1400 557h9v9h-9z" fill="#832eff"/><path d="M1408 557h9v9h-9z" fill="#952aff"/><path d="M1416 557h9v9h-9z" fill="#a727ff"/><path d="M1424 557h9v9h-9z" fill="#ba23ff"/><path d="M1432 557h9v9h-9z" fill="#ce1fff"/><path d="M1440 557h9v9h-9z" fill="#e21bff"/><path d="M1448 557h9v9h-9z" fill="#f717ff"/><path d="M1456 557h9v9h-9z" fill="#ff12f2"/><path d="M1464 557h9v9h-9z" fill="#ff0ddf"/><path d="M1472 557h9v9h-9z" fill="#ff08ce"/><path d="M1480 557h9v9h-9z" fill="#ff04bf"/><path d="M1488 557h9v9h-9z" fill="#ff00b2"/><path d="M1496 557h9v9h-9z" fill="#ff00a6"/><path d="M1504 557h9v9h-9z" fill="#ff009b"/><path d="M1512 557h9v9h-9z" fill="#ff0091"/><path d="M1520 557h9v9h-9z" fill="#f08"/><path d="M1528 557h9v9h-9z" fill="#ff0080"/><path d="M1536 557h9v9h-9z" fill="#ff0078"/><path d="M1312 565h9v9h-9z" fill="#0043ff"/><path d="M1320 565h9v9h-9z" fill="#0041ff"/><path d="M1328 565h9v9h-9z" fill="#003eff"/><path d="M1336 565h9v9h-9z" fill="#0c3bff"/><path d="M1344 565h9v9h-9z" fill="#1a39ff"/><path d="M1352 565h9v9h-9z" fill="#2836ff"/><path d="M1360 565h9v9h-9z" fill="#3633ff"/><path d="M1368 565h9v9h-9z" fill="#4530ff"/><path d="M1376 565h9v9h-9z" fill="#542dff"/><path d="M1384 565h9v9h-9z" fill="#6429ff"/><path d="M1392 565h9v9h-9z" fill="#7426ff"/><path d="M1400 565h9v9h-9z" fill="#8523ff"/><path d="M1408 565h9v9h-9z" fill="#961fff"/><path d="M1416 565h9v9h-9z" fill="#a81bff"/><path d="M1424 565h9v9h-9z" fill="#bb17ff"/><path d="M1432 565h9v9h-9z" fill="#ce14ff"/><path d="M1440 565h9v9h-9z" fill="#e210ff"/><path d="M1448 565h9v9h-9z" fill="#f60bff"/><path d="M1456 565h9v9h-9z" fill="#ff07f3"/><path d="M1464 565h9v9h-9z" fill="#ff02e1"/><path d="M1472 565h9v9h-9z" fill="#ff00d0"/><path d="M1480 565h9v9h-9z" fill="#ff00c2"/><path d="M1488 565h9v9h-9z" fill="#ff00b5"/><path d="M1496 565h9v9h-9z" fill="#ff00a9"/><path d="M1504 565h9v9h-9z" fill="#ff009e"/><path d="M1512 565h9v9h-9z" fill="#ff0094"/><path d="M1312 573h9v9h-9z" fill="#0039ff"/><path d="M1320 573h9v9h-9z" fill="#0037ff"/><path d="M1328 573h9v9h-9z" fill="#0434ff"/><path d="M1336 573h9v9h-9z" fill="#1131ff"/><path d="M1344 573h9v9h-9z" fill="#1e2eff"/><path d="M1352 573h9v9h-9z" fill="#2c2bff"/><path d="M1360 573h9v9h-9z" fill="#3a28ff"/><path d="M1368 573h9v9h-9z" fill="#4925ff"/><path d="M1376 573h9v9h-9z" fill="#5822ff"/><path d="M1384 573h9v9h-9z" fill="#671fff"/><path d="M1392 573h9v9h-9z" fill="#771bff"/><path d="M1400 573h9v9h-9z" fill="#8718ff"/><path d="M1408 573h9v9h-9z" fill="#9814ff"/><path d="M1416 573h9v9h-9z" fill="#aa10ff"/><path d="M1424 573h9v9h-9z" fill="#bb0cff"/><path d="M1432 573h9v9h-9z" fill="#ce08ff"/><path d="M1440 573h9v9h-9z" fill="#e104ff"/><path d="M1448 573h9v9h-9z" fill="#f500ff"/><path d="M1456 573h9v9h-9z" fill="#ff00f5"/><path d="M1464 573h9v9h-9z" fill="#ff00e3"/><path d="M1472 573h9v9h-9z" fill="#ff00d3"/><path d="M1480 573h9v9h-9z" fill="#ff00c4"/><path d="M1488 573h9v9h-9z" fill="#ff00b7"/><path d="M1496 573h9v9h-9z" fill="#ff00ab"/><path d="M1304 581h9v9h-9z" fill="#0032ff"/><path d="M1312 581h9v9h-9z" fill="#0030ff"/><path d="M1320 581h9v9h-9z" fill="#002dff"/><path d="M1328 581h9v9h-9z" fill="#082aff"/><path d="M1336 581h9v9h-9z" fill="#1527ff"/><path d="M1344 581h9v9h-9z" fill="#2225ff"/><path d="M1352 581h9v9h-9z" fill="#3021ff"/><path d="M1360 581h9v9h-9z" fill="#3e1eff"/><path d="M1368 581h9v9h-9z" fill="#4c1bff"/><path d="M1376 581h9v9h-9z" fill="#5b18ff"/><path d="M1384 581h9v9h-9z" fill="#6a15ff"/><path d="M1392 581h9v9h-9z" fill="#7911ff"/><path d="M1400 581h9v9h-9z" fill="#890dff"/><path d="M1408 581h9v9h-9z" fill="#9a0aff"/><path d="M1416 581h9v9h-9z" fill="#ab06ff"/><path d="M1424 581h9v9h-9z" fill="#bc02ff"/><path d="M1432 581h9v9h-9z" fill="#ce00ff"/><path d="M1440 581h9v9h-9z" fill="#e100ff"/><path d="M1448 581h9v9h-9z" fill="#f400ff"/><path d="M1456 581h9v9h-9z" fill="#ff00f6"/><path d="M1464 581h9v9h-9z" fill="#ff00e5"/><path d="M1472 581h9v9h-9z" fill="#ff00d5"/><path d="M1304 589h9v9h-9z" fill="#0029ff"/><path d="M1312 589h9v9h-9z" fill="#0027ff"/><path d="M1320 589h9v9h-9z" fill="#0124ff"/><path d="M1328 589h9v9h-9z" fill="#0d21ff"/><path d="M1336 589h9v9h-9z" fill="#191eff"/><path d="M1344 589h9v9h-9z" fill="#261bff"/><path d="M1352 589h9v9h-9z" fill="#3418ff"/><path d="M1360 589h9v9h-9z" fill="#4115ff"/><path d="M1368 589h9v9h-9z" fill="#4f12ff"/><path d="M1376 589h9v9h-9z" fill="#5d0eff"/><path d="M1384 589h9v9h-9z" fill="#6c0bff"/><path d="M1392 589h9v9h-9z" fill="#7b07ff"/><path d="M1400 589h9v9h-9z" fill="#8b04ff"/><path d="M1408 589h9v9h-9z" fill="#9b00ff"/><path d="M1416 589h9v9h-9z" fill="#ac00ff"/><path d="M1424 589h9v9h-9z" fill="#bd00ff"/><path d="M1432 589h9v9h-9z" fill="#ce00ff"/><path d="M1440 589h9v9h-9z" fill="#e000ff"/><path d="M1448 589h9v9h-9z" fill="#f300ff"/><path d="M1456 589h9v9h-9z" fill="#ff00f8"/><path d="M1304 597h9v9h-9z" fill="#0021ff"/><path d="M1312 597h9v9h-9z" fill="#001eff"/><path d="M1320 597h9v9h-9z" fill="#051bff"/><path d="M1328 597h9v9h-9z" fill="#1118ff"/><path d="M1336 597h9v9h-9z" fill="#1e15ff"/><path d="M1344 597h9v9h-9z" fill="#2a12ff"/><path d="M1352 597h9v9h-9z" fill="#370fff"/><path d="M1360 597h9v9h-9z" fill="#440cff"/><path d="M1368 597h9v9h-9z" fill="#5209ff"/><path d="M1376 597h9v9h-9z" fill="#6005ff"/><path d="M1384 597h9v9h-9z" fill="#6f02ff"/><path d="M1392 597h9v9h-9z" fill="#7d00ff"/><path d="M1400 597h9v9h-9z" fill="#8d00ff"/><path d="M1408 597h9v9h-9z" fill="#9c00ff"/><path d="M1416 597h9v9h-9z" fill="#ad00ff"/><path d="M1424 597h9v9h-9z" fill="#bd00ff"/><path d="M1432 597h9v9h-9z" fill="#ce00ff"/><path d="M1296 605h9v9h-9z" fill="#001bff"/><path d="M1304 605h9v9h-9z" fill="#0018ff"/><path d="M1312 605h9v9h-9z" fill="#0016ff"/><path d="M1320 605h9v9h-9z" fill="#0a13ff"/><path d="M1328 605h9v9h-9z" fill="#1510ff"/><path d="M1336 605h9v9h-9z" fill="#210dff"/><path d="M1344 605h9v9h-9z" fill="#2e0aff"/><path d="M1352 605h9v9h-9z" fill="#3b07ff"/><path d="M1360 605h9v9h-9z" fill="#4803ff"/><path d="M1368 605h9v9h-9z" fill="#50f"/><path d="M1376 605h9v9h-9z" fill="#6300ff"/><path d="M1384 605h9v9h-9z" fill="#7100ff"/><path d="M1392 605h9v9h-9z" fill="#7f00ff"/><path d="M1400 605h9v9h-9z" fill="#8e00ff"/><path d="M1408 605h9v9h-9z" fill="#9e00ff"/><path d="M1416 605h9v9h-9z" fill="#ae00ff"/><path d="M1296 613h9v9h-9z" fill="#0013ff"/><path d="M1304 613h9v9h-9z" fill="#0010ff"/><path d="M1312 613h9v9h-9z" fill="#020eff"/><path d="M1320 613h9v9h-9z" fill="#0e0bff"/><path d="M1328 613h9v9h-9z" fill="#1908ff"/><path d="M1336 613h9v9h-9z" fill="#2505ff"/><path d="M1344 613h9v9h-9z" fill="#3101ff"/><path d="M1352 613h9v9h-9z" fill="#3e00ff"/><path d="M1360 613h9v9h-9z" fill="#4b00ff"/><path d="M1368 613h9v9h-9z" fill="#5800ff"/><path d="M1376 613h9v9h-9z" fill="#6500ff"/><path d="M1384 613h9v9h-9z" fill="#7300ff"/><path d="M1392 613h9v9h-9z" fill="#8100ff"/><path d="M1288 621h9v9h-9z" fill="#000eff"/><path d="M1296 621h9v9h-9z" fill="#000bff"/><path d="M1304 621h9v9h-9z" fill="#0009ff"/><path d="M1312 621h9v9h-9z" fill="#0606ff"/><path d="M1320 621h9v9h-9z" fill="#1203ff"/><path d="M1328 621h9v9h-9z" fill="#1d00ff"/><path d="M1336 621h9v9h-9z" fill="#2900ff"/><path d="M1344 621h9v9h-9z" fill="#3500ff"/><path d="M1352 621h9v9h-9z" fill="#4100ff"/><path d="M1360 621h9v9h-9z" fill="#4e00ff"/><path d="M1368 621h9v9h-9z" fill="#5b00ff"/><path d="M1376 621h9v9h-9z" fill="#6800ff"/><path d="M1288 629h9v9h-9z" fill="#0007ff"/><path d="M1296 629h9v9h-9z" fill="#0004ff"/><path d="M1304 629h9v9h-9z" fill="#0001ff"/><path d="M1312 629h9v9h-9z" fill="#0a00ff"/><path d="M1320 629h9v9h-9z" fill="#1500ff"/><path d="M1328 629h9v9h-9z" fill="#2100ff"/><path d="M1336 629h9v9h-9z" fill="#2c00ff"/><path d="M1344 629h9v9h-9z" fill="#3800ff"/><path d="M1352 629h9v9h-9z" fill="#40f"/><path d="M1288 637h9v9h-9z" fill="#00f"/><path d="M1296 637h9v9h-9z" fill="#00f"/><path d="M1304 637h9v9h-9z" fill="#0400ff"/><path d="M1312 637h9v9h-9z" fill="#0e00ff"/><path d="M1320 637h9v9h-9z" fill="#1900ff"/><path d="M1328 637h9v9h-9z" fill="#2400ff"/><path d="M1336 637h9v9h-9z" fill="#3000ff"/><path d="M1296 645h9v9h-9z" fill="#00f"/><path d="M1304 645h9v9h-9z" fill="#0800ff"/><path d="M1312 645h9v9h-9z" fill="#1200ff"/></g></g><path d="M1178 673V144.2H1908V673" fill="none" stroke="#999" stroke-width="1.8"/><path d="M1177 672.2H1909" stroke="#aaa" stroke-width="1.8"/><rect x="1176.5" y="672" width="2" height="7" fill="#ccc"/><rect x="1171" y="671.3" width="7" height="1.8" fill="#ccc"/><rect x="1263.2" y="672" width="2" height="7" fill="#ccc"/><rect x="1171" y="608.6" width="7" height="1.8" fill="#ccc"/><rect x="1349.9" y="672" width="2" height="7" fill="#ccc"/><rect x="1171" y="546.0" width="7" height="1.8" fill="#ccc"/><rect x="1436.7" y="672" width="2" height="7" fill="#ccc"/><rect x="1171" y="483.3" width="7" height="1.8" fill="#ccc"/><rect x="1523.4" y="672" width="2" height="7" fill="#ccc"/><rect x="1171" y="420.6" width="7" height="1.8" fill="#ccc"/><rect x="1610.1" y="672" width="2" height="7" fill="#ccc"/><rect x="1171" y="357.9" width="7" height="1.8" fill="#ccc"/><rect x="1696.8" y="672" width="2" height="7" fill="#ccc"/><rect x="1171" y="295.3" width="7" height="1.8" fill="#ccc"/><rect x="1783.5" y="672" width="2" height="7" fill="#ccc"/><rect x="1171" y="232.6" width="7" height="1.8" fill="#ccc"/><rect x="1870.3" y="672" width="2" height="7" fill="#ccc"/><rect x="1171" y="169.9" width="7" height="1.8" fill="#ccc"/><rect x="1433.3" y="355.5" width="16.6" height="16.6" fill="none" stroke="#fff" stroke-width="1.7"/><rect x="1494.3" y="352.7" width="16.6" height="16.6" fill="none" stroke="#fff" stroke-width="1.7"/><rect x="1557.0" y="366.1" width="16.6" height="16.6" fill="none" stroke="#fff" stroke-width="1.7"/><rect x="1580.1" y="386.7" width="16.6" height="16.6" fill="none" stroke="#fff" stroke-width="1.7"/><rect x="1613.1" y="407.6" width="16.6" height="16.6" fill="none" stroke="#fff" stroke-width="1.7"/><rect x="1463.4" y="393.9" width="16.6" height="16.6" fill="none" stroke="#fff" stroke-width="1.7"/><rect x="1397.3" y="435.7" width="16.6" height="16.6" fill="none" stroke="#fff" stroke-width="1.7"/><rect x="1497.4" y="438.5" width="16.6" height="16.6" fill="none" stroke="#fff" stroke-width="1.7"/><rect x="1516.3" y="433.9" width="16.6" height="16.6" fill="none" stroke="#fff" stroke-width="1.7"/><rect x="1569.6" y="466.6" width="16.6" height="16.6" fill="none" stroke="#fff" stroke-width="1.7"/><rect x="1635.1" y="463.7" width="16.6" height="16.6" fill="none" stroke="#fff" stroke-width="1.7"/><rect x="1349.2" y="493.7" width="16.6" height="16.6" fill="none" stroke="#fff" stroke-width="1.7"/><rect x="1385.0" y="496.7" width="16.6" height="16.6" fill="none" stroke="#fff" stroke-width="1.7"/><rect x="1402.1" y="503.5" width="16.6" height="16.6" fill="none" stroke="#fff" stroke-width="1.7"/><rect x="1421.0" y="524.7" width="16.6" height="16.6" fill="none" stroke="#fff" stroke-width="1.7"/><rect x="1493.1" y="508.7" width="16.6" height="16.6" fill="none" stroke="#fff" stroke-width="1.7"/><rect x="1356.7" y="542.7" width="16.6" height="16.6" fill="none" stroke="#fff" stroke-width="1.7"/><rect x="1336.0" y="574.7" width="16.6" height="16.6" fill="none" stroke="#fff" stroke-width="1.7"/><rect x="1440.2" y="457.2" width="15.6" height="15.6" fill="none" stroke="#000" stroke-width="2.3"/><circle cx="1445.0" cy="327.0" r="5.6" fill="#4f9a4f" stroke="#000" stroke-width="1.2"/><circle cx="1505.7" cy="340.0" r="5.6" fill="#9cb848" stroke="#000" stroke-width="1.2"/><circle cx="1569.8" cy="368.4" r="5.6" fill="#e4c030" stroke="#000" stroke-width="1.2"/><circle cx="1596.5" cy="387.9" r="5.6" fill="#e0a030" stroke="#000" stroke-width="1.2"/><circle cx="1636.0" cy="412.8" r="5.6" fill="#d88030" stroke="#000" stroke-width="1.2"/><circle cx="1464.8" cy="378.7" r="5.6" fill="#566a44" stroke="#000" stroke-width="1.2"/><circle cx="1401.0" cy="434.5" r="5.6" fill="#66b8a4" stroke="#000" stroke-width="1.2"/><circle cx="1444.8" cy="461.2" r="5.6" fill="#8c8c8c" stroke="#000" stroke-width="1.2"/><circle cx="1444.0" cy="463.0" r="5.6" fill="#c4c4c4" stroke="#000" stroke-width="1.2"/><circle cx="1441.3" cy="465.0" r="5.6" fill="#fff" stroke="#000" stroke-width="1.2"/><circle cx="1504.3" cy="447.0" r="5.6" fill="#c09480" stroke="#000" stroke-width="1.2"/><circle cx="1540.6" cy="440.8" r="5.6" fill="#725040" stroke="#000" stroke-width="1.2"/><circle cx="1620.0" cy="473.7" r="5.6" fill="#c05864" stroke="#000" stroke-width="1.2"/><circle cx="1665.4" cy="474.6" r="5.6" fill="#b03840" stroke="#000" stroke-width="1.2"/><circle cx="1371.5" cy="480.9" r="5.6" fill="#0888a0" stroke="#000" stroke-width="1.2"/><circle cx="1384.0" cy="505.8" r="5.6" fill="#607898" stroke="#000" stroke-width="1.2"/><circle cx="1407.3" cy="511.0" r="5.6" fill="#8480b0" stroke="#000" stroke-width="1.2"/><circle cx="1396.4" cy="527.0" r="5.6" fill="#000" stroke="#000" stroke-width="1.2"/><circle cx="1495.0" cy="539.8" r="5.6" fill="#b85890" stroke="#000" stroke-width="1.2"/><circle cx="1405.6" cy="557.9" r="5.6" fill="#5c3c6c" stroke="#000" stroke-width="1.2"/><circle cx="1351.0" cy="562.4" r="5.6" fill="#5060a0" stroke="#000" stroke-width="1.2"/><circle cx="1330.6" cy="598.1" r="5.6" fill="#3c4090" stroke="#000" stroke-width="1.2"/><defs><linearGradient id="in1" x1="0" y1="0" x2=".12" y2="1"><stop offset="0" stop-color="#00869a"/><stop offset=".5" stop-color="#006498"/><stop offset="1" stop-color="#004294"/></linearGradient><linearGradient id="in2" x1=".1" y1="0" x2="0" y2="1"><stop offset="0" stop-color="#0ce0ff"/><stop offset=".5" stop-color="#0aa2ff"/><stop offset="1" stop-color="#0672ff"/></linearGradient><linearGradient id="in3" gradientUnits="userSpaceOnUse" x1="1810" y1="0" x2="1899" y2="0"><stop offset="0" stop-color="#fff" stop-opacity="0"/><stop offset="1" stop-color="#fff" stop-opacity=".2"/></linearGradient><linearGradient id="in4" gradientUnits="userSpaceOnUse" x1="1810" y1="200" x2="1899" y2="306"><stop offset="0" stop-color="#8060ff" stop-opacity="0"/><stop offset="1" stop-color="#8060ff" stop-opacity=".55"/></linearGradient><clipPath id="inc"><rect x="1688.5" y="152.4" width="210.5" height="153.8"/></clipPath></defs><rect x="1685.8" y="149.6" width="215.6" height="159.4" fill="none" stroke="#2b2b2b" stroke-width="2.6"/><rect x="1688" y="152" width="211.5" height="154.7" fill="url(#in1)"/><g clip-path="url(#inc)"><polygon points="1823.3,152 1900,152 1900,307 1764.8,307" fill="url(#in2)"/><polygon points="1823.3,152 1900,152 1900,307 1764.8,307" fill="url(#in3)"/><polygon points="1823.3,152 1900,152 1900,307 1764.8,307" fill="url(#in4)"/><rect x="1785.2" y="219.8" width="16.6" height="16.6" fill="none" stroke="#fff" stroke-width="1.6"/><rect x="1894.8" y="228.6" width="16.6" height="16.6" fill="none" stroke="#fff" stroke-width="1.6"/><circle cx="1833.1" cy="162" r="5.5" fill="#0888a0" stroke="#000" stroke-width="1.1"/><circle cx="1870.5" cy="240" r="5.7" fill="#6080a4" stroke="#000" stroke-width="1.1"/></g><rect x="1687.8" y="151.8" width="211.8" height="155" fill="none" stroke="#9a9a9a" stroke-width="1.4"/><rect x="1590.3" y="630.3" width="312.7" height="29" fill="#333"/></svg><div class="t" style="left:1483.5px;top:125.4px;font-size:15.5px;color:#ddd;letter-spacing:0.23px;">CIE 1931 xy</div><div class="t" style="left:1625.0px;top:635.8px;font-size:21.5px;color:#fff;letter-spacing:0.51px;">RGB Triplet: 0, 133, 163</div><div class="t" style="left:1172.9px;top:681.8px;font-size:16.5px;color:#ddd;">0</div><div class="t" style="left:1162.3px;top:665.6px;font-size:16.5px;color:#ddd;">0</div><div class="t" style="left:1252.8px;top:681.8px;font-size:16.5px;color:#ddd;">0,1</div><div class="t" style="left:1148.6px;top:603.0px;font-size:16.5px;color:#ddd;">0,1</div><div class="t" style="left:1339.5px;top:681.8px;font-size:16.5px;color:#ddd;">0,2</div><div class="t" style="left:1148.6px;top:540.3px;font-size:16.5px;color:#ddd;">0,2</div><div class="t" style="left:1426.2px;top:681.8px;font-size:16.5px;color:#ddd;">0,3</div><div class="t" style="left:1148.6px;top:477.6px;font-size:16.5px;color:#ddd;">0,3</div><div class="t" style="left:1512.9px;top:681.8px;font-size:16.5px;color:#ddd;">0,4</div><div class="t" style="left:1148.6px;top:414.9px;font-size:16.5px;color:#ddd;">0,4</div><div class="t" style="left:1599.6px;top:681.8px;font-size:16.5px;color:#ddd;">0,5</div><div class="t" style="left:1148.6px;top:352.3px;font-size:16.5px;color:#ddd;">0,5</div><div class="t" style="left:1686.4px;top:681.8px;font-size:16.5px;color:#ddd;">0,6</div><div class="t" style="left:1148.6px;top:289.6px;font-size:16.5px;color:#ddd;">0,6</div><div class="t" style="left:1773.1px;top:681.8px;font-size:16.5px;color:#ddd;">0,7</div><div class="t" style="left:1148.6px;top:226.9px;font-size:16.5px;color:#ddd;">0,7</div><div class="t" style="left:1859.8px;top:681.8px;font-size:16.5px;color:#ddd;">0,8</div><div class="t" style="left:1148.6px;top:164.2px;font-size:16.5px;color:#ddd;">0,8</div>
<div class="a" style="left:370px;top:728px;width:1550px;height:245px;overflow:hidden"><div class="a" style="left:0;top:0;width:1550px;height:30px;background:linear-gradient(#3a3a3a 0%,#2e2e2e 48%,#1c1c1c 52%,#0e0e0e 100%)"></div><div class="a" style="left:0;top:0;width:13px;height:30px;background:#000"></div><div class="t" style="left:120.0px;top:8.3px;font-size:15px;color:#fff;transform:scaleX(0.875);transform-origin:0 0;-webkit-text-stroke:0.35px #fff;">Black</div><div class="t" style="left:159.0px;top:8.3px;font-size:15px;color:#fff;transform:scaleX(0.875);transform-origin:0 0;-webkit-text-stroke:0.35px #fff;">Gray 35</div><div class="t" style="left:213.7px;top:8.3px;font-size:15px;color:#fff;transform:scaleX(0.875);transform-origin:0 0;-webkit-text-stroke:0.35px #fff;">Gray 50</div><div class="t" style="left:267.8px;top:8.3px;font-size:15px;color:#fff;transform:scaleX(0.875);transform-origin:0 0;-webkit-text-stroke:0.35px #fff;">Gray 65</div><div class="t" style="left:322.5px;top:8.3px;font-size:15px;color:#fff;transform:scaleX(0.875);transform-origin:0 0;-webkit-text-stroke:0.35px #fff;">Gray 80</div><div class="t" style="left:376.5px;top:8.3px;font-size:15px;color:#fff;transform:scaleX(0.875);transform-origin:0 0;-webkit-text-stroke:0.35px #fff;">White</div><div class="t" style="left:429.0px;top:8.3px;font-size:15px;color:#fff;transform:scaleX(0.875);transform-origin:0 0;-webkit-text-stroke:0.35px #fff;">Dark Skin</div><div class="t" style="left:493.5px;top:8.3px;font-size:15px;color:#fff;transform:scaleX(0.875);transform-origin:0 0;-webkit-text-stroke:0.35px #fff;">Light Skin</div><div class="t" style="left:559.0px;top:8.3px;font-size:15px;color:#fff;transform:scaleX(0.875);transform-origin:0 0;-webkit-text-stroke:0.35px #fff;">Blue Sky</div><div class="t" style="left:617.5px;top:8.3px;font-size:15px;color:#fff;transform:scaleX(0.875);transform-origin:0 0;-webkit-text-stroke:0.35px #fff;">Foliage</div><div class="t" style="left:668.0px;top:8.3px;font-size:15px;color:#fff;transform:scaleX(0.875);transform-origin:0 0;-webkit-text-stroke:0.35px #fff;">Blue Flower</div><div class="t" style="left:747.5px;top:8.3px;font-size:15px;color:#fff;transform:scaleX(0.875);transform-origin:0 0;-webkit-text-stroke:0.35px #fff;">Bluish Green</div><div class="t" style="left:832.5px;top:8.3px;font-size:15px;color:#fff;transform:scaleX(0.875);transform-origin:0 0;-webkit-text-stroke:0.35px #fff;">Orange</div><div class="t" style="left:884.5px;top:8.3px;font-size:15px;color:#fff;transform:scaleX(0.875);transform-origin:0 0;-webkit-text-stroke:0.35px #fff;">Purplish Blue</div><div class="t" style="left:972.0px;top:8.3px;font-size:15px;color:#fff;transform:scaleX(0.875);transform-origin:0 0;-webkit-text-stroke:0.35px #fff;">Moderate Red</div><div class="t" style="left:1066.5px;top:8.3px;font-size:15px;color:#fff;transform:scaleX(0.875);transform-origin:0 0;-webkit-text-stroke:0.35px #fff;">Purple</div><div class="t" style="left:1113.5px;top:8.3px;font-size:15px;color:#fff;transform:scaleX(0.875);transform-origin:0 0;-webkit-text-stroke:0.35px #fff;">Yellow Green</div><div class="t" style="left:1201.0px;top:8.3px;font-size:15px;color:#fff;transform:scaleX(0.875);transform-origin:0 0;-webkit-text-stroke:0.35px #fff;">Orange Yellow</div><div class="t" style="left:1296.0px;top:8.3px;font-size:15px;color:#fff;transform:scaleX(0.875);transform-origin:0 0;-webkit-text-stroke:0.35px #fff;">Blue</div><div class="t" style="left:1340.0px;top:8.3px;font-size:15px;color:#fff;transform:scaleX(0.875);transform-origin:0 0;-webkit-text-stroke:0.35px #fff;">Green</div><div class="t" style="left:1385.0px;top:8.3px;font-size:15px;color:#fff;transform:scaleX(0.875);transform-origin:0 0;-webkit-text-stroke:0.35px #fff;">Red</div><div class="t" style="left:1429.5px;top:8.3px;font-size:15px;color:#fff;transform:scaleX(0.875);transform-origin:0 0;-webkit-text-stroke:0.35px #fff;">Yellow</div><div class="t" style="left:1482.0px;top:8.3px;font-size:15px;color:#fff;transform:scaleX(0.875);transform-origin:0 0;-webkit-text-stroke:0.35px #fff;">Magenta</div><div class="t" style="left:1544.0px;top:8.3px;font-size:15px;color:#fff;transform:scaleX(0.875);transform-origin:0 0;-webkit-text-stroke:0.35px #fff;">Cyan</div><div class="a" style="left:0;top:30px;width:1550px;height:28px;background:#444"></div><div class="a" style="left:0;top:30px;width:13px;height:28px;background:linear-gradient(#303030,#202020)"></div><div class="t" style="left:16.5px;top:36.1px;font-size:17px;color:#f2f2f2;transform:scaleX(0.778);transform-origin:0 0;">x: CIE31</div><div class="t" style="left:120.0px;top:36.1px;font-size:17px;color:#f2f2f2;transform:scaleX(0.805);transform-origin:0 0;">0,25</div><div class="t" style="left:159.0px;top:36.1px;font-size:17px;color:#f2f2f2;transform:scaleX(0.805);transform-origin:0 0;">0,31</div><div class="t" style="left:213.7px;top:36.1px;font-size:17px;color:#f2f2f2;transform:scaleX(0.805);transform-origin:0 0;">0,31</div><div class="t" style="left:267.8px;top:36.1px;font-size:17px;color:#f2f2f2;transform:scaleX(0.805);transform-origin:0 0;">0,31</div><div class="t" style="left:322.5px;top:36.1px;font-size:17px;color:#f2f2f2;transform:scaleX(0.805);transform-origin:0 0;">0,31</div><div class="t" style="left:376.5px;top:36.1px;font-size:17px;color:#f2f2f2;transform:scaleX(0.805);transform-origin:0 0;">0,31</div><div class="t" style="left:429.0px;top:36.1px;font-size:17px;color:#f2f2f2;transform:scaleX(0.805);transform-origin:0 0;">0,42</div><div class="t" style="left:493.5px;top:36.1px;font-size:17px;color:#f2f2f2;transform:scaleX(0.805);transform-origin:0 0;">0,38</div><div class="t" style="left:559.0px;top:36.1px;font-size:17px;color:#f2f2f2;transform:scaleX(0.805);transform-origin:0 0;">0,24</div><div class="t" style="left:617.5px;top:36.1px;font-size:17px;color:#f2f2f2;transform:scaleX(0.805);transform-origin:0 0;">0,33</div><div class="t" style="left:668.0px;top:36.1px;font-size:17px;color:#f2f2f2;transform:scaleX(0.805);transform-origin:0 0;">0,27</div><div class="t" style="left:747.5px;top:36.1px;font-size:17px;color:#f2f2f2;transform:scaleX(0.805);transform-origin:0 0;">0,26</div><div class="t" style="left:832.5px;top:36.1px;font-size:17px;color:#f2f2f2;transform:scaleX(0.805);transform-origin:0 0;">0,53</div><div class="t" style="left:884.5px;top:36.1px;font-size:17px;color:#f2f2f2;transform:scaleX(0.805);transform-origin:0 0;">0,20</div><div class="t" style="left:972.0px;top:36.1px;font-size:17px;color:#f2f2f2;transform:scaleX(0.805);transform-origin:0 0;">0,51</div><div class="t" style="left:1066.5px;top:36.1px;font-size:17px;color:#f2f2f2;transform:scaleX(0.805);transform-origin:0 0;">0,26</div><div class="t" style="left:1113.5px;top:36.1px;font-size:17px;color:#f2f2f2;transform:scaleX(0.805);transform-origin:0 0;">0,38</div><div class="t" style="left:1201.0px;top:36.1px;font-size:17px;color:#f2f2f2;transform:scaleX(0.805);transform-origin:0 0;">0,48</div><div class="t" style="left:1296.0px;top:36.1px;font-size:17px;color:#f2f2f2;transform:scaleX(0.805);transform-origin:0 0;">0,18</div><div class="t" style="left:1340.0px;top:36.1px;font-size:17px;color:#f2f2f2;transform:scaleX(0.805);transform-origin:0 0;">0,31</div><div class="t" style="left:1385.0px;top:36.1px;font-size:17px;color:#f2f2f2;transform:scaleX(0.805);transform-origin:0 0;">0,56</div><div class="t" style="left:1429.5px;top:36.1px;font-size:17px;color:#f2f2f2;transform:scaleX(0.805);transform-origin:0 0;">0,45</div><div class="t" style="left:1482.0px;top:36.1px;font-size:17px;color:#f2f2f2;transform:scaleX(0.805);transform-origin:0 0;">0,37</div><div class="t" style="left:1544.0px;top:36.1px;font-size:17px;color:#f2f2f2;transform:scaleX(0.805);transform-origin:0 0;">0,22</div><div class="a" style="left:0;top:58px;width:1550px;height:28px;background:#808080"></div><div class="a" style="left:0;top:58px;width:13px;height:28px;background:linear-gradient(#3c3c3c,#2a2a2a)"></div><div class="t" style="left:16.5px;top:64.1px;font-size:17px;color:#f2f2f2;transform:scaleX(0.778);transform-origin:0 0;">y: CIE31</div><div class="t" style="left:120.0px;top:64.1px;font-size:17px;color:#f2f2f2;transform:scaleX(0.805);transform-origin:0 0;">0,23</div><div class="t" style="left:159.0px;top:64.1px;font-size:17px;color:#f2f2f2;transform:scaleX(0.805);transform-origin:0 0;">0,34</div><div class="t" style="left:213.7px;top:64.1px;font-size:17px;color:#f2f2f2;transform:scaleX(0.805);transform-origin:0 0;">0,33</div><div class="t" style="left:267.8px;top:64.1px;font-size:17px;color:#f2f2f2;transform:scaleX(0.805);transform-origin:0 0;">0,33</div><div class="t" style="left:322.5px;top:64.1px;font-size:17px;color:#f2f2f2;transform:scaleX(0.805);transform-origin:0 0;">0,33</div><div class="t" style="left:376.5px;top:64.1px;font-size:17px;color:#f2f2f2;transform:scaleX(0.805);transform-origin:0 0;">0,33</div><div class="t" style="left:429.0px;top:64.1px;font-size:17px;color:#f2f2f2;transform:scaleX(0.805);transform-origin:0 0;">0,37</div><div class="t" style="left:493.5px;top:64.1px;font-size:17px;color:#f2f2f2;transform:scaleX(0.805);transform-origin:0 0;">0,36</div><div class="t" style="left:559.0px;top:64.1px;font-size:17px;color:#f2f2f2;transform:scaleX(0.805);transform-origin:0 0;">0,26</div><div class="t" style="left:617.5px;top:64.1px;font-size:17px;color:#f2f2f2;transform:scaleX(0.805);transform-origin:0 0;">0,47</div><div class="t" style="left:668.0px;top:64.1px;font-size:17px;color:#f2f2f2;transform:scaleX(0.805);transform-origin:0 0;">0,26</div><div class="t" style="left:747.5px;top:64.1px;font-size:17px;color:#f2f2f2;transform:scaleX(0.805);transform-origin:0 0;">0,38</div><div class="t" style="left:832.5px;top:64.1px;font-size:17px;color:#f2f2f2;transform:scaleX(0.805);transform-origin:0 0;">0,41</div><div class="t" style="left:884.5px;top:64.1px;font-size:17px;color:#f2f2f2;transform:scaleX(0.805);transform-origin:0 0;">0,17</div><div class="t" style="left:972.0px;top:64.1px;font-size:17px;color:#f2f2f2;transform:scaleX(0.805);transform-origin:0 0;">0,32</div><div class="t" style="left:1066.5px;top:64.1px;font-size:17px;color:#f2f2f2;transform:scaleX(0.805);transform-origin:0 0;">0,18</div><div class="t" style="left:1113.5px;top:64.1px;font-size:17px;color:#f2f2f2;transform:scaleX(0.805);transform-origin:0 0;">0,53</div><div class="t" style="left:1201.0px;top:64.1px;font-size:17px;color:#f2f2f2;transform:scaleX(0.805);transform-origin:0 0;">0,45</div><div class="t" style="left:1296.0px;top:64.1px;font-size:17px;color:#f2f2f2;transform:scaleX(0.805);transform-origin:0 0;">0,12</div><div class="t" style="left:1340.0px;top:64.1px;font-size:17px;color:#f2f2f2;transform:scaleX(0.805);transform-origin:0 0;">0,55</div><div class="t" style="left:1385.0px;top:64.1px;font-size:17px;color:#f2f2f2;transform:scaleX(0.805);transform-origin:0 0;">0,31</div><div class="t" style="left:1429.5px;top:64.1px;font-size:17px;color:#f2f2f2;transform:scaleX(0.805);transform-origin:0 0;">0,48</div><div class="t" style="left:1482.0px;top:64.1px;font-size:17px;color:#f2f2f2;transform:scaleX(0.805);transform-origin:0 0;">0,21</div><div class="t" style="left:1544.0px;top:64.1px;font-size:17px;color:#f2f2f2;transform:scaleX(0.805);transform-origin:0 0;">0,30</div><div class="a" style="left:0;top:86px;width:1550px;height:28px;background:#444"></div><div class="a" style="left:0;top:86px;width:13px;height:28px;background:linear-gradient(#303030,#202020)"></div><div class="t" style="left:16.5px;top:92.1px;font-size:17px;color:#f2f2f2;transform:scaleX(0.758);transform-origin:0 0;">Y</div><div class="t" style="left:120.0px;top:92.1px;font-size:17px;color:#f2f2f2;transform:scaleX(0.805);transform-origin:0 0;">0,15</div><div class="t" style="left:159.0px;top:92.1px;font-size:17px;color:#f2f2f2;transform:scaleX(0.805);transform-origin:0 0;">58,42</div><div class="t" style="left:213.7px;top:92.1px;font-size:17px;color:#f2f2f2;transform:scaleX(0.805);transform-origin:0 0;">88,46</div><div class="t" style="left:267.8px;top:92.1px;font-size:17px;color:#f2f2f2;transform:scaleX(0.805);transform-origin:0 0;">117,98</div><div class="t" style="left:322.5px;top:92.1px;font-size:17px;color:#f2f2f2;transform:scaleX(0.805);transform-origin:0 0;">145,28</div><div class="t" style="left:376.5px;top:92.1px;font-size:17px;color:#f2f2f2;transform:scaleX(0.805);transform-origin:0 0;">186,21</div><div class="t" style="left:429.0px;top:92.1px;font-size:17px;color:#f2f2f2;transform:scaleX(0.805);transform-origin:0 0;">15,41</div><div class="t" style="left:493.5px;top:92.1px;font-size:17px;color:#f2f2f2;transform:scaleX(0.805);transform-origin:0 0;">62,68</div><div class="t" style="left:559.0px;top:92.1px;font-size:17px;color:#f2f2f2;transform:scaleX(0.805);transform-origin:0 0;">34,83</div><div class="t" style="left:617.5px;top:92.1px;font-size:17px;color:#f2f2f2;transform:scaleX(0.805);transform-origin:0 0;">23,75</div><div class="t" style="left:668.0px;top:92.1px;font-size:17px;color:#f2f2f2;transform:scaleX(0.805);transform-origin:0 0;">42,31</div><div class="t" style="left:747.5px;top:92.1px;font-size:17px;color:#f2f2f2;transform:scaleX(0.805);transform-origin:0 0;">88,22</div><div class="t" style="left:832.5px;top:92.1px;font-size:17px;color:#f2f2f2;transform:scaleX(0.805);transform-origin:0 0;">49,26</div><div class="t" style="left:884.5px;top:92.1px;font-size:17px;color:#f2f2f2;transform:scaleX(0.805);transform-origin:0 0;">22,82</div><div class="t" style="left:972.0px;top:92.1px;font-size:17px;color:#f2f2f2;transform:scaleX(0.805);transform-origin:0 0;">34,69</div><div class="t" style="left:1066.5px;top:92.1px;font-size:17px;color:#f2f2f2;transform:scaleX(0.805);transform-origin:0 0;">8,73</div><div class="t" style="left:1113.5px;top:92.1px;font-size:17px;color:#f2f2f2;transform:scaleX(0.805);transform-origin:0 0;">98,54</div><div class="t" style="left:1201.0px;top:92.1px;font-size:17px;color:#f2f2f2;transform:scaleX(0.805);transform-origin:0 0;">73,31</div><div class="t" style="left:1296.0px;top:92.1px;font-size:17px;color:#f2f2f2;transform:scaleX(0.805);transform-origin:0 0;">10,82</div><div class="t" style="left:1340.0px;top:92.1px;font-size:17px;color:#f2f2f2;transform:scaleX(0.805);transform-origin:0 0;">54,60</div><div class="t" style="left:1385.0px;top:92.1px;font-size:17px;color:#f2f2f2;transform:scaleX(0.805);transform-origin:0 0;">22,18</div><div class="t" style="left:1429.5px;top:92.1px;font-size:17px;color:#f2f2f2;transform:scaleX(0.805);transform-origin:0 0;">99,22</div><div class="t" style="left:1482.0px;top:92.1px;font-size:17px;color:#f2f2f2;transform:scaleX(0.805);transform-origin:0 0;">32,20</div><div class="t" style="left:1544.0px;top:92.1px;font-size:17px;color:#f2f2f2;transform:scaleX(0.805);transform-origin:0 0;">42,68</div><div class="a" style="left:0;top:114px;width:1550px;height:28px;background:#808080"></div><div class="a" style="left:0;top:114px;width:13px;height:28px;background:linear-gradient(#3c3c3c,#2a2a2a)"></div><div class="t" style="left:16.5px;top:120.1px;font-size:17px;color:#f2f2f2;transform:scaleX(0.827);transform-origin:0 0;">Target x:CIE31</div><div class="t" style="left:120.0px;top:120.1px;font-size:17px;color:#f2f2f2;transform:scaleX(0.805);transform-origin:0 0;">0,31</div><div class="t" style="left:159.0px;top:120.1px;font-size:17px;color:#f2f2f2;transform:scaleX(0.805);transform-origin:0 0;">0,31</div><div class="t" style="left:213.7px;top:120.1px;font-size:17px;color:#f2f2f2;transform:scaleX(0.805);transform-origin:0 0;">0,31</div><div class="t" style="left:267.8px;top:120.1px;font-size:17px;color:#f2f2f2;transform:scaleX(0.805);transform-origin:0 0;">0,31</div><div class="t" style="left:322.5px;top:120.1px;font-size:17px;color:#f2f2f2;transform:scaleX(0.805);transform-origin:0 0;">0,31</div><div class="t" style="left:376.5px;top:120.1px;font-size:17px;color:#f2f2f2;transform:scaleX(0.805);transform-origin:0 0;">0,31</div><div class="t" style="left:429.0px;top:120.1px;font-size:17px;color:#f2f2f2;transform:scaleX(0.805);transform-origin:0 0;">0,40</div><div class="t" style="left:493.5px;top:120.1px;font-size:17px;color:#f2f2f2;transform:scaleX(0.805);transform-origin:0 0;">0,38</div><div class="t" style="left:559.0px;top:120.1px;font-size:17px;color:#f2f2f2;transform:scaleX(0.805);transform-origin:0 0;">0,25</div><div class="t" style="left:617.5px;top:120.1px;font-size:17px;color:#f2f2f2;transform:scaleX(0.805);transform-origin:0 0;">0,34</div><div class="t" style="left:668.0px;top:120.1px;font-size:17px;color:#f2f2f2;transform:scaleX(0.805);transform-origin:0 0;">0,27</div><div class="t" style="left:747.5px;top:120.1px;font-size:17px;color:#f2f2f2;transform:scaleX(0.805);transform-origin:0 0;">0,26</div><div class="t" style="left:832.5px;top:120.1px;font-size:17px;color:#f2f2f2;transform:scaleX(0.805);transform-origin:0 0;">0,51</div><div class="t" style="left:884.5px;top:120.1px;font-size:17px;color:#f2f2f2;transform:scaleX(0.805);transform-origin:0 0;">0,22</div><div class="t" style="left:972.0px;top:120.1px;font-size:17px;color:#f2f2f2;transform:scaleX(0.805);transform-origin:0 0;">0,46</div><div class="t" style="left:1066.5px;top:120.1px;font-size:17px;color:#f2f2f2;transform:scaleX(0.805);transform-origin:0 0;">0,29</div><div class="t" style="left:1113.5px;top:120.1px;font-size:17px;color:#f2f2f2;transform:scaleX(0.805);transform-origin:0 0;">0,38</div><div class="t" style="left:1201.0px;top:120.1px;font-size:17px;color:#f2f2f2;transform:scaleX(0.805);transform-origin:0 0;">0,47</div><div class="t" style="left:1296.0px;top:120.1px;font-size:17px;color:#f2f2f2;transform:scaleX(0.805);transform-origin:0 0;">0,19</div><div class="t" style="left:1340.0px;top:120.1px;font-size:17px;color:#f2f2f2;transform:scaleX(0.805);transform-origin:0 0;">0,31</div><div class="t" style="left:1385.0px;top:120.1px;font-size:17px;color:#f2f2f2;transform:scaleX(0.805);transform-origin:0 0;">0,54</div><div class="t" style="left:1429.5px;top:120.1px;font-size:17px;color:#f2f2f2;transform:scaleX(0.805);transform-origin:0 0;">0,45</div><div class="t" style="left:1482.0px;top:120.1px;font-size:17px;color:#f2f2f2;transform:scaleX(0.805);transform-origin:0 0;">0,37</div><div class="t" style="left:1544.0px;top:120.1px;font-size:17px;color:#f2f2f2;transform:scaleX(0.805);transform-origin:0 0;">0,20</div><div class="a" style="left:0;top:142px;width:1550px;height:28px;background:#444"></div><div class="a" style="left:0;top:142px;width:13px;height:28px;background:linear-gradient(#303030,#202020)"></div><div class="t" style="left:16.5px;top:148.1px;font-size:17px;color:#f2f2f2;transform:scaleX(0.827);transform-origin:0 0;">Target y:CIE31</div><div class="t" style="left:120.0px;top:148.1px;font-size:17px;color:#f2f2f2;transform:scaleX(0.805);transform-origin:0 0;">0,33</div><div class="t" style="left:159.0px;top:148.1px;font-size:17px;color:#f2f2f2;transform:scaleX(0.805);transform-origin:0 0;">0,33</div><div class="t" style="left:213.7px;top:148.1px;font-size:17px;color:#f2f2f2;transform:scaleX(0.805);transform-origin:0 0;">0,33</div><div class="t" style="left:267.8px;top:148.1px;font-size:17px;color:#f2f2f2;transform:scaleX(0.805);transform-origin:0 0;">0,33</div><div class="t" style="left:322.5px;top:148.1px;font-size:17px;color:#f2f2f2;transform:scaleX(0.805);transform-origin:0 0;">0,33</div><div class="t" style="left:376.5px;top:148.1px;font-size:17px;color:#f2f2f2;transform:scaleX(0.805);transform-origin:0 0;">0,33</div><div class="t" style="left:429.0px;top:148.1px;font-size:17px;color:#f2f2f2;transform:scaleX(0.805);transform-origin:0 0;">0,36</div><div class="t" style="left:493.5px;top:148.1px;font-size:17px;color:#f2f2f2;transform:scaleX(0.805);transform-origin:0 0;">0,36</div><div class="t" style="left:559.0px;top:148.1px;font-size:17px;color:#f2f2f2;transform:scaleX(0.805);transform-origin:0 0;">0,27</div><div class="t" style="left:617.5px;top:148.1px;font-size:17px;color:#f2f2f2;transform:scaleX(0.805);transform-origin:0 0;">0,43</div><div class="t" style="left:668.0px;top:148.1px;font-size:17px;color:#f2f2f2;transform:scaleX(0.805);transform-origin:0 0;">0,25</div><div class="t" style="left:747.5px;top:148.1px;font-size:17px;color:#f2f2f2;transform:scaleX(0.805);transform-origin:0 0;">0,36</div><div class="t" style="left:832.5px;top:148.1px;font-size:17px;color:#f2f2f2;transform:scaleX(0.805);transform-origin:0 0;">0,41</div><div class="t" style="left:884.5px;top:148.1px;font-size:17px;color:#f2f2f2;transform:scaleX(0.805);transform-origin:0 0;">0,19</div><div class="t" style="left:972.0px;top:148.1px;font-size:17px;color:#f2f2f2;transform:scaleX(0.805);transform-origin:0 0;">0,31</div><div class="t" style="left:1066.5px;top:148.1px;font-size:17px;color:#f2f2f2;transform:scaleX(0.805);transform-origin:0 0;">0,22</div><div class="t" style="left:1113.5px;top:148.1px;font-size:17px;color:#f2f2f2;transform:scaleX(0.805);transform-origin:0 0;">0,49</div><div class="t" style="left:1201.0px;top:148.1px;font-size:17px;color:#f2f2f2;transform:scaleX(0.805);transform-origin:0 0;">0,44</div><div class="t" style="left:1296.0px;top:148.1px;font-size:17px;color:#f2f2f2;transform:scaleX(0.805);transform-origin:0 0;">0,14</div><div class="t" style="left:1340.0px;top:148.1px;font-size:17px;color:#f2f2f2;transform:scaleX(0.805);transform-origin:0 0;">0,49</div><div class="t" style="left:1385.0px;top:148.1px;font-size:17px;color:#f2f2f2;transform:scaleX(0.805);transform-origin:0 0;">0,32</div><div class="t" style="left:1429.5px;top:148.1px;font-size:17px;color:#f2f2f2;transform:scaleX(0.805);transform-origin:0 0;">0,47</div><div class="t" style="left:1482.0px;top:148.1px;font-size:17px;color:#f2f2f2;transform:scaleX(0.805);transform-origin:0 0;">0,25</div><div class="t" style="left:1544.0px;top:148.1px;font-size:17px;color:#f2f2f2;transform:scaleX(0.805);transform-origin:0 0;">0,27</div><div class="a" style="left:0;top:170px;width:1550px;height:28px;background:#808080"></div><div class="a" style="left:0;top:170px;width:13px;height:28px;background:linear-gradient(#3c3c3c,#2a2a2a)"></div><div class="t" style="left:16.5px;top:176.1px;font-size:17px;color:#f2f2f2;transform:scaleX(0.857);transform-origin:0 0;">Target Y</div><div class="t" style="left:120.0px;top:176.1px;font-size:17px;color:#f2f2f2;transform:scaleX(0.805);transform-origin:0 0;">0,00</div><div class="t" style="left:159.0px;top:176.1px;font-size:17px;color:#f2f2f2;transform:scaleX(0.805);transform-origin:0 0;">63,67</div><div class="t" style="left:213.7px;top:176.1px;font-size:17px;color:#f2f2f2;transform:scaleX(0.805);transform-origin:0 0;">91,43</div><div class="t" style="left:267.8px;top:176.1px;font-size:17px;color:#f2f2f2;transform:scaleX(0.805);transform-origin:0 0;">118,72</div><div class="t" style="left:322.5px;top:176.1px;font-size:17px;color:#f2f2f2;transform:scaleX(0.805);transform-origin:0 0;">147,34</div><div class="t" style="left:376.5px;top:176.1px;font-size:17px;color:#f2f2f2;transform:scaleX(0.805);transform-origin:0 0;">186,21</div><div class="t" style="left:429.0px;top:176.1px;font-size:17px;color:#f2f2f2;transform:scaleX(0.805);transform-origin:0 0;">18,76</div><div class="t" style="left:493.5px;top:176.1px;font-size:17px;color:#f2f2f2;transform:scaleX(0.805);transform-origin:0 0;">64,98</div><div class="t" style="left:559.0px;top:176.1px;font-size:17px;color:#f2f2f2;transform:scaleX(0.805);transform-origin:0 0;">34,82</div><div class="t" style="left:617.5px;top:176.1px;font-size:17px;color:#f2f2f2;transform:scaleX(0.805);transform-origin:0 0;">24,27</div><div class="t" style="left:668.0px;top:176.1px;font-size:17px;color:#f2f2f2;transform:scaleX(0.805);transform-origin:0 0;">43,42</div><div class="t" style="left:747.5px;top:176.1px;font-size:17px;color:#f2f2f2;transform:scaleX(0.805);transform-origin:0 0;">77,97</div><div class="t" style="left:832.5px;top:176.1px;font-size:17px;color:#f2f2f2;transform:scaleX(0.805);transform-origin:0 0;">52,78</div><div class="t" style="left:884.5px;top:176.1px;font-size:17px;color:#f2f2f2;transform:scaleX(0.805);transform-origin:0 0;">21,89</div><div class="t" style="left:972.0px;top:176.1px;font-size:17px;color:#f2f2f2;transform:scaleX(0.805);transform-origin:0 0;">34,77</div><div class="t" style="left:1066.5px;top:176.1px;font-size:17px;color:#f2f2f2;transform:scaleX(0.805);transform-origin:0 0;">12,43</div><div class="t" style="left:1113.5px;top:176.1px;font-size:17px;color:#f2f2f2;transform:scaleX(0.805);transform-origin:0 0;">79,62</div><div class="t" style="left:1201.0px;top:176.1px;font-size:17px;color:#f2f2f2;transform:scaleX(0.805);transform-origin:0 0;">79,16</div><div class="t" style="left:1296.0px;top:176.1px;font-size:17px;color:#f2f2f2;transform:scaleX(0.805);transform-origin:0 0;">11,62</div><div class="t" style="left:1340.0px;top:176.1px;font-size:17px;color:#f2f2f2;transform:scaleX(0.805);transform-origin:0 0;">42,78</div><div class="t" style="left:1385.0px;top:176.1px;font-size:17px;color:#f2f2f2;transform:scaleX(0.805);transform-origin:0 0;">21,71</div><div class="t" style="left:1429.5px;top:176.1px;font-size:17px;color:#f2f2f2;transform:scaleX(0.805);transform-origin:0 0;">109,79</div><div class="t" style="left:1482.0px;top:176.1px;font-size:17px;color:#f2f2f2;transform:scaleX(0.805);transform-origin:0 0;">35,05</div><div class="t" style="left:1544.0px;top:176.1px;font-size:17px;color:#f2f2f2;transform:scaleX(0.805);transform-origin:0 0;">35,88</div><div class="a" style="left:0;top:198px;width:1550px;height:28px;background:#444"></div><div class="a" style="left:0;top:198px;width:13px;height:28px;background:linear-gradient(#303030,#202020)"></div><div class="t" style="left:16.5px;top:204.1px;font-size:17px;color:#f2f2f2;transform:scaleX(0.812);transform-origin:0 0;">ΔE 2000</div><div class="t" style="left:120.0px;top:204.1px;font-size:17px;color:#f2f2f2;transform:scaleX(0.805);transform-origin:0 0;">1,54</div><div class="t" style="left:159.0px;top:204.1px;font-size:17px;color:#f2f2f2;transform:scaleX(0.805);transform-origin:0 0;">6,13</div><div class="t" style="left:213.7px;top:204.1px;font-size:17px;color:#f2f2f2;transform:scaleX(0.805);transform-origin:0 0;">2,88</div><div class="t" style="left:267.8px;top:204.1px;font-size:17px;color:#f2f2f2;transform:scaleX(0.805);transform-origin:0 0;">2,68</div><div class="t" style="left:322.5px;top:204.1px;font-size:17px;color:#f2f2f2;transform:scaleX(0.805);transform-origin:0 0;">6,57</div><div class="t" style="left:376.5px;top:204.1px;font-size:17px;color:#f2f2f2;transform:scaleX(0.805);transform-origin:0 0;">5,50</div><div class="t" style="left:429.0px;top:204.1px;font-size:17px;color:#f2f2f2;transform:scaleX(0.805);transform-origin:0 0;">3,34</div><div class="t" style="left:493.5px;top:204.1px;font-size:17px;color:#f2f2f2;transform:scaleX(0.805);transform-origin:0 0;">1,26</div><div class="t" style="left:559.0px;top:204.1px;font-size:17px;color:#f2f2f2;transform:scaleX(0.805);transform-origin:0 0;">3,72</div><div class="t" style="left:617.5px;top:204.1px;font-size:17px;color:#f2f2f2;transform:scaleX(0.805);transform-origin:0 0;">4,62</div><div class="t" style="left:668.0px;top:204.1px;font-size:17px;color:#f2f2f2;transform:scaleX(0.805);transform-origin:0 0;">2,29</div><div class="t" style="left:747.5px;top:204.1px;font-size:17px;color:#f2f2f2;transform:scaleX(0.805);transform-origin:0 0;">4,42</div><div class="t" style="left:832.5px;top:204.1px;font-size:17px;color:#f2f2f2;transform:scaleX(0.805);transform-origin:0 0;">2,32</div><div class="t" style="left:884.5px;top:204.1px;font-size:17px;color:#f2f2f2;transform:scaleX(0.805);transform-origin:0 0;">2,97</div><div class="t" style="left:972.0px;top:204.1px;font-size:17px;color:#f2f2f2;transform:scaleX(0.805);transform-origin:0 0;">4,40</div><div class="t" style="left:1066.5px;top:204.1px;font-size:17px;color:#f2f2f2;transform:scaleX(0.805);transform-origin:0 0;">5,48</div><div class="t" style="left:1113.5px;top:204.1px;font-size:17px;color:#f2f2f2;transform:scaleX(0.805);transform-origin:0 0;">6,61</div><div class="t" style="left:1201.0px;top:204.1px;font-size:17px;color:#f2f2f2;transform:scaleX(0.805);transform-origin:0 0;">2,79</div><div class="t" style="left:1296.0px;top:204.1px;font-size:17px;color:#f2f2f2;transform:scaleX(0.805);transform-origin:0 0;">3,52</div><div class="t" style="left:1340.0px;top:204.1px;font-size:17px;color:#f2f2f2;transform:scaleX(0.805);transform-origin:0 0;">7,87</div><div class="t" style="left:1385.0px;top:204.1px;font-size:17px;color:#f2f2f2;transform:scaleX(0.805);transform-origin:0 0;">2,06</div><div class="t" style="left:1429.5px;top:204.1px;font-size:17px;color:#f2f2f2;transform:scaleX(0.805);transform-origin:0 0;">2,35</div><div class="t" style="left:1482.0px;top:204.1px;font-size:17px;color:#f2f2f2;transform:scaleX(0.805);transform-origin:0 0;">5,79</div><div class="t" style="left:1544.0px;top:204.1px;font-size:17px;color:#f2f2f2;transform:scaleX(0.805);transform-origin:0 0;">7,54</div><div class="a" style="left:13px;top:227px;width:1537px;height:18px;background:#585858"></div><div class="a" style="left:30px;top:228.5px;width:1466px;height:15px;border-radius:7.5px;background:#444"></div><div class="a" style="left:14.0px;top:228px;width:12.5px;height:15.6px;background:#8a8a8a;border:1px solid #a4a4a4;box-sizing:border-box;border-radius:3px"></div><div class="a" style="left:1533.0px;top:228px;width:12.5px;height:15.6px;background:#8a8a8a;border:1px solid #a4a4a4;box-sizing:border-box;border-radius:3px"></div></div><svg width="1920" height="1048"><path d="M393.5 958.800v10.400l-5.5-5.200z" fill="#444"/><path d="M1906.5 958.800v10.400l5.5-5.200z" fill="#444"/></svg>
<div class="a" style="left:1.5px;top:978px;width:64px;height:61.3px;border-radius:5px;box-sizing:border-box;border:1px solid #a0a0a0;background:linear-gradient(#909090,#7c7c7c 50%,#6a6a6a)"></div><div class="a" style="left:6.5px;top:982.5px;width:54px;height:25px;border-radius:4px;box-sizing:border-box;border:1.5px solid rgba(255,255,255,.38);background:#000000"></div><div class="t" style="left:19.6px;top:1012.7px;font-size:11px;font-weight:bold;letter-spacing:-0.3px;color:#3c3c3c">Black</div><div class="a" style="left:68.0px;top:978px;width:64px;height:61.3px;border-radius:5px;box-sizing:border-box;border:1px solid #a0a0a0;background:linear-gradient(#909090,#7c7c7c 50%,#6a6a6a)"></div><div class="a" style="left:73.0px;top:982.5px;width:54px;height:25px;border-radius:4px;box-sizing:border-box;border:1.5px solid rgba(255,255,255,.38);background:#595959"></div><div class="t" style="left:80.8px;top:1012.7px;font-size:11px;font-weight:bold;letter-spacing:-0.3px;color:#3c3c3c">Gray 35</div><div class="a" style="left:134.4px;top:978px;width:64px;height:61.3px;border-radius:5px;box-sizing:border-box;border:1px solid #a0a0a0;background:linear-gradient(#909090,#7c7c7c 50%,#6a6a6a)"></div><div class="a" style="left:139.4px;top:982.5px;width:54px;height:25px;border-radius:4px;box-sizing:border-box;border:1.5px solid rgba(255,255,255,.38);background:#808080"></div><div class="t" style="left:147.3px;top:1012.7px;font-size:11px;font-weight:bold;letter-spacing:-0.3px;color:#3c3c3c">Gray 50</div><div class="a" style="left:200.9px;top:978px;width:64px;height:61.3px;border-radius:5px;box-sizing:border-box;border:1px solid #a0a0a0;background:linear-gradient(#909090,#7c7c7c 50%,#6a6a6a)"></div><div class="a" style="left:205.9px;top:982.5px;width:54px;height:25px;border-radius:4px;box-sizing:border-box;border:1.5px solid rgba(255,255,255,.38);background:#a6a6a6"></div><div class="t" style="left:213.7px;top:1012.7px;font-size:11px;font-weight:bold;letter-spacing:-0.3px;color:#3c3c3c">Gray 65</div><div class="a" style="left:267.4px;top:978px;width:64px;height:61.3px;border-radius:5px;box-sizing:border-box;border:1px solid #a0a0a0;background:linear-gradient(#909090,#7c7c7c 50%,#6a6a6a)"></div><div class="a" style="left:272.4px;top:982.5px;width:54px;height:25px;border-radius:4px;box-sizing:border-box;border:1.5px solid rgba(255,255,255,.38);background:#cccccc"></div><div class="t" style="left:280.2px;top:1012.7px;font-size:11px;font-weight:bold;letter-spacing:-0.3px;color:#3c3c3c">Gray 80</div><div class="a" style="left:333.9px;top:978px;width:64px;height:61.3px;border-radius:5px;box-sizing:border-box;border:1px solid #a0a0a0;background:linear-gradient(#909090,#7c7c7c 50%,#6a6a6a)"></div><div class="a" style="left:338.9px;top:982.5px;width:54px;height:25px;border-radius:4px;box-sizing:border-box;border:1.5px solid rgba(255,255,255,.38);background:#ffffff"></div><div class="t" style="left:351.6px;top:1012.7px;font-size:11px;font-weight:bold;letter-spacing:-0.3px;color:#3c3c3c">White</div><div class="a" style="left:400.3px;top:978px;width:64px;height:61.3px;border-radius:5px;box-sizing:border-box;border:1px solid #a0a0a0;background:linear-gradient(#909090,#7c7c7c 50%,#6a6a6a)"></div><div class="a" style="left:405.3px;top:982.5px;width:54px;height:25px;border-radius:4px;box-sizing:border-box;border:1.5px solid rgba(255,255,255,.38);background:#735244"></div><div class="t" style="left:408.2px;top:1012.7px;font-size:11px;font-weight:bold;letter-spacing:-0.3px;color:#3c3c3c">Dark Skin</div><div class="a" style="left:466.8px;top:978px;width:64px;height:61.3px;border-radius:5px;box-sizing:border-box;border:1px solid #a0a0a0;background:linear-gradient(#909090,#7c7c7c 50%,#6a6a6a)"></div><div class="a" style="left:471.8px;top:982.5px;width:54px;height:25px;border-radius:4px;box-sizing:border-box;border:1.5px solid rgba(255,255,255,.38);background:#c29682"></div><div class="t" style="left:473.5px;top:1012.7px;font-size:11px;font-weight:bold;letter-spacing:-0.3px;color:#3c3c3c">Light Skin</div><div class="a" style="left:533.3px;top:978px;width:64px;height:61.3px;border-radius:5px;box-sizing:border-box;border:1px solid #a0a0a0;background:linear-gradient(#909090,#7c7c7c 50%,#6a6a6a)"></div><div class="a" style="left:538.3px;top:982.5px;width:54px;height:25px;border-radius:4px;box-sizing:border-box;border:1.5px solid rgba(255,255,255,.38);background:#627a9d"></div><div class="t" style="left:543.2px;top:1012.7px;font-size:11px;font-weight:bold;letter-spacing:-0.3px;color:#3c3c3c">Blue Sky</div><div class="a" style="left:599.7px;top:978px;width:64px;height:61.3px;border-radius:5px;box-sizing:border-box;border:1px solid #a0a0a0;background:linear-gradient(#909090,#7c7c7c 50%,#6a6a6a)"></div><div class="a" style="left:604.7px;top:982.5px;width:54px;height:25px;border-radius:4px;box-sizing:border-box;border:1.5px solid rgba(255,255,255,.38);background:#576c43"></div><div class="t" style="left:613.4px;top:1012.7px;font-size:11px;font-weight:bold;letter-spacing:-0.3px;color:#3c3c3c">Foliage</div><div class="a" style="left:666.2px;top:978px;width:64px;height:61.3px;border-radius:5px;box-sizing:border-box;border:1px solid #a0a0a0;background:linear-gradient(#909090,#7c7c7c 50%,#6a6a6a)"></div><div class="a" style="left:671.2px;top:982.5px;width:54px;height:25px;border-radius:4px;box-sizing:border-box;border:1.5px solid rgba(255,255,255,.38);background:#8580b1"></div><div class="t" style="left:668.6px;top:1012.7px;font-size:11px;font-weight:bold;letter-spacing:-0.3px;color:#3c3c3c">Blue Flower</div><div class="a" style="left:732.7px;top:978px;width:64px;height:61.3px;border-radius:5px;box-sizing:border-box;border:1px solid #a0a0a0;background:linear-gradient(#909090,#7c7c7c 50%,#6a6a6a)"></div><div class="a" style="left:737.7px;top:982.5px;width:54px;height:25px;border-radius:4px;box-sizing:border-box;border:1.5px solid rgba(255,255,255,.38);background:#67bdaa"></div><div class="t" style="left:732.2px;top:1012.7px;font-size:11px;font-weight:bold;letter-spacing:-0.3px;color:#3c3c3c">Bluish Green</div><div class="a" style="left:799.1px;top:978px;width:64px;height:61.3px;border-radius:5px;box-sizing:border-box;border:1px solid #a0a0a0;background:linear-gradient(#909090,#7c7c7c 50%,#6a6a6a)"></div><div class="a" style="left:804.1px;top:982.5px;width:54px;height:25px;border-radius:4px;box-sizing:border-box;border:1.5px solid rgba(255,255,255,.38);background:#d67e2c"></div><div class="t" style="left:812.8px;top:1012.7px;font-size:11px;font-weight:bold;letter-spacing:-0.3px;color:#3c3c3c">Orange</div><div class="a" style="left:865.6px;top:978px;width:64px;height:61.3px;border-radius:5px;box-sizing:border-box;border:1px solid #a0a0a0;background:linear-gradient(#909090,#7c7c7c 50%,#6a6a6a)"></div><div class="a" style="left:870.6px;top:982.5px;width:54px;height:25px;border-radius:4px;box-sizing:border-box;border:1.5px solid rgba(255,255,255,.38);background:#505ba6"></div><div class="t" style="left:876.7px;top:1012.7px;font-size:11px;font-weight:bold;letter-spacing:-0.3px;color:#3c3c3c">Purplish</div><div class="t" style="left:876.7px;top:1024.7px;font-size:11px;font-weight:bold;letter-spacing:-0.3px;color:#3c3c3c">Blue</div><div class="a" style="left:932.1px;top:978px;width:64px;height:61.3px;border-radius:5px;box-sizing:border-box;border:1px solid #a0a0a0;background:linear-gradient(#909090,#7c7c7c 50%,#6a6a6a)"></div><div class="a" style="left:937.1px;top:982.5px;width:54px;height:25px;border-radius:4px;box-sizing:border-box;border:1.5px solid rgba(255,255,255,.38);background:#c15a63"></div><div class="t" style="left:940.9px;top:1012.7px;font-size:11px;font-weight:bold;letter-spacing:-0.3px;color:#3c3c3c">Moderate</div><div class="t" style="left:940.9px;top:1024.7px;font-size:11px;font-weight:bold;letter-spacing:-0.3px;color:#3c3c3c">Red</div><div class="a" style="left:998.5px;top:978px;width:64px;height:61.3px;border-radius:5px;box-sizing:border-box;border:1px solid #a0a0a0;background:linear-gradient(#909090,#7c7c7c 50%,#6a6a6a)"></div><div class="a" style="left:1003.5px;top:982.5px;width:54px;height:25px;border-radius:4px;box-sizing:border-box;border:1.5px solid rgba(255,255,255,.38);background:#5e3c6c"></div><div class="t" style="left:1014.3px;top:1012.7px;font-size:11px;font-weight:bold;letter-spacing:-0.3px;color:#3c3c3c">Purple</div><div class="a" style="left:1065.0px;top:978px;width:64px;height:61.3px;border-radius:5px;box-sizing:border-box;border:1px solid #a0a0a0;background:linear-gradient(#909090,#7c7c7c 50%,#6a6a6a)"></div><div class="a" style="left:1070.0px;top:982.5px;width:54px;height:25px;border-radius:4px;box-sizing:border-box;border:1.5px solid rgba(255,255,255,.38);background:#9dbc40"></div><div class="t" style="left:1080.8px;top:1012.7px;font-size:11px;font-weight:bold;letter-spacing:-0.3px;color:#3c3c3c">Yellow</div><div class="t" style="left:1080.8px;top:1024.7px;font-size:11px;font-weight:bold;letter-spacing:-0.3px;color:#3c3c3c">Green</div><div class="a" style="left:1131.5px;top:978px;width:64px;height:61.3px;border-radius:5px;box-sizing:border-box;border:1px solid #a0a0a0;background:linear-gradient(#909090,#7c7c7c 50%,#6a6a6a)"></div><div class="a" style="left:1136.5px;top:982.5px;width:54px;height:25px;border-radius:4px;box-sizing:border-box;border:1.5px solid rgba(255,255,255,.38);background:#e0a32e"></div><div class="t" style="left:1145.2px;top:1012.7px;font-size:11px;font-weight:bold;letter-spacing:-0.3px;color:#3c3c3c">Orange</div><div class="t" style="left:1145.2px;top:1024.7px;font-size:11px;font-weight:bold;letter-spacing:-0.3px;color:#3c3c3c">Yellow</div><div class="a" style="left:1198.0px;top:978px;width:64px;height:61.3px;border-radius:5px;box-sizing:border-box;border:1px solid #a0a0a0;background:linear-gradient(#909090,#7c7c7c 50%,#6a6a6a)"></div><div class="a" style="left:1203.0px;top:982.5px;width:54px;height:25px;border-radius:4px;box-sizing:border-box;border:1.5px solid rgba(255,255,255,.38);background:#383d96"></div><div class="t" style="left:1218.6px;top:1012.7px;font-size:11px;font-weight:bold;letter-spacing:-0.3px;color:#3c3c3c">Blue</div><div class="a" style="left:1264.4px;top:978px;width:64px;height:61.3px;border-radius:5px;box-sizing:border-box;border:1px solid #a0a0a0;background:linear-gradient(#909090,#7c7c7c 50%,#6a6a6a)"></div><div class="a" style="left:1269.4px;top:982.5px;width:54px;height:25px;border-radius:4px;box-sizing:border-box;border:1.5px solid rgba(255,255,255,.38);background:#469449"></div><div class="t" style="left:1281.3px;top:1012.7px;font-size:11px;font-weight:bold;letter-spacing:-0.3px;color:#3c3c3c">Green</div><div class="a" style="left:1330.9px;top:978px;width:64px;height:61.3px;border-radius:5px;box-sizing:border-box;border:1px solid #a0a0a0;background:linear-gradient(#909090,#7c7c7c 50%,#6a6a6a)"></div><div class="a" style="left:1335.9px;top:982.5px;width:54px;height:25px;border-radius:4px;box-sizing:border-box;border:1.5px solid rgba(255,255,255,.38);background:#af363c"></div><div class="t" style="left:1353.0px;top:1012.7px;font-size:11px;font-weight:bold;letter-spacing:-0.3px;color:#3c3c3c">Red</div><div class="a" style="left:1397.4px;top:978px;width:64px;height:61.3px;border-radius:5px;box-sizing:border-box;border:1px solid #a0a0a0;background:linear-gradient(#909090,#7c7c7c 50%,#6a6a6a)"></div><div class="a" style="left:1402.4px;top:982.5px;width:54px;height:25px;border-radius:4px;box-sizing:border-box;border:1.5px solid rgba(255,255,255,.38);background:#e7c71f"></div><div class="t" style="left:1413.1px;top:1012.7px;font-size:11px;font-weight:bold;letter-spacing:-0.3px;color:#3c3c3c">Yellow</div><div class="a" style="left:1463.8px;top:978px;width:64px;height:61.3px;border-radius:5px;box-sizing:border-box;border:1px solid #a0a0a0;background:linear-gradient(#909090,#7c7c7c 50%,#6a6a6a)"></div><div class="a" style="left:1468.8px;top:982.5px;width:54px;height:25px;border-radius:4px;box-sizing:border-box;border:1.5px solid rgba(255,255,255,.38);background:#bb5695"></div><div class="t" style="left:1474.6px;top:1012.7px;font-size:11px;font-weight:bold;letter-spacing:-0.3px;color:#3c3c3c">Magenta</div><div class="a" style="left:1530.3px;top:978px;width:64px;height:61.3px;border-radius:5px;box-sizing:border-box;border:1px solid #6a6a6a;background:linear-gradient(#5a5a5a,#3a3a3a)"></div><div class="a" style="left:1535.3px;top:982.5px;width:54px;height:25px;border-radius:4px;box-sizing:border-box;border:1.5px solid rgba(255,255,255,.38);background:#0885a1"></div><div class="t" style="left:1549.5px;top:1012.7px;font-size:11px;font-weight:bold;letter-spacing:-0.3px;color:#fff">Cyan</div><div class="a" style="left:1597px;top:978px;width:48px;height:18px;border-radius:4px 4px 0 0;background:linear-gradient(#9a9a9a,#7a7a7a 50%,#666)"></div><div class="a" style="left:1612px;top:980px;width:17px;height:14px;border-radius:50%;background:linear-gradient(#666,#999)"></div><div class="a" style="left:1597px;top:997px;width:48px;height:42px;border-radius:0 0 4px 4px;background:linear-gradient(#9a9a9a,#7a7a7a 50%,#666)"></div><div class="a" style="left:1605px;top:1002.5px;width:32px;height:32px;box-sizing:border-box;border:2px solid #0c0c0c;border-radius:5px;background:linear-gradient(#b4b4b4,#8c8c8c);box-shadow:0 0 0 1px #c4c4c4"></div><div class="a" style="left:1613.5px;top:1011px;width:15px;height:15px;background:linear-gradient(#262626 50%,#000 50%)"></div><div class="a" style="left:1646.4px;top:978px;width:46.2px;height:30px;background:linear-gradient(#9a9a9a,#7a7a7a 50%,#666);box-shadow:inset -1px 0 0 #4a4a4a"></div><div class="a" style="left:1659.0px;top:982.5px;width:21px;height:21px;border-radius:50%;background:linear-gradient(#6a6a6a,#a8a8a8)"></div><div class="a" style="left:1692.6px;top:978px;width:45.2px;height:30px;background:linear-gradient(#9a9a9a,#7a7a7a 50%,#666);box-shadow:inset -1px 0 0 #4a4a4a"></div><div class="a" style="left:1704.7px;top:982.5px;width:21px;height:21px;border-radius:50%;background:linear-gradient(#6a6a6a,#a8a8a8)"></div><div class="a" style="left:1737.8px;top:978px;width:44.6px;height:30px;background:linear-gradient(#9a9a9a,#7a7a7a 50%,#666);box-shadow:inset -1px 0 0 #4a4a4a"></div><div class="a" style="left:1749.6px;top:982.5px;width:21px;height:21px;border-radius:50%;background:linear-gradient(#6a6a6a,#a8a8a8)"></div><div class="a" style="left:1782.4px;top:978px;width:45.0px;height:30px;background:linear-gradient(#9a9a9a,#7a7a7a 50%,#666);box-shadow:inset -1px 0 0 #4a4a4a"></div><div class="a" style="left:1794.4px;top:982.5px;width:21px;height:21px;border-radius:50%;background:linear-gradient(#6a6a6a,#a8a8a8)"></div><div class="a" style="left:1827.4px;top:978px;width:44.8px;height:30px;background:linear-gradient(#3a3a3a,#262626);box-shadow:inset -1px 0 0 #222"></div><div class="a" style="left:1839.3px;top:982.5px;width:21px;height:21px;border-radius:50%;background:linear-gradient(#2c2c2c,#3c3c3c)"></div><div class="a" style="left:1872.2px;top:978px;width:47.8px;height:30px;background:linear-gradient(#3a3a3a,#262626);box-shadow:inset -1px 0 0 #222"></div><div class="a" style="left:1885.6px;top:982.5px;width:21px;height:21px;border-radius:50%;background:linear-gradient(#2c2c2c,#3c3c3c)"></div><svg width="1920" height="1048"><path d="M1620.5 982.5l5.5 7h-11z" fill="#3a3a3a"/><rect x="1665.4" y="989" width="8.2" height="8.2" fill="#222"/><path d="M1711.8 988v10.4l8.6-5.2z" fill="#222"/><path d="M1758 988.5h-2.6v9.5h2.6M1762.4 988.5h2.6v9.5h-2.6" fill="none" stroke="#222" stroke-width="2"/><path d="M1758.3 993.3h1.4M1760.9 993.3h1.4" stroke="#222" stroke-width="1.6"/><path d="M1805 993c-1.2-2-2.4-2.8-3.6-2.8a2.8 2.8 0 0 0 0 5.6c1.2 0 2.4-.8 3.6-2.8c1.2-2 2.4-2.8 3.6-2.8a2.8 2.8 0 0 1 0 5.6c-1.2 0-2.4-.8-3.6-2.8z" fill="none" stroke="#222" stroke-width="1.5"/><path d="M1845 990.5a5.5 5.5 0 0 1 9.5 1.5M1855 995.5a5.5 5.5 0 0 1-9.5-1.5" fill="none" stroke="#151515" stroke-width="2.2"/><path d="M1856 988.5v4.5h-4.5zM1844 997.5v-4.5h4.5z" fill="#151515"/></svg><div class="a" style="left:1646px;top:1009px;width:136.4px;height:30.3px;border-radius:0 0 0 4px;background:linear-gradient(#9a9a9a,#7a7a7a 50%,#666);box-shadow:inset -1px 0 0 #4a4a4a"></div><div class="a" style="left:1782.4px;top:1009px;width:136.6px;height:30.3px;border-radius:0 0 4px 0;background:linear-gradient(#9a9a9a,#7a7a7a 50%,#666)"></div><div class="a" style="left:1666.0px;top:1013.5px;width:20px;height:20px;border-radius:50%;background:linear-gradient(#6a6a6a,#a8a8a8)"></div><div class="a" style="left:1880.0px;top:1013.5px;width:20px;height:20px;border-radius:50%;background:linear-gradient(#6a6a6a,#a8a8a8)"></div><div class="t" style="left:1670.4px;top:1013.1px;font-size:20px;color:#2a2a2a;">«</div><div class="t" style="left:1884.9px;top:1013.1px;font-size:20px;color:#2a2a2a;">»</div><div class="t" style="left:1703.6px;top:1011.8px;font-size:25px;color:#262626;letter-spacing:-1.39px;-webkit-text-stroke:0.7px #262626;">Back</div><div class="t" style="left:1810.0px;top:1011.8px;font-size:25px;color:#262626;letter-spacing:0.15px;-webkit-text-stroke:0.7px #262626;">Next</div><div class="a" style="left:0;top:1039.5px;width:1920px;height:9px;background:linear-gradient(90deg,#2a78a8,#2a86b8 40%,#3aa0c8 75%,#2e8cba)"></div><div class="a" style="left:300px;top:1041px;width:57px;height:8px;box-sizing:border-box;border:1px solid #c8dcec;background:#6a9cc0"></div><div class="a" style="left:252px;top:1044px;width:30px;height:4px;background:#0a9a1a"></div><div class="a" style="left:318px;top:1045px;width:10px;height:3px;background:#221"></div><div class="a" style="left:196px;top:1044px;width:18px;height:4px;border-radius:9px 9px 0 0;background:#4ab8e8"></div><div class="a" style="left:150px;top:1045px;width:8px;height:3px;background:#e8a040"></div><div class="a" style="left:66px;top:1045px;width:14px;height:3px;background:#e8d8a0"></div><div class="a" style="left:22px;top:1045px;width:14px;height:3px;background:#d8e8f4"></div></body></html>
